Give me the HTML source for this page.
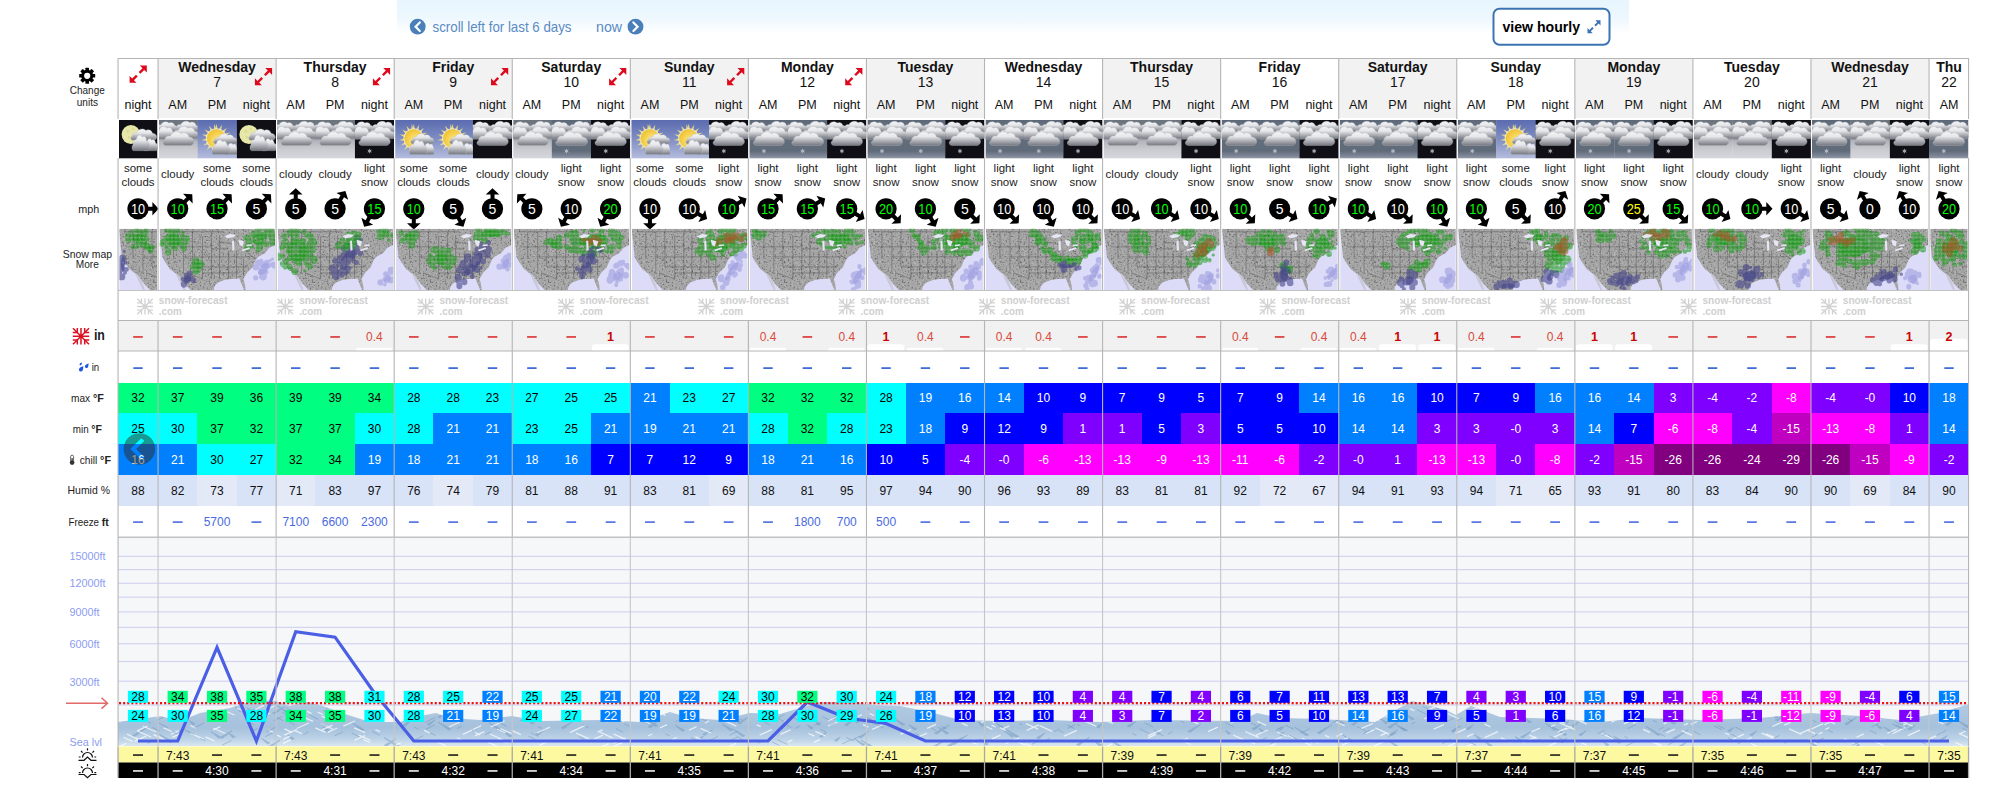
<!DOCTYPE html><html><head><meta charset="utf-8"><title>Snow forecast</title><style>html,body{margin:0;padding:0;background:#fff;}body{width:2000px;height:796px;position:relative;overflow:hidden;font-family:'Liberation Sans', sans-serif;}svg{position:absolute;left:0;top:0;display:block;}</style></head><body><svg width="2000" height="796" viewBox="0 0 2000 796" font-family="'Liberation Sans', sans-serif"><defs><linearGradient id="cg" gradientUnits="userSpaceOnUse" x1="0" y1="0" x2="0" y2="14"><stop offset="0" stop-color="#fafafc"/><stop offset="0.42" stop-color="#e6e7ea"/><stop offset="0.68" stop-color="#b2b4ba"/><stop offset="1" stop-color="#74777f"/></linearGradient><symbol id="cloud" viewBox="0 0 30 14" preserveAspectRatio="none" overflow="visible"><path fill="url(#cg)" stroke="#b9bbc0" stroke-width="0.35" d="M3.5,14 C0.8,14 0,10.5 2.6,9.2 C2.4,6.5 5,4.6 7.5,5.5 C8.8,1.5 14.5,0 17.5,3.2 C19.5,1.6 23.8,2.4 24.6,6.2 C28.4,6.4 30.2,10 28.6,12.3 C28,13.4 27,14 26,14 Z"/></symbol><linearGradient id="bg_cd" x1="0" y1="0" x2="0" y2="1"><stop offset="0" stop-color="#6b737d"/><stop offset="0.42" stop-color="#7c838c"/><stop offset="0.55" stop-color="#b3b6bd"/><stop offset="0.75" stop-color="#c8cacf"/><stop offset="1" stop-color="#d7d8dd"/></linearGradient><linearGradient id="bg_sd" x1="0" y1="0" x2="0" y2="1"><stop offset="0" stop-color="#5b6676"/><stop offset="0.12" stop-color="#64707f"/><stop offset="0.8" stop-color="#606b7a"/><stop offset="0.92" stop-color="#7a8494"/><stop offset="1" stop-color="#949ba7"/></linearGradient><linearGradient id="bg_sc" x1="0" y1="0" x2="0" y2="1"><stop offset="0" stop-color="#5a6bb0"/><stop offset="0.55" stop-color="#8592c6"/><stop offset="1" stop-color="#b5bddd"/></linearGradient><radialGradient id="sun" cx="0.62" cy="0.62" r="0.65"><stop offset="0" stop-color="#fdeb8e"/><stop offset="1" stop-color="#f0c22e"/></radialGradient><symbol id="flake" viewBox="-4 -4 8 8" overflow="visible"><g stroke="#c4c9d3" stroke-width="0.8" fill="none"><path d="M0,-3.2V3.2M-2.8,-1.6L2.8,1.6M-2.8,1.6L2.8,-1.6"/><circle r="1.6"/></g></symbol><symbol id="i_cd" viewBox="0 0 39 38" preserveAspectRatio="none"><rect width="39" height="38" fill="url(#bg_cd)"/><use href="#cloud" x="-4" y="0.5" width="24" height="11"/><use href="#cloud" x="15" y="0" width="27" height="12"/><use href="#cloud" x="-6" y="5" width="24" height="14"/><use href="#cloud" x="12" y="5" width="29" height="13.5"/><use href="#cloud" x="3" y="10" width="33" height="15"/></symbol><symbol id="i_sd" viewBox="0 0 39 38" preserveAspectRatio="none"><rect width="39" height="38" fill="url(#bg_sd)"/><use href="#cloud" x="-4" y="0.5" width="24" height="11"/><use href="#cloud" x="15" y="0" width="27" height="12"/><use href="#cloud" x="-6" y="5" width="24" height="14"/><use href="#cloud" x="12" y="5" width="29" height="13.5"/><use href="#cloud" x="3" y="10" width="33" height="15"/><use href="#flake" x="11.8" y="27.8" width="5.6" height="5.6"/></symbol><symbol id="i_sn" viewBox="0 0 39 38" preserveAspectRatio="none"><rect width="39" height="38" fill="#0f0f15"/><use href="#cloud" x="-4" y="0.5" width="24" height="11"/><use href="#cloud" x="15" y="0" width="27" height="12"/><use href="#cloud" x="-6" y="5" width="24" height="14"/><use href="#cloud" x="12" y="5" width="29" height="13.5"/><use href="#cloud" x="3" y="10" width="33" height="15"/><use href="#flake" x="11.9" y="27.8" width="5.6" height="5.6"/></symbol><symbol id="i_cn" viewBox="0 0 39 38" preserveAspectRatio="none"><rect width="39" height="38" fill="#0f0f15"/><use href="#cloud" x="-4" y="0.5" width="24" height="11"/><use href="#cloud" x="15" y="0" width="27" height="12"/><use href="#cloud" x="-6" y="5" width="24" height="14"/><use href="#cloud" x="12" y="5" width="29" height="13.5"/><use href="#cloud" x="3" y="10" width="33" height="15"/></symbol><symbol id="i_sc" viewBox="0 0 39 38" preserveAspectRatio="none"><rect width="39" height="38" fill="url(#bg_sc)"/><g fill="#f5e486" opacity="0.85"><path d="M18.60,3.70 L17.37,8.98 L19.83,8.98Z"/><path d="M24.07,4.76 L20.95,9.20 L23.23,10.12Z"/><path d="M28.74,7.80 L24.19,10.74 L25.96,12.45Z"/><path d="M31.94,12.36 L26.61,13.39 L27.61,15.63Z"/><path d="M33.19,17.79 L27.87,16.75 L27.96,19.20Z"/><path d="M32.32,23.29 L27.78,20.33 L26.94,22.64Z"/><path d="M29.45,28.07 L26.35,23.62 L24.70,25.45Z"/><path d="M25.00,31.42 L23.79,26.14 L21.58,27.21Z"/><path d="M19.62,32.86 L20.47,27.51 L18.03,27.68Z"/><path d="M14.09,32.19 L16.89,27.54 L14.55,26.78Z"/><path d="M9.22,29.48 L13.55,26.23 L11.67,24.65Z"/><path d="M5.71,25.15 L10.95,23.76 L9.80,21.59Z"/><path d="M4.08,19.83 L9.46,20.49 L9.20,18.05Z"/><path d="M4.57,14.28 L9.30,16.91 L9.98,14.55Z"/><path d="M7.10,9.31 L10.50,13.53 L12.01,11.60Z"/><path d="M11.30,5.66 L12.88,10.84 L15.00,9.62Z"/><path d="M16.57,3.84 L16.09,9.24 L18.52,8.90Z"/></g><circle cx="18.6" cy="18.3" r="10.3" fill="#fff8d0" opacity="0.75"/><circle cx="18.6" cy="18.3" r="9.3" fill="url(#sun)"/><use href="#cloud" x="15" y="12.5" width="25" height="11"/><use href="#cloud" x="26" y="21.5" width="15" height="12.5"/><use href="#cloud" x="13.5" y="18" width="19" height="16"/></symbol><symbol id="i_mc" viewBox="0 0 39 38" preserveAspectRatio="none"><rect width="39" height="38" fill="#0f0f15"/><circle cx="12.1" cy="14.3" r="9.4" fill="#e7e7a9"/><circle cx="9" cy="11" r="1.5" fill="#d9d99a"/><circle cx="14" cy="9" r="1.1" fill="#d9d99a"/><circle cx="10" cy="17" r="1.2" fill="#d9d99a"/><use href="#cloud" x="11" y="7.5" width="28" height="12.5"/><use href="#cloud" x="24" y="17" width="16" height="13.2"/><use href="#cloud" x="12.5" y="13" width="19" height="17.2"/></symbol><symbol id="warrow" viewBox="-22 -22 44 44" overflow="visible"><path d="M-2,0 V-14.4 H-6.8 L0,-20.6 L6.8,-14.4 H2 V0Z" fill="#000"/></symbol><symbol id="exp" viewBox="0 0 18 18" overflow="visible"><g fill="#dd0a1e"><path d="M18,0 L18,7.2 L15.3,4.5 L11.3,8.5 L9.5,6.7 L13.5,2.7 L10.8,0Z"/><path d="M0,18 L0,10.8 L2.7,13.5 L6.7,9.5 L8.5,11.3 L4.5,15.3 L7.2,18Z"/></g></symbol><symbol id="expb" viewBox="0 0 18 18" overflow="visible"><g fill="#3a73b3"><path d="M18,0 L18,7.2 L15.3,4.5 L11.3,8.5 L9.5,6.7 L13.5,2.7 L10.8,0Z"/><path d="M0,18 L0,10.8 L2.7,13.5 L6.7,9.5 L8.5,11.3 L4.5,15.3 L7.2,18Z"/></g></symbol><symbol id="bigflake" viewBox="-8.5 -8.5 17 17" overflow="visible"><g fill="none" stroke-width="1.4"><path d="M0,-8.2V8.2M-8.2,0H8.2M-8,-8L8,8M-8,8L8,-8"/><path d="M-8.2,-3.7H-3.7V-8.2M8.2,-3.7H3.7V-8.2M-8.2,3.7H-3.7V8.2M8.2,3.7H3.7V8.2"/></g></symbol></defs><linearGradient id="topg" x1="0" y1="0" x2="0" y2="1"><stop offset="0" stop-color="#e6f5fe"/><stop offset="0.55" stop-color="#eef8fe"/><stop offset="1" stop-color="#ffffff"/></linearGradient><rect x="397" y="0" width="1232" height="34" fill="url(#topg)"/><circle cx="417.7" cy="26.7" r="7.9" fill="#4a7fba"/><path d="M419.8,22.4 L415.6,26.7 L419.8,31" fill="none" stroke="#fff" stroke-width="2.2" stroke-linecap="round"/><text x="432.50" y="32.00" font-size="14.5" fill="#5a8bc2" text-anchor="start" font-weight="normal" textLength="139" lengthAdjust="spacingAndGlyphs">scroll left for last 6 days</text><text x="596.00" y="32.00" font-size="14.5" fill="#5a8bc2" text-anchor="start" font-weight="normal" textLength="26" lengthAdjust="spacingAndGlyphs">now</text><circle cx="635.5" cy="26.7" r="7.9" fill="#4a7fba"/><path d="M633.4,22.4 L637.6,26.7 L633.4,31" fill="none" stroke="#fff" stroke-width="2.2" stroke-linecap="round"/><rect x="1493.5" y="8.7" width="116" height="36" rx="6" fill="#fff" stroke="#3b74b2" stroke-width="2"/><text x="1502.50" y="32.40" font-size="15" fill="#000" text-anchor="start" font-weight="bold" textLength="77.5" lengthAdjust="spacingAndGlyphs">view hourly</text><use href="#expb" x="1587.5" y="20" width="13" height="13.5"/><rect x="118.00" y="58.00" width="40.00" height="60.00" fill="#ffffff" /><rect x="158.00" y="58.00" width="118.07" height="60.00" fill="#f2f2f2" /><rect x="276.07" y="58.00" width="118.07" height="60.00" fill="#ffffff" /><rect x="394.13" y="58.00" width="118.07" height="60.00" fill="#f2f2f2" /><rect x="512.20" y="58.00" width="118.07" height="60.00" fill="#ffffff" /><rect x="630.27" y="58.00" width="118.07" height="60.00" fill="#f2f2f2" /><rect x="748.33" y="58.00" width="118.07" height="60.00" fill="#ffffff" /><rect x="866.40" y="58.00" width="118.07" height="60.00" fill="#f2f2f2" /><rect x="984.47" y="58.00" width="118.07" height="60.00" fill="#ffffff" /><rect x="1102.53" y="58.00" width="118.07" height="60.00" fill="#f2f2f2" /><rect x="1220.60" y="58.00" width="118.07" height="60.00" fill="#ffffff" /><rect x="1338.67" y="58.00" width="118.07" height="60.00" fill="#f2f2f2" /><rect x="1456.73" y="58.00" width="118.07" height="60.00" fill="#ffffff" /><rect x="1574.80" y="58.00" width="118.07" height="60.00" fill="#f2f2f2" /><rect x="1692.87" y="58.00" width="118.07" height="60.00" fill="#ffffff" /><rect x="1810.93" y="58.00" width="118.07" height="60.00" fill="#f2f2f2" /><rect x="1929.00" y="58.00" width="40.00" height="60.00" fill="#ffffff" /><text x="217.03" y="72.20" font-size="14" fill="#111" text-anchor="middle" font-weight="bold" >Wednesday</text><text x="217.03" y="87.40" font-size="14" fill="#111" text-anchor="middle" font-weight="normal" >7</text><use href="#exp" x="254.9" y="68" width="17.2" height="17.2"/><text x="335.10" y="72.20" font-size="14" fill="#111" text-anchor="middle" font-weight="bold" >Thursday</text><text x="335.10" y="87.40" font-size="14" fill="#111" text-anchor="middle" font-weight="normal" >8</text><use href="#exp" x="372.9" y="68" width="17.2" height="17.2"/><text x="453.17" y="72.20" font-size="14" fill="#111" text-anchor="middle" font-weight="bold" >Friday</text><text x="453.17" y="87.40" font-size="14" fill="#111" text-anchor="middle" font-weight="normal" >9</text><use href="#exp" x="491.0" y="68" width="17.2" height="17.2"/><text x="571.23" y="72.20" font-size="14" fill="#111" text-anchor="middle" font-weight="bold" >Saturday</text><text x="571.23" y="87.40" font-size="14" fill="#111" text-anchor="middle" font-weight="normal" >10</text><use href="#exp" x="609.1" y="68" width="17.2" height="17.2"/><text x="689.30" y="72.20" font-size="14" fill="#111" text-anchor="middle" font-weight="bold" >Sunday</text><text x="689.30" y="87.40" font-size="14" fill="#111" text-anchor="middle" font-weight="normal" >11</text><use href="#exp" x="727.1" y="68" width="17.2" height="17.2"/><text x="807.37" y="72.20" font-size="14" fill="#111" text-anchor="middle" font-weight="bold" >Monday</text><text x="807.37" y="87.40" font-size="14" fill="#111" text-anchor="middle" font-weight="normal" >12</text><use href="#exp" x="845.2" y="68" width="17.2" height="17.2"/><text x="925.43" y="72.20" font-size="14" fill="#111" text-anchor="middle" font-weight="bold" >Tuesday</text><text x="925.43" y="87.40" font-size="14" fill="#111" text-anchor="middle" font-weight="normal" >13</text><text x="1043.50" y="72.20" font-size="14" fill="#111" text-anchor="middle" font-weight="bold" >Wednesday</text><text x="1043.50" y="87.40" font-size="14" fill="#111" text-anchor="middle" font-weight="normal" >14</text><text x="1161.57" y="72.20" font-size="14" fill="#111" text-anchor="middle" font-weight="bold" >Thursday</text><text x="1161.57" y="87.40" font-size="14" fill="#111" text-anchor="middle" font-weight="normal" >15</text><text x="1279.63" y="72.20" font-size="14" fill="#111" text-anchor="middle" font-weight="bold" >Friday</text><text x="1279.63" y="87.40" font-size="14" fill="#111" text-anchor="middle" font-weight="normal" >16</text><text x="1397.70" y="72.20" font-size="14" fill="#111" text-anchor="middle" font-weight="bold" >Saturday</text><text x="1397.70" y="87.40" font-size="14" fill="#111" text-anchor="middle" font-weight="normal" >17</text><text x="1515.77" y="72.20" font-size="14" fill="#111" text-anchor="middle" font-weight="bold" >Sunday</text><text x="1515.77" y="87.40" font-size="14" fill="#111" text-anchor="middle" font-weight="normal" >18</text><text x="1633.83" y="72.20" font-size="14" fill="#111" text-anchor="middle" font-weight="bold" >Monday</text><text x="1633.83" y="87.40" font-size="14" fill="#111" text-anchor="middle" font-weight="normal" >19</text><text x="1751.90" y="72.20" font-size="14" fill="#111" text-anchor="middle" font-weight="bold" >Tuesday</text><text x="1751.90" y="87.40" font-size="14" fill="#111" text-anchor="middle" font-weight="normal" >20</text><text x="1869.97" y="72.20" font-size="14" fill="#111" text-anchor="middle" font-weight="bold" >Wednesday</text><text x="1869.97" y="87.40" font-size="14" fill="#111" text-anchor="middle" font-weight="normal" >21</text><text x="1949.00" y="72.20" font-size="14" fill="#111" text-anchor="middle" font-weight="bold" >Thu</text><text x="1949.00" y="87.40" font-size="14" fill="#111" text-anchor="middle" font-weight="normal" >22</text><use href="#exp" x="129.6" y="65.6" width="17.2" height="17.2"/><text x="138.00" y="109.10" font-size="12.5" fill="#111" text-anchor="middle" font-weight="normal" >night</text><text x="177.68" y="109.10" font-size="12.5" fill="#111" text-anchor="middle" font-weight="normal" >AM</text><text x="217.03" y="109.10" font-size="12.5" fill="#111" text-anchor="middle" font-weight="normal" >PM</text><text x="256.39" y="109.10" font-size="12.5" fill="#111" text-anchor="middle" font-weight="normal" >night</text><text x="295.74" y="109.10" font-size="12.5" fill="#111" text-anchor="middle" font-weight="normal" >AM</text><text x="335.10" y="109.10" font-size="12.5" fill="#111" text-anchor="middle" font-weight="normal" >PM</text><text x="374.46" y="109.10" font-size="12.5" fill="#111" text-anchor="middle" font-weight="normal" >night</text><text x="413.81" y="109.10" font-size="12.5" fill="#111" text-anchor="middle" font-weight="normal" >AM</text><text x="453.17" y="109.10" font-size="12.5" fill="#111" text-anchor="middle" font-weight="normal" >PM</text><text x="492.52" y="109.10" font-size="12.5" fill="#111" text-anchor="middle" font-weight="normal" >night</text><text x="531.88" y="109.10" font-size="12.5" fill="#111" text-anchor="middle" font-weight="normal" >AM</text><text x="571.23" y="109.10" font-size="12.5" fill="#111" text-anchor="middle" font-weight="normal" >PM</text><text x="610.59" y="109.10" font-size="12.5" fill="#111" text-anchor="middle" font-weight="normal" >night</text><text x="649.94" y="109.10" font-size="12.5" fill="#111" text-anchor="middle" font-weight="normal" >AM</text><text x="689.30" y="109.10" font-size="12.5" fill="#111" text-anchor="middle" font-weight="normal" >PM</text><text x="728.66" y="109.10" font-size="12.5" fill="#111" text-anchor="middle" font-weight="normal" >night</text><text x="768.01" y="109.10" font-size="12.5" fill="#111" text-anchor="middle" font-weight="normal" >AM</text><text x="807.37" y="109.10" font-size="12.5" fill="#111" text-anchor="middle" font-weight="normal" >PM</text><text x="846.72" y="109.10" font-size="12.5" fill="#111" text-anchor="middle" font-weight="normal" >night</text><text x="886.08" y="109.10" font-size="12.5" fill="#111" text-anchor="middle" font-weight="normal" >AM</text><text x="925.43" y="109.10" font-size="12.5" fill="#111" text-anchor="middle" font-weight="normal" >PM</text><text x="964.79" y="109.10" font-size="12.5" fill="#111" text-anchor="middle" font-weight="normal" >night</text><text x="1004.14" y="109.10" font-size="12.5" fill="#111" text-anchor="middle" font-weight="normal" >AM</text><text x="1043.50" y="109.10" font-size="12.5" fill="#111" text-anchor="middle" font-weight="normal" >PM</text><text x="1082.86" y="109.10" font-size="12.5" fill="#111" text-anchor="middle" font-weight="normal" >night</text><text x="1122.21" y="109.10" font-size="12.5" fill="#111" text-anchor="middle" font-weight="normal" >AM</text><text x="1161.57" y="109.10" font-size="12.5" fill="#111" text-anchor="middle" font-weight="normal" >PM</text><text x="1200.92" y="109.10" font-size="12.5" fill="#111" text-anchor="middle" font-weight="normal" >night</text><text x="1240.28" y="109.10" font-size="12.5" fill="#111" text-anchor="middle" font-weight="normal" >AM</text><text x="1279.63" y="109.10" font-size="12.5" fill="#111" text-anchor="middle" font-weight="normal" >PM</text><text x="1318.99" y="109.10" font-size="12.5" fill="#111" text-anchor="middle" font-weight="normal" >night</text><text x="1358.34" y="109.10" font-size="12.5" fill="#111" text-anchor="middle" font-weight="normal" >AM</text><text x="1397.70" y="109.10" font-size="12.5" fill="#111" text-anchor="middle" font-weight="normal" >PM</text><text x="1437.06" y="109.10" font-size="12.5" fill="#111" text-anchor="middle" font-weight="normal" >night</text><text x="1476.41" y="109.10" font-size="12.5" fill="#111" text-anchor="middle" font-weight="normal" >AM</text><text x="1515.77" y="109.10" font-size="12.5" fill="#111" text-anchor="middle" font-weight="normal" >PM</text><text x="1555.12" y="109.10" font-size="12.5" fill="#111" text-anchor="middle" font-weight="normal" >night</text><text x="1594.48" y="109.10" font-size="12.5" fill="#111" text-anchor="middle" font-weight="normal" >AM</text><text x="1633.83" y="109.10" font-size="12.5" fill="#111" text-anchor="middle" font-weight="normal" >PM</text><text x="1673.19" y="109.10" font-size="12.5" fill="#111" text-anchor="middle" font-weight="normal" >night</text><text x="1712.54" y="109.10" font-size="12.5" fill="#111" text-anchor="middle" font-weight="normal" >AM</text><text x="1751.90" y="109.10" font-size="12.5" fill="#111" text-anchor="middle" font-weight="normal" >PM</text><text x="1791.26" y="109.10" font-size="12.5" fill="#111" text-anchor="middle" font-weight="normal" >night</text><text x="1830.61" y="109.10" font-size="12.5" fill="#111" text-anchor="middle" font-weight="normal" >AM</text><text x="1869.97" y="109.10" font-size="12.5" fill="#111" text-anchor="middle" font-weight="normal" >PM</text><text x="1909.32" y="109.10" font-size="12.5" fill="#111" text-anchor="middle" font-weight="normal" >night</text><text x="1949.00" y="109.10" font-size="12.5" fill="#111" text-anchor="middle" font-weight="normal" >AM</text><rect x="118" y="118" width="1851" height="2" fill="#fff"/><use href="#i_mc" x="119.00" y="120" width="38.50" height="38.6"/><use href="#i_cd" x="159.00" y="120" width="38.96" height="38.6"/><use href="#i_sc" x="197.36" y="120" width="39.96" height="38.6"/><use href="#i_mc" x="236.71" y="120" width="39.36" height="38.6"/><use href="#i_cd" x="277.07" y="120" width="38.96" height="38.6"/><use href="#i_cd" x="315.42" y="120" width="39.96" height="38.6"/><use href="#i_sn" x="354.78" y="120" width="39.36" height="38.6"/><use href="#i_sc" x="395.13" y="120" width="38.96" height="38.6"/><use href="#i_sc" x="433.49" y="120" width="39.96" height="38.6"/><use href="#i_cn" x="472.84" y="120" width="39.36" height="38.6"/><use href="#i_cd" x="513.20" y="120" width="38.96" height="38.6"/><use href="#i_sd" x="551.56" y="120" width="39.96" height="38.6"/><use href="#i_sn" x="590.91" y="120" width="39.36" height="38.6"/><use href="#i_sc" x="631.27" y="120" width="38.96" height="38.6"/><use href="#i_sc" x="669.62" y="120" width="39.96" height="38.6"/><use href="#i_sn" x="708.98" y="120" width="39.36" height="38.6"/><use href="#i_sd" x="749.33" y="120" width="38.96" height="38.6"/><use href="#i_sd" x="787.69" y="120" width="39.96" height="38.6"/><use href="#i_sn" x="827.04" y="120" width="39.36" height="38.6"/><use href="#i_sd" x="867.40" y="120" width="38.96" height="38.6"/><use href="#i_sd" x="905.76" y="120" width="39.96" height="38.6"/><use href="#i_sn" x="945.11" y="120" width="39.36" height="38.6"/><use href="#i_sd" x="985.47" y="120" width="38.96" height="38.6"/><use href="#i_sd" x="1023.82" y="120" width="39.96" height="38.6"/><use href="#i_sn" x="1063.18" y="120" width="39.36" height="38.6"/><use href="#i_cd" x="1103.53" y="120" width="38.96" height="38.6"/><use href="#i_cd" x="1141.89" y="120" width="39.96" height="38.6"/><use href="#i_sn" x="1181.24" y="120" width="39.36" height="38.6"/><use href="#i_sd" x="1221.60" y="120" width="38.96" height="38.6"/><use href="#i_sd" x="1259.96" y="120" width="39.96" height="38.6"/><use href="#i_sn" x="1299.31" y="120" width="39.36" height="38.6"/><use href="#i_sd" x="1339.67" y="120" width="38.96" height="38.6"/><use href="#i_sd" x="1378.02" y="120" width="39.96" height="38.6"/><use href="#i_sn" x="1417.38" y="120" width="39.36" height="38.6"/><use href="#i_sd" x="1457.73" y="120" width="38.96" height="38.6"/><use href="#i_sc" x="1496.09" y="120" width="39.96" height="38.6"/><use href="#i_sn" x="1535.44" y="120" width="39.36" height="38.6"/><use href="#i_sd" x="1575.80" y="120" width="38.96" height="38.6"/><use href="#i_sd" x="1614.16" y="120" width="39.96" height="38.6"/><use href="#i_sn" x="1653.51" y="120" width="39.36" height="38.6"/><use href="#i_cd" x="1693.87" y="120" width="38.96" height="38.6"/><use href="#i_cd" x="1732.22" y="120" width="39.96" height="38.6"/><use href="#i_sn" x="1771.58" y="120" width="39.36" height="38.6"/><use href="#i_sd" x="1811.93" y="120" width="38.96" height="38.6"/><use href="#i_cd" x="1850.29" y="120" width="39.96" height="38.6"/><use href="#i_sn" x="1889.64" y="120" width="39.36" height="38.6"/><use href="#i_sd" x="1929.00" y="120" width="39.50" height="38.6"/><text x="138.00" y="171.80" font-size="11.5" fill="#222" text-anchor="middle" font-weight="normal" >some</text><text x="138.00" y="185.50" font-size="11.5" fill="#222" text-anchor="middle" font-weight="normal" >clouds</text><text x="177.68" y="177.90" font-size="11.5" fill="#222" text-anchor="middle" font-weight="normal" >cloudy</text><text x="217.03" y="171.80" font-size="11.5" fill="#222" text-anchor="middle" font-weight="normal" >some</text><text x="217.03" y="185.50" font-size="11.5" fill="#222" text-anchor="middle" font-weight="normal" >clouds</text><text x="256.39" y="171.80" font-size="11.5" fill="#222" text-anchor="middle" font-weight="normal" >some</text><text x="256.39" y="185.50" font-size="11.5" fill="#222" text-anchor="middle" font-weight="normal" >clouds</text><text x="295.74" y="177.90" font-size="11.5" fill="#222" text-anchor="middle" font-weight="normal" >cloudy</text><text x="335.10" y="177.90" font-size="11.5" fill="#222" text-anchor="middle" font-weight="normal" >cloudy</text><text x="374.46" y="171.80" font-size="11.5" fill="#222" text-anchor="middle" font-weight="normal" >light</text><text x="374.46" y="185.50" font-size="11.5" fill="#222" text-anchor="middle" font-weight="normal" >snow</text><text x="413.81" y="171.80" font-size="11.5" fill="#222" text-anchor="middle" font-weight="normal" >some</text><text x="413.81" y="185.50" font-size="11.5" fill="#222" text-anchor="middle" font-weight="normal" >clouds</text><text x="453.17" y="171.80" font-size="11.5" fill="#222" text-anchor="middle" font-weight="normal" >some</text><text x="453.17" y="185.50" font-size="11.5" fill="#222" text-anchor="middle" font-weight="normal" >clouds</text><text x="492.52" y="177.90" font-size="11.5" fill="#222" text-anchor="middle" font-weight="normal" >cloudy</text><text x="531.88" y="177.90" font-size="11.5" fill="#222" text-anchor="middle" font-weight="normal" >cloudy</text><text x="571.23" y="171.80" font-size="11.5" fill="#222" text-anchor="middle" font-weight="normal" >light</text><text x="571.23" y="185.50" font-size="11.5" fill="#222" text-anchor="middle" font-weight="normal" >snow</text><text x="610.59" y="171.80" font-size="11.5" fill="#222" text-anchor="middle" font-weight="normal" >light</text><text x="610.59" y="185.50" font-size="11.5" fill="#222" text-anchor="middle" font-weight="normal" >snow</text><text x="649.94" y="171.80" font-size="11.5" fill="#222" text-anchor="middle" font-weight="normal" >some</text><text x="649.94" y="185.50" font-size="11.5" fill="#222" text-anchor="middle" font-weight="normal" >clouds</text><text x="689.30" y="171.80" font-size="11.5" fill="#222" text-anchor="middle" font-weight="normal" >some</text><text x="689.30" y="185.50" font-size="11.5" fill="#222" text-anchor="middle" font-weight="normal" >clouds</text><text x="728.66" y="171.80" font-size="11.5" fill="#222" text-anchor="middle" font-weight="normal" >light</text><text x="728.66" y="185.50" font-size="11.5" fill="#222" text-anchor="middle" font-weight="normal" >snow</text><text x="768.01" y="171.80" font-size="11.5" fill="#222" text-anchor="middle" font-weight="normal" >light</text><text x="768.01" y="185.50" font-size="11.5" fill="#222" text-anchor="middle" font-weight="normal" >snow</text><text x="807.37" y="171.80" font-size="11.5" fill="#222" text-anchor="middle" font-weight="normal" >light</text><text x="807.37" y="185.50" font-size="11.5" fill="#222" text-anchor="middle" font-weight="normal" >snow</text><text x="846.72" y="171.80" font-size="11.5" fill="#222" text-anchor="middle" font-weight="normal" >light</text><text x="846.72" y="185.50" font-size="11.5" fill="#222" text-anchor="middle" font-weight="normal" >snow</text><text x="886.08" y="171.80" font-size="11.5" fill="#222" text-anchor="middle" font-weight="normal" >light</text><text x="886.08" y="185.50" font-size="11.5" fill="#222" text-anchor="middle" font-weight="normal" >snow</text><text x="925.43" y="171.80" font-size="11.5" fill="#222" text-anchor="middle" font-weight="normal" >light</text><text x="925.43" y="185.50" font-size="11.5" fill="#222" text-anchor="middle" font-weight="normal" >snow</text><text x="964.79" y="171.80" font-size="11.5" fill="#222" text-anchor="middle" font-weight="normal" >light</text><text x="964.79" y="185.50" font-size="11.5" fill="#222" text-anchor="middle" font-weight="normal" >snow</text><text x="1004.14" y="171.80" font-size="11.5" fill="#222" text-anchor="middle" font-weight="normal" >light</text><text x="1004.14" y="185.50" font-size="11.5" fill="#222" text-anchor="middle" font-weight="normal" >snow</text><text x="1043.50" y="171.80" font-size="11.5" fill="#222" text-anchor="middle" font-weight="normal" >light</text><text x="1043.50" y="185.50" font-size="11.5" fill="#222" text-anchor="middle" font-weight="normal" >snow</text><text x="1082.86" y="171.80" font-size="11.5" fill="#222" text-anchor="middle" font-weight="normal" >light</text><text x="1082.86" y="185.50" font-size="11.5" fill="#222" text-anchor="middle" font-weight="normal" >snow</text><text x="1122.21" y="177.90" font-size="11.5" fill="#222" text-anchor="middle" font-weight="normal" >cloudy</text><text x="1161.57" y="177.90" font-size="11.5" fill="#222" text-anchor="middle" font-weight="normal" >cloudy</text><text x="1200.92" y="171.80" font-size="11.5" fill="#222" text-anchor="middle" font-weight="normal" >light</text><text x="1200.92" y="185.50" font-size="11.5" fill="#222" text-anchor="middle" font-weight="normal" >snow</text><text x="1240.28" y="171.80" font-size="11.5" fill="#222" text-anchor="middle" font-weight="normal" >light</text><text x="1240.28" y="185.50" font-size="11.5" fill="#222" text-anchor="middle" font-weight="normal" >snow</text><text x="1279.63" y="171.80" font-size="11.5" fill="#222" text-anchor="middle" font-weight="normal" >light</text><text x="1279.63" y="185.50" font-size="11.5" fill="#222" text-anchor="middle" font-weight="normal" >snow</text><text x="1318.99" y="171.80" font-size="11.5" fill="#222" text-anchor="middle" font-weight="normal" >light</text><text x="1318.99" y="185.50" font-size="11.5" fill="#222" text-anchor="middle" font-weight="normal" >snow</text><text x="1358.34" y="171.80" font-size="11.5" fill="#222" text-anchor="middle" font-weight="normal" >light</text><text x="1358.34" y="185.50" font-size="11.5" fill="#222" text-anchor="middle" font-weight="normal" >snow</text><text x="1397.70" y="171.80" font-size="11.5" fill="#222" text-anchor="middle" font-weight="normal" >light</text><text x="1397.70" y="185.50" font-size="11.5" fill="#222" text-anchor="middle" font-weight="normal" >snow</text><text x="1437.06" y="171.80" font-size="11.5" fill="#222" text-anchor="middle" font-weight="normal" >light</text><text x="1437.06" y="185.50" font-size="11.5" fill="#222" text-anchor="middle" font-weight="normal" >snow</text><text x="1476.41" y="171.80" font-size="11.5" fill="#222" text-anchor="middle" font-weight="normal" >light</text><text x="1476.41" y="185.50" font-size="11.5" fill="#222" text-anchor="middle" font-weight="normal" >snow</text><text x="1515.77" y="171.80" font-size="11.5" fill="#222" text-anchor="middle" font-weight="normal" >some</text><text x="1515.77" y="185.50" font-size="11.5" fill="#222" text-anchor="middle" font-weight="normal" >clouds</text><text x="1555.12" y="171.80" font-size="11.5" fill="#222" text-anchor="middle" font-weight="normal" >light</text><text x="1555.12" y="185.50" font-size="11.5" fill="#222" text-anchor="middle" font-weight="normal" >snow</text><text x="1594.48" y="171.80" font-size="11.5" fill="#222" text-anchor="middle" font-weight="normal" >light</text><text x="1594.48" y="185.50" font-size="11.5" fill="#222" text-anchor="middle" font-weight="normal" >snow</text><text x="1633.83" y="171.80" font-size="11.5" fill="#222" text-anchor="middle" font-weight="normal" >light</text><text x="1633.83" y="185.50" font-size="11.5" fill="#222" text-anchor="middle" font-weight="normal" >snow</text><text x="1673.19" y="171.80" font-size="11.5" fill="#222" text-anchor="middle" font-weight="normal" >light</text><text x="1673.19" y="185.50" font-size="11.5" fill="#222" text-anchor="middle" font-weight="normal" >snow</text><text x="1712.54" y="177.90" font-size="11.5" fill="#222" text-anchor="middle" font-weight="normal" >cloudy</text><text x="1751.90" y="177.90" font-size="11.5" fill="#222" text-anchor="middle" font-weight="normal" >cloudy</text><text x="1791.26" y="171.80" font-size="11.5" fill="#222" text-anchor="middle" font-weight="normal" >light</text><text x="1791.26" y="185.50" font-size="11.5" fill="#222" text-anchor="middle" font-weight="normal" >snow</text><text x="1830.61" y="171.80" font-size="11.5" fill="#222" text-anchor="middle" font-weight="normal" >light</text><text x="1830.61" y="185.50" font-size="11.5" fill="#222" text-anchor="middle" font-weight="normal" >snow</text><text x="1869.97" y="177.90" font-size="11.5" fill="#222" text-anchor="middle" font-weight="normal" >cloudy</text><text x="1909.32" y="171.80" font-size="11.5" fill="#222" text-anchor="middle" font-weight="normal" >light</text><text x="1909.32" y="185.50" font-size="11.5" fill="#222" text-anchor="middle" font-weight="normal" >snow</text><text x="1949.00" y="171.80" font-size="11.5" fill="#222" text-anchor="middle" font-weight="normal" >light</text><text x="1949.00" y="185.50" font-size="11.5" fill="#222" text-anchor="middle" font-weight="normal" >snow</text><use href="#warrow" x="116.00" y="186.80" width="44" height="44" transform="rotate(90 138.00 208.80)"/><circle cx="138.00" cy="208.80" r="10.6" fill="#000"/><text x="138.00" y="213.80" font-size="14" fill="#ffffff" text-anchor="middle" font-weight="normal" textLength="14.2" lengthAdjust="spacingAndGlyphs">10</text><use href="#warrow" x="155.68" y="186.80" width="44" height="44" transform="rotate(45 177.68 208.80)"/><circle cx="177.68" cy="208.80" r="10.6" fill="#000"/><text x="177.68" y="213.80" font-size="14" fill="#00ff00" text-anchor="middle" font-weight="normal" textLength="14.2" lengthAdjust="spacingAndGlyphs">10</text><use href="#warrow" x="195.03" y="186.80" width="44" height="44" transform="rotate(45 217.03 208.80)"/><circle cx="217.03" cy="208.80" r="10.6" fill="#000"/><text x="217.03" y="213.80" font-size="14" fill="#00ff00" text-anchor="middle" font-weight="normal" textLength="14.2" lengthAdjust="spacingAndGlyphs">15</text><use href="#warrow" x="234.39" y="186.80" width="44" height="44" transform="rotate(45 256.39 208.80)"/><circle cx="256.39" cy="208.80" r="10.6" fill="#000"/><text x="256.39" y="213.80" font-size="14" fill="#ffffff" text-anchor="middle" font-weight="normal" >5</text><use href="#warrow" x="273.74" y="186.80" width="44" height="44" transform="rotate(0 295.74 208.80)"/><circle cx="295.74" cy="208.80" r="10.6" fill="#000"/><text x="295.74" y="213.80" font-size="14" fill="#ffffff" text-anchor="middle" font-weight="normal" >5</text><use href="#warrow" x="313.10" y="186.80" width="44" height="44" transform="rotate(30 335.10 208.80)"/><circle cx="335.10" cy="208.80" r="10.6" fill="#000"/><text x="335.10" y="213.80" font-size="14" fill="#ffffff" text-anchor="middle" font-weight="normal" >5</text><use href="#warrow" x="352.46" y="186.80" width="44" height="44" transform="rotate(210 374.46 208.80)"/><circle cx="374.46" cy="208.80" r="10.6" fill="#000"/><text x="374.46" y="213.80" font-size="14" fill="#00ff00" text-anchor="middle" font-weight="normal" textLength="14.2" lengthAdjust="spacingAndGlyphs">15</text><use href="#warrow" x="391.81" y="186.80" width="44" height="44" transform="rotate(180 413.81 208.80)"/><circle cx="413.81" cy="208.80" r="10.6" fill="#000"/><text x="413.81" y="213.80" font-size="14" fill="#00ff00" text-anchor="middle" font-weight="normal" textLength="14.2" lengthAdjust="spacingAndGlyphs">10</text><use href="#warrow" x="431.17" y="186.80" width="44" height="44" transform="rotate(150 453.17 208.80)"/><circle cx="453.17" cy="208.80" r="10.6" fill="#000"/><text x="453.17" y="213.80" font-size="14" fill="#ffffff" text-anchor="middle" font-weight="normal" >5</text><use href="#warrow" x="470.52" y="186.80" width="44" height="44" transform="rotate(0 492.52 208.80)"/><circle cx="492.52" cy="208.80" r="10.6" fill="#000"/><text x="492.52" y="213.80" font-size="14" fill="#ffffff" text-anchor="middle" font-weight="normal" >5</text><use href="#warrow" x="509.88" y="186.80" width="44" height="44" transform="rotate(315 531.88 208.80)"/><circle cx="531.88" cy="208.80" r="10.6" fill="#000"/><text x="531.88" y="213.80" font-size="14" fill="#ffffff" text-anchor="middle" font-weight="normal" >5</text><use href="#warrow" x="549.23" y="186.80" width="44" height="44" transform="rotate(210 571.23 208.80)"/><circle cx="571.23" cy="208.80" r="10.6" fill="#000"/><text x="571.23" y="213.80" font-size="14" fill="#ffffff" text-anchor="middle" font-weight="normal" textLength="14.2" lengthAdjust="spacingAndGlyphs">10</text><use href="#warrow" x="588.59" y="186.80" width="44" height="44" transform="rotate(210 610.59 208.80)"/><circle cx="610.59" cy="208.80" r="10.6" fill="#000"/><text x="610.59" y="213.80" font-size="14" fill="#00ff00" text-anchor="middle" font-weight="normal" textLength="14.2" lengthAdjust="spacingAndGlyphs">20</text><use href="#warrow" x="627.94" y="186.80" width="44" height="44" transform="rotate(180 649.94 208.80)"/><circle cx="649.94" cy="208.80" r="10.6" fill="#000"/><text x="649.94" y="213.80" font-size="14" fill="#ffffff" text-anchor="middle" font-weight="normal" textLength="14.2" lengthAdjust="spacingAndGlyphs">10</text><use href="#warrow" x="667.30" y="186.80" width="44" height="44" transform="rotate(120 689.30 208.80)"/><circle cx="689.30" cy="208.80" r="10.6" fill="#000"/><text x="689.30" y="213.80" font-size="14" fill="#ffffff" text-anchor="middle" font-weight="normal" textLength="14.2" lengthAdjust="spacingAndGlyphs">10</text><use href="#warrow" x="706.66" y="186.80" width="44" height="44" transform="rotate(60 728.66 208.80)"/><circle cx="728.66" cy="208.80" r="10.6" fill="#000"/><text x="728.66" y="213.80" font-size="14" fill="#00ff00" text-anchor="middle" font-weight="normal" textLength="14.2" lengthAdjust="spacingAndGlyphs">10</text><use href="#warrow" x="746.01" y="186.80" width="44" height="44" transform="rotate(45 768.01 208.80)"/><circle cx="768.01" cy="208.80" r="10.6" fill="#000"/><text x="768.01" y="213.80" font-size="14" fill="#00ff00" text-anchor="middle" font-weight="normal" textLength="14.2" lengthAdjust="spacingAndGlyphs">15</text><use href="#warrow" x="785.37" y="186.80" width="44" height="44" transform="rotate(60 807.37 208.80)"/><circle cx="807.37" cy="208.80" r="10.6" fill="#000"/><text x="807.37" y="213.80" font-size="14" fill="#00ff00" text-anchor="middle" font-weight="normal" textLength="14.2" lengthAdjust="spacingAndGlyphs">15</text><use href="#warrow" x="824.72" y="186.80" width="44" height="44" transform="rotate(120 846.72 208.80)"/><circle cx="846.72" cy="208.80" r="10.6" fill="#000"/><text x="846.72" y="213.80" font-size="14" fill="#00ff00" text-anchor="middle" font-weight="normal" textLength="14.2" lengthAdjust="spacingAndGlyphs">15</text><use href="#warrow" x="864.08" y="186.80" width="44" height="44" transform="rotate(135 886.08 208.80)"/><circle cx="886.08" cy="208.80" r="10.6" fill="#000"/><text x="886.08" y="213.80" font-size="14" fill="#00ff00" text-anchor="middle" font-weight="normal" textLength="14.2" lengthAdjust="spacingAndGlyphs">20</text><use href="#warrow" x="903.43" y="186.80" width="44" height="44" transform="rotate(150 925.43 208.80)"/><circle cx="925.43" cy="208.80" r="10.6" fill="#000"/><text x="925.43" y="213.80" font-size="14" fill="#00ff00" text-anchor="middle" font-weight="normal" textLength="14.2" lengthAdjust="spacingAndGlyphs">10</text><use href="#warrow" x="942.79" y="186.80" width="44" height="44" transform="rotate(135 964.79 208.80)"/><circle cx="964.79" cy="208.80" r="10.6" fill="#000"/><text x="964.79" y="213.80" font-size="14" fill="#ffffff" text-anchor="middle" font-weight="normal" >5</text><use href="#warrow" x="982.14" y="186.80" width="44" height="44" transform="rotate(135 1004.14 208.80)"/><circle cx="1004.14" cy="208.80" r="10.6" fill="#000"/><text x="1004.14" y="213.80" font-size="14" fill="#ffffff" text-anchor="middle" font-weight="normal" textLength="14.2" lengthAdjust="spacingAndGlyphs">10</text><use href="#warrow" x="1021.50" y="186.80" width="44" height="44" transform="rotate(150 1043.50 208.80)"/><circle cx="1043.50" cy="208.80" r="10.6" fill="#000"/><text x="1043.50" y="213.80" font-size="14" fill="#ffffff" text-anchor="middle" font-weight="normal" textLength="14.2" lengthAdjust="spacingAndGlyphs">10</text><use href="#warrow" x="1060.86" y="186.80" width="44" height="44" transform="rotate(135 1082.86 208.80)"/><circle cx="1082.86" cy="208.80" r="10.6" fill="#000"/><text x="1082.86" y="213.80" font-size="14" fill="#ffffff" text-anchor="middle" font-weight="normal" textLength="14.2" lengthAdjust="spacingAndGlyphs">10</text><use href="#warrow" x="1100.21" y="186.80" width="44" height="44" transform="rotate(120 1122.21 208.80)"/><circle cx="1122.21" cy="208.80" r="10.6" fill="#000"/><text x="1122.21" y="213.80" font-size="14" fill="#ffffff" text-anchor="middle" font-weight="normal" textLength="14.2" lengthAdjust="spacingAndGlyphs">10</text><use href="#warrow" x="1139.57" y="186.80" width="44" height="44" transform="rotate(120 1161.57 208.80)"/><circle cx="1161.57" cy="208.80" r="10.6" fill="#000"/><text x="1161.57" y="213.80" font-size="14" fill="#00ff00" text-anchor="middle" font-weight="normal" textLength="14.2" lengthAdjust="spacingAndGlyphs">10</text><use href="#warrow" x="1178.92" y="186.80" width="44" height="44" transform="rotate(120 1200.92 208.80)"/><circle cx="1200.92" cy="208.80" r="10.6" fill="#000"/><text x="1200.92" y="213.80" font-size="14" fill="#ffffff" text-anchor="middle" font-weight="normal" textLength="14.2" lengthAdjust="spacingAndGlyphs">10</text><use href="#warrow" x="1218.28" y="186.80" width="44" height="44" transform="rotate(135 1240.28 208.80)"/><circle cx="1240.28" cy="208.80" r="10.6" fill="#000"/><text x="1240.28" y="213.80" font-size="14" fill="#00ff00" text-anchor="middle" font-weight="normal" textLength="14.2" lengthAdjust="spacingAndGlyphs">10</text><use href="#warrow" x="1257.63" y="186.80" width="44" height="44" transform="rotate(120 1279.63 208.80)"/><circle cx="1279.63" cy="208.80" r="10.6" fill="#000"/><text x="1279.63" y="213.80" font-size="14" fill="#ffffff" text-anchor="middle" font-weight="normal" >5</text><use href="#warrow" x="1296.99" y="186.80" width="44" height="44" transform="rotate(60 1318.99 208.80)"/><circle cx="1318.99" cy="208.80" r="10.6" fill="#000"/><text x="1318.99" y="213.80" font-size="14" fill="#00ff00" text-anchor="middle" font-weight="normal" textLength="14.2" lengthAdjust="spacingAndGlyphs">10</text><use href="#warrow" x="1336.34" y="186.80" width="44" height="44" transform="rotate(120 1358.34 208.80)"/><circle cx="1358.34" cy="208.80" r="10.6" fill="#000"/><text x="1358.34" y="213.80" font-size="14" fill="#00ff00" text-anchor="middle" font-weight="normal" textLength="14.2" lengthAdjust="spacingAndGlyphs">10</text><use href="#warrow" x="1375.70" y="186.80" width="44" height="44" transform="rotate(135 1397.70 208.80)"/><circle cx="1397.70" cy="208.80" r="10.6" fill="#000"/><text x="1397.70" y="213.80" font-size="14" fill="#ffffff" text-anchor="middle" font-weight="normal" textLength="14.2" lengthAdjust="spacingAndGlyphs">10</text><use href="#warrow" x="1415.06" y="186.80" width="44" height="44" transform="rotate(150 1437.06 208.80)"/><circle cx="1437.06" cy="208.80" r="10.6" fill="#000"/><text x="1437.06" y="213.80" font-size="14" fill="#00ff00" text-anchor="middle" font-weight="normal" textLength="14.2" lengthAdjust="spacingAndGlyphs">10</text><use href="#warrow" x="1454.41" y="186.80" width="44" height="44" transform="rotate(150 1476.41 208.80)"/><circle cx="1476.41" cy="208.80" r="10.6" fill="#000"/><text x="1476.41" y="213.80" font-size="14" fill="#00ff00" text-anchor="middle" font-weight="normal" textLength="14.2" lengthAdjust="spacingAndGlyphs">10</text><use href="#warrow" x="1493.77" y="186.80" width="44" height="44" transform="rotate(135 1515.77 208.80)"/><circle cx="1515.77" cy="208.80" r="10.6" fill="#000"/><text x="1515.77" y="213.80" font-size="14" fill="#ffffff" text-anchor="middle" font-weight="normal" >5</text><use href="#warrow" x="1533.12" y="186.80" width="44" height="44" transform="rotate(30 1555.12 208.80)"/><circle cx="1555.12" cy="208.80" r="10.6" fill="#000"/><text x="1555.12" y="213.80" font-size="14" fill="#ffffff" text-anchor="middle" font-weight="normal" textLength="14.2" lengthAdjust="spacingAndGlyphs">10</text><use href="#warrow" x="1572.48" y="186.80" width="44" height="44" transform="rotate(45 1594.48 208.80)"/><circle cx="1594.48" cy="208.80" r="10.6" fill="#000"/><text x="1594.48" y="213.80" font-size="14" fill="#00ff00" text-anchor="middle" font-weight="normal" textLength="14.2" lengthAdjust="spacingAndGlyphs">20</text><use href="#warrow" x="1611.83" y="186.80" width="44" height="44" transform="rotate(135 1633.83 208.80)"/><circle cx="1633.83" cy="208.80" r="10.6" fill="#000"/><text x="1633.83" y="213.80" font-size="14" fill="#ffff00" text-anchor="middle" font-weight="normal" textLength="14.2" lengthAdjust="spacingAndGlyphs">25</text><use href="#warrow" x="1651.19" y="186.80" width="44" height="44" transform="rotate(135 1673.19 208.80)"/><circle cx="1673.19" cy="208.80" r="10.6" fill="#000"/><text x="1673.19" y="213.80" font-size="14" fill="#00ff00" text-anchor="middle" font-weight="normal" textLength="14.2" lengthAdjust="spacingAndGlyphs">15</text><use href="#warrow" x="1690.54" y="186.80" width="44" height="44" transform="rotate(120 1712.54 208.80)"/><circle cx="1712.54" cy="208.80" r="10.6" fill="#000"/><text x="1712.54" y="213.80" font-size="14" fill="#00ff00" text-anchor="middle" font-weight="normal" textLength="14.2" lengthAdjust="spacingAndGlyphs">10</text><use href="#warrow" x="1729.90" y="186.80" width="44" height="44" transform="rotate(90 1751.90 208.80)"/><circle cx="1751.90" cy="208.80" r="10.6" fill="#000"/><text x="1751.90" y="213.80" font-size="14" fill="#00ff00" text-anchor="middle" font-weight="normal" textLength="14.2" lengthAdjust="spacingAndGlyphs">10</text><use href="#warrow" x="1769.26" y="186.80" width="44" height="44" transform="rotate(120 1791.26 208.80)"/><circle cx="1791.26" cy="208.80" r="10.6" fill="#000"/><text x="1791.26" y="213.80" font-size="14" fill="#ffffff" text-anchor="middle" font-weight="normal" textLength="14.2" lengthAdjust="spacingAndGlyphs">10</text><use href="#warrow" x="1808.61" y="186.80" width="44" height="44" transform="rotate(120 1830.61 208.80)"/><circle cx="1830.61" cy="208.80" r="10.6" fill="#000"/><text x="1830.61" y="213.80" font-size="14" fill="#ffffff" text-anchor="middle" font-weight="normal" >5</text><use href="#warrow" x="1847.97" y="186.80" width="44" height="44" transform="rotate(330 1869.97 208.80)"/><circle cx="1869.97" cy="208.80" r="10.6" fill="#000"/><text x="1869.97" y="213.80" font-size="14" fill="#ffffff" text-anchor="middle" font-weight="normal" >0</text><use href="#warrow" x="1887.32" y="186.80" width="44" height="44" transform="rotate(330 1909.32 208.80)"/><circle cx="1909.32" cy="208.80" r="10.6" fill="#000"/><text x="1909.32" y="213.80" font-size="14" fill="#ffffff" text-anchor="middle" font-weight="normal" textLength="14.2" lengthAdjust="spacingAndGlyphs">10</text><use href="#warrow" x="1927.00" y="186.80" width="44" height="44" transform="rotate(330 1949.00 208.80)"/><circle cx="1949.00" cy="208.80" r="10.6" fill="#000"/><text x="1949.00" y="213.80" font-size="14" fill="#00ff00" text-anchor="middle" font-weight="normal" textLength="14.2" lengthAdjust="spacingAndGlyphs">20</text><defs><pattern id="gpat" width="4" height="4" patternUnits="userSpaceOnUse"><rect width="4" height="4" fill="#1ea31e"/><rect x="0" y="0" width="1.3" height="1.3" fill="#7fc07f"/><rect x="2" y="2" width="1.2" height="1.2" fill="#0d7a0d"/><rect x="2.6" y="0.4" width="1" height="1" fill="#b08aa8"/></pattern></defs><defs><filter id="mnoise" x="0" y="0" width="100%" height="100%" filterUnits="userSpaceOnUse"><feTurbulence type="fractalNoise" baseFrequency="0.55" numOctaves="2" seed="4" result="n"/><feColorMatrix in="n" type="matrix" values="0 0 0 0 0  0 0 0 0 0  0 0 0 0 0  3 0 0 0 -1.6"/></filter><filter id="mnoise2" x="0" y="0" width="100%" height="100%" filterUnits="userSpaceOnUse"><feTurbulence type="fractalNoise" baseFrequency="0.5" numOctaves="2" seed="9" result="n"/><feColorMatrix in="n" type="matrix" values="0 0 0 0 1  0 0 0 0 1  0 0 0 0 1  3 0 0 0 -1.7"/></filter></defs><defs><symbol id="usbase" viewBox="0 0 116 61" preserveAspectRatio="none"><rect width="116" height="61" fill="#dcdcf8"/><path d="M0,0 L116,0 L116,16 L110,19 L105,24.5 L100,27 L96.6,30 L93,38.5 L89,42 L86.6,45 L84,50 L85.5,56 L86,61 L84.5,61 L82,55 L80,49.5 L71.6,50 L65,51 L58.5,53.5 L55,57 L54,61 L31,61 L25.3,55 L19.5,47 L10.4,40 L5,32 L3,28.6 L1.5,15 L0,2 Z" fill="#a6a6a6"/><clipPath id="landclip"><path d="M0,0 L116,0 L116,16 L110,19 L105,24.5 L100,27 L96.6,30 L93,38.5 L89,42 L86.6,45 L84,50 L85.5,56 L86,61 L84.5,61 L82,55 L80,49.5 L71.6,50 L65,51 L58.5,53.5 L55,57 L54,61 L31,61 L25.3,55 L19.5,47 L10.4,40 L5,32 L3,28.6 L1.5,15 L0,2 Z"/></clipPath><g clip-path="url(#landclip)"><rect width="116" height="61" fill="#000" filter="url(#mnoise)" opacity="0.42"/><rect width="116" height="61" fill="#fff" filter="url(#mnoise2)" opacity="0.35"/></g><g fill="none" stroke="#333" stroke-width="0.55" opacity="0.6"><path d="M6,3 H64 M14,3 V30 M24,3 V44 M33,3 V38 M43,8 V50 M52,3 V50 M60,6 V50 M69,22 V50 M77,22 V50 M84,30 V47 M7,18 H52 M24,28 H92 M33,38 H88 M43,44 H80 M60,14 H70 M88,24 L96,30 M52,20 H69 M28,44 L43,50"/></g><path d="M16,44 L22,50 L26,61 L24,61 L19,51Z" fill="#c8c8d8"/></symbol><symbol id="lakes" viewBox="0 0 116 61" preserveAspectRatio="none"><g fill="#e6e6f4"><path d="M65,7.5 L70,5.2 L76.5,6 L74,8.5 L68,9.5Z"/><path d="M72.5,12 L74.5,12 L75,21.5 L72.8,22Z"/><path d="M79,11 L84.5,12.5 L83,18 L80,16Z"/><path d="M82,21 L90,18.5 L90.5,20 L83.5,22.5Z"/><path d="M87,16 L92,15.5 L92,17 L87,17.5Z"/></g></symbol></defs><svg x="119" y="228.8" width="38.5" height="61.2" viewBox="0 0 38.5 61" preserveAspectRatio="none" overflow="hidden"><use href="#usbase" width="116" height="61"/><ellipse cx="20" cy="10" rx="6.0" ry="5.0" transform="rotate(0 20 10)" fill="url(#gpat)" opacity="0.62"/><path d="M21.8,15.3a3.1,3.1 0 1 0 6.2,0a3.1,3.1 0 1 0 -6.2,0M14.8,1.8a2.4,2.4 0 1 0 4.8,0a2.4,2.4 0 1 0 -4.8,0M21.0,3.1a1.7,1.7 0 1 0 3.3,0a1.7,1.7 0 1 0 -3.3,0M14.0,10.6a3.5,3.5 0 1 0 6.9,0a3.5,3.5 0 1 0 -6.9,0M24.4,8.1a2.1,2.1 0 1 0 4.3,0a2.1,2.1 0 1 0 -4.3,0M18.7,5.5a1.9,1.9 0 1 0 3.7,0a1.9,1.9 0 1 0 -3.7,0M19.8,15.5a2.8,2.8 0 1 0 5.6,0a2.8,2.8 0 1 0 -5.6,0M21.9,9.0a3.5,3.5 0 1 0 7.0,0a3.5,3.5 0 1 0 -7.0,0M6.1,6.8a3.2,3.2 0 1 0 6.4,0a3.2,3.2 0 1 0 -6.4,0M23.4,16.8a1.8,1.8 0 1 0 3.5,0a1.8,1.8 0 1 0 -3.5,0M24.4,10.2a3.1,3.1 0 1 0 6.2,0a3.1,3.1 0 1 0 -6.2,0M11.9,8.2a3.3,3.3 0 1 0 6.5,0a3.3,3.3 0 1 0 -6.5,0M22.6,7.5a2.4,2.4 0 1 0 4.9,0a2.4,2.4 0 1 0 -4.9,0M10.8,2.8a1.8,1.8 0 1 0 3.5,0a1.8,1.8 0 1 0 -3.5,0M6.1,6.7a2.8,2.8 0 1 0 5.6,0a2.8,2.8 0 1 0 -5.6,0M15.3,1.4a2.6,2.6 0 1 0 5.1,0a2.6,2.6 0 1 0 -5.1,0M15.1,17.4a2.6,2.6 0 1 0 5.2,0a2.6,2.6 0 1 0 -5.2,0M11.6,17.7a2.3,2.3 0 1 0 4.5,0a2.3,2.3 0 1 0 -4.5,0M6.4,10.9a3.2,3.2 0 1 0 6.4,0a3.2,3.2 0 1 0 -6.4,0M25.5,4.9a2.0,2.0 0 1 0 4.1,0a2.0,2.0 0 1 0 -4.1,0M23.6,2.2a3.0,3.0 0 1 0 6.0,0a3.0,3.0 0 1 0 -6.0,0M18.4,2.9a2.5,2.5 0 1 0 5.1,0a2.5,2.5 0 1 0 -5.1,0M13.1,8.1a2.9,2.9 0 1 0 5.8,0a2.9,2.9 0 1 0 -5.8,0M20.1,6.9a3.1,3.1 0 1 0 6.2,0a3.1,3.1 0 1 0 -6.2,0" fill="url(#gpat)" opacity="0.62"/><ellipse cx="30" cy="20" rx="2.5" ry="3.0" transform="rotate(0 30 20)" fill="url(#gpat)" opacity="0.62"/><path d="M27.9,18.0a1.6,1.6 0 1 0 3.2,0a1.6,1.6 0 1 0 -3.2,0M25.9,18.4a2.2,2.2 0 1 0 4.3,0a2.2,2.2 0 1 0 -4.3,0M24.0,16.7a3.1,3.1 0 1 0 6.1,0a3.1,3.1 0 1 0 -6.1,0M25.8,18.6a1.5,1.5 0 1 0 3.1,0a1.5,1.5 0 1 0 -3.1,0M29.1,21.7a2.6,2.6 0 1 0 5.2,0a2.6,2.6 0 1 0 -5.2,0M27.3,17.3a2.3,2.3 0 1 0 4.6,0a2.3,2.3 0 1 0 -4.6,0M29.9,18.5a3.0,3.0 0 1 0 6.0,0a3.0,3.0 0 1 0 -6.0,0M24.5,16.7a2.5,2.5 0 1 0 5.0,0a2.5,2.5 0 1 0 -5.0,0M24.1,18.6a1.8,1.8 0 1 0 3.7,0a1.8,1.8 0 1 0 -3.7,0" fill="url(#gpat)" opacity="0.62"/><ellipse cx="4" cy="35" rx="2.0" ry="7.0" transform="rotate(0 4 35)" fill="#45458a" opacity="0.6"/><path d="M3.5,22.5a1.6,1.6 0 1 0 3.2,0a1.6,1.6 0 1 0 -3.2,0M2.9,41.6a1.7,1.7 0 1 0 3.4,0a1.7,1.7 0 1 0 -3.4,0M4.3,43.6a1.8,1.8 0 1 0 3.5,0a1.8,1.8 0 1 0 -3.5,0M5.2,40.5a2.3,2.3 0 1 0 4.7,0a2.3,2.3 0 1 0 -4.7,0M-0.9,32.6a2.2,2.2 0 1 0 4.4,0a2.2,2.2 0 1 0 -4.4,0M-0.4,36.8a2.7,2.7 0 1 0 5.4,0a2.7,2.7 0 1 0 -5.4,0M2.1,40.3a1.9,1.9 0 1 0 3.9,0a1.9,1.9 0 1 0 -3.9,0M-2.0,42.0a2.8,2.8 0 1 0 5.5,0a2.8,2.8 0 1 0 -5.5,0M4.5,33.9a2.0,2.0 0 1 0 4.1,0a2.0,2.0 0 1 0 -4.1,0M-0.0,29.1a3.6,3.6 0 1 0 7.2,0a3.6,3.6 0 1 0 -7.2,0M0.3,39.6a2.1,2.1 0 1 0 4.1,0a2.1,2.1 0 1 0 -4.1,0M-0.9,47.8a3.6,3.6 0 1 0 7.2,0a3.6,3.6 0 1 0 -7.2,0M0.7,32.6a1.5,1.5 0 1 0 3.0,0a1.5,1.5 0 1 0 -3.0,0" fill="#45458a" opacity="0.6"/><use href="#lakes" width="116" height="61"/></svg><svg x="159.5" y="228.8" width="116" height="61.2" viewBox="0 0 116 61" preserveAspectRatio="none" overflow="hidden"><use href="#usbase" width="116" height="61"/><ellipse cx="14" cy="12" rx="7.5" ry="6.5" transform="rotate(0 14 12)" fill="url(#gpat)" opacity="0.62"/><path d="M4.7,9.2a3.5,3.5 0 1 0 7.1,0a3.5,3.5 0 1 0 -7.1,0M20.2,7.9a2.9,2.9 0 1 0 5.8,0a2.9,2.9 0 1 0 -5.8,0M13.5,18.0a2.1,2.1 0 1 0 4.2,0a2.1,2.1 0 1 0 -4.2,0M8.0,6.4a3.5,3.5 0 1 0 7.1,0a3.5,3.5 0 1 0 -7.1,0M18.3,14.4a1.7,1.7 0 1 0 3.4,0a1.7,1.7 0 1 0 -3.4,0M12.6,4.2a2.5,2.5 0 1 0 5.0,0a2.5,2.5 0 1 0 -5.0,0M6.1,21.2a2.3,2.3 0 1 0 4.7,0a2.3,2.3 0 1 0 -4.7,0M14.4,20.2a2.1,2.1 0 1 0 4.3,0a2.1,2.1 0 1 0 -4.3,0M21.5,19.6a2.9,2.9 0 1 0 5.9,0a2.9,2.9 0 1 0 -5.9,0M4.5,1.5a2.3,2.3 0 1 0 4.7,0a2.3,2.3 0 1 0 -4.7,0M4.6,17.8a2.3,2.3 0 1 0 4.7,0a2.3,2.3 0 1 0 -4.7,0M10.9,11.1a2.5,2.5 0 1 0 4.9,0a2.5,2.5 0 1 0 -4.9,0M3.9,10.3a1.5,1.5 0 1 0 3.1,0a1.5,1.5 0 1 0 -3.1,0M10.9,10.8a2.7,2.7 0 1 0 5.4,0a2.7,2.7 0 1 0 -5.4,0M13.7,14.0a1.9,1.9 0 1 0 3.8,0a1.9,1.9 0 1 0 -3.8,0M16.4,14.0a2.9,2.9 0 1 0 5.9,0a2.9,2.9 0 1 0 -5.9,0M9.9,4.2a2.9,2.9 0 1 0 5.7,0a2.9,2.9 0 1 0 -5.7,0M0.2,13.4a3.3,3.3 0 1 0 6.7,0a3.3,3.3 0 1 0 -6.7,0M5.8,23.2a3.0,3.0 0 1 0 5.9,0a3.0,3.0 0 1 0 -5.9,0M11.9,11.1a1.7,1.7 0 1 0 3.4,0a1.7,1.7 0 1 0 -3.4,0M19.2,13.5a3.5,3.5 0 1 0 7.0,0a3.5,3.5 0 1 0 -7.0,0M22.0,3.6a1.7,1.7 0 1 0 3.5,0a1.7,1.7 0 1 0 -3.5,0M7.2,1.0a3.2,3.2 0 1 0 6.4,0a3.2,3.2 0 1 0 -6.4,0M13.6,7.3a1.9,1.9 0 1 0 3.8,0a1.9,1.9 0 1 0 -3.8,0M14.0,1.2a3.4,3.4 0 1 0 6.7,0a3.4,3.4 0 1 0 -6.7,0M-1.1,16.0a1.8,1.8 0 1 0 3.6,0a1.8,1.8 0 1 0 -3.6,0M25.4,8.7a2.2,2.2 0 1 0 4.4,0a2.2,2.2 0 1 0 -4.4,0M21.2,16.0a2.9,2.9 0 1 0 5.9,0a2.9,2.9 0 1 0 -5.9,0M9.8,14.5a2.1,2.1 0 1 0 4.2,0a2.1,2.1 0 1 0 -4.2,0M12.6,8.5a3.5,3.5 0 1 0 6.9,0a3.5,3.5 0 1 0 -6.9,0M12.3,17.9a1.7,1.7 0 1 0 3.5,0a1.7,1.7 0 1 0 -3.5,0M26.0,10.5a2.2,2.2 0 1 0 4.3,0a2.2,2.2 0 1 0 -4.3,0M20.6,17.9a3.4,3.4 0 1 0 6.7,0a3.4,3.4 0 1 0 -6.7,0M22.6,12.8a3.3,3.3 0 1 0 6.6,0a3.3,3.3 0 1 0 -6.6,0M-0.1,14.5a3.2,3.2 0 1 0 6.4,0a3.2,3.2 0 1 0 -6.4,0M11.7,18.8a2.9,2.9 0 1 0 5.8,0a2.9,2.9 0 1 0 -5.8,0" fill="url(#gpat)" opacity="0.62"/><ellipse cx="38" cy="36" rx="3.0" ry="4.5" transform="rotate(0 38 36)" fill="url(#gpat)" opacity="0.62"/><path d="M31.6,33.9a2.2,2.2 0 1 0 4.4,0a2.2,2.2 0 1 0 -4.4,0M38.0,34.1a2.9,2.9 0 1 0 5.9,0a2.9,2.9 0 1 0 -5.9,0M39.4,32.5a1.6,1.6 0 1 0 3.2,0a1.6,1.6 0 1 0 -3.2,0M36.5,38.3a1.8,1.8 0 1 0 3.6,0a1.8,1.8 0 1 0 -3.6,0M38.3,39.6a2.3,2.3 0 1 0 4.6,0a2.3,2.3 0 1 0 -4.6,0M30.5,38.4a2.9,2.9 0 1 0 5.8,0a2.9,2.9 0 1 0 -5.8,0M33.7,31.0a2.9,2.9 0 1 0 5.8,0a2.9,2.9 0 1 0 -5.8,0M33.3,35.0a2.6,2.6 0 1 0 5.3,0a2.6,2.6 0 1 0 -5.3,0M32.9,42.7a3.0,3.0 0 1 0 6.1,0a3.0,3.0 0 1 0 -6.1,0M35.8,41.9a2.5,2.5 0 1 0 4.9,0a2.5,2.5 0 1 0 -4.9,0M36.0,37.7a1.6,1.6 0 1 0 3.2,0a1.6,1.6 0 1 0 -3.2,0M40.7,35.7a2.4,2.4 0 1 0 4.8,0a2.4,2.4 0 1 0 -4.8,0M33.5,32.0a3.0,3.0 0 1 0 6.0,0a3.0,3.0 0 1 0 -6.0,0" fill="url(#gpat)" opacity="0.62"/><ellipse cx="28" cy="50" rx="3.5" ry="4.0" transform="rotate(30 28 50)" fill="#45458a" opacity="0.6"/><path d="M31.7,51.1a2.5,2.5 0 1 0 5.0,0a2.5,2.5 0 1 0 -5.0,0M32.6,52.7a1.6,1.6 0 1 0 3.2,0a1.6,1.6 0 1 0 -3.2,0M21.0,50.4a2.1,2.1 0 1 0 4.2,0a2.1,2.1 0 1 0 -4.2,0M24.2,47.3a3.1,3.1 0 1 0 6.1,0a3.1,3.1 0 1 0 -6.1,0M26.8,49.2a3.0,3.0 0 1 0 5.9,0a3.0,3.0 0 1 0 -5.9,0M21.4,55.2a3.0,3.0 0 1 0 5.9,0a3.0,3.0 0 1 0 -5.9,0M31.7,52.2a2.2,2.2 0 1 0 4.4,0a2.2,2.2 0 1 0 -4.4,0M26.2,47.2a3.0,3.0 0 1 0 6.0,0a3.0,3.0 0 1 0 -6.0,0M22.3,50.2a2.0,2.0 0 1 0 4.0,0a2.0,2.0 0 1 0 -4.0,0M23.9,56.7a1.7,1.7 0 1 0 3.4,0a1.7,1.7 0 1 0 -3.4,0M24.7,53.2a1.8,1.8 0 1 0 3.7,0a1.8,1.8 0 1 0 -3.7,0M27.6,44.4a2.9,2.9 0 1 0 5.8,0a2.9,2.9 0 1 0 -5.8,0M31.3,49.2a1.6,1.6 0 1 0 3.2,0a1.6,1.6 0 1 0 -3.2,0" fill="#45458a" opacity="0.6"/><ellipse cx="100" cy="10" rx="8.0" ry="5.5" transform="rotate(-20 100 10)" fill="url(#gpat)" opacity="0.62"/><path d="M103.5,15.4a3.0,3.0 0 1 0 6.0,0a3.0,3.0 0 1 0 -6.0,0M106.1,3.0a2.0,2.0 0 1 0 4.0,0a2.0,2.0 0 1 0 -4.0,0M83.7,8.9a2.2,2.2 0 1 0 4.4,0a2.2,2.2 0 1 0 -4.4,0M108.8,1.2a2.7,2.7 0 1 0 5.4,0a2.7,2.7 0 1 0 -5.4,0M93.1,12.4a1.7,1.7 0 1 0 3.5,0a1.7,1.7 0 1 0 -3.5,0M109.1,7.9a3.0,3.0 0 1 0 6.0,0a3.0,3.0 0 1 0 -6.0,0M108.0,5.4a3.6,3.6 0 1 0 7.2,0a3.6,3.6 0 1 0 -7.2,0M94.7,13.8a1.6,1.6 0 1 0 3.3,0a1.6,1.6 0 1 0 -3.3,0M96.5,18.3a3.6,3.6 0 1 0 7.1,0a3.6,3.6 0 1 0 -7.1,0M96.6,15.6a3.0,3.0 0 1 0 6.0,0a3.0,3.0 0 1 0 -6.0,0M91.4,18.1a1.8,1.8 0 1 0 3.6,0a1.8,1.8 0 1 0 -3.6,0M102.8,-1.1a3.1,3.1 0 1 0 6.2,0a3.1,3.1 0 1 0 -6.2,0M105.6,4.8a1.6,1.6 0 1 0 3.1,0a1.6,1.6 0 1 0 -3.1,0M96.1,21.0a2.5,2.5 0 1 0 5.0,0a2.5,2.5 0 1 0 -5.0,0M101.3,13.2a1.8,1.8 0 1 0 3.7,0a1.8,1.8 0 1 0 -3.7,0M84.6,18.6a3.4,3.4 0 1 0 6.7,0a3.4,3.4 0 1 0 -6.7,0M95.5,0.8a1.9,1.9 0 1 0 3.8,0a1.9,1.9 0 1 0 -3.8,0M96.9,4.7a2.6,2.6 0 1 0 5.2,0a2.6,2.6 0 1 0 -5.2,0M112.9,7.0a1.8,1.8 0 1 0 3.5,0a1.8,1.8 0 1 0 -3.5,0M85.2,9.1a2.9,2.9 0 1 0 5.7,0a2.9,2.9 0 1 0 -5.7,0M91.0,5.7a3.2,3.2 0 1 0 6.3,0a3.2,3.2 0 1 0 -6.3,0M106.3,3.0a3.6,3.6 0 1 0 7.1,0a3.6,3.6 0 1 0 -7.1,0M98.5,7.3a2.9,2.9 0 1 0 5.8,0a2.9,2.9 0 1 0 -5.8,0M109.6,10.8a2.3,2.3 0 1 0 4.6,0a2.3,2.3 0 1 0 -4.6,0M97.8,7.6a3.5,3.5 0 1 0 7.0,0a3.5,3.5 0 1 0 -7.0,0M102.2,9.4a1.5,1.5 0 1 0 3.0,0a1.5,1.5 0 1 0 -3.0,0M109.9,13.4a3.3,3.3 0 1 0 6.5,0a3.3,3.3 0 1 0 -6.5,0M101.9,5.7a2.9,2.9 0 1 0 5.9,0a2.9,2.9 0 1 0 -5.9,0M98.4,0.2a2.1,2.1 0 1 0 4.1,0a2.1,2.1 0 1 0 -4.1,0M109.1,3.8a2.9,2.9 0 1 0 5.9,0a2.9,2.9 0 1 0 -5.9,0M97.2,17.1a3.1,3.1 0 1 0 6.2,0a3.1,3.1 0 1 0 -6.2,0M85.9,13.1a3.4,3.4 0 1 0 6.9,0a3.4,3.4 0 1 0 -6.9,0M87.8,19.0a1.6,1.6 0 1 0 3.2,0a1.6,1.6 0 1 0 -3.2,0" fill="url(#gpat)" opacity="0.62"/><ellipse cx="104" cy="40" rx="4.0" ry="7.0" transform="rotate(40 104 40)" fill="#9c9ce0" opacity="0.6"/><path d="M98.8,34.0a1.5,1.5 0 1 0 3.0,0a1.5,1.5 0 1 0 -3.0,0M104.6,33.7a2.8,2.8 0 1 0 5.6,0a2.8,2.8 0 1 0 -5.6,0M101.2,35.9a3.5,3.5 0 1 0 7.0,0a3.5,3.5 0 1 0 -7.0,0M98.4,44.0a2.4,2.4 0 1 0 4.9,0a2.4,2.4 0 1 0 -4.9,0M101.6,42.8a3.1,3.1 0 1 0 6.2,0a3.1,3.1 0 1 0 -6.2,0M100.5,47.6a3.4,3.4 0 1 0 6.7,0a3.4,3.4 0 1 0 -6.7,0M93.1,38.3a3.2,3.2 0 1 0 6.5,0a3.2,3.2 0 1 0 -6.5,0M99.6,43.3a3.1,3.1 0 1 0 6.3,0a3.1,3.1 0 1 0 -6.3,0M111.0,35.8a3.0,3.0 0 1 0 6.0,0a3.0,3.0 0 1 0 -6.0,0M95.5,34.3a3.1,3.1 0 1 0 6.1,0a3.1,3.1 0 1 0 -6.1,0M111.4,30.2a1.6,1.6 0 1 0 3.2,0a1.6,1.6 0 1 0 -3.2,0M109.1,31.6a1.5,1.5 0 1 0 3.1,0a1.5,1.5 0 1 0 -3.1,0M93.6,48.9a2.6,2.6 0 1 0 5.2,0a2.6,2.6 0 1 0 -5.2,0M100.1,35.3a2.7,2.7 0 1 0 5.4,0a2.7,2.7 0 1 0 -5.4,0M111.9,36.4a2.7,2.7 0 1 0 5.3,0a2.7,2.7 0 1 0 -5.3,0M104.6,36.7a1.8,1.8 0 1 0 3.6,0a1.8,1.8 0 1 0 -3.6,0M100.0,32.1a1.8,1.8 0 1 0 3.5,0a1.8,1.8 0 1 0 -3.5,0M99.4,48.2a2.1,2.1 0 1 0 4.3,0a2.1,2.1 0 1 0 -4.3,0M100.4,44.6a2.4,2.4 0 1 0 4.8,0a2.4,2.4 0 1 0 -4.8,0M105.1,36.3a3.2,3.2 0 1 0 6.4,0a3.2,3.2 0 1 0 -6.4,0M101.8,44.7a2.9,2.9 0 1 0 5.8,0a2.9,2.9 0 1 0 -5.8,0M105.4,43.2a1.8,1.8 0 1 0 3.6,0a1.8,1.8 0 1 0 -3.6,0" fill="#9c9ce0" opacity="0.6"/><use href="#lakes" width="116" height="61"/></svg><svg x="277.56666666666666" y="228.8" width="116" height="61.2" viewBox="0 0 116 61" preserveAspectRatio="none" overflow="hidden"><use href="#usbase" width="116" height="61"/><ellipse cx="20" cy="22" rx="10.0" ry="11.0" transform="rotate(0 20 22)" fill="url(#gpat)" opacity="0.62"/><path d="M27.5,35.9a1.9,1.9 0 1 0 3.7,0a1.9,1.9 0 1 0 -3.7,0M14.1,5.3a2.3,2.3 0 1 0 4.6,0a2.3,2.3 0 1 0 -4.6,0M7.3,10.9a1.6,1.6 0 1 0 3.2,0a1.6,1.6 0 1 0 -3.2,0M1.9,18.7a2.6,2.6 0 1 0 5.2,0a2.6,2.6 0 1 0 -5.2,0M30.2,9.0a2.3,2.3 0 1 0 4.6,0a2.3,2.3 0 1 0 -4.6,0M17.8,29.8a3.2,3.2 0 1 0 6.4,0a3.2,3.2 0 1 0 -6.4,0M11.8,6.0a2.4,2.4 0 1 0 4.9,0a2.4,2.4 0 1 0 -4.9,0M8.0,21.9a2.6,2.6 0 1 0 5.2,0a2.6,2.6 0 1 0 -5.2,0M26.8,35.7a2.8,2.8 0 1 0 5.6,0a2.8,2.8 0 1 0 -5.6,0M13.5,12.4a1.7,1.7 0 1 0 3.4,0a1.7,1.7 0 1 0 -3.4,0M9.2,37.8a2.6,2.6 0 1 0 5.1,0a2.6,2.6 0 1 0 -5.1,0M17.5,7.6a2.3,2.3 0 1 0 4.7,0a2.3,2.3 0 1 0 -4.7,0M24.9,17.1a1.9,1.9 0 1 0 3.9,0a1.9,1.9 0 1 0 -3.9,0M4.1,12.7a2.4,2.4 0 1 0 4.8,0a2.4,2.4 0 1 0 -4.8,0M4.7,16.8a2.9,2.9 0 1 0 5.8,0a2.9,2.9 0 1 0 -5.8,0M31.1,9.1a2.8,2.8 0 1 0 5.7,0a2.8,2.8 0 1 0 -5.7,0M-1.6,26.0a2.4,2.4 0 1 0 4.9,0a2.4,2.4 0 1 0 -4.9,0M3.9,7.4a2.9,2.9 0 1 0 5.9,0a2.9,2.9 0 1 0 -5.9,0M3.9,34.0a2.8,2.8 0 1 0 5.5,0a2.8,2.8 0 1 0 -5.5,0M31.0,13.2a2.6,2.6 0 1 0 5.2,0a2.6,2.6 0 1 0 -5.2,0M32.0,19.4a2.3,2.3 0 1 0 4.7,0a2.3,2.3 0 1 0 -4.7,0M36.1,13.8a1.9,1.9 0 1 0 3.7,0a1.9,1.9 0 1 0 -3.7,0M33.3,31.0a3.4,3.4 0 1 0 6.7,0a3.4,3.4 0 1 0 -6.7,0M9.5,29.4a2.9,2.9 0 1 0 5.9,0a2.9,2.9 0 1 0 -5.9,0M26.1,18.3a2.4,2.4 0 1 0 4.9,0a2.4,2.4 0 1 0 -4.9,0M12.7,13.2a2.4,2.4 0 1 0 4.7,0a2.4,2.4 0 1 0 -4.7,0M26.6,33.9a2.0,2.0 0 1 0 4.0,0a2.0,2.0 0 1 0 -4.0,0M29.1,28.7a1.8,1.8 0 1 0 3.6,0a1.8,1.8 0 1 0 -3.6,0M23.3,27.8a2.4,2.4 0 1 0 4.8,0a2.4,2.4 0 1 0 -4.8,0M10.6,39.1a2.4,2.4 0 1 0 4.7,0a2.4,2.4 0 1 0 -4.7,0M18.2,31.5a2.1,2.1 0 1 0 4.2,0a2.1,2.1 0 1 0 -4.2,0M17.1,12.1a2.5,2.5 0 1 0 5.0,0a2.5,2.5 0 1 0 -5.0,0M23.9,3.2a2.5,2.5 0 1 0 4.9,0a2.5,2.5 0 1 0 -4.9,0M26.8,7.3a2.0,2.0 0 1 0 4.0,0a2.0,2.0 0 1 0 -4.0,0M23.7,27.0a3.2,3.2 0 1 0 6.3,0a3.2,3.2 0 1 0 -6.3,0M2.4,34.9a3.5,3.5 0 1 0 7.1,0a3.5,3.5 0 1 0 -7.1,0M30.5,14.7a1.5,1.5 0 1 0 3.0,0a1.5,1.5 0 1 0 -3.0,0M15.6,32.2a2.9,2.9 0 1 0 5.7,0a2.9,2.9 0 1 0 -5.7,0M11.3,1.8a3.0,3.0 0 1 0 6.0,0a3.0,3.0 0 1 0 -6.0,0M33.0,17.6a2.5,2.5 0 1 0 5.0,0a2.5,2.5 0 1 0 -5.0,0M22.3,12.2a3.1,3.1 0 1 0 6.3,0a3.1,3.1 0 1 0 -6.3,0M15.7,1.7a1.6,1.6 0 1 0 3.3,0a1.6,1.6 0 1 0 -3.3,0M25.5,41.9a1.8,1.8 0 1 0 3.6,0a1.8,1.8 0 1 0 -3.6,0M2.7,27.1a2.5,2.5 0 1 0 5.0,0a2.5,2.5 0 1 0 -5.0,0M32.0,7.2a2.2,2.2 0 1 0 4.4,0a2.2,2.2 0 1 0 -4.4,0M30.3,37.7a2.5,2.5 0 1 0 4.9,0a2.5,2.5 0 1 0 -4.9,0M18.5,30.2a1.5,1.5 0 1 0 3.0,0a1.5,1.5 0 1 0 -3.0,0M8.1,16.2a2.7,2.7 0 1 0 5.3,0a2.7,2.7 0 1 0 -5.3,0M28.9,15.0a3.5,3.5 0 1 0 7.0,0a3.5,3.5 0 1 0 -7.0,0M32.8,29.8a3.1,3.1 0 1 0 6.2,0a3.1,3.1 0 1 0 -6.2,0M20.8,21.0a2.6,2.6 0 1 0 5.1,0a2.6,2.6 0 1 0 -5.1,0M3.0,16.1a2.5,2.5 0 1 0 5.0,0a2.5,2.5 0 1 0 -5.0,0M13.9,42.7a3.3,3.3 0 1 0 6.7,0a3.3,3.3 0 1 0 -6.7,0M11.4,1.5a2.7,2.7 0 1 0 5.3,0a2.7,2.7 0 1 0 -5.3,0M32.9,30.8a1.7,1.7 0 1 0 3.4,0a1.7,1.7 0 1 0 -3.4,0M18.2,4.3a1.9,1.9 0 1 0 3.9,0a1.9,1.9 0 1 0 -3.9,0M21.1,26.7a1.9,1.9 0 1 0 3.7,0a1.9,1.9 0 1 0 -3.7,0M26.1,20.6a3.4,3.4 0 1 0 6.7,0a3.4,3.4 0 1 0 -6.7,0M25.2,31.6a2.5,2.5 0 1 0 5.0,0a2.5,2.5 0 1 0 -5.0,0M5.6,38.8a2.0,2.0 0 1 0 4.0,0a2.0,2.0 0 1 0 -4.0,0M9.3,23.0a1.7,1.7 0 1 0 3.5,0a1.7,1.7 0 1 0 -3.5,0M13.2,10.1a2.5,2.5 0 1 0 5.0,0a2.5,2.5 0 1 0 -5.0,0M16.3,15.9a1.6,1.6 0 1 0 3.2,0a1.6,1.6 0 1 0 -3.2,0M10.8,1.7a1.5,1.5 0 1 0 3.1,0a1.5,1.5 0 1 0 -3.1,0M-2.3,28.5a3.2,3.2 0 1 0 6.5,0a3.2,3.2 0 1 0 -6.5,0M31.0,20.9a3.5,3.5 0 1 0 7.1,0a3.5,3.5 0 1 0 -7.1,0M29.6,27.2a3.3,3.3 0 1 0 6.6,0a3.3,3.3 0 1 0 -6.6,0M7.3,31.3a2.4,2.4 0 1 0 4.9,0a2.4,2.4 0 1 0 -4.9,0M3.3,35.6a3.5,3.5 0 1 0 7.1,0a3.5,3.5 0 1 0 -7.1,0M18.2,34.4a3.2,3.2 0 1 0 6.4,0a3.2,3.2 0 1 0 -6.4,0M16.4,2.2a2.9,2.9 0 1 0 5.9,0a2.9,2.9 0 1 0 -5.9,0M33.0,11.7a2.8,2.8 0 1 0 5.7,0a2.8,2.8 0 1 0 -5.7,0M15.5,28.3a3.3,3.3 0 1 0 6.6,0a3.3,3.3 0 1 0 -6.6,0M29.8,5.8a2.1,2.1 0 1 0 4.1,0a2.1,2.1 0 1 0 -4.1,0M16.7,0.8a1.9,1.9 0 1 0 3.9,0a1.9,1.9 0 1 0 -3.9,0M26.3,23.4a2.0,2.0 0 1 0 3.9,0a2.0,2.0 0 1 0 -3.9,0M9.1,4.0a3.2,3.2 0 1 0 6.4,0a3.2,3.2 0 1 0 -6.4,0" fill="url(#gpat)" opacity="0.62"/><ellipse cx="70" cy="30" rx="5.0" ry="12.0" transform="rotate(35 70 30)" fill="#45458a" opacity="0.6"/><path d="M76.1,9.8a3.5,3.5 0 1 0 7.1,0a3.5,3.5 0 1 0 -7.1,0M54.8,31.9a3.0,3.0 0 1 0 6.0,0a3.0,3.0 0 1 0 -6.0,0M57.8,45.2a1.9,1.9 0 1 0 3.7,0a1.9,1.9 0 1 0 -3.7,0M55.2,36.3a1.5,1.5 0 1 0 3.0,0a1.5,1.5 0 1 0 -3.0,0M64.7,23.4a2.1,2.1 0 1 0 4.2,0a2.1,2.1 0 1 0 -4.2,0M69.3,39.4a2.2,2.2 0 1 0 4.4,0a2.2,2.2 0 1 0 -4.4,0M66.3,40.1a2.9,2.9 0 1 0 5.9,0a2.9,2.9 0 1 0 -5.9,0M68.8,42.8a1.7,1.7 0 1 0 3.3,0a1.7,1.7 0 1 0 -3.3,0M60.3,28.8a3.3,3.3 0 1 0 6.6,0a3.3,3.3 0 1 0 -6.6,0M80.8,23.3a2.1,2.1 0 1 0 4.2,0a2.1,2.1 0 1 0 -4.2,0M52.9,43.6a2.6,2.6 0 1 0 5.1,0a2.6,2.6 0 1 0 -5.1,0M72.3,14.2a1.9,1.9 0 1 0 3.8,0a1.9,1.9 0 1 0 -3.8,0M52.9,38.5a2.2,2.2 0 1 0 4.4,0a2.2,2.2 0 1 0 -4.4,0M74.8,25.0a1.5,1.5 0 1 0 3.1,0a1.5,1.5 0 1 0 -3.1,0M63.0,26.8a2.8,2.8 0 1 0 5.5,0a2.8,2.8 0 1 0 -5.5,0M70.3,26.3a2.5,2.5 0 1 0 5.1,0a2.5,2.5 0 1 0 -5.1,0M51.9,39.5a3.3,3.3 0 1 0 6.5,0a3.3,3.3 0 1 0 -6.5,0M80.9,22.5a2.2,2.2 0 1 0 4.5,0a2.2,2.2 0 1 0 -4.5,0M70.2,17.0a2.3,2.3 0 1 0 4.5,0a2.3,2.3 0 1 0 -4.5,0M54.2,44.2a3.4,3.4 0 1 0 6.8,0a3.4,3.4 0 1 0 -6.8,0M60.2,41.9a1.8,1.8 0 1 0 3.7,0a1.8,1.8 0 1 0 -3.7,0M58.5,36.8a1.7,1.7 0 1 0 3.4,0a1.7,1.7 0 1 0 -3.4,0M70.2,18.8a3.2,3.2 0 1 0 6.4,0a3.2,3.2 0 1 0 -6.4,0M55.0,47.0a3.6,3.6 0 1 0 7.1,0a3.6,3.6 0 1 0 -7.1,0M61.6,42.2a3.5,3.5 0 1 0 7.1,0a3.5,3.5 0 1 0 -7.1,0M59.8,33.7a1.8,1.8 0 1 0 3.6,0a1.8,1.8 0 1 0 -3.6,0M75.8,21.7a3.3,3.3 0 1 0 6.7,0a3.3,3.3 0 1 0 -6.7,0M65.3,24.8a3.6,3.6 0 1 0 7.2,0a3.6,3.6 0 1 0 -7.2,0M80.0,24.1a2.8,2.8 0 1 0 5.5,0a2.8,2.8 0 1 0 -5.5,0M81.7,11.0a1.9,1.9 0 1 0 3.8,0a1.9,1.9 0 1 0 -3.8,0M56.0,47.4a2.4,2.4 0 1 0 4.8,0a2.4,2.4 0 1 0 -4.8,0M76.0,33.5a2.6,2.6 0 1 0 5.2,0a2.6,2.6 0 1 0 -5.2,0M61.6,45.4a2.8,2.8 0 1 0 5.5,0a2.8,2.8 0 1 0 -5.5,0M67.0,17.2a2.5,2.5 0 1 0 5.0,0a2.5,2.5 0 1 0 -5.0,0M79.7,24.0a1.8,1.8 0 1 0 3.7,0a1.8,1.8 0 1 0 -3.7,0M73.2,23.7a3.4,3.4 0 1 0 6.8,0a3.4,3.4 0 1 0 -6.8,0M74.0,28.4a1.9,1.9 0 1 0 3.8,0a1.9,1.9 0 1 0 -3.8,0M75.0,16.2a2.3,2.3 0 1 0 4.6,0a2.3,2.3 0 1 0 -4.6,0M76.2,18.6a1.8,1.8 0 1 0 3.5,0a1.8,1.8 0 1 0 -3.5,0M63.3,19.1a3.5,3.5 0 1 0 7.0,0a3.5,3.5 0 1 0 -7.0,0M66.0,44.4a2.2,2.2 0 1 0 4.4,0a2.2,2.2 0 1 0 -4.4,0M74.9,31.3a1.7,1.7 0 1 0 3.4,0a1.7,1.7 0 1 0 -3.4,0M56.6,40.3a1.9,1.9 0 1 0 3.7,0a1.9,1.9 0 1 0 -3.7,0M75.4,19.2a3.1,3.1 0 1 0 6.1,0a3.1,3.1 0 1 0 -6.1,0" fill="#45458a" opacity="0.6"/><ellipse cx="72" cy="14" rx="7.0" ry="3.5" transform="rotate(-30 72 14)" fill="url(#gpat)" opacity="0.62"/><path d="M72.5,17.7a2.9,2.9 0 1 0 5.8,0a2.9,2.9 0 1 0 -5.8,0M72.3,16.1a3.3,3.3 0 1 0 6.5,0a3.3,3.3 0 1 0 -6.5,0M64.8,19.5a2.8,2.8 0 1 0 5.6,0a2.8,2.8 0 1 0 -5.6,0M62.2,11.1a2.7,2.7 0 1 0 5.4,0a2.7,2.7 0 1 0 -5.4,0M72.9,5.4a3.4,3.4 0 1 0 6.9,0a3.4,3.4 0 1 0 -6.9,0M76.5,6.4a3.0,3.0 0 1 0 5.9,0a3.0,3.0 0 1 0 -5.9,0M66.3,17.0a3.4,3.4 0 1 0 6.9,0a3.4,3.4 0 1 0 -6.9,0M64.3,19.3a2.7,2.7 0 1 0 5.3,0a2.7,2.7 0 1 0 -5.3,0M67.5,8.2a1.7,1.7 0 1 0 3.5,0a1.7,1.7 0 1 0 -3.5,0M67.6,6.8a3.6,3.6 0 1 0 7.1,0a3.6,3.6 0 1 0 -7.1,0M76.3,7.4a3.4,3.4 0 1 0 6.7,0a3.4,3.4 0 1 0 -6.7,0M57.3,16.4a3.6,3.6 0 1 0 7.2,0a3.6,3.6 0 1 0 -7.2,0M66.8,17.2a3.1,3.1 0 1 0 6.2,0a3.1,3.1 0 1 0 -6.2,0M78.9,5.7a2.5,2.5 0 1 0 4.9,0a2.5,2.5 0 1 0 -4.9,0M65.0,17.0a3.3,3.3 0 1 0 6.6,0a3.3,3.3 0 1 0 -6.6,0M70.9,16.4a1.7,1.7 0 1 0 3.4,0a1.7,1.7 0 1 0 -3.4,0M75.0,8.3a3.2,3.2 0 1 0 6.3,0a3.2,3.2 0 1 0 -6.3,0M77.6,11.4a3.1,3.1 0 1 0 6.1,0a3.1,3.1 0 1 0 -6.1,0M68.7,11.0a2.5,2.5 0 1 0 5.0,0a2.5,2.5 0 1 0 -5.0,0M71.7,6.1a1.7,1.7 0 1 0 3.4,0a1.7,1.7 0 1 0 -3.4,0" fill="url(#gpat)" opacity="0.62"/><ellipse cx="108" cy="6" rx="4.0" ry="3.0" transform="rotate(0 108 6)" fill="url(#gpat)" opacity="0.62"/><path d="M98.8,3.0a2.8,2.8 0 1 0 5.6,0a2.8,2.8 0 1 0 -5.6,0M106.4,2.8a2.5,2.5 0 1 0 5.1,0a2.5,2.5 0 1 0 -5.1,0M112.4,6.5a2.7,2.7 0 1 0 5.4,0a2.7,2.7 0 1 0 -5.4,0M109.3,11.3a1.9,1.9 0 1 0 3.9,0a1.9,1.9 0 1 0 -3.9,0M113.0,7.1a1.7,1.7 0 1 0 3.3,0a1.7,1.7 0 1 0 -3.3,0M104.8,4.1a1.5,1.5 0 1 0 3.1,0a1.5,1.5 0 1 0 -3.1,0M104.6,1.3a2.9,2.9 0 1 0 5.8,0a2.9,2.9 0 1 0 -5.8,0M104.4,1.1a1.9,1.9 0 1 0 3.7,0a1.9,1.9 0 1 0 -3.7,0M99.2,8.1a3.3,3.3 0 1 0 6.6,0a3.3,3.3 0 1 0 -6.6,0M101.4,2.7a3.2,3.2 0 1 0 6.4,0a3.2,3.2 0 1 0 -6.4,0M108.3,3.5a1.9,1.9 0 1 0 3.8,0a1.9,1.9 0 1 0 -3.8,0M113.5,6.2a1.9,1.9 0 1 0 3.9,0a1.9,1.9 0 1 0 -3.9,0" fill="url(#gpat)" opacity="0.62"/><ellipse cx="110" cy="50" rx="3.0" ry="5.0" transform="rotate(30 110 50)" fill="#9c9ce0" opacity="0.6"/><path d="M105.5,45.1a2.9,2.9 0 1 0 5.8,0a2.9,2.9 0 1 0 -5.8,0M113.6,49.6a1.9,1.9 0 1 0 3.7,0a1.9,1.9 0 1 0 -3.7,0M104.8,50.4a2.3,2.3 0 1 0 4.6,0a2.3,2.3 0 1 0 -4.6,0M111.0,42.9a2.8,2.8 0 1 0 5.6,0a2.8,2.8 0 1 0 -5.6,0M115.1,45.4a2.0,2.0 0 1 0 4.1,0a2.0,2.0 0 1 0 -4.1,0M111.0,42.6a1.6,1.6 0 1 0 3.1,0a1.6,1.6 0 1 0 -3.1,0M110.5,51.6a2.9,2.9 0 1 0 5.8,0a2.9,2.9 0 1 0 -5.8,0M105.5,55.8a1.7,1.7 0 1 0 3.5,0a1.7,1.7 0 1 0 -3.5,0M109.6,50.2a1.7,1.7 0 1 0 3.3,0a1.7,1.7 0 1 0 -3.3,0M111.0,43.2a2.2,2.2 0 1 0 4.4,0a2.2,2.2 0 1 0 -4.4,0M113.1,49.7a2.4,2.4 0 1 0 4.9,0a2.4,2.4 0 1 0 -4.9,0M110.2,41.2a3.3,3.3 0 1 0 6.7,0a3.3,3.3 0 1 0 -6.7,0M101.7,54.0a2.0,2.0 0 1 0 3.9,0a2.0,2.0 0 1 0 -3.9,0M99.8,53.4a3.0,3.0 0 1 0 6.1,0a3.0,3.0 0 1 0 -6.1,0" fill="#9c9ce0" opacity="0.6"/><use href="#lakes" width="116" height="61"/></svg><svg x="395.6333333333333" y="228.8" width="116" height="61.2" viewBox="0 0 116 61" preserveAspectRatio="none" overflow="hidden"><use href="#usbase" width="116" height="61"/><ellipse cx="14" cy="8" rx="5.0" ry="4.0" transform="rotate(0 14 8)" fill="url(#gpat)" opacity="0.62"/><path d="M17.7,7.3a3.0,3.0 0 1 0 6.0,0a3.0,3.0 0 1 0 -6.0,0M11.9,4.3a1.7,1.7 0 1 0 3.3,0a1.7,1.7 0 1 0 -3.3,0M8.9,6.3a2.3,2.3 0 1 0 4.6,0a2.3,2.3 0 1 0 -4.6,0M19.4,3.2a1.7,1.7 0 1 0 3.5,0a1.7,1.7 0 1 0 -3.5,0M14.9,9.9a3.2,3.2 0 1 0 6.5,0a3.2,3.2 0 1 0 -6.5,0M17.0,8.6a1.7,1.7 0 1 0 3.5,0a1.7,1.7 0 1 0 -3.5,0M17.1,12.2a1.9,1.9 0 1 0 3.8,0a1.9,1.9 0 1 0 -3.8,0M3.8,11.7a3.0,3.0 0 1 0 6.0,0a3.0,3.0 0 1 0 -6.0,0M3.7,11.6a2.7,2.7 0 1 0 5.4,0a2.7,2.7 0 1 0 -5.4,0M14.0,4.5a2.3,2.3 0 1 0 4.6,0a2.3,2.3 0 1 0 -4.6,0M2.7,4.2a2.8,2.8 0 1 0 5.6,0a2.8,2.8 0 1 0 -5.6,0M7.0,8.6a2.1,2.1 0 1 0 4.2,0a2.1,2.1 0 1 0 -4.2,0M12.8,15.8a3.4,3.4 0 1 0 6.7,0a3.4,3.4 0 1 0 -6.7,0M16.7,4.4a3.0,3.0 0 1 0 6.0,0a3.0,3.0 0 1 0 -6.0,0M10.2,13.3a1.8,1.8 0 1 0 3.6,0a1.8,1.8 0 1 0 -3.6,0M7.9,9.9a1.7,1.7 0 1 0 3.4,0a1.7,1.7 0 1 0 -3.4,0M13.5,6.8a3.2,3.2 0 1 0 6.4,0a3.2,3.2 0 1 0 -6.4,0" fill="url(#gpat)" opacity="0.62"/><ellipse cx="45" cy="30" rx="7.0" ry="6.0" transform="rotate(0 45 30)" fill="url(#gpat)" opacity="0.62"/><path d="M41.2,26.6a2.5,2.5 0 1 0 5.0,0a2.5,2.5 0 1 0 -5.0,0M56.2,29.7a2.7,2.7 0 1 0 5.4,0a2.7,2.7 0 1 0 -5.4,0M44.5,20.0a2.1,2.1 0 1 0 4.2,0a2.1,2.1 0 1 0 -4.2,0M32.4,27.1a2.3,2.3 0 1 0 4.7,0a2.3,2.3 0 1 0 -4.7,0M45.8,22.7a3.1,3.1 0 1 0 6.1,0a3.1,3.1 0 1 0 -6.1,0M52.0,33.2a1.6,1.6 0 1 0 3.2,0a1.6,1.6 0 1 0 -3.2,0M34.5,21.1a2.6,2.6 0 1 0 5.3,0a2.6,2.6 0 1 0 -5.3,0M32.9,26.2a2.0,2.0 0 1 0 4.0,0a2.0,2.0 0 1 0 -4.0,0M34.1,36.0a2.9,2.9 0 1 0 5.7,0a2.9,2.9 0 1 0 -5.7,0M35.8,35.7a2.2,2.2 0 1 0 4.4,0a2.2,2.2 0 1 0 -4.4,0M32.0,26.7a2.2,2.2 0 1 0 4.4,0a2.2,2.2 0 1 0 -4.4,0M37.3,19.9a2.6,2.6 0 1 0 5.3,0a2.6,2.6 0 1 0 -5.3,0M49.3,29.2a3.4,3.4 0 1 0 6.9,0a3.4,3.4 0 1 0 -6.9,0M45.3,36.6a3.2,3.2 0 1 0 6.4,0a3.2,3.2 0 1 0 -6.4,0M52.4,31.9a3.3,3.3 0 1 0 6.7,0a3.3,3.3 0 1 0 -6.7,0M53.6,26.6a2.2,2.2 0 1 0 4.5,0a2.2,2.2 0 1 0 -4.5,0M37.9,38.3a1.6,1.6 0 1 0 3.3,0a1.6,1.6 0 1 0 -3.3,0M55.1,32.0a2.8,2.8 0 1 0 5.6,0a2.8,2.8 0 1 0 -5.6,0M47.7,36.7a2.1,2.1 0 1 0 4.2,0a2.1,2.1 0 1 0 -4.2,0M47.1,25.3a3.0,3.0 0 1 0 6.0,0a3.0,3.0 0 1 0 -6.0,0M42.7,23.2a2.0,2.0 0 1 0 4.1,0a2.0,2.0 0 1 0 -4.1,0M33.5,29.0a2.7,2.7 0 1 0 5.5,0a2.7,2.7 0 1 0 -5.5,0M36.7,39.4a2.4,2.4 0 1 0 4.8,0a2.4,2.4 0 1 0 -4.8,0M49.7,38.0a3.4,3.4 0 1 0 6.8,0a3.4,3.4 0 1 0 -6.8,0M37.3,21.9a3.3,3.3 0 1 0 6.7,0a3.3,3.3 0 1 0 -6.7,0M43.7,29.5a2.5,2.5 0 1 0 5.0,0a2.5,2.5 0 1 0 -5.0,0M51.0,30.8a2.0,2.0 0 1 0 4.0,0a2.0,2.0 0 1 0 -4.0,0M30.5,32.4a3.3,3.3 0 1 0 6.6,0a3.3,3.3 0 1 0 -6.6,0M41.3,31.3a3.6,3.6 0 1 0 7.2,0a3.6,3.6 0 1 0 -7.2,0M45.3,21.3a1.7,1.7 0 1 0 3.5,0a1.7,1.7 0 1 0 -3.5,0M55.2,33.7a2.6,2.6 0 1 0 5.2,0a2.6,2.6 0 1 0 -5.2,0M49.8,21.8a3.1,3.1 0 1 0 6.2,0a3.1,3.1 0 1 0 -6.2,0" fill="url(#gpat)" opacity="0.62"/><ellipse cx="78" cy="35" rx="5.0" ry="13.0" transform="rotate(35 78 35)" fill="#45458a" opacity="0.6"/><path d="M84.4,25.9a2.0,2.0 0 1 0 4.0,0a2.0,2.0 0 1 0 -4.0,0M63.0,38.0a3.2,3.2 0 1 0 6.3,0a3.2,3.2 0 1 0 -6.3,0M87.1,19.0a2.5,2.5 0 1 0 5.0,0a2.5,2.5 0 1 0 -5.0,0M66.0,52.9a2.9,2.9 0 1 0 5.7,0a2.9,2.9 0 1 0 -5.7,0M68.6,28.5a3.6,3.6 0 1 0 7.1,0a3.6,3.6 0 1 0 -7.1,0M80.1,34.3a2.1,2.1 0 1 0 4.2,0a2.1,2.1 0 1 0 -4.2,0M78.8,19.9a2.1,2.1 0 1 0 4.2,0a2.1,2.1 0 1 0 -4.2,0M84.2,32.4a3.1,3.1 0 1 0 6.2,0a3.1,3.1 0 1 0 -6.2,0M78.0,41.5a1.5,1.5 0 1 0 3.1,0a1.5,1.5 0 1 0 -3.1,0M86.4,21.2a3.5,3.5 0 1 0 7.0,0a3.5,3.5 0 1 0 -7.0,0M77.4,24.9a2.2,2.2 0 1 0 4.5,0a2.2,2.2 0 1 0 -4.5,0M69.0,39.9a1.7,1.7 0 1 0 3.5,0a1.7,1.7 0 1 0 -3.5,0M79.6,23.5a2.5,2.5 0 1 0 4.9,0a2.5,2.5 0 1 0 -4.9,0M82.0,23.5a2.4,2.4 0 1 0 4.8,0a2.4,2.4 0 1 0 -4.8,0M65.4,44.4a2.9,2.9 0 1 0 5.8,0a2.9,2.9 0 1 0 -5.8,0M75.0,45.8a1.7,1.7 0 1 0 3.5,0a1.7,1.7 0 1 0 -3.5,0M79.4,23.3a3.5,3.5 0 1 0 7.1,0a3.5,3.5 0 1 0 -7.1,0M67.5,32.2a2.6,2.6 0 1 0 5.2,0a2.6,2.6 0 1 0 -5.2,0M89.4,20.9a2.8,2.8 0 1 0 5.7,0a2.8,2.8 0 1 0 -5.7,0M76.8,38.7a3.1,3.1 0 1 0 6.2,0a3.1,3.1 0 1 0 -6.2,0M60.5,41.2a2.8,2.8 0 1 0 5.7,0a2.8,2.8 0 1 0 -5.7,0M89.2,20.7a3.5,3.5 0 1 0 7.0,0a3.5,3.5 0 1 0 -7.0,0M83.3,14.7a2.4,2.4 0 1 0 4.8,0a2.4,2.4 0 1 0 -4.8,0M70.8,41.8a2.0,2.0 0 1 0 4.1,0a2.0,2.0 0 1 0 -4.1,0M89.1,28.0a1.6,1.6 0 1 0 3.2,0a1.6,1.6 0 1 0 -3.2,0M79.1,41.3a2.6,2.6 0 1 0 5.3,0a2.6,2.6 0 1 0 -5.3,0M73.6,36.8a2.0,2.0 0 1 0 4.1,0a2.0,2.0 0 1 0 -4.1,0M88.6,25.8a3.2,3.2 0 1 0 6.4,0a3.2,3.2 0 1 0 -6.4,0M63.2,51.7a1.9,1.9 0 1 0 3.8,0a1.9,1.9 0 1 0 -3.8,0M59.7,52.9a1.9,1.9 0 1 0 3.9,0a1.9,1.9 0 1 0 -3.9,0M67.0,43.9a3.3,3.3 0 1 0 6.6,0a3.3,3.3 0 1 0 -6.6,0M82.9,18.2a3.3,3.3 0 1 0 6.6,0a3.3,3.3 0 1 0 -6.6,0M64.0,34.3a3.1,3.1 0 1 0 6.3,0a3.1,3.1 0 1 0 -6.3,0M67.3,44.0a2.6,2.6 0 1 0 5.3,0a2.6,2.6 0 1 0 -5.3,0M63.9,36.5a2.9,2.9 0 1 0 5.7,0a2.9,2.9 0 1 0 -5.7,0M87.2,18.3a2.1,2.1 0 1 0 4.1,0a2.1,2.1 0 1 0 -4.1,0M89.6,13.7a2.8,2.8 0 1 0 5.7,0a2.8,2.8 0 1 0 -5.7,0M82.3,24.3a1.7,1.7 0 1 0 3.5,0a1.7,1.7 0 1 0 -3.5,0M65.3,36.1a3.0,3.0 0 1 0 6.1,0a3.0,3.0 0 1 0 -6.1,0M68.6,33.4a1.7,1.7 0 1 0 3.4,0a1.7,1.7 0 1 0 -3.4,0M77.0,39.1a2.2,2.2 0 1 0 4.3,0a2.2,2.2 0 1 0 -4.3,0M70.3,43.1a2.2,2.2 0 1 0 4.4,0a2.2,2.2 0 1 0 -4.4,0M59.1,48.8a3.5,3.5 0 1 0 6.9,0a3.5,3.5 0 1 0 -6.9,0M84.0,39.2a1.5,1.5 0 1 0 3.0,0a1.5,1.5 0 1 0 -3.0,0M60.8,56.7a3.0,3.0 0 1 0 5.9,0a3.0,3.0 0 1 0 -5.9,0M83.5,29.2a2.0,2.0 0 1 0 4.0,0a2.0,2.0 0 1 0 -4.0,0M74.3,47.3a2.3,2.3 0 1 0 4.5,0a2.3,2.3 0 1 0 -4.5,0" fill="#45458a" opacity="0.6"/><ellipse cx="95" cy="5" rx="10.0" ry="3.5" transform="rotate(0 95 5)" fill="url(#gpat)" opacity="0.62"/><path d="M86.1,5.5a1.6,1.6 0 1 0 3.1,0a1.6,1.6 0 1 0 -3.1,0M77.6,9.4a2.9,2.9 0 1 0 5.7,0a2.9,2.9 0 1 0 -5.7,0M88.1,4.2a2.4,2.4 0 1 0 4.8,0a2.4,2.4 0 1 0 -4.8,0M81.8,9.1a2.3,2.3 0 1 0 4.7,0a2.3,2.3 0 1 0 -4.7,0M95.3,1.5a3.0,3.0 0 1 0 6.1,0a3.0,3.0 0 1 0 -6.1,0M99.5,5.1a3.2,3.2 0 1 0 6.3,0a3.2,3.2 0 1 0 -6.3,0M99.7,1.9a1.9,1.9 0 1 0 3.8,0a1.9,1.9 0 1 0 -3.8,0M108.2,3.7a1.7,1.7 0 1 0 3.4,0a1.7,1.7 0 1 0 -3.4,0M107.9,4.6a2.1,2.1 0 1 0 4.3,0a2.1,2.1 0 1 0 -4.3,0M80.1,4.8a2.7,2.7 0 1 0 5.4,0a2.7,2.7 0 1 0 -5.4,0M81.5,7.2a3.0,3.0 0 1 0 6.1,0a3.0,3.0 0 1 0 -6.1,0M85.7,11.0a3.1,3.1 0 1 0 6.1,0a3.1,3.1 0 1 0 -6.1,0M99.1,4.0a3.3,3.3 0 1 0 6.6,0a3.3,3.3 0 1 0 -6.6,0M89.6,2.1a3.4,3.4 0 1 0 6.8,0a3.4,3.4 0 1 0 -6.8,0M84.6,5.0a1.9,1.9 0 1 0 3.9,0a1.9,1.9 0 1 0 -3.9,0M110.9,5.0a2.0,2.0 0 1 0 4.0,0a2.0,2.0 0 1 0 -4.0,0M95.1,4.1a3.0,3.0 0 1 0 5.9,0a3.0,3.0 0 1 0 -5.9,0M79.1,0.2a3.4,3.4 0 1 0 6.8,0a3.4,3.4 0 1 0 -6.8,0M90.4,-1.4a2.5,2.5 0 1 0 4.9,0a2.5,2.5 0 1 0 -4.9,0M104.0,3.1a3.0,3.0 0 1 0 6.1,0a3.0,3.0 0 1 0 -6.1,0M91.9,0.5a3.2,3.2 0 1 0 6.4,0a3.2,3.2 0 1 0 -6.4,0M90.7,2.3a2.7,2.7 0 1 0 5.5,0a2.7,2.7 0 1 0 -5.5,0M78.1,5.5a1.6,1.6 0 1 0 3.1,0a1.6,1.6 0 1 0 -3.1,0M88.1,0.8a3.0,3.0 0 1 0 6.1,0a3.0,3.0 0 1 0 -6.1,0M92.7,6.0a2.5,2.5 0 1 0 5.0,0a2.5,2.5 0 1 0 -5.0,0M81.0,0.3a2.6,2.6 0 1 0 5.3,0a2.6,2.6 0 1 0 -5.3,0M99.2,3.1a1.8,1.8 0 1 0 3.5,0a1.8,1.8 0 1 0 -3.5,0" fill="url(#gpat)" opacity="0.62"/><ellipse cx="110" cy="35" rx="3.0" ry="6.0" transform="rotate(30 110 35)" fill="#9c9ce0" opacity="0.6"/><path d="M100.7,37.8a3.1,3.1 0 1 0 6.2,0a3.1,3.1 0 1 0 -6.2,0M109.6,40.3a2.2,2.2 0 1 0 4.5,0a2.2,2.2 0 1 0 -4.5,0M106.9,33.5a1.8,1.8 0 1 0 3.7,0a1.8,1.8 0 1 0 -3.7,0M107.1,29.3a3.5,3.5 0 1 0 7.1,0a3.5,3.5 0 1 0 -7.1,0M105.2,33.0a1.9,1.9 0 1 0 3.8,0a1.9,1.9 0 1 0 -3.8,0M105.0,31.7a2.0,2.0 0 1 0 4.1,0a2.0,2.0 0 1 0 -4.1,0M111.3,35.7a3.1,3.1 0 1 0 6.2,0a3.1,3.1 0 1 0 -6.2,0M111.4,25.2a1.7,1.7 0 1 0 3.4,0a1.7,1.7 0 1 0 -3.4,0M113.1,35.4a1.8,1.8 0 1 0 3.7,0a1.8,1.8 0 1 0 -3.7,0M107.4,33.0a2.4,2.4 0 1 0 4.8,0a2.4,2.4 0 1 0 -4.8,0M107.7,36.9a2.4,2.4 0 1 0 4.9,0a2.4,2.4 0 1 0 -4.9,0M113.4,28.7a3.5,3.5 0 1 0 6.9,0a3.5,3.5 0 1 0 -6.9,0M112.6,27.4a2.8,2.8 0 1 0 5.5,0a2.8,2.8 0 1 0 -5.5,0M109.8,35.1a2.6,2.6 0 1 0 5.2,0a2.6,2.6 0 1 0 -5.2,0M106.3,34.3a3.3,3.3 0 1 0 6.7,0a3.3,3.3 0 1 0 -6.7,0M108.7,28.8a3.2,3.2 0 1 0 6.3,0a3.2,3.2 0 1 0 -6.3,0" fill="#9c9ce0" opacity="0.6"/><use href="#lakes" width="116" height="61"/></svg><svg x="513.7" y="228.8" width="116" height="61.2" viewBox="0 0 116 61" preserveAspectRatio="none" overflow="hidden"><use href="#usbase" width="116" height="61"/><ellipse cx="80" cy="12" rx="15.0" ry="7.0" transform="rotate(0 80 12)" fill="url(#gpat)" opacity="0.62"/><path d="M104.1,8.7a3.0,3.0 0 1 0 6.1,0a3.0,3.0 0 1 0 -6.1,0M79.4,20.0a3.0,3.0 0 1 0 6.0,0a3.0,3.0 0 1 0 -6.0,0M79.5,10.3a1.9,1.9 0 1 0 3.7,0a1.9,1.9 0 1 0 -3.7,0M85.3,9.1a2.9,2.9 0 1 0 5.8,0a2.9,2.9 0 1 0 -5.8,0M65.1,21.9a3.3,3.3 0 1 0 6.6,0a3.3,3.3 0 1 0 -6.6,0M61.5,7.7a2.2,2.2 0 1 0 4.4,0a2.2,2.2 0 1 0 -4.4,0M60.5,4.3a2.4,2.4 0 1 0 4.7,0a2.4,2.4 0 1 0 -4.7,0M56.5,14.2a2.0,2.0 0 1 0 4.1,0a2.0,2.0 0 1 0 -4.1,0M88.0,21.5a1.7,1.7 0 1 0 3.4,0a1.7,1.7 0 1 0 -3.4,0M54.8,4.8a3.2,3.2 0 1 0 6.5,0a3.2,3.2 0 1 0 -6.5,0M76.3,21.0a3.4,3.4 0 1 0 6.9,0a3.4,3.4 0 1 0 -6.9,0M60.5,23.3a1.9,1.9 0 1 0 3.8,0a1.9,1.9 0 1 0 -3.8,0M80.4,9.6a2.9,2.9 0 1 0 5.8,0a2.9,2.9 0 1 0 -5.8,0M84.8,2.3a2.8,2.8 0 1 0 5.7,0a2.8,2.8 0 1 0 -5.7,0M103.8,4.8a1.9,1.9 0 1 0 3.8,0a1.9,1.9 0 1 0 -3.8,0M71.8,11.6a2.3,2.3 0 1 0 4.6,0a2.3,2.3 0 1 0 -4.6,0M84.5,16.4a2.8,2.8 0 1 0 5.6,0a2.8,2.8 0 1 0 -5.6,0M88.6,14.8a1.5,1.5 0 1 0 3.0,0a1.5,1.5 0 1 0 -3.0,0M84.1,5.6a1.7,1.7 0 1 0 3.3,0a1.7,1.7 0 1 0 -3.3,0M58.8,3.8a2.8,2.8 0 1 0 5.6,0a2.8,2.8 0 1 0 -5.6,0M56.0,9.0a3.0,3.0 0 1 0 6.0,0a3.0,3.0 0 1 0 -6.0,0M66.9,23.9a3.0,3.0 0 1 0 5.9,0a3.0,3.0 0 1 0 -5.9,0M94.5,1.7a3.3,3.3 0 1 0 6.5,0a3.3,3.3 0 1 0 -6.5,0M55.4,10.8a3.0,3.0 0 1 0 6.1,0a3.0,3.0 0 1 0 -6.1,0M72.2,10.9a3.4,3.4 0 1 0 6.9,0a3.4,3.4 0 1 0 -6.9,0M84.1,21.2a2.4,2.4 0 1 0 4.9,0a2.4,2.4 0 1 0 -4.9,0M96.3,17.9a2.7,2.7 0 1 0 5.5,0a2.7,2.7 0 1 0 -5.5,0M86.9,1.9a2.1,2.1 0 1 0 4.3,0a2.1,2.1 0 1 0 -4.3,0M50.2,6.6a2.8,2.8 0 1 0 5.7,0a2.8,2.8 0 1 0 -5.7,0M78.8,10.8a2.9,2.9 0 1 0 5.9,0a2.9,2.9 0 1 0 -5.9,0M80.7,17.5a2.2,2.2 0 1 0 4.4,0a2.2,2.2 0 1 0 -4.4,0M81.9,15.7a1.9,1.9 0 1 0 3.9,0a1.9,1.9 0 1 0 -3.9,0M78.7,18.9a3.2,3.2 0 1 0 6.4,0a3.2,3.2 0 1 0 -6.4,0M90.0,15.1a1.6,1.6 0 1 0 3.2,0a1.6,1.6 0 1 0 -3.2,0M63.0,11.7a2.6,2.6 0 1 0 5.2,0a2.6,2.6 0 1 0 -5.2,0M78.5,18.2a2.5,2.5 0 1 0 5.0,0a2.5,2.5 0 1 0 -5.0,0M102.7,17.7a2.7,2.7 0 1 0 5.4,0a2.7,2.7 0 1 0 -5.4,0M58.9,18.3a3.5,3.5 0 1 0 7.0,0a3.5,3.5 0 1 0 -7.0,0M59.2,12.3a2.0,2.0 0 1 0 3.9,0a2.0,2.0 0 1 0 -3.9,0M57.9,20.4a2.8,2.8 0 1 0 5.6,0a2.8,2.8 0 1 0 -5.6,0M73.6,25.1a1.8,1.8 0 1 0 3.6,0a1.8,1.8 0 1 0 -3.6,0M60.3,21.7a3.4,3.4 0 1 0 6.8,0a3.4,3.4 0 1 0 -6.8,0M74.3,12.4a2.7,2.7 0 1 0 5.4,0a2.7,2.7 0 1 0 -5.4,0M73.2,13.1a2.2,2.2 0 1 0 4.5,0a2.2,2.2 0 1 0 -4.5,0M82.4,10.2a1.9,1.9 0 1 0 3.7,0a1.9,1.9 0 1 0 -3.7,0M91.2,22.8a2.1,2.1 0 1 0 4.3,0a2.1,2.1 0 1 0 -4.3,0M68.6,1.5a1.5,1.5 0 1 0 3.1,0a1.5,1.5 0 1 0 -3.1,0M67.2,13.8a3.2,3.2 0 1 0 6.4,0a3.2,3.2 0 1 0 -6.4,0M58.6,12.6a3.2,3.2 0 1 0 6.4,0a3.2,3.2 0 1 0 -6.4,0M81.7,8.7a1.7,1.7 0 1 0 3.4,0a1.7,1.7 0 1 0 -3.4,0M70.1,19.0a2.4,2.4 0 1 0 4.9,0a2.4,2.4 0 1 0 -4.9,0M50.5,18.1a2.9,2.9 0 1 0 5.8,0a2.9,2.9 0 1 0 -5.8,0M100.9,9.4a2.0,2.0 0 1 0 4.0,0a2.0,2.0 0 1 0 -4.0,0M66.3,9.7a2.7,2.7 0 1 0 5.5,0a2.7,2.7 0 1 0 -5.5,0M95.9,22.6a2.1,2.1 0 1 0 4.3,0a2.1,2.1 0 1 0 -4.3,0M89.2,8.0a1.9,1.9 0 1 0 3.9,0a1.9,1.9 0 1 0 -3.9,0M77.4,24.7a3.2,3.2 0 1 0 6.5,0a3.2,3.2 0 1 0 -6.5,0M77.5,1.4a1.8,1.8 0 1 0 3.6,0a1.8,1.8 0 1 0 -3.6,0M76.9,14.5a3.5,3.5 0 1 0 6.9,0a3.5,3.5 0 1 0 -6.9,0M96.1,20.5a1.5,1.5 0 1 0 3.0,0a1.5,1.5 0 1 0 -3.0,0M73.1,22.6a1.9,1.9 0 1 0 3.8,0a1.9,1.9 0 1 0 -3.8,0M103.6,17.6a2.1,2.1 0 1 0 4.2,0a2.1,2.1 0 1 0 -4.2,0M101.6,12.5a3.6,3.6 0 1 0 7.2,0a3.6,3.6 0 1 0 -7.2,0M72.2,11.3a2.4,2.4 0 1 0 4.8,0a2.4,2.4 0 1 0 -4.8,0M66.1,7.6a2.4,2.4 0 1 0 4.8,0a2.4,2.4 0 1 0 -4.8,0M75.5,0.7a3.2,3.2 0 1 0 6.5,0a3.2,3.2 0 1 0 -6.5,0M97.0,8.9a3.6,3.6 0 1 0 7.1,0a3.6,3.6 0 1 0 -7.1,0M93.0,18.8a2.9,2.9 0 1 0 5.8,0a2.9,2.9 0 1 0 -5.8,0M96.1,7.8a2.4,2.4 0 1 0 4.8,0a2.4,2.4 0 1 0 -4.8,0M94.4,6.0a1.6,1.6 0 1 0 3.2,0a1.6,1.6 0 1 0 -3.2,0M62.3,14.2a2.9,2.9 0 1 0 5.8,0a2.9,2.9 0 1 0 -5.8,0M80.5,9.2a2.2,2.2 0 1 0 4.3,0a2.2,2.2 0 1 0 -4.3,0M98.7,4.6a3.1,3.1 0 1 0 6.3,0a3.1,3.1 0 1 0 -6.3,0M54.2,20.8a3.3,3.3 0 1 0 6.6,0a3.3,3.3 0 1 0 -6.6,0" fill="url(#gpat)" opacity="0.62"/><ellipse cx="78" cy="12" rx="5.0" ry="2.5" transform="rotate(0 78 12)" fill="#a8582a" opacity="0.55"/><path d="M78.2,8.7a2.8,2.8 0 1 0 5.7,0a2.8,2.8 0 1 0 -5.7,0M77.7,12.7a1.5,1.5 0 1 0 3.1,0a1.5,1.5 0 1 0 -3.1,0M81.2,13.2a3.5,3.5 0 1 0 7.0,0a3.5,3.5 0 1 0 -7.0,0M67.0,10.0a3.1,3.1 0 1 0 6.2,0a3.1,3.1 0 1 0 -6.2,0M80.4,11.1a2.5,2.5 0 1 0 5.1,0a2.5,2.5 0 1 0 -5.1,0M80.1,10.7a3.0,3.0 0 1 0 5.9,0a3.0,3.0 0 1 0 -5.9,0M72.7,13.0a1.9,1.9 0 1 0 3.9,0a1.9,1.9 0 1 0 -3.9,0M73.6,12.7a3.4,3.4 0 1 0 6.7,0a3.4,3.4 0 1 0 -6.7,0M71.8,13.9a3.2,3.2 0 1 0 6.4,0a3.2,3.2 0 1 0 -6.4,0M84.3,12.2a2.4,2.4 0 1 0 4.9,0a2.4,2.4 0 1 0 -4.9,0M79.8,13.7a3.6,3.6 0 1 0 7.1,0a3.6,3.6 0 1 0 -7.1,0M81.3,12.7a1.9,1.9 0 1 0 3.7,0a1.9,1.9 0 1 0 -3.7,0" fill="#a8582a" opacity="0.55"/><ellipse cx="75" cy="32" rx="4.0" ry="9.0" transform="rotate(35 75 32)" fill="#45458a" opacity="0.6"/><path d="M71.8,26.7a3.3,3.3 0 1 0 6.6,0a3.3,3.3 0 1 0 -6.6,0M61.5,39.9a1.8,1.8 0 1 0 3.5,0a1.8,1.8 0 1 0 -3.5,0M71.9,34.5a1.6,1.6 0 1 0 3.2,0a1.6,1.6 0 1 0 -3.2,0M67.2,43.8a2.7,2.7 0 1 0 5.3,0a2.7,2.7 0 1 0 -5.3,0M76.7,24.6a2.8,2.8 0 1 0 5.5,0a2.8,2.8 0 1 0 -5.5,0M77.3,33.8a2.0,2.0 0 1 0 4.0,0a2.0,2.0 0 1 0 -4.0,0M65.4,47.1a2.8,2.8 0 1 0 5.7,0a2.8,2.8 0 1 0 -5.7,0M68.5,29.2a1.7,1.7 0 1 0 3.3,0a1.7,1.7 0 1 0 -3.3,0M65.3,44.8a2.0,2.0 0 1 0 4.1,0a2.0,2.0 0 1 0 -4.1,0M67.8,26.4a1.9,1.9 0 1 0 3.8,0a1.9,1.9 0 1 0 -3.8,0M64.7,30.3a3.1,3.1 0 1 0 6.1,0a3.1,3.1 0 1 0 -6.1,0M83.9,21.5a2.7,2.7 0 1 0 5.4,0a2.7,2.7 0 1 0 -5.4,0M65.0,42.9a3.4,3.4 0 1 0 6.9,0a3.4,3.4 0 1 0 -6.9,0M68.9,40.4a1.9,1.9 0 1 0 3.8,0a1.9,1.9 0 1 0 -3.8,0M76.9,29.9a1.8,1.8 0 1 0 3.6,0a1.8,1.8 0 1 0 -3.6,0M73.9,21.0a2.4,2.4 0 1 0 4.8,0a2.4,2.4 0 1 0 -4.8,0M81.3,19.6a2.3,2.3 0 1 0 4.6,0a2.3,2.3 0 1 0 -4.6,0M73.3,40.9a2.8,2.8 0 1 0 5.6,0a2.8,2.8 0 1 0 -5.6,0M80.9,32.6a1.6,1.6 0 1 0 3.3,0a1.6,1.6 0 1 0 -3.3,0M67.8,40.6a3.0,3.0 0 1 0 6.0,0a3.0,3.0 0 1 0 -6.0,0M67.3,37.8a1.9,1.9 0 1 0 3.8,0a1.9,1.9 0 1 0 -3.8,0M64.2,41.9a3.0,3.0 0 1 0 6.0,0a3.0,3.0 0 1 0 -6.0,0M76.2,29.0a2.7,2.7 0 1 0 5.3,0a2.7,2.7 0 1 0 -5.3,0M78.4,33.3a1.8,1.8 0 1 0 3.5,0a1.8,1.8 0 1 0 -3.5,0M77.7,18.6a1.6,1.6 0 1 0 3.2,0a1.6,1.6 0 1 0 -3.2,0M73.0,38.3a2.3,2.3 0 1 0 4.5,0a2.3,2.3 0 1 0 -4.5,0M72.1,35.8a2.4,2.4 0 1 0 4.8,0a2.4,2.4 0 1 0 -4.8,0M79.8,32.3a2.1,2.1 0 1 0 4.2,0a2.1,2.1 0 1 0 -4.2,0" fill="#45458a" opacity="0.6"/><ellipse cx="40" cy="15" rx="4.0" ry="4.0" transform="rotate(0 40 15)" fill="url(#gpat)" opacity="0.62"/><path d="M42.3,13.9a1.8,1.8 0 1 0 3.6,0a1.8,1.8 0 1 0 -3.6,0M37.5,15.9a3.4,3.4 0 1 0 6.8,0a3.4,3.4 0 1 0 -6.8,0M29.6,13.4a2.6,2.6 0 1 0 5.3,0a2.6,2.6 0 1 0 -5.3,0M42.2,17.1a2.2,2.2 0 1 0 4.4,0a2.2,2.2 0 1 0 -4.4,0M38.3,16.9a2.9,2.9 0 1 0 5.9,0a2.9,2.9 0 1 0 -5.9,0M43.3,9.4a2.0,2.0 0 1 0 4.0,0a2.0,2.0 0 1 0 -4.0,0M33.7,12.3a3.3,3.3 0 1 0 6.5,0a3.3,3.3 0 1 0 -6.5,0M38.8,14.6a1.9,1.9 0 1 0 3.8,0a1.9,1.9 0 1 0 -3.8,0M42.1,9.2a3.3,3.3 0 1 0 6.6,0a3.3,3.3 0 1 0 -6.6,0M42.6,17.4a3.1,3.1 0 1 0 6.2,0a3.1,3.1 0 1 0 -6.2,0M31.6,12.5a3.1,3.1 0 1 0 6.3,0a3.1,3.1 0 1 0 -6.3,0M42.1,17.2a3.5,3.5 0 1 0 7.1,0a3.5,3.5 0 1 0 -7.1,0M33.6,13.5a1.8,1.8 0 1 0 3.6,0a1.8,1.8 0 1 0 -3.6,0M41.6,10.8a3.5,3.5 0 1 0 7.0,0a3.5,3.5 0 1 0 -7.0,0" fill="url(#gpat)" opacity="0.62"/><ellipse cx="105" cy="45" rx="4.0" ry="7.5" transform="rotate(35 105 45)" fill="#9c9ce0" opacity="0.6"/><path d="M108.6,46.4a3.3,3.3 0 1 0 6.6,0a3.3,3.3 0 1 0 -6.6,0M111.7,37.0a2.4,2.4 0 1 0 4.7,0a2.4,2.4 0 1 0 -4.7,0M107.2,33.5a2.1,2.1 0 1 0 4.1,0a2.1,2.1 0 1 0 -4.1,0M110.4,36.5a2.3,2.3 0 1 0 4.6,0a2.3,2.3 0 1 0 -4.6,0M94.3,45.7a1.6,1.6 0 1 0 3.3,0a1.6,1.6 0 1 0 -3.3,0M106.1,50.5a1.7,1.7 0 1 0 3.4,0a1.7,1.7 0 1 0 -3.4,0M113.1,38.4a2.3,2.3 0 1 0 4.5,0a2.3,2.3 0 1 0 -4.5,0M92.9,50.8a3.4,3.4 0 1 0 6.7,0a3.4,3.4 0 1 0 -6.7,0M105.0,33.3a2.2,2.2 0 1 0 4.4,0a2.2,2.2 0 1 0 -4.4,0M95.2,43.4a3.1,3.1 0 1 0 6.1,0a3.1,3.1 0 1 0 -6.1,0M95.4,47.9a3.3,3.3 0 1 0 6.6,0a3.3,3.3 0 1 0 -6.6,0M106.0,35.6a2.0,2.0 0 1 0 4.1,0a2.0,2.0 0 1 0 -4.1,0M99.8,46.8a2.0,2.0 0 1 0 4.0,0a2.0,2.0 0 1 0 -4.0,0M102.6,50.0a2.8,2.8 0 1 0 5.6,0a2.8,2.8 0 1 0 -5.6,0M99.5,37.0a2.7,2.7 0 1 0 5.4,0a2.7,2.7 0 1 0 -5.4,0M95.4,49.6a3.2,3.2 0 1 0 6.5,0a3.2,3.2 0 1 0 -6.5,0M104.8,47.4a2.4,2.4 0 1 0 4.9,0a2.4,2.4 0 1 0 -4.9,0M101.4,52.9a1.8,1.8 0 1 0 3.7,0a1.8,1.8 0 1 0 -3.7,0M103.6,34.1a2.3,2.3 0 1 0 4.6,0a2.3,2.3 0 1 0 -4.6,0M103.7,44.5a1.7,1.7 0 1 0 3.5,0a1.7,1.7 0 1 0 -3.5,0M100.4,56.1a2.1,2.1 0 1 0 4.2,0a2.1,2.1 0 1 0 -4.2,0M100.3,36.2a2.7,2.7 0 1 0 5.4,0a2.7,2.7 0 1 0 -5.4,0M94.5,47.2a2.9,2.9 0 1 0 5.8,0a2.9,2.9 0 1 0 -5.8,0M102.7,37.1a1.8,1.8 0 1 0 3.6,0a1.8,1.8 0 1 0 -3.6,0" fill="#9c9ce0" opacity="0.6"/><use href="#lakes" width="116" height="61"/></svg><svg x="631.7666666666667" y="228.8" width="116" height="61.2" viewBox="0 0 116 61" preserveAspectRatio="none" overflow="hidden"><use href="#usbase" width="116" height="61"/><ellipse cx="90" cy="15" rx="13.0" ry="8.0" transform="rotate(-10 90 15)" fill="url(#gpat)" opacity="0.62"/><path d="M96.6,6.6a3.2,3.2 0 1 0 6.3,0a3.2,3.2 0 1 0 -6.3,0M100.1,10.0a3.1,3.1 0 1 0 6.2,0a3.1,3.1 0 1 0 -6.2,0M83.5,21.4a2.2,2.2 0 1 0 4.5,0a2.2,2.2 0 1 0 -4.5,0M86.1,8.9a2.9,2.9 0 1 0 5.8,0a2.9,2.9 0 1 0 -5.8,0M82.3,21.3a2.4,2.4 0 1 0 4.8,0a2.4,2.4 0 1 0 -4.8,0M74.7,24.3a3.4,3.4 0 1 0 6.7,0a3.4,3.4 0 1 0 -6.7,0M96.5,9.5a3.6,3.6 0 1 0 7.1,0a3.6,3.6 0 1 0 -7.1,0M65.9,8.4a3.2,3.2 0 1 0 6.4,0a3.2,3.2 0 1 0 -6.4,0M73.7,16.0a3.5,3.5 0 1 0 6.9,0a3.5,3.5 0 1 0 -6.9,0M108.5,11.4a1.7,1.7 0 1 0 3.5,0a1.7,1.7 0 1 0 -3.5,0M94.4,0.9a3.3,3.3 0 1 0 6.7,0a3.3,3.3 0 1 0 -6.7,0M111.6,8.3a3.0,3.0 0 1 0 6.1,0a3.0,3.0 0 1 0 -6.1,0M74.1,24.8a2.6,2.6 0 1 0 5.1,0a2.6,2.6 0 1 0 -5.1,0M85.9,2.3a3.2,3.2 0 1 0 6.5,0a3.2,3.2 0 1 0 -6.5,0M66.7,17.3a3.5,3.5 0 1 0 7.0,0a3.5,3.5 0 1 0 -7.0,0M90.9,-0.8a3.0,3.0 0 1 0 5.9,0a3.0,3.0 0 1 0 -5.9,0M100.9,20.1a2.1,2.1 0 1 0 4.2,0a2.1,2.1 0 1 0 -4.2,0M88.5,20.7a1.7,1.7 0 1 0 3.5,0a1.7,1.7 0 1 0 -3.5,0M64.5,20.6a3.3,3.3 0 1 0 6.6,0a3.3,3.3 0 1 0 -6.6,0M107.2,9.2a1.5,1.5 0 1 0 3.1,0a1.5,1.5 0 1 0 -3.1,0M89.5,18.1a3.3,3.3 0 1 0 6.6,0a3.3,3.3 0 1 0 -6.6,0M80.4,28.8a2.4,2.4 0 1 0 4.9,0a2.4,2.4 0 1 0 -4.9,0M65.4,11.3a2.9,2.9 0 1 0 5.8,0a2.9,2.9 0 1 0 -5.8,0M106.9,17.5a2.2,2.2 0 1 0 4.5,0a2.2,2.2 0 1 0 -4.5,0M100.9,11.5a2.0,2.0 0 1 0 4.0,0a2.0,2.0 0 1 0 -4.0,0M102.0,7.7a1.7,1.7 0 1 0 3.3,0a1.7,1.7 0 1 0 -3.3,0M91.9,-0.7a2.5,2.5 0 1 0 5.1,0a2.5,2.5 0 1 0 -5.1,0M101.9,25.6a2.2,2.2 0 1 0 4.4,0a2.2,2.2 0 1 0 -4.4,0M87.4,18.3a3.4,3.4 0 1 0 6.7,0a3.4,3.4 0 1 0 -6.7,0M89.5,20.3a2.3,2.3 0 1 0 4.5,0a2.3,2.3 0 1 0 -4.5,0M77.5,1.4a1.9,1.9 0 1 0 3.9,0a1.9,1.9 0 1 0 -3.9,0M75.9,11.2a3.3,3.3 0 1 0 6.6,0a3.3,3.3 0 1 0 -6.6,0M65.8,19.8a3.3,3.3 0 1 0 6.5,0a3.3,3.3 0 1 0 -6.5,0M70.9,15.7a1.5,1.5 0 1 0 3.0,0a1.5,1.5 0 1 0 -3.0,0M99.7,24.4a3.1,3.1 0 1 0 6.2,0a3.1,3.1 0 1 0 -6.2,0M81.6,14.2a3.1,3.1 0 1 0 6.1,0a3.1,3.1 0 1 0 -6.1,0M98.6,0.7a3.1,3.1 0 1 0 6.2,0a3.1,3.1 0 1 0 -6.2,0M78.5,8.4a2.3,2.3 0 1 0 4.5,0a2.3,2.3 0 1 0 -4.5,0M97.4,25.4a2.2,2.2 0 1 0 4.4,0a2.2,2.2 0 1 0 -4.4,0M91.2,7.1a2.1,2.1 0 1 0 4.1,0a2.1,2.1 0 1 0 -4.1,0M99.3,17.2a3.1,3.1 0 1 0 6.3,0a3.1,3.1 0 1 0 -6.3,0M97.2,-0.4a1.6,1.6 0 1 0 3.1,0a1.6,1.6 0 1 0 -3.1,0M78.2,5.5a2.2,2.2 0 1 0 4.5,0a2.2,2.2 0 1 0 -4.5,0M106.7,6.8a2.2,2.2 0 1 0 4.3,0a2.2,2.2 0 1 0 -4.3,0M94.2,4.4a2.5,2.5 0 1 0 5.0,0a2.5,2.5 0 1 0 -5.0,0M71.3,19.7a1.6,1.6 0 1 0 3.1,0a1.6,1.6 0 1 0 -3.1,0M92.2,6.1a2.4,2.4 0 1 0 4.9,0a2.4,2.4 0 1 0 -4.9,0M98.8,24.1a1.6,1.6 0 1 0 3.3,0a1.6,1.6 0 1 0 -3.3,0M98.4,14.3a3.3,3.3 0 1 0 6.7,0a3.3,3.3 0 1 0 -6.7,0M77.2,4.4a1.7,1.7 0 1 0 3.4,0a1.7,1.7 0 1 0 -3.4,0M66.7,22.8a3.1,3.1 0 1 0 6.1,0a3.1,3.1 0 1 0 -6.1,0M81.2,17.5a2.3,2.3 0 1 0 4.6,0a2.3,2.3 0 1 0 -4.6,0M109.3,6.2a2.8,2.8 0 1 0 5.6,0a2.8,2.8 0 1 0 -5.6,0M77.1,26.9a2.7,2.7 0 1 0 5.4,0a2.7,2.7 0 1 0 -5.4,0M65.0,22.5a2.7,2.7 0 1 0 5.4,0a2.7,2.7 0 1 0 -5.4,0M106.4,19.5a3.0,3.0 0 1 0 5.9,0a3.0,3.0 0 1 0 -5.9,0M102.5,19.2a3.6,3.6 0 1 0 7.1,0a3.6,3.6 0 1 0 -7.1,0M73.0,6.9a2.5,2.5 0 1 0 5.0,0a2.5,2.5 0 1 0 -5.0,0M66.5,26.1a2.1,2.1 0 1 0 4.2,0a2.1,2.1 0 1 0 -4.2,0M79.9,17.4a2.6,2.6 0 1 0 5.2,0a2.6,2.6 0 1 0 -5.2,0M73.4,5.8a3.6,3.6 0 1 0 7.1,0a3.6,3.6 0 1 0 -7.1,0M88.1,22.3a2.3,2.3 0 1 0 4.5,0a2.3,2.3 0 1 0 -4.5,0M77.9,30.2a1.9,1.9 0 1 0 3.9,0a1.9,1.9 0 1 0 -3.9,0M62.9,22.2a2.4,2.4 0 1 0 4.7,0a2.4,2.4 0 1 0 -4.7,0M72.3,20.4a2.2,2.2 0 1 0 4.4,0a2.2,2.2 0 1 0 -4.4,0M80.7,29.8a1.5,1.5 0 1 0 3.1,0a1.5,1.5 0 1 0 -3.1,0M109.0,17.0a3.0,3.0 0 1 0 6.0,0a3.0,3.0 0 1 0 -6.0,0M72.6,22.8a2.5,2.5 0 1 0 5.0,0a2.5,2.5 0 1 0 -5.0,0M88.9,25.5a2.2,2.2 0 1 0 4.5,0a2.2,2.2 0 1 0 -4.5,0M73.9,12.2a2.7,2.7 0 1 0 5.5,0a2.7,2.7 0 1 0 -5.5,0M113.8,14.7a1.5,1.5 0 1 0 3.1,0a1.5,1.5 0 1 0 -3.1,0M73.1,19.4a1.8,1.8 0 1 0 3.5,0a1.8,1.8 0 1 0 -3.5,0M104.7,10.3a1.9,1.9 0 1 0 3.8,0a1.9,1.9 0 1 0 -3.8,0" fill="url(#gpat)" opacity="0.62"/><ellipse cx="98" cy="10" rx="8.0" ry="2.5" transform="rotate(-15 98 10)" fill="#a8582a" opacity="0.55"/><path d="M92.7,12.7a2.6,2.6 0 1 0 5.3,0a2.6,2.6 0 1 0 -5.3,0M111.2,5.9a2.0,2.0 0 1 0 4.0,0a2.0,2.0 0 1 0 -4.0,0M91.1,7.3a3.1,3.1 0 1 0 6.2,0a3.1,3.1 0 1 0 -6.2,0M98.3,10.4a1.8,1.8 0 1 0 3.5,0a1.8,1.8 0 1 0 -3.5,0M99.2,8.6a1.6,1.6 0 1 0 3.2,0a1.6,1.6 0 1 0 -3.2,0M92.5,11.3a1.9,1.9 0 1 0 3.7,0a1.9,1.9 0 1 0 -3.7,0M101.0,7.7a3.1,3.1 0 1 0 6.2,0a3.1,3.1 0 1 0 -6.2,0M100.6,5.7a2.4,2.4 0 1 0 4.9,0a2.4,2.4 0 1 0 -4.9,0M98.2,12.1a2.6,2.6 0 1 0 5.2,0a2.6,2.6 0 1 0 -5.2,0M85.1,11.2a2.3,2.3 0 1 0 4.5,0a2.3,2.3 0 1 0 -4.5,0M103.0,5.7a2.3,2.3 0 1 0 4.6,0a2.3,2.3 0 1 0 -4.6,0M81.4,14.4a2.8,2.8 0 1 0 5.5,0a2.8,2.8 0 1 0 -5.5,0M93.9,5.8a2.2,2.2 0 1 0 4.5,0a2.2,2.2 0 1 0 -4.5,0M94.3,8.8a2.5,2.5 0 1 0 5.0,0a2.5,2.5 0 1 0 -5.0,0M87.0,13.2a1.8,1.8 0 1 0 3.7,0a1.8,1.8 0 1 0 -3.7,0M97.9,6.5a2.3,2.3 0 1 0 4.7,0a2.3,2.3 0 1 0 -4.7,0M106.1,10.2a3.3,3.3 0 1 0 6.6,0a3.3,3.3 0 1 0 -6.6,0" fill="#a8582a" opacity="0.55"/><ellipse cx="100" cy="42" rx="3.0" ry="11.0" transform="rotate(35 100 42)" fill="#9c9ce0" opacity="0.6"/><path d="M92.0,53.1a2.1,2.1 0 1 0 4.2,0a2.1,2.1 0 1 0 -4.2,0M88.2,58.4a2.8,2.8 0 1 0 5.6,0a2.8,2.8 0 1 0 -5.6,0M106.9,36.3a2.2,2.2 0 1 0 4.4,0a2.2,2.2 0 1 0 -4.4,0M101.6,36.5a2.7,2.7 0 1 0 5.5,0a2.7,2.7 0 1 0 -5.5,0M96.9,40.6a2.1,2.1 0 1 0 4.2,0a2.1,2.1 0 1 0 -4.2,0M97.2,40.0a1.7,1.7 0 1 0 3.3,0a1.7,1.7 0 1 0 -3.3,0M101.9,27.7a2.7,2.7 0 1 0 5.5,0a2.7,2.7 0 1 0 -5.5,0M101.9,44.2a1.7,1.7 0 1 0 3.4,0a1.7,1.7 0 1 0 -3.4,0M91.0,53.6a3.3,3.3 0 1 0 6.7,0a3.3,3.3 0 1 0 -6.7,0M110.6,26.9a2.7,2.7 0 1 0 5.5,0a2.7,2.7 0 1 0 -5.5,0M107.6,28.7a1.8,1.8 0 1 0 3.7,0a1.8,1.8 0 1 0 -3.7,0M96.0,37.8a3.2,3.2 0 1 0 6.4,0a3.2,3.2 0 1 0 -6.4,0M104.6,35.0a1.8,1.8 0 1 0 3.6,0a1.8,1.8 0 1 0 -3.6,0M96.2,44.4a1.9,1.9 0 1 0 3.8,0a1.9,1.9 0 1 0 -3.8,0M105.4,40.6a2.4,2.4 0 1 0 4.8,0a2.4,2.4 0 1 0 -4.8,0M101.7,37.9a3.6,3.6 0 1 0 7.2,0a3.6,3.6 0 1 0 -7.2,0M98.7,33.5a2.1,2.1 0 1 0 4.2,0a2.1,2.1 0 1 0 -4.2,0M100.4,45.1a2.8,2.8 0 1 0 5.6,0a2.8,2.8 0 1 0 -5.6,0M106.0,25.9a3.4,3.4 0 1 0 6.9,0a3.4,3.4 0 1 0 -6.9,0M100.7,47.2a1.7,1.7 0 1 0 3.4,0a1.7,1.7 0 1 0 -3.4,0M108.1,32.7a1.5,1.5 0 1 0 3.0,0a1.5,1.5 0 1 0 -3.0,0M86.1,49.3a3.4,3.4 0 1 0 6.7,0a3.4,3.4 0 1 0 -6.7,0M104.4,38.1a2.9,2.9 0 1 0 5.9,0a2.9,2.9 0 1 0 -5.9,0M103.5,29.5a3.1,3.1 0 1 0 6.2,0a3.1,3.1 0 1 0 -6.2,0M93.2,50.3a2.8,2.8 0 1 0 5.6,0a2.8,2.8 0 1 0 -5.6,0M110.7,24.1a1.6,1.6 0 1 0 3.3,0a1.6,1.6 0 1 0 -3.3,0" fill="#9c9ce0" opacity="0.6"/><use href="#lakes" width="116" height="61"/></svg><svg x="749.8333333333333" y="228.8" width="116" height="61.2" viewBox="0 0 116 61" preserveAspectRatio="none" overflow="hidden"><use href="#usbase" width="116" height="61"/><ellipse cx="88" cy="10" rx="14.0" ry="5.0" transform="rotate(0 88 10)" fill="url(#gpat)" opacity="0.62"/><path d="M80.0,0.8a1.5,1.5 0 1 0 3.1,0a1.5,1.5 0 1 0 -3.1,0M110.1,6.8a1.6,1.6 0 1 0 3.2,0a1.6,1.6 0 1 0 -3.2,0M94.8,1.6a1.9,1.9 0 1 0 3.8,0a1.9,1.9 0 1 0 -3.8,0M102.2,8.9a2.4,2.4 0 1 0 4.9,0a2.4,2.4 0 1 0 -4.9,0M71.7,3.2a3.1,3.1 0 1 0 6.1,0a3.1,3.1 0 1 0 -6.1,0M82.8,16.8a1.8,1.8 0 1 0 3.6,0a1.8,1.8 0 1 0 -3.6,0M83.3,16.9a1.7,1.7 0 1 0 3.3,0a1.7,1.7 0 1 0 -3.3,0M71.4,17.3a1.9,1.9 0 1 0 3.8,0a1.9,1.9 0 1 0 -3.8,0M80.0,10.8a3.0,3.0 0 1 0 6.1,0a3.0,3.0 0 1 0 -6.1,0M94.6,12.5a3.1,3.1 0 1 0 6.1,0a3.1,3.1 0 1 0 -6.1,0M65.8,12.6a2.8,2.8 0 1 0 5.6,0a2.8,2.8 0 1 0 -5.6,0M67.9,10.1a1.8,1.8 0 1 0 3.6,0a1.8,1.8 0 1 0 -3.6,0M93.9,13.5a2.0,2.0 0 1 0 4.0,0a2.0,2.0 0 1 0 -4.0,0M74.6,18.5a1.9,1.9 0 1 0 3.9,0a1.9,1.9 0 1 0 -3.9,0M96.1,13.8a1.8,1.8 0 1 0 3.6,0a1.8,1.8 0 1 0 -3.6,0M97.9,1.4a3.1,3.1 0 1 0 6.2,0a3.1,3.1 0 1 0 -6.2,0M105.4,7.9a2.5,2.5 0 1 0 4.9,0a2.5,2.5 0 1 0 -4.9,0M69.1,15.4a2.0,2.0 0 1 0 4.0,0a2.0,2.0 0 1 0 -4.0,0M67.8,9.1a2.9,2.9 0 1 0 5.8,0a2.9,2.9 0 1 0 -5.8,0M101.9,4.1a1.8,1.8 0 1 0 3.6,0a1.8,1.8 0 1 0 -3.6,0M65.4,5.3a2.6,2.6 0 1 0 5.3,0a2.6,2.6 0 1 0 -5.3,0M93.2,11.2a2.6,2.6 0 1 0 5.3,0a2.6,2.6 0 1 0 -5.3,0M81.0,3.1a3.0,3.0 0 1 0 6.1,0a3.0,3.0 0 1 0 -6.1,0M61.9,7.2a2.0,2.0 0 1 0 3.9,0a2.0,2.0 0 1 0 -3.9,0M98.1,2.5a1.7,1.7 0 1 0 3.5,0a1.7,1.7 0 1 0 -3.5,0M87.2,15.4a3.2,3.2 0 1 0 6.3,0a3.2,3.2 0 1 0 -6.3,0M80.2,8.0a3.0,3.0 0 1 0 6.1,0a3.0,3.0 0 1 0 -6.1,0M76.8,18.7a2.1,2.1 0 1 0 4.2,0a2.1,2.1 0 1 0 -4.2,0M98.5,13.4a2.5,2.5 0 1 0 4.9,0a2.5,2.5 0 1 0 -4.9,0M67.7,13.2a1.7,1.7 0 1 0 3.5,0a1.7,1.7 0 1 0 -3.5,0M83.6,12.0a3.6,3.6 0 1 0 7.1,0a3.6,3.6 0 1 0 -7.1,0M71.2,10.4a1.9,1.9 0 1 0 3.7,0a1.9,1.9 0 1 0 -3.7,0M84.6,9.6a1.8,1.8 0 1 0 3.7,0a1.8,1.8 0 1 0 -3.7,0M75.0,3.7a3.0,3.0 0 1 0 6.0,0a3.0,3.0 0 1 0 -6.0,0M94.1,5.3a3.1,3.1 0 1 0 6.2,0a3.1,3.1 0 1 0 -6.2,0M94.0,1.4a2.6,2.6 0 1 0 5.2,0a2.6,2.6 0 1 0 -5.2,0M86.5,8.2a1.9,1.9 0 1 0 3.8,0a1.9,1.9 0 1 0 -3.8,0M66.7,6.5a2.8,2.8 0 1 0 5.6,0a2.8,2.8 0 1 0 -5.6,0M80.5,11.1a2.2,2.2 0 1 0 4.3,0a2.2,2.2 0 1 0 -4.3,0M93.1,17.8a2.0,2.0 0 1 0 4.0,0a2.0,2.0 0 1 0 -4.0,0M87.0,2.7a2.3,2.3 0 1 0 4.6,0a2.3,2.3 0 1 0 -4.6,0M65.9,3.8a2.2,2.2 0 1 0 4.4,0a2.2,2.2 0 1 0 -4.4,0M110.2,13.2a2.1,2.1 0 1 0 4.2,0a2.1,2.1 0 1 0 -4.2,0M100.7,5.7a2.4,2.4 0 1 0 4.7,0a2.4,2.4 0 1 0 -4.7,0M89.9,7.2a3.3,3.3 0 1 0 6.6,0a3.3,3.3 0 1 0 -6.6,0M80.3,18.7a3.5,3.5 0 1 0 7.0,0a3.5,3.5 0 1 0 -7.0,0M93.0,5.1a3.5,3.5 0 1 0 7.1,0a3.5,3.5 0 1 0 -7.1,0M70.7,9.0a2.3,2.3 0 1 0 4.5,0a2.3,2.3 0 1 0 -4.5,0M104.7,14.0a2.4,2.4 0 1 0 4.9,0a2.4,2.4 0 1 0 -4.9,0M61.2,6.4a2.4,2.4 0 1 0 4.9,0a2.4,2.4 0 1 0 -4.9,0" fill="url(#gpat)" opacity="0.62"/><ellipse cx="8" cy="4" rx="3.0" ry="2.0" transform="rotate(0 8 4)" fill="url(#gpat)" opacity="0.62"/><path d="M10.9,4.5a1.7,1.7 0 1 0 3.4,0a1.7,1.7 0 1 0 -3.4,0M1.9,2.3a2.4,2.4 0 1 0 4.9,0a2.4,2.4 0 1 0 -4.9,0M4.8,3.0a2.3,2.3 0 1 0 4.5,0a2.3,2.3 0 1 0 -4.5,0M7.0,5.8a1.8,1.8 0 1 0 3.5,0a1.8,1.8 0 1 0 -3.5,0M5.4,7.6a3.6,3.6 0 1 0 7.1,0a3.6,3.6 0 1 0 -7.1,0M2.5,1.7a1.5,1.5 0 1 0 3.1,0a1.5,1.5 0 1 0 -3.1,0M1.9,6.9a3.4,3.4 0 1 0 6.8,0a3.4,3.4 0 1 0 -6.8,0M10.1,5.3a3.5,3.5 0 1 0 7.1,0a3.5,3.5 0 1 0 -7.1,0" fill="url(#gpat)" opacity="0.62"/><ellipse cx="108" cy="48" rx="3.0" ry="8.0" transform="rotate(30 108 48)" fill="#9c9ce0" opacity="0.6"/><path d="M104.7,54.3a3.4,3.4 0 1 0 6.8,0a3.4,3.4 0 1 0 -6.8,0M101.4,52.0a2.7,2.7 0 1 0 5.4,0a2.7,2.7 0 1 0 -5.4,0M107.7,37.6a2.0,2.0 0 1 0 3.9,0a2.0,2.0 0 1 0 -3.9,0M102.3,46.5a3.5,3.5 0 1 0 6.9,0a3.5,3.5 0 1 0 -6.9,0M114.7,43.1a1.8,1.8 0 1 0 3.6,0a1.8,1.8 0 1 0 -3.6,0M101.0,60.5a2.5,2.5 0 1 0 5.0,0a2.5,2.5 0 1 0 -5.0,0M114.1,40.4a1.6,1.6 0 1 0 3.1,0a1.6,1.6 0 1 0 -3.1,0M104.7,57.7a2.1,2.1 0 1 0 4.1,0a2.1,2.1 0 1 0 -4.1,0M99.4,52.4a1.6,1.6 0 1 0 3.2,0a1.6,1.6 0 1 0 -3.2,0M106.1,55.4a1.5,1.5 0 1 0 3.1,0a1.5,1.5 0 1 0 -3.1,0M100.3,54.1a1.7,1.7 0 1 0 3.4,0a1.7,1.7 0 1 0 -3.4,0M105.5,56.4a2.9,2.9 0 1 0 5.9,0a2.9,2.9 0 1 0 -5.9,0M100.8,46.5a3.4,3.4 0 1 0 6.8,0a3.4,3.4 0 1 0 -6.8,0M102.6,47.9a2.6,2.6 0 1 0 5.1,0a2.6,2.6 0 1 0 -5.1,0M101.5,46.4a2.2,2.2 0 1 0 4.5,0a2.2,2.2 0 1 0 -4.5,0M104.1,47.3a2.9,2.9 0 1 0 5.8,0a2.9,2.9 0 1 0 -5.8,0M112.6,42.3a3.3,3.3 0 1 0 6.5,0a3.3,3.3 0 1 0 -6.5,0M110.0,48.8a2.4,2.4 0 1 0 4.8,0a2.4,2.4 0 1 0 -4.8,0M109.5,41.4a2.1,2.1 0 1 0 4.3,0a2.1,2.1 0 1 0 -4.3,0M104.5,46.1a3.6,3.6 0 1 0 7.1,0a3.6,3.6 0 1 0 -7.1,0" fill="#9c9ce0" opacity="0.6"/><use href="#lakes" width="116" height="61"/></svg><svg x="867.9" y="228.8" width="116" height="61.2" viewBox="0 0 116 61" preserveAspectRatio="none" overflow="hidden"><use href="#usbase" width="116" height="61"/><ellipse cx="51" cy="12" rx="2.2" ry="7.0" transform="rotate(-30 51 12)" fill="url(#gpat)" opacity="0.62"/><path d="M52.9,21.2a3.5,3.5 0 1 0 7.1,0a3.5,3.5 0 1 0 -7.1,0M43.3,5.8a2.1,2.1 0 1 0 4.3,0a2.1,2.1 0 1 0 -4.3,0M55.8,19.8a3.1,3.1 0 1 0 6.2,0a3.1,3.1 0 1 0 -6.2,0M53.4,21.3a3.0,3.0 0 1 0 6.0,0a3.0,3.0 0 1 0 -6.0,0M48.5,7.5a2.2,2.2 0 1 0 4.3,0a2.2,2.2 0 1 0 -4.3,0M53.7,19.9a3.4,3.4 0 1 0 6.9,0a3.4,3.4 0 1 0 -6.9,0M46.0,7.6a2.3,2.3 0 1 0 4.6,0a2.3,2.3 0 1 0 -4.6,0M51.1,13.4a2.5,2.5 0 1 0 5.1,0a2.5,2.5 0 1 0 -5.1,0M53.1,16.5a2.0,2.0 0 1 0 4.0,0a2.0,2.0 0 1 0 -4.0,0M48.9,19.1a2.0,2.0 0 1 0 4.0,0a2.0,2.0 0 1 0 -4.0,0M44.1,8.1a2.1,2.1 0 1 0 4.2,0a2.1,2.1 0 1 0 -4.2,0M52.6,22.8a3.3,3.3 0 1 0 6.5,0a3.3,3.3 0 1 0 -6.5,0M41.0,0.9a3.0,3.0 0 1 0 6.1,0a3.0,3.0 0 1 0 -6.1,0M51.0,17.9a2.7,2.7 0 1 0 5.4,0a2.7,2.7 0 1 0 -5.4,0" fill="url(#gpat)" opacity="0.62"/><ellipse cx="88" cy="12" rx="13.0" ry="7.0" transform="rotate(0 88 12)" fill="url(#gpat)" opacity="0.62"/><path d="M66.8,4.1a3.4,3.4 0 1 0 6.8,0a3.4,3.4 0 1 0 -6.8,0M92.7,-1.2a2.9,2.9 0 1 0 5.8,0a2.9,2.9 0 1 0 -5.8,0M75.9,0.6a2.5,2.5 0 1 0 5.1,0a2.5,2.5 0 1 0 -5.1,0M92.7,-0.5a2.6,2.6 0 1 0 5.2,0a2.6,2.6 0 1 0 -5.2,0M76.4,19.2a2.8,2.8 0 1 0 5.6,0a2.8,2.8 0 1 0 -5.6,0M68.9,8.0a2.3,2.3 0 1 0 4.6,0a2.3,2.3 0 1 0 -4.6,0M82.9,0.4a3.5,3.5 0 1 0 6.9,0a3.5,3.5 0 1 0 -6.9,0M88.6,11.6a2.3,2.3 0 1 0 4.7,0a2.3,2.3 0 1 0 -4.7,0M84.4,1.8a2.8,2.8 0 1 0 5.6,0a2.8,2.8 0 1 0 -5.6,0M84.0,20.7a3.3,3.3 0 1 0 6.6,0a3.3,3.3 0 1 0 -6.6,0M72.9,0.5a3.4,3.4 0 1 0 6.9,0a3.4,3.4 0 1 0 -6.9,0M105.8,5.8a3.4,3.4 0 1 0 6.8,0a3.4,3.4 0 1 0 -6.8,0M105.7,3.9a2.4,2.4 0 1 0 4.7,0a2.4,2.4 0 1 0 -4.7,0M70.4,17.1a3.1,3.1 0 1 0 6.2,0a3.1,3.1 0 1 0 -6.2,0M106.7,10.4a2.4,2.4 0 1 0 4.8,0a2.4,2.4 0 1 0 -4.8,0M94.6,14.5a1.6,1.6 0 1 0 3.3,0a1.6,1.6 0 1 0 -3.3,0M86.0,12.2a2.3,2.3 0 1 0 4.7,0a2.3,2.3 0 1 0 -4.7,0M77.6,24.8a1.8,1.8 0 1 0 3.6,0a1.8,1.8 0 1 0 -3.6,0M105.2,19.3a3.4,3.4 0 1 0 6.9,0a3.4,3.4 0 1 0 -6.9,0M66.8,11.2a2.2,2.2 0 1 0 4.4,0a2.2,2.2 0 1 0 -4.4,0M75.3,16.5a1.7,1.7 0 1 0 3.4,0a1.7,1.7 0 1 0 -3.4,0M108.6,10.1a3.3,3.3 0 1 0 6.6,0a3.3,3.3 0 1 0 -6.6,0M98.8,21.0a1.6,1.6 0 1 0 3.3,0a1.6,1.6 0 1 0 -3.3,0M83.7,8.4a2.8,2.8 0 1 0 5.6,0a2.8,2.8 0 1 0 -5.6,0M98.5,23.6a3.4,3.4 0 1 0 6.8,0a3.4,3.4 0 1 0 -6.8,0M62.6,18.1a3.1,3.1 0 1 0 6.3,0a3.1,3.1 0 1 0 -6.3,0M95.2,23.7a3.3,3.3 0 1 0 6.7,0a3.3,3.3 0 1 0 -6.7,0M85.3,23.5a2.1,2.1 0 1 0 4.3,0a2.1,2.1 0 1 0 -4.3,0M103.6,13.6a1.8,1.8 0 1 0 3.6,0a1.8,1.8 0 1 0 -3.6,0M94.8,1.3a2.0,2.0 0 1 0 4.0,0a2.0,2.0 0 1 0 -4.0,0M80.3,14.0a2.3,2.3 0 1 0 4.5,0a2.3,2.3 0 1 0 -4.5,0M65.4,4.4a3.5,3.5 0 1 0 7.1,0a3.5,3.5 0 1 0 -7.1,0M72.2,5.5a3.3,3.3 0 1 0 6.7,0a3.3,3.3 0 1 0 -6.7,0M65.4,5.7a2.2,2.2 0 1 0 4.5,0a2.2,2.2 0 1 0 -4.5,0M94.5,8.0a2.3,2.3 0 1 0 4.7,0a2.3,2.3 0 1 0 -4.7,0M87.4,20.5a2.8,2.8 0 1 0 5.6,0a2.8,2.8 0 1 0 -5.6,0M90.0,10.9a2.7,2.7 0 1 0 5.4,0a2.7,2.7 0 1 0 -5.4,0M89.6,24.4a3.1,3.1 0 1 0 6.1,0a3.1,3.1 0 1 0 -6.1,0M110.2,9.3a2.9,2.9 0 1 0 5.7,0a2.9,2.9 0 1 0 -5.7,0M84.2,23.8a2.5,2.5 0 1 0 4.9,0a2.5,2.5 0 1 0 -4.9,0M83.8,16.6a3.4,3.4 0 1 0 6.8,0a3.4,3.4 0 1 0 -6.8,0M77.1,14.1a2.0,2.0 0 1 0 3.9,0a2.0,2.0 0 1 0 -3.9,0M89.0,14.5a3.1,3.1 0 1 0 6.1,0a3.1,3.1 0 1 0 -6.1,0M71.8,13.5a2.2,2.2 0 1 0 4.4,0a2.2,2.2 0 1 0 -4.4,0M82.5,21.9a2.7,2.7 0 1 0 5.4,0a2.7,2.7 0 1 0 -5.4,0M99.8,15.9a3.3,3.3 0 1 0 6.7,0a3.3,3.3 0 1 0 -6.7,0M81.4,2.2a2.3,2.3 0 1 0 4.7,0a2.3,2.3 0 1 0 -4.7,0M81.4,16.8a2.1,2.1 0 1 0 4.3,0a2.1,2.1 0 1 0 -4.3,0M89.8,13.8a1.8,1.8 0 1 0 3.5,0a1.8,1.8 0 1 0 -3.5,0M111.8,11.1a1.6,1.6 0 1 0 3.2,0a1.6,1.6 0 1 0 -3.2,0M80.5,15.8a2.2,2.2 0 1 0 4.5,0a2.2,2.2 0 1 0 -4.5,0M75.6,7.7a2.4,2.4 0 1 0 4.9,0a2.4,2.4 0 1 0 -4.9,0M94.5,21.0a1.8,1.8 0 1 0 3.6,0a1.8,1.8 0 1 0 -3.6,0M78.8,20.2a2.1,2.1 0 1 0 4.2,0a2.1,2.1 0 1 0 -4.2,0M62.7,12.8a2.4,2.4 0 1 0 4.8,0a2.4,2.4 0 1 0 -4.8,0M91.2,7.3a3.0,3.0 0 1 0 6.0,0a3.0,3.0 0 1 0 -6.0,0M97.1,-0.0a2.9,2.9 0 1 0 5.9,0a2.9,2.9 0 1 0 -5.9,0M76.7,22.7a2.8,2.8 0 1 0 5.6,0a2.8,2.8 0 1 0 -5.6,0M70.2,18.4a1.6,1.6 0 1 0 3.2,0a1.6,1.6 0 1 0 -3.2,0M95.7,12.3a3.4,3.4 0 1 0 6.9,0a3.4,3.4 0 1 0 -6.9,0M98.0,12.9a3.1,3.1 0 1 0 6.2,0a3.1,3.1 0 1 0 -6.2,0M97.7,5.9a2.6,2.6 0 1 0 5.1,0a2.6,2.6 0 1 0 -5.1,0M97.9,7.9a1.7,1.7 0 1 0 3.4,0a1.7,1.7 0 1 0 -3.4,0M82.2,23.8a2.2,2.2 0 1 0 4.4,0a2.2,2.2 0 1 0 -4.4,0" fill="url(#gpat)" opacity="0.62"/><ellipse cx="90" cy="7" rx="5.0" ry="3.0" transform="rotate(0 90 7)" fill="#a8582a" opacity="0.55"/><path d="M84.3,6.3a3.2,3.2 0 1 0 6.5,0a3.2,3.2 0 1 0 -6.5,0M97.4,5.6a1.8,1.8 0 1 0 3.7,0a1.8,1.8 0 1 0 -3.7,0M97.2,5.7a2.0,2.0 0 1 0 3.9,0a2.0,2.0 0 1 0 -3.9,0M84.2,8.2a2.3,2.3 0 1 0 4.5,0a2.3,2.3 0 1 0 -4.5,0M87.4,5.2a2.9,2.9 0 1 0 5.8,0a2.9,2.9 0 1 0 -5.8,0M88.8,5.7a1.8,1.8 0 1 0 3.7,0a1.8,1.8 0 1 0 -3.7,0M89.7,1.7a2.1,2.1 0 1 0 4.2,0a2.1,2.1 0 1 0 -4.2,0M94.5,3.8a1.5,1.5 0 1 0 3.1,0a1.5,1.5 0 1 0 -3.1,0M87.3,4.5a2.2,2.2 0 1 0 4.4,0a2.2,2.2 0 1 0 -4.4,0M87.3,6.3a3.2,3.2 0 1 0 6.5,0a3.2,3.2 0 1 0 -6.5,0M83.1,10.7a2.1,2.1 0 1 0 4.2,0a2.1,2.1 0 1 0 -4.2,0M83.1,5.7a2.7,2.7 0 1 0 5.5,0a2.7,2.7 0 1 0 -5.5,0M81.2,8.7a1.5,1.5 0 1 0 3.0,0a1.5,1.5 0 1 0 -3.0,0M86.3,4.2a3.2,3.2 0 1 0 6.4,0a3.2,3.2 0 1 0 -6.4,0" fill="#a8582a" opacity="0.55"/><ellipse cx="105" cy="45" rx="4.0" ry="8.0" transform="rotate(35 105 45)" fill="#9c9ce0" opacity="0.6"/><path d="M96.2,42.9a2.4,2.4 0 1 0 4.8,0a2.4,2.4 0 1 0 -4.8,0M100.2,57.4a3.0,3.0 0 1 0 6.0,0a3.0,3.0 0 1 0 -6.0,0M109.2,46.9a2.4,2.4 0 1 0 4.7,0a2.4,2.4 0 1 0 -4.7,0M92.1,48.9a3.3,3.3 0 1 0 6.5,0a3.3,3.3 0 1 0 -6.5,0M107.6,39.4a2.0,2.0 0 1 0 4.1,0a2.0,2.0 0 1 0 -4.1,0M100.9,46.0a1.9,1.9 0 1 0 3.8,0a1.9,1.9 0 1 0 -3.8,0M98.6,47.6a2.0,2.0 0 1 0 4.0,0a2.0,2.0 0 1 0 -4.0,0M100.2,37.8a2.2,2.2 0 1 0 4.4,0a2.2,2.2 0 1 0 -4.4,0M105.0,43.8a1.6,1.6 0 1 0 3.2,0a1.6,1.6 0 1 0 -3.2,0M97.8,57.2a2.0,2.0 0 1 0 3.9,0a2.0,2.0 0 1 0 -3.9,0M106.7,37.6a3.2,3.2 0 1 0 6.4,0a3.2,3.2 0 1 0 -6.4,0M98.3,43.5a3.4,3.4 0 1 0 6.8,0a3.4,3.4 0 1 0 -6.8,0M108.9,49.3a2.4,2.4 0 1 0 4.9,0a2.4,2.4 0 1 0 -4.9,0M101.1,39.6a3.3,3.3 0 1 0 6.5,0a3.3,3.3 0 1 0 -6.5,0M94.0,48.9a2.7,2.7 0 1 0 5.5,0a2.7,2.7 0 1 0 -5.5,0M109.1,44.3a2.4,2.4 0 1 0 4.7,0a2.4,2.4 0 1 0 -4.7,0M107.0,44.4a1.6,1.6 0 1 0 3.2,0a1.6,1.6 0 1 0 -3.2,0M99.4,47.0a3.4,3.4 0 1 0 6.9,0a3.4,3.4 0 1 0 -6.9,0M97.1,41.2a1.6,1.6 0 1 0 3.2,0a1.6,1.6 0 1 0 -3.2,0M95.6,44.3a1.5,1.5 0 1 0 3.0,0a1.5,1.5 0 1 0 -3.0,0M111.5,32.9a3.3,3.3 0 1 0 6.5,0a3.3,3.3 0 1 0 -6.5,0M100.1,54.2a2.6,2.6 0 1 0 5.1,0a2.6,2.6 0 1 0 -5.1,0M95.9,42.2a2.2,2.2 0 1 0 4.3,0a2.2,2.2 0 1 0 -4.3,0M96.4,58.4a2.7,2.7 0 1 0 5.3,0a2.7,2.7 0 1 0 -5.3,0M105.5,35.0a2.8,2.8 0 1 0 5.6,0a2.8,2.8 0 1 0 -5.6,0" fill="#9c9ce0" opacity="0.6"/><use href="#lakes" width="116" height="61"/></svg><svg x="985.9666666666667" y="228.8" width="116" height="61.2" viewBox="0 0 116 61" preserveAspectRatio="none" overflow="hidden"><use href="#usbase" width="116" height="61"/><ellipse cx="52" cy="10" rx="2.2" ry="6.0" transform="rotate(-35 52 10)" fill="url(#gpat)" opacity="0.62"/><path d="M55.5,14.9a3.3,3.3 0 1 0 6.7,0a3.3,3.3 0 1 0 -6.7,0M51.0,14.4a1.9,1.9 0 1 0 3.8,0a1.9,1.9 0 1 0 -3.8,0M53.1,11.2a1.9,1.9 0 1 0 3.8,0a1.9,1.9 0 1 0 -3.8,0M48.7,5.9a1.9,1.9 0 1 0 3.8,0a1.9,1.9 0 1 0 -3.8,0M50.6,3.7a1.7,1.7 0 1 0 3.4,0a1.7,1.7 0 1 0 -3.4,0M54.2,19.9a2.3,2.3 0 1 0 4.6,0a2.3,2.3 0 1 0 -4.6,0M42.9,5.6a2.9,2.9 0 1 0 5.7,0a2.9,2.9 0 1 0 -5.7,0M53.7,10.8a3.2,3.2 0 1 0 6.4,0a3.2,3.2 0 1 0 -6.4,0M48.2,13.3a3.0,3.0 0 1 0 6.0,0a3.0,3.0 0 1 0 -6.0,0M53.2,6.9a1.9,1.9 0 1 0 3.8,0a1.9,1.9 0 1 0 -3.8,0M43.8,3.0a3.6,3.6 0 1 0 7.1,0a3.6,3.6 0 1 0 -7.1,0M50.2,7.0a3.4,3.4 0 1 0 6.8,0a3.4,3.4 0 1 0 -6.8,0M49.0,7.2a2.4,2.4 0 1 0 4.7,0a2.4,2.4 0 1 0 -4.7,0" fill="url(#gpat)" opacity="0.62"/><ellipse cx="66" cy="25" rx="5.0" ry="2.0" transform="rotate(35 66 25)" fill="url(#gpat)" opacity="0.62"/><path d="M67.7,27.1a2.4,2.4 0 1 0 4.8,0a2.4,2.4 0 1 0 -4.8,0M60.5,21.2a3.1,3.1 0 1 0 6.3,0a3.1,3.1 0 1 0 -6.3,0M64.3,29.1a2.7,2.7 0 1 0 5.3,0a2.7,2.7 0 1 0 -5.3,0M69.7,30.5a3.2,3.2 0 1 0 6.3,0a3.2,3.2 0 1 0 -6.3,0M66.3,25.4a2.6,2.6 0 1 0 5.2,0a2.6,2.6 0 1 0 -5.2,0M65.7,30.1a2.8,2.8 0 1 0 5.6,0a2.8,2.8 0 1 0 -5.6,0M66.8,25.9a2.0,2.0 0 1 0 4.1,0a2.0,2.0 0 1 0 -4.1,0M69.3,31.3a2.9,2.9 0 1 0 5.7,0a2.9,2.9 0 1 0 -5.7,0M66.5,30.3a2.4,2.4 0 1 0 4.9,0a2.4,2.4 0 1 0 -4.9,0M55.9,22.5a3.0,3.0 0 1 0 6.1,0a3.0,3.0 0 1 0 -6.1,0" fill="url(#gpat)" opacity="0.62"/><ellipse cx="85" cy="31" rx="6.0" ry="2.0" transform="rotate(0 85 31)" fill="url(#gpat)" opacity="0.62"/><path d="M76.2,31.2a2.3,2.3 0 1 0 4.6,0a2.3,2.3 0 1 0 -4.6,0M79.2,32.1a1.9,1.9 0 1 0 3.7,0a1.9,1.9 0 1 0 -3.7,0M71.3,29.6a2.7,2.7 0 1 0 5.4,0a2.7,2.7 0 1 0 -5.4,0M79.9,31.4a3.4,3.4 0 1 0 6.9,0a3.4,3.4 0 1 0 -6.9,0M79.3,33.0a3.0,3.0 0 1 0 6.0,0a3.0,3.0 0 1 0 -6.0,0M86.3,30.1a1.6,1.6 0 1 0 3.3,0a1.6,1.6 0 1 0 -3.3,0M85.0,34.9a2.6,2.6 0 1 0 5.2,0a2.6,2.6 0 1 0 -5.2,0M90.2,32.9a2.6,2.6 0 1 0 5.1,0a2.6,2.6 0 1 0 -5.1,0M85.2,31.6a2.3,2.3 0 1 0 4.6,0a2.3,2.3 0 1 0 -4.6,0M89.1,30.5a3.6,3.6 0 1 0 7.2,0a3.6,3.6 0 1 0 -7.2,0M78.4,32.6a1.7,1.7 0 1 0 3.4,0a1.7,1.7 0 1 0 -3.4,0M77.7,30.0a3.5,3.5 0 1 0 7.0,0a3.5,3.5 0 1 0 -7.0,0" fill="url(#gpat)" opacity="0.62"/><ellipse cx="104" cy="22" rx="4.0" ry="2.2" transform="rotate(-40 104 22)" fill="url(#gpat)" opacity="0.62"/><path d="M100.3,22.2a2.8,2.8 0 1 0 5.6,0a2.8,2.8 0 1 0 -5.6,0M96.7,26.6a2.8,2.8 0 1 0 5.5,0a2.8,2.8 0 1 0 -5.5,0M105.7,20.8a2.8,2.8 0 1 0 5.7,0a2.8,2.8 0 1 0 -5.7,0M107.3,19.5a3.0,3.0 0 1 0 6.0,0a3.0,3.0 0 1 0 -6.0,0M103.0,22.4a2.3,2.3 0 1 0 4.7,0a2.3,2.3 0 1 0 -4.7,0M97.2,22.8a1.7,1.7 0 1 0 3.5,0a1.7,1.7 0 1 0 -3.5,0M97.2,23.7a1.9,1.9 0 1 0 3.7,0a1.9,1.9 0 1 0 -3.7,0M96.1,26.0a3.0,3.0 0 1 0 6.1,0a3.0,3.0 0 1 0 -6.1,0M102.8,21.5a3.0,3.0 0 1 0 6.0,0a3.0,3.0 0 1 0 -6.0,0M105.0,18.0a3.4,3.4 0 1 0 6.7,0a3.4,3.4 0 1 0 -6.7,0" fill="url(#gpat)" opacity="0.62"/><ellipse cx="100" cy="10" rx="7.0" ry="5.0" transform="rotate(0 100 10)" fill="url(#gpat)" opacity="0.62"/><path d="M93.0,12.7a2.9,2.9 0 1 0 5.8,0a2.9,2.9 0 1 0 -5.8,0M94.7,19.1a3.1,3.1 0 1 0 6.1,0a3.1,3.1 0 1 0 -6.1,0M104.3,11.7a3.2,3.2 0 1 0 6.3,0a3.2,3.2 0 1 0 -6.3,0M104.7,11.6a1.6,1.6 0 1 0 3.2,0a1.6,1.6 0 1 0 -3.2,0M92.2,0.8a3.0,3.0 0 1 0 6.0,0a3.0,3.0 0 1 0 -6.0,0M101.6,7.2a3.2,3.2 0 1 0 6.4,0a3.2,3.2 0 1 0 -6.4,0M110.7,9.6a2.0,2.0 0 1 0 3.9,0a2.0,2.0 0 1 0 -3.9,0M93.1,19.3a3.0,3.0 0 1 0 5.9,0a3.0,3.0 0 1 0 -5.9,0M92.4,12.7a1.6,1.6 0 1 0 3.2,0a1.6,1.6 0 1 0 -3.2,0M100.0,2.4a1.8,1.8 0 1 0 3.6,0a1.8,1.8 0 1 0 -3.6,0M106.2,17.2a3.4,3.4 0 1 0 6.8,0a3.4,3.4 0 1 0 -6.8,0M102.4,10.2a3.3,3.3 0 1 0 6.7,0a3.3,3.3 0 1 0 -6.7,0M85.2,13.0a2.5,2.5 0 1 0 5.0,0a2.5,2.5 0 1 0 -5.0,0M87.9,16.7a2.2,2.2 0 1 0 4.3,0a2.2,2.2 0 1 0 -4.3,0M109.7,6.8a1.8,1.8 0 1 0 3.5,0a1.8,1.8 0 1 0 -3.5,0M110.6,5.9a1.8,1.8 0 1 0 3.5,0a1.8,1.8 0 1 0 -3.5,0M88.4,8.4a2.0,2.0 0 1 0 4.1,0a2.0,2.0 0 1 0 -4.1,0M95.5,0.4a3.3,3.3 0 1 0 6.7,0a3.3,3.3 0 1 0 -6.7,0M100.4,4.0a2.9,2.9 0 1 0 5.7,0a2.9,2.9 0 1 0 -5.7,0M101.9,5.6a3.1,3.1 0 1 0 6.2,0a3.1,3.1 0 1 0 -6.2,0M85.6,13.8a2.2,2.2 0 1 0 4.5,0a2.2,2.2 0 1 0 -4.5,0M89.2,8.1a1.8,1.8 0 1 0 3.6,0a1.8,1.8 0 1 0 -3.6,0M85.2,10.6a2.8,2.8 0 1 0 5.6,0a2.8,2.8 0 1 0 -5.6,0M109.8,6.7a1.8,1.8 0 1 0 3.5,0a1.8,1.8 0 1 0 -3.5,0M89.1,10.0a1.5,1.5 0 1 0 3.1,0a1.5,1.5 0 1 0 -3.1,0M108.3,7.2a2.2,2.2 0 1 0 4.3,0a2.2,2.2 0 1 0 -4.3,0M88.8,4.3a3.1,3.1 0 1 0 6.2,0a3.1,3.1 0 1 0 -6.2,0" fill="url(#gpat)" opacity="0.62"/><ellipse cx="80" cy="37" rx="7.0" ry="2.0" transform="rotate(5 80 37)" fill="#45458a" opacity="0.6"/><path d="M85.6,35.8a2.6,2.6 0 1 0 5.2,0a2.6,2.6 0 1 0 -5.2,0M72.5,35.7a1.6,1.6 0 1 0 3.1,0a1.6,1.6 0 1 0 -3.1,0M77.9,33.6a1.7,1.7 0 1 0 3.4,0a1.7,1.7 0 1 0 -3.4,0M74.1,38.2a1.7,1.7 0 1 0 3.5,0a1.7,1.7 0 1 0 -3.5,0M75.1,34.4a2.2,2.2 0 1 0 4.3,0a2.2,2.2 0 1 0 -4.3,0M77.2,33.4a2.1,2.1 0 1 0 4.2,0a2.1,2.1 0 1 0 -4.2,0M71.4,35.6a2.0,2.0 0 1 0 4.1,0a2.0,2.0 0 1 0 -4.1,0M77.2,39.1a1.9,1.9 0 1 0 3.8,0a1.9,1.9 0 1 0 -3.8,0M90.4,38.8a2.5,2.5 0 1 0 5.1,0a2.5,2.5 0 1 0 -5.1,0M74.5,39.6a3.5,3.5 0 1 0 6.9,0a3.5,3.5 0 1 0 -6.9,0M88.2,40.1a2.1,2.1 0 1 0 4.3,0a2.1,2.1 0 1 0 -4.3,0M91.5,38.7a2.1,2.1 0 1 0 4.2,0a2.1,2.1 0 1 0 -4.2,0M82.0,36.8a1.8,1.8 0 1 0 3.6,0a1.8,1.8 0 1 0 -3.6,0" fill="#45458a" opacity="0.6"/><ellipse cx="108" cy="45" rx="3.0" ry="9.0" transform="rotate(30 108 45)" fill="#9c9ce0" opacity="0.6"/><path d="M107.3,38.8a3.1,3.1 0 1 0 6.3,0a3.1,3.1 0 1 0 -6.3,0M97.0,49.4a2.4,2.4 0 1 0 4.8,0a2.4,2.4 0 1 0 -4.8,0M108.4,36.7a2.2,2.2 0 1 0 4.5,0a2.2,2.2 0 1 0 -4.5,0M103.8,41.2a2.7,2.7 0 1 0 5.4,0a2.7,2.7 0 1 0 -5.4,0M98.6,54.1a1.8,1.8 0 1 0 3.6,0a1.8,1.8 0 1 0 -3.6,0M99.5,52.6a2.5,2.5 0 1 0 5.0,0a2.5,2.5 0 1 0 -5.0,0M111.1,47.3a2.5,2.5 0 1 0 5.0,0a2.5,2.5 0 1 0 -5.0,0M109.8,31.3a3.3,3.3 0 1 0 6.6,0a3.3,3.3 0 1 0 -6.6,0M106.0,39.8a2.9,2.9 0 1 0 5.7,0a2.9,2.9 0 1 0 -5.7,0M102.6,47.7a1.8,1.8 0 1 0 3.7,0a1.8,1.8 0 1 0 -3.7,0M110.0,37.1a2.1,2.1 0 1 0 4.2,0a2.1,2.1 0 1 0 -4.2,0M100.1,48.5a2.6,2.6 0 1 0 5.2,0a2.6,2.6 0 1 0 -5.2,0M101.7,51.6a2.9,2.9 0 1 0 5.8,0a2.9,2.9 0 1 0 -5.8,0M104.9,54.3a3.5,3.5 0 1 0 7.0,0a3.5,3.5 0 1 0 -7.0,0M103.1,54.9a3.3,3.3 0 1 0 6.6,0a3.3,3.3 0 1 0 -6.6,0M98.8,60.4a2.3,2.3 0 1 0 4.5,0a2.3,2.3 0 1 0 -4.5,0M106.3,46.8a2.1,2.1 0 1 0 4.2,0a2.1,2.1 0 1 0 -4.2,0M97.2,56.6a2.7,2.7 0 1 0 5.4,0a2.7,2.7 0 1 0 -5.4,0M113.8,34.4a2.2,2.2 0 1 0 4.4,0a2.2,2.2 0 1 0 -4.4,0M106.9,53.3a2.2,2.2 0 1 0 4.3,0a2.2,2.2 0 1 0 -4.3,0M108.4,43.1a2.0,2.0 0 1 0 4.0,0a2.0,2.0 0 1 0 -4.0,0M114.6,39.2a1.7,1.7 0 1 0 3.4,0a1.7,1.7 0 1 0 -3.4,0" fill="#9c9ce0" opacity="0.6"/><use href="#lakes" width="116" height="61"/></svg><svg x="1104.0333333333333" y="228.8" width="116" height="61.2" viewBox="0 0 116 61" preserveAspectRatio="none" overflow="hidden"><use href="#usbase" width="116" height="61"/><ellipse cx="35" cy="12" rx="5.0" ry="7.0" transform="rotate(-10 35 12)" fill="url(#gpat)" opacity="0.62"/><path d="M32.7,21.4a2.6,2.6 0 1 0 5.3,0a2.6,2.6 0 1 0 -5.3,0M38.1,16.8a3.5,3.5 0 1 0 7.0,0a3.5,3.5 0 1 0 -7.0,0M24.6,9.3a3.2,3.2 0 1 0 6.3,0a3.2,3.2 0 1 0 -6.3,0M27.2,15.1a3.3,3.3 0 1 0 6.5,0a3.3,3.3 0 1 0 -6.5,0M38.3,22.5a3.4,3.4 0 1 0 6.7,0a3.4,3.4 0 1 0 -6.7,0M26.1,10.2a1.6,1.6 0 1 0 3.3,0a1.6,1.6 0 1 0 -3.3,0M37.9,22.0a3.0,3.0 0 1 0 6.1,0a3.0,3.0 0 1 0 -6.1,0M28.7,8.9a3.0,3.0 0 1 0 6.0,0a3.0,3.0 0 1 0 -6.0,0M41.1,9.5a2.9,2.9 0 1 0 5.8,0a2.9,2.9 0 1 0 -5.8,0M27.7,16.1a1.8,1.8 0 1 0 3.6,0a1.8,1.8 0 1 0 -3.6,0M42.6,13.8a2.3,2.3 0 1 0 4.7,0a2.3,2.3 0 1 0 -4.7,0M27.3,19.1a3.6,3.6 0 1 0 7.1,0a3.6,3.6 0 1 0 -7.1,0M37.8,4.9a3.1,3.1 0 1 0 6.3,0a3.1,3.1 0 1 0 -6.3,0M23.7,11.6a3.2,3.2 0 1 0 6.3,0a3.2,3.2 0 1 0 -6.3,0M30.9,9.6a2.5,2.5 0 1 0 5.0,0a2.5,2.5 0 1 0 -5.0,0M23.6,7.4a3.5,3.5 0 1 0 6.9,0a3.5,3.5 0 1 0 -6.9,0M32.2,3.0a2.5,2.5 0 1 0 5.0,0a2.5,2.5 0 1 0 -5.0,0M32.3,-0.1a2.3,2.3 0 1 0 4.5,0a2.3,2.3 0 1 0 -4.5,0M27.5,19.6a2.5,2.5 0 1 0 5.1,0a2.5,2.5 0 1 0 -5.1,0M26.2,1.7a2.4,2.4 0 1 0 4.8,0a2.4,2.4 0 1 0 -4.8,0M27.4,9.8a3.2,3.2 0 1 0 6.4,0a3.2,3.2 0 1 0 -6.4,0M28.6,2.3a2.2,2.2 0 1 0 4.4,0a2.2,2.2 0 1 0 -4.4,0M37.8,14.9a2.1,2.1 0 1 0 4.1,0a2.1,2.1 0 1 0 -4.1,0M30.7,1.5a3.3,3.3 0 1 0 6.6,0a3.3,3.3 0 1 0 -6.6,0M37.3,8.1a1.8,1.8 0 1 0 3.6,0a1.8,1.8 0 1 0 -3.6,0M29.2,3.3a3.2,3.2 0 1 0 6.5,0a3.2,3.2 0 1 0 -6.5,0M27.5,15.0a3.5,3.5 0 1 0 7.0,0a3.5,3.5 0 1 0 -7.0,0" fill="url(#gpat)" opacity="0.62"/><ellipse cx="98" cy="22" rx="6.0" ry="9.0" transform="rotate(45 98 22)" fill="url(#gpat)" opacity="0.62"/><path d="M106.1,10.4a3.0,3.0 0 1 0 6.0,0a3.0,3.0 0 1 0 -6.0,0M107.5,26.0a1.6,1.6 0 1 0 3.3,0a1.6,1.6 0 1 0 -3.3,0M95.3,24.7a3.1,3.1 0 1 0 6.1,0a3.1,3.1 0 1 0 -6.1,0M89.1,14.9a1.7,1.7 0 1 0 3.4,0a1.7,1.7 0 1 0 -3.4,0M88.1,36.2a2.8,2.8 0 1 0 5.6,0a2.8,2.8 0 1 0 -5.6,0M92.9,27.3a3.2,3.2 0 1 0 6.4,0a3.2,3.2 0 1 0 -6.4,0M99.6,19.9a3.6,3.6 0 1 0 7.1,0a3.6,3.6 0 1 0 -7.1,0M93.5,31.3a2.8,2.8 0 1 0 5.6,0a2.8,2.8 0 1 0 -5.6,0M110.5,14.0a1.5,1.5 0 1 0 3.1,0a1.5,1.5 0 1 0 -3.1,0M91.6,26.7a1.7,1.7 0 1 0 3.3,0a1.7,1.7 0 1 0 -3.3,0M98.3,16.3a2.4,2.4 0 1 0 4.8,0a2.4,2.4 0 1 0 -4.8,0M102.3,8.7a2.6,2.6 0 1 0 5.3,0a2.6,2.6 0 1 0 -5.3,0M103.1,9.9a2.0,2.0 0 1 0 4.0,0a2.0,2.0 0 1 0 -4.0,0M85.0,35.6a2.0,2.0 0 1 0 4.1,0a2.0,2.0 0 1 0 -4.1,0M99.1,22.0a2.2,2.2 0 1 0 4.3,0a2.2,2.2 0 1 0 -4.3,0M97.9,14.7a3.6,3.6 0 1 0 7.2,0a3.6,3.6 0 1 0 -7.2,0M98.1,7.9a2.9,2.9 0 1 0 5.8,0a2.9,2.9 0 1 0 -5.8,0M101.3,20.2a2.3,2.3 0 1 0 4.5,0a2.3,2.3 0 1 0 -4.5,0M88.6,30.0a1.8,1.8 0 1 0 3.5,0a1.8,1.8 0 1 0 -3.5,0M91.5,32.8a3.5,3.5 0 1 0 7.0,0a3.5,3.5 0 1 0 -7.0,0M98.3,9.8a3.4,3.4 0 1 0 6.8,0a3.4,3.4 0 1 0 -6.8,0M94.3,11.8a2.8,2.8 0 1 0 5.5,0a2.8,2.8 0 1 0 -5.5,0M93.8,17.8a1.7,1.7 0 1 0 3.4,0a1.7,1.7 0 1 0 -3.4,0M105.3,18.5a3.2,3.2 0 1 0 6.3,0a3.2,3.2 0 1 0 -6.3,0M97.4,30.6a3.4,3.4 0 1 0 6.8,0a3.4,3.4 0 1 0 -6.8,0M103.1,31.3a2.2,2.2 0 1 0 4.5,0a2.2,2.2 0 1 0 -4.5,0M89.5,14.4a2.7,2.7 0 1 0 5.5,0a2.7,2.7 0 1 0 -5.5,0M81.2,29.7a2.1,2.1 0 1 0 4.2,0a2.1,2.1 0 1 0 -4.2,0M95.5,23.1a3.5,3.5 0 1 0 7.1,0a3.5,3.5 0 1 0 -7.1,0M88.2,29.8a2.7,2.7 0 1 0 5.5,0a2.7,2.7 0 1 0 -5.5,0M90.8,16.3a3.0,3.0 0 1 0 6.0,0a3.0,3.0 0 1 0 -6.0,0M94.5,17.6a3.0,3.0 0 1 0 6.0,0a3.0,3.0 0 1 0 -6.0,0M103.2,9.3a3.0,3.0 0 1 0 6.0,0a3.0,3.0 0 1 0 -6.0,0M96.2,24.5a3.3,3.3 0 1 0 6.7,0a3.3,3.3 0 1 0 -6.7,0M82.0,34.9a3.6,3.6 0 1 0 7.2,0a3.6,3.6 0 1 0 -7.2,0M109.2,18.2a1.6,1.6 0 1 0 3.2,0a1.6,1.6 0 1 0 -3.2,0M104.4,18.4a3.3,3.3 0 1 0 6.6,0a3.3,3.3 0 1 0 -6.6,0M98.8,22.6a2.3,2.3 0 1 0 4.6,0a2.3,2.3 0 1 0 -4.6,0M88.8,26.6a3.5,3.5 0 1 0 7.0,0a3.5,3.5 0 1 0 -7.0,0M101.2,10.6a3.1,3.1 0 1 0 6.2,0a3.1,3.1 0 1 0 -6.2,0" fill="url(#gpat)" opacity="0.62"/><ellipse cx="100" cy="20" rx="2.0" ry="6.0" transform="rotate(45 100 20)" fill="#a8582a" opacity="0.55"/><path d="M97.4,19.1a2.7,2.7 0 1 0 5.3,0a2.7,2.7 0 1 0 -5.3,0M102.2,12.6a3.2,3.2 0 1 0 6.4,0a3.2,3.2 0 1 0 -6.4,0M90.0,25.9a3.1,3.1 0 1 0 6.2,0a3.1,3.1 0 1 0 -6.2,0M91.8,21.0a2.2,2.2 0 1 0 4.4,0a2.2,2.2 0 1 0 -4.4,0M95.4,17.5a3.4,3.4 0 1 0 6.8,0a3.4,3.4 0 1 0 -6.8,0M104.4,15.5a3.0,3.0 0 1 0 5.9,0a3.0,3.0 0 1 0 -5.9,0M99.6,14.2a2.2,2.2 0 1 0 4.3,0a2.2,2.2 0 1 0 -4.3,0M95.4,24.3a3.5,3.5 0 1 0 7.1,0a3.5,3.5 0 1 0 -7.1,0M97.5,24.7a1.8,1.8 0 1 0 3.6,0a1.8,1.8 0 1 0 -3.6,0M98.2,23.6a2.9,2.9 0 1 0 5.8,0a2.9,2.9 0 1 0 -5.8,0M90.8,26.4a2.7,2.7 0 1 0 5.4,0a2.7,2.7 0 1 0 -5.4,0M93.8,18.2a3.2,3.2 0 1 0 6.3,0a3.2,3.2 0 1 0 -6.3,0" fill="#a8582a" opacity="0.55"/><ellipse cx="80" cy="5" rx="5.0" ry="2.5" transform="rotate(0 80 5)" fill="url(#gpat)" opacity="0.62"/><path d="M78.2,1.3a3.5,3.5 0 1 0 6.9,0a3.5,3.5 0 1 0 -6.9,0M86.4,4.2a2.1,2.1 0 1 0 4.2,0a2.1,2.1 0 1 0 -4.2,0M80.7,8.7a3.1,3.1 0 1 0 6.3,0a3.1,3.1 0 1 0 -6.3,0M87.3,4.6a2.3,2.3 0 1 0 4.7,0a2.3,2.3 0 1 0 -4.7,0M84.3,7.0a2.6,2.6 0 1 0 5.2,0a2.6,2.6 0 1 0 -5.2,0M74.9,3.2a2.8,2.8 0 1 0 5.5,0a2.8,2.8 0 1 0 -5.5,0M77.6,4.6a1.7,1.7 0 1 0 3.4,0a1.7,1.7 0 1 0 -3.4,0M69.2,6.4a3.2,3.2 0 1 0 6.4,0a3.2,3.2 0 1 0 -6.4,0M82.4,9.4a2.0,2.0 0 1 0 3.9,0a2.0,2.0 0 1 0 -3.9,0M81.8,4.6a2.9,2.9 0 1 0 5.7,0a2.9,2.9 0 1 0 -5.7,0M80.9,3.4a2.3,2.3 0 1 0 4.6,0a2.3,2.3 0 1 0 -4.6,0M84.4,2.8a3.2,3.2 0 1 0 6.3,0a3.2,3.2 0 1 0 -6.3,0" fill="url(#gpat)" opacity="0.62"/><ellipse cx="105" cy="50" rx="3.5" ry="7.0" transform="rotate(35 105 50)" fill="#9c9ce0" opacity="0.6"/><path d="M103.2,59.0a2.4,2.4 0 1 0 4.9,0a2.4,2.4 0 1 0 -4.9,0M97.1,61.0a2.5,2.5 0 1 0 5.0,0a2.5,2.5 0 1 0 -5.0,0M112.2,41.6a1.6,1.6 0 1 0 3.1,0a1.6,1.6 0 1 0 -3.1,0M96.8,59.2a1.7,1.7 0 1 0 3.5,0a1.7,1.7 0 1 0 -3.5,0M98.5,59.4a3.3,3.3 0 1 0 6.6,0a3.3,3.3 0 1 0 -6.6,0M100.1,54.7a3.1,3.1 0 1 0 6.3,0a3.1,3.1 0 1 0 -6.3,0M96.5,52.4a2.7,2.7 0 1 0 5.3,0a2.7,2.7 0 1 0 -5.3,0M107.6,52.7a2.4,2.4 0 1 0 4.7,0a2.4,2.4 0 1 0 -4.7,0M94.0,50.7a3.0,3.0 0 1 0 5.9,0a3.0,3.0 0 1 0 -5.9,0M101.2,45.5a3.2,3.2 0 1 0 6.4,0a3.2,3.2 0 1 0 -6.4,0M101.9,57.2a1.9,1.9 0 1 0 3.8,0a1.9,1.9 0 1 0 -3.8,0M100.7,54.5a1.9,1.9 0 1 0 3.9,0a1.9,1.9 0 1 0 -3.9,0M104.3,48.2a2.3,2.3 0 1 0 4.7,0a2.3,2.3 0 1 0 -4.7,0M103.5,51.4a2.2,2.2 0 1 0 4.4,0a2.2,2.2 0 1 0 -4.4,0M93.4,57.3a2.3,2.3 0 1 0 4.6,0a2.3,2.3 0 1 0 -4.6,0M111.7,46.9a2.5,2.5 0 1 0 5.1,0a2.5,2.5 0 1 0 -5.1,0M94.9,48.5a3.4,3.4 0 1 0 6.8,0a3.4,3.4 0 1 0 -6.8,0M105.7,51.7a2.2,2.2 0 1 0 4.4,0a2.2,2.2 0 1 0 -4.4,0M101.0,44.3a2.2,2.2 0 1 0 4.4,0a2.2,2.2 0 1 0 -4.4,0M100.2,57.1a3.3,3.3 0 1 0 6.7,0a3.3,3.3 0 1 0 -6.7,0" fill="#9c9ce0" opacity="0.6"/><use href="#lakes" width="116" height="61"/></svg><svg x="1222.1" y="228.8" width="116" height="61.2" viewBox="0 0 116 61" preserveAspectRatio="none" overflow="hidden"><use href="#usbase" width="116" height="61"/><ellipse cx="45" cy="12" rx="9.0" ry="6.0" transform="rotate(0 45 12)" fill="url(#gpat)" opacity="0.62"/><path d="M52.0,9.0a3.2,3.2 0 1 0 6.5,0a3.2,3.2 0 1 0 -6.5,0M43.1,20.3a2.1,2.1 0 1 0 4.1,0a2.1,2.1 0 1 0 -4.1,0M37.9,11.1a2.4,2.4 0 1 0 4.8,0a2.4,2.4 0 1 0 -4.8,0M40.3,14.2a3.2,3.2 0 1 0 6.4,0a3.2,3.2 0 1 0 -6.4,0M48.1,9.6a2.8,2.8 0 1 0 5.7,0a2.8,2.8 0 1 0 -5.7,0M30.7,10.6a2.7,2.7 0 1 0 5.5,0a2.7,2.7 0 1 0 -5.5,0M37.7,6.6a2.3,2.3 0 1 0 4.5,0a2.3,2.3 0 1 0 -4.5,0M23.6,11.5a3.5,3.5 0 1 0 6.9,0a3.5,3.5 0 1 0 -6.9,0M43.7,4.0a3.4,3.4 0 1 0 6.8,0a3.4,3.4 0 1 0 -6.8,0M59.9,10.5a1.9,1.9 0 1 0 3.8,0a1.9,1.9 0 1 0 -3.8,0M35.3,15.0a2.4,2.4 0 1 0 4.9,0a2.4,2.4 0 1 0 -4.9,0M50.5,5.3a2.2,2.2 0 1 0 4.4,0a2.2,2.2 0 1 0 -4.4,0M45.2,15.9a3.2,3.2 0 1 0 6.5,0a3.2,3.2 0 1 0 -6.5,0M59.7,8.6a1.5,1.5 0 1 0 3.0,0a1.5,1.5 0 1 0 -3.0,0M41.8,16.5a2.5,2.5 0 1 0 4.9,0a2.5,2.5 0 1 0 -4.9,0M46.3,20.0a2.4,2.4 0 1 0 4.9,0a2.4,2.4 0 1 0 -4.9,0M33.7,5.7a2.6,2.6 0 1 0 5.1,0a2.6,2.6 0 1 0 -5.1,0M59.4,15.2a2.4,2.4 0 1 0 4.8,0a2.4,2.4 0 1 0 -4.8,0M50.3,7.0a1.7,1.7 0 1 0 3.4,0a1.7,1.7 0 1 0 -3.4,0M55.8,11.5a1.9,1.9 0 1 0 3.7,0a1.9,1.9 0 1 0 -3.7,0M60.2,9.4a1.7,1.7 0 1 0 3.5,0a1.7,1.7 0 1 0 -3.5,0M49.4,10.7a1.8,1.8 0 1 0 3.5,0a1.8,1.8 0 1 0 -3.5,0M52.2,21.0a2.8,2.8 0 1 0 5.5,0a2.8,2.8 0 1 0 -5.5,0M28.7,8.6a2.1,2.1 0 1 0 4.2,0a2.1,2.1 0 1 0 -4.2,0M47.7,13.3a2.0,2.0 0 1 0 4.0,0a2.0,2.0 0 1 0 -4.0,0M39.2,10.3a1.6,1.6 0 1 0 3.2,0a1.6,1.6 0 1 0 -3.2,0M43.9,13.2a1.6,1.6 0 1 0 3.2,0a1.6,1.6 0 1 0 -3.2,0M46.9,15.1a2.2,2.2 0 1 0 4.4,0a2.2,2.2 0 1 0 -4.4,0M52.1,4.1a1.5,1.5 0 1 0 3.0,0a1.5,1.5 0 1 0 -3.0,0M52.0,15.0a2.5,2.5 0 1 0 4.9,0a2.5,2.5 0 1 0 -4.9,0M29.3,14.5a3.0,3.0 0 1 0 6.0,0a3.0,3.0 0 1 0 -6.0,0M37.0,7.5a2.1,2.1 0 1 0 4.1,0a2.1,2.1 0 1 0 -4.1,0M54.6,11.6a3.4,3.4 0 1 0 6.8,0a3.4,3.4 0 1 0 -6.8,0M56.8,7.3a2.8,2.8 0 1 0 5.6,0a2.8,2.8 0 1 0 -5.6,0M42.5,5.6a1.9,1.9 0 1 0 3.9,0a1.9,1.9 0 1 0 -3.9,0M37.1,15.3a1.9,1.9 0 1 0 3.8,0a1.9,1.9 0 1 0 -3.8,0M49.2,15.2a1.5,1.5 0 1 0 3.1,0a1.5,1.5 0 1 0 -3.1,0M53.5,19.8a1.6,1.6 0 1 0 3.2,0a1.6,1.6 0 1 0 -3.2,0M39.2,2.3a1.9,1.9 0 1 0 3.7,0a1.9,1.9 0 1 0 -3.7,0M27.7,13.3a3.5,3.5 0 1 0 7.0,0a3.5,3.5 0 1 0 -7.0,0" fill="url(#gpat)" opacity="0.62"/><ellipse cx="48" cy="22" rx="2.0" ry="2.0" transform="rotate(0 48 22)" fill="#a8582a" opacity="0.55"/><path d="M45.2,21.1a1.6,1.6 0 1 0 3.2,0a1.6,1.6 0 1 0 -3.2,0M45.5,23.3a3.2,3.2 0 1 0 6.4,0a3.2,3.2 0 1 0 -6.4,0M45.6,20.9a3.1,3.1 0 1 0 6.2,0a3.1,3.1 0 1 0 -6.2,0M47.0,20.9a2.6,2.6 0 1 0 5.1,0a2.6,2.6 0 1 0 -5.1,0M45.2,24.6a3.1,3.1 0 1 0 6.2,0a3.1,3.1 0 1 0 -6.2,0M46.0,24.7a2.8,2.8 0 1 0 5.6,0a2.8,2.8 0 1 0 -5.6,0" fill="#a8582a" opacity="0.55"/><ellipse cx="100" cy="15" rx="7.0" ry="7.0" transform="rotate(0 100 15)" fill="url(#gpat)" opacity="0.62"/><path d="M105.9,4.9a3.4,3.4 0 1 0 6.8,0a3.4,3.4 0 1 0 -6.8,0M89.9,19.8a3.4,3.4 0 1 0 6.8,0a3.4,3.4 0 1 0 -6.8,0M105.3,5.4a2.8,2.8 0 1 0 5.6,0a2.8,2.8 0 1 0 -5.6,0M103.0,13.6a1.9,1.9 0 1 0 3.8,0a1.9,1.9 0 1 0 -3.8,0M97.7,7.7a2.8,2.8 0 1 0 5.7,0a2.8,2.8 0 1 0 -5.7,0M88.4,9.6a2.1,2.1 0 1 0 4.1,0a2.1,2.1 0 1 0 -4.1,0M108.7,12.6a1.5,1.5 0 1 0 3.0,0a1.5,1.5 0 1 0 -3.0,0M92.5,24.2a3.3,3.3 0 1 0 6.6,0a3.3,3.3 0 1 0 -6.6,0M87.4,6.2a2.2,2.2 0 1 0 4.4,0a2.2,2.2 0 1 0 -4.4,0M105.4,18.2a3.4,3.4 0 1 0 6.8,0a3.4,3.4 0 1 0 -6.8,0M84.2,11.8a3.3,3.3 0 1 0 6.5,0a3.3,3.3 0 1 0 -6.5,0M106.4,9.1a1.6,1.6 0 1 0 3.1,0a1.6,1.6 0 1 0 -3.1,0M93.8,13.1a2.3,2.3 0 1 0 4.6,0a2.3,2.3 0 1 0 -4.6,0M98.4,23.4a2.5,2.5 0 1 0 5.0,0a2.5,2.5 0 1 0 -5.0,0M91.3,2.4a3.3,3.3 0 1 0 6.6,0a3.3,3.3 0 1 0 -6.6,0M99.7,10.0a2.7,2.7 0 1 0 5.4,0a2.7,2.7 0 1 0 -5.4,0M91.5,21.3a1.7,1.7 0 1 0 3.4,0a1.7,1.7 0 1 0 -3.4,0M83.4,18.7a3.3,3.3 0 1 0 6.7,0a3.3,3.3 0 1 0 -6.7,0M98.8,11.2a3.3,3.3 0 1 0 6.5,0a3.3,3.3 0 1 0 -6.5,0M90.7,19.7a2.5,2.5 0 1 0 5.1,0a2.5,2.5 0 1 0 -5.1,0M93.5,21.4a3.4,3.4 0 1 0 6.8,0a3.4,3.4 0 1 0 -6.8,0M89.3,10.1a2.6,2.6 0 1 0 5.2,0a2.6,2.6 0 1 0 -5.2,0M102.3,16.8a1.6,1.6 0 1 0 3.1,0a1.6,1.6 0 1 0 -3.1,0M90.4,25.4a1.6,1.6 0 1 0 3.2,0a1.6,1.6 0 1 0 -3.2,0M94.6,27.6a1.9,1.9 0 1 0 3.8,0a1.9,1.9 0 1 0 -3.8,0M83.6,14.4a3.1,3.1 0 1 0 6.2,0a3.1,3.1 0 1 0 -6.2,0M91.9,19.8a2.1,2.1 0 1 0 4.2,0a2.1,2.1 0 1 0 -4.2,0M90.7,27.2a2.7,2.7 0 1 0 5.4,0a2.7,2.7 0 1 0 -5.4,0M85.1,20.1a2.3,2.3 0 1 0 4.7,0a2.3,2.3 0 1 0 -4.7,0M99.3,25.0a1.7,1.7 0 1 0 3.5,0a1.7,1.7 0 1 0 -3.5,0M98.3,14.8a2.3,2.3 0 1 0 4.6,0a2.3,2.3 0 1 0 -4.6,0M103.0,16.3a3.3,3.3 0 1 0 6.7,0a3.3,3.3 0 1 0 -6.7,0M104.1,25.1a2.9,2.9 0 1 0 5.8,0a2.9,2.9 0 1 0 -5.8,0M111.4,19.3a1.6,1.6 0 1 0 3.2,0a1.6,1.6 0 1 0 -3.2,0M104.2,3.0a2.3,2.3 0 1 0 4.7,0a2.3,2.3 0 1 0 -4.7,0M90.8,20.9a3.0,3.0 0 1 0 5.9,0a3.0,3.0 0 1 0 -5.9,0" fill="url(#gpat)" opacity="0.62"/><ellipse cx="65" cy="40" rx="3.0" ry="3.0" transform="rotate(0 65 40)" fill="url(#gpat)" opacity="0.62"/><path d="M61.6,38.3a1.8,1.8 0 1 0 3.6,0a1.8,1.8 0 1 0 -3.6,0M64.3,41.4a1.7,1.7 0 1 0 3.4,0a1.7,1.7 0 1 0 -3.4,0M59.9,40.1a2.9,2.9 0 1 0 5.8,0a2.9,2.9 0 1 0 -5.8,0M61.2,45.4a1.6,1.6 0 1 0 3.3,0a1.6,1.6 0 1 0 -3.3,0M59.0,37.2a3.1,3.1 0 1 0 6.1,0a3.1,3.1 0 1 0 -6.1,0M64.1,40.5a3.5,3.5 0 1 0 6.9,0a3.5,3.5 0 1 0 -6.9,0M59.8,40.7a1.7,1.7 0 1 0 3.4,0a1.7,1.7 0 1 0 -3.4,0M57.1,37.0a2.8,2.8 0 1 0 5.6,0a2.8,2.8 0 1 0 -5.6,0M68.1,38.7a1.5,1.5 0 1 0 3.1,0a1.5,1.5 0 1 0 -3.1,0M58.1,37.0a3.6,3.6 0 1 0 7.1,0a3.6,3.6 0 1 0 -7.1,0" fill="url(#gpat)" opacity="0.62"/><ellipse cx="62" cy="46" rx="4.0" ry="7.0" transform="rotate(0 62 46)" fill="#45458a" opacity="0.6"/><path d="M62.0,34.7a1.8,1.8 0 1 0 3.6,0a1.8,1.8 0 1 0 -3.6,0M52.9,50.6a2.6,2.6 0 1 0 5.3,0a2.6,2.6 0 1 0 -5.3,0M57.4,44.0a2.6,2.6 0 1 0 5.2,0a2.6,2.6 0 1 0 -5.2,0M60.0,47.1a3.0,3.0 0 1 0 6.1,0a3.0,3.0 0 1 0 -6.1,0M56.5,49.4a2.5,2.5 0 1 0 5.0,0a2.5,2.5 0 1 0 -5.0,0M64.0,51.3a3.5,3.5 0 1 0 7.1,0a3.5,3.5 0 1 0 -7.1,0M61.4,33.5a2.9,2.9 0 1 0 5.8,0a2.9,2.9 0 1 0 -5.8,0M65.3,43.6a1.7,1.7 0 1 0 3.5,0a1.7,1.7 0 1 0 -3.5,0M60.4,47.3a1.9,1.9 0 1 0 3.9,0a1.9,1.9 0 1 0 -3.9,0M61.3,49.7a3.1,3.1 0 1 0 6.2,0a3.1,3.1 0 1 0 -6.2,0M57.0,51.7a1.7,1.7 0 1 0 3.5,0a1.7,1.7 0 1 0 -3.5,0M59.0,39.0a3.4,3.4 0 1 0 6.7,0a3.4,3.4 0 1 0 -6.7,0M59.5,46.9a3.2,3.2 0 1 0 6.5,0a3.2,3.2 0 1 0 -6.5,0M51.7,47.1a3.0,3.0 0 1 0 6.0,0a3.0,3.0 0 1 0 -6.0,0M58.0,39.1a2.9,2.9 0 1 0 5.7,0a2.9,2.9 0 1 0 -5.7,0M64.8,54.0a3.3,3.3 0 1 0 6.6,0a3.3,3.3 0 1 0 -6.6,0M58.2,42.5a2.0,2.0 0 1 0 3.9,0a2.0,2.0 0 1 0 -3.9,0M55.7,47.3a3.5,3.5 0 1 0 7.1,0a3.5,3.5 0 1 0 -7.1,0M65.0,41.6a2.0,2.0 0 1 0 4.0,0a2.0,2.0 0 1 0 -4.0,0M51.6,45.4a2.4,2.4 0 1 0 4.9,0a2.4,2.4 0 1 0 -4.9,0M60.0,36.6a1.8,1.8 0 1 0 3.6,0a1.8,1.8 0 1 0 -3.6,0M57.4,54.7a2.9,2.9 0 1 0 5.9,0a2.9,2.9 0 1 0 -5.9,0" fill="#45458a" opacity="0.6"/><ellipse cx="110" cy="45" rx="2.5" ry="7.0" transform="rotate(35 110 45)" fill="#9c9ce0" opacity="0.6"/><path d="M104.4,47.5a1.7,1.7 0 1 0 3.4,0a1.7,1.7 0 1 0 -3.4,0M113.9,43.3a2.4,2.4 0 1 0 4.8,0a2.4,2.4 0 1 0 -4.8,0M113.1,37.6a2.1,2.1 0 1 0 4.1,0a2.1,2.1 0 1 0 -4.1,0M108.5,51.2a1.5,1.5 0 1 0 3.0,0a1.5,1.5 0 1 0 -3.0,0M109.7,43.3a3.4,3.4 0 1 0 6.9,0a3.4,3.4 0 1 0 -6.9,0M101.4,49.0a1.9,1.9 0 1 0 3.8,0a1.9,1.9 0 1 0 -3.8,0M101.6,55.4a2.6,2.6 0 1 0 5.3,0a2.6,2.6 0 1 0 -5.3,0M106.6,40.9a2.8,2.8 0 1 0 5.6,0a2.8,2.8 0 1 0 -5.6,0M111.6,46.4a3.3,3.3 0 1 0 6.7,0a3.3,3.3 0 1 0 -6.7,0M105.6,41.0a3.3,3.3 0 1 0 6.6,0a3.3,3.3 0 1 0 -6.6,0M113.0,39.5a2.6,2.6 0 1 0 5.2,0a2.6,2.6 0 1 0 -5.2,0M110.5,47.6a2.6,2.6 0 1 0 5.1,0a2.6,2.6 0 1 0 -5.1,0M104.1,55.0a3.0,3.0 0 1 0 6.0,0a3.0,3.0 0 1 0 -6.0,0M103.6,42.4a2.7,2.7 0 1 0 5.4,0a2.7,2.7 0 1 0 -5.4,0M106.5,44.5a3.0,3.0 0 1 0 6.0,0a3.0,3.0 0 1 0 -6.0,0" fill="#9c9ce0" opacity="0.6"/><use href="#lakes" width="116" height="61"/></svg><svg x="1340.1666666666665" y="228.8" width="116" height="61.2" viewBox="0 0 116 61" preserveAspectRatio="none" overflow="hidden"><use href="#usbase" width="116" height="61"/><ellipse cx="85" cy="12" rx="14.0" ry="6.0" transform="rotate(0 85 12)" fill="url(#gpat)" opacity="0.62"/><path d="M87.5,7.1a3.5,3.5 0 1 0 7.0,0a3.5,3.5 0 1 0 -7.0,0M64.6,12.3a2.8,2.8 0 1 0 5.6,0a2.8,2.8 0 1 0 -5.6,0M88.6,16.6a2.4,2.4 0 1 0 4.8,0a2.4,2.4 0 1 0 -4.8,0M85.5,21.7a2.4,2.4 0 1 0 4.7,0a2.4,2.4 0 1 0 -4.7,0M72.1,16.2a2.0,2.0 0 1 0 3.9,0a2.0,2.0 0 1 0 -3.9,0M77.2,0.9a2.2,2.2 0 1 0 4.5,0a2.2,2.2 0 1 0 -4.5,0M87.1,5.7a3.1,3.1 0 1 0 6.2,0a3.1,3.1 0 1 0 -6.2,0M84.1,21.0a2.4,2.4 0 1 0 4.7,0a2.4,2.4 0 1 0 -4.7,0M100.1,4.4a1.7,1.7 0 1 0 3.5,0a1.7,1.7 0 1 0 -3.5,0M98.5,16.8a2.0,2.0 0 1 0 3.9,0a2.0,2.0 0 1 0 -3.9,0M83.6,23.7a3.5,3.5 0 1 0 7.0,0a3.5,3.5 0 1 0 -7.0,0M86.3,12.2a2.8,2.8 0 1 0 5.6,0a2.8,2.8 0 1 0 -5.6,0M107.0,8.3a3.0,3.0 0 1 0 5.9,0a3.0,3.0 0 1 0 -5.9,0M81.2,3.7a2.5,2.5 0 1 0 5.1,0a2.5,2.5 0 1 0 -5.1,0M87.8,8.9a2.9,2.9 0 1 0 5.9,0a2.9,2.9 0 1 0 -5.9,0M79.8,7.4a3.1,3.1 0 1 0 6.2,0a3.1,3.1 0 1 0 -6.2,0M95.4,22.3a3.1,3.1 0 1 0 6.2,0a3.1,3.1 0 1 0 -6.2,0M60.9,14.5a3.5,3.5 0 1 0 7.1,0a3.5,3.5 0 1 0 -7.1,0M73.6,16.0a2.9,2.9 0 1 0 5.9,0a2.9,2.9 0 1 0 -5.9,0M91.0,9.3a3.1,3.1 0 1 0 6.2,0a3.1,3.1 0 1 0 -6.2,0M64.7,18.4a2.5,2.5 0 1 0 5.0,0a2.5,2.5 0 1 0 -5.0,0M101.7,9.2a3.5,3.5 0 1 0 7.1,0a3.5,3.5 0 1 0 -7.1,0M91.3,11.0a3.5,3.5 0 1 0 6.9,0a3.5,3.5 0 1 0 -6.9,0M82.8,7.5a2.7,2.7 0 1 0 5.4,0a2.7,2.7 0 1 0 -5.4,0M82.6,14.6a1.6,1.6 0 1 0 3.2,0a1.6,1.6 0 1 0 -3.2,0M66.3,20.5a1.7,1.7 0 1 0 3.3,0a1.7,1.7 0 1 0 -3.3,0M60.3,6.2a2.3,2.3 0 1 0 4.5,0a2.3,2.3 0 1 0 -4.5,0M77.7,2.9a3.1,3.1 0 1 0 6.2,0a3.1,3.1 0 1 0 -6.2,0M55.1,13.4a2.3,2.3 0 1 0 4.7,0a2.3,2.3 0 1 0 -4.7,0M85.2,16.1a2.0,2.0 0 1 0 4.1,0a2.0,2.0 0 1 0 -4.1,0M103.3,19.9a1.8,1.8 0 1 0 3.6,0a1.8,1.8 0 1 0 -3.6,0M95.7,3.1a2.5,2.5 0 1 0 5.0,0a2.5,2.5 0 1 0 -5.0,0M93.5,13.7a3.5,3.5 0 1 0 6.9,0a3.5,3.5 0 1 0 -6.9,0M62.0,17.5a1.8,1.8 0 1 0 3.5,0a1.8,1.8 0 1 0 -3.5,0M98.8,14.1a2.2,2.2 0 1 0 4.5,0a2.2,2.2 0 1 0 -4.5,0M88.5,21.2a2.7,2.7 0 1 0 5.4,0a2.7,2.7 0 1 0 -5.4,0M68.0,9.5a2.4,2.4 0 1 0 4.7,0a2.4,2.4 0 1 0 -4.7,0M80.3,20.9a2.3,2.3 0 1 0 4.6,0a2.3,2.3 0 1 0 -4.6,0M66.8,2.4a2.2,2.2 0 1 0 4.4,0a2.2,2.2 0 1 0 -4.4,0M74.5,10.0a3.2,3.2 0 1 0 6.5,0a3.2,3.2 0 1 0 -6.5,0M61.2,10.2a2.7,2.7 0 1 0 5.4,0a2.7,2.7 0 1 0 -5.4,0M103.1,19.4a1.5,1.5 0 1 0 3.0,0a1.5,1.5 0 1 0 -3.0,0M88.4,19.8a3.4,3.4 0 1 0 6.9,0a3.4,3.4 0 1 0 -6.9,0M74.5,1.2a2.2,2.2 0 1 0 4.4,0a2.2,2.2 0 1 0 -4.4,0M62.4,9.1a2.0,2.0 0 1 0 4.0,0a2.0,2.0 0 1 0 -4.0,0M96.9,15.9a1.7,1.7 0 1 0 3.4,0a1.7,1.7 0 1 0 -3.4,0M93.5,12.2a3.3,3.3 0 1 0 6.6,0a3.3,3.3 0 1 0 -6.6,0M64.0,5.2a2.7,2.7 0 1 0 5.4,0a2.7,2.7 0 1 0 -5.4,0M56.5,13.3a2.2,2.2 0 1 0 4.4,0a2.2,2.2 0 1 0 -4.4,0M82.3,18.4a1.7,1.7 0 1 0 3.3,0a1.7,1.7 0 1 0 -3.3,0M96.7,12.7a2.8,2.8 0 1 0 5.7,0a2.8,2.8 0 1 0 -5.7,0M89.3,19.8a2.1,2.1 0 1 0 4.2,0a2.1,2.1 0 1 0 -4.2,0M82.7,6.1a2.4,2.4 0 1 0 4.9,0a2.4,2.4 0 1 0 -4.9,0M81.3,1.8a3.4,3.4 0 1 0 6.8,0a3.4,3.4 0 1 0 -6.8,0M102.1,12.8a1.9,1.9 0 1 0 3.8,0a1.9,1.9 0 1 0 -3.8,0M92.6,8.2a3.2,3.2 0 1 0 6.4,0a3.2,3.2 0 1 0 -6.4,0M57.4,10.9a3.2,3.2 0 1 0 6.3,0a3.2,3.2 0 1 0 -6.3,0M99.7,3.4a2.3,2.3 0 1 0 4.7,0a2.3,2.3 0 1 0 -4.7,0M69.5,1.8a3.2,3.2 0 1 0 6.4,0a3.2,3.2 0 1 0 -6.4,0M58.0,15.9a3.1,3.1 0 1 0 6.3,0a3.1,3.1 0 1 0 -6.3,0" fill="url(#gpat)" opacity="0.62"/><ellipse cx="82" cy="36" rx="6.0" ry="2.5" transform="rotate(-20 82 36)" fill="url(#gpat)" opacity="0.62"/><path d="M73.0,39.7a2.4,2.4 0 1 0 4.8,0a2.4,2.4 0 1 0 -4.8,0M83.2,33.3a3.5,3.5 0 1 0 7.0,0a3.5,3.5 0 1 0 -7.0,0M83.3,36.4a3.0,3.0 0 1 0 6.1,0a3.0,3.0 0 1 0 -6.1,0M77.3,34.1a2.1,2.1 0 1 0 4.3,0a2.1,2.1 0 1 0 -4.3,0M70.1,37.6a2.3,2.3 0 1 0 4.6,0a2.3,2.3 0 1 0 -4.6,0M71.7,39.2a3.2,3.2 0 1 0 6.5,0a3.2,3.2 0 1 0 -6.5,0M86.6,31.2a2.0,2.0 0 1 0 4.1,0a2.0,2.0 0 1 0 -4.1,0M73.2,39.8a2.8,2.8 0 1 0 5.6,0a2.8,2.8 0 1 0 -5.6,0M77.1,40.6a2.6,2.6 0 1 0 5.2,0a2.6,2.6 0 1 0 -5.2,0M68.5,38.7a2.4,2.4 0 1 0 4.7,0a2.4,2.4 0 1 0 -4.7,0M80.6,36.4a1.5,1.5 0 1 0 3.0,0a1.5,1.5 0 1 0 -3.0,0M73.6,33.4a2.9,2.9 0 1 0 5.8,0a2.9,2.9 0 1 0 -5.8,0M80.4,36.6a2.4,2.4 0 1 0 4.9,0a2.4,2.4 0 1 0 -4.9,0M82.2,35.5a2.8,2.8 0 1 0 5.7,0a2.8,2.8 0 1 0 -5.7,0" fill="url(#gpat)" opacity="0.62"/><ellipse cx="68" cy="52" rx="6.0" ry="4.0" transform="rotate(-30 68 52)" fill="#45458a" opacity="0.6"/><path d="M71.1,53.6a3.3,3.3 0 1 0 6.6,0a3.3,3.3 0 1 0 -6.6,0M59.2,56.0a2.6,2.6 0 1 0 5.1,0a2.6,2.6 0 1 0 -5.1,0M68.0,48.3a3.0,3.0 0 1 0 6.0,0a3.0,3.0 0 1 0 -6.0,0M70.3,57.0a1.6,1.6 0 1 0 3.1,0a1.6,1.6 0 1 0 -3.1,0M70.1,50.3a3.0,3.0 0 1 0 6.0,0a3.0,3.0 0 1 0 -6.0,0M70.0,57.4a2.1,2.1 0 1 0 4.3,0a2.1,2.1 0 1 0 -4.3,0M67.7,43.4a3.1,3.1 0 1 0 6.1,0a3.1,3.1 0 1 0 -6.1,0M67.2,53.3a2.5,2.5 0 1 0 4.9,0a2.5,2.5 0 1 0 -4.9,0M65.4,53.1a3.0,3.0 0 1 0 6.1,0a3.0,3.0 0 1 0 -6.1,0M65.9,43.8a3.4,3.4 0 1 0 6.8,0a3.4,3.4 0 1 0 -6.8,0M56.5,53.6a3.6,3.6 0 1 0 7.2,0a3.6,3.6 0 1 0 -7.2,0M61.6,60.0a2.1,2.1 0 1 0 4.2,0a2.1,2.1 0 1 0 -4.2,0M70.9,45.6a3.6,3.6 0 1 0 7.2,0a3.6,3.6 0 1 0 -7.2,0M67.7,44.8a2.6,2.6 0 1 0 5.1,0a2.6,2.6 0 1 0 -5.1,0M70.3,53.3a1.7,1.7 0 1 0 3.3,0a1.7,1.7 0 1 0 -3.3,0M61.6,52.1a1.5,1.5 0 1 0 3.1,0a1.5,1.5 0 1 0 -3.1,0M57.4,53.0a1.7,1.7 0 1 0 3.4,0a1.7,1.7 0 1 0 -3.4,0M69.2,58.3a3.0,3.0 0 1 0 5.9,0a3.0,3.0 0 1 0 -5.9,0M65.6,47.9a1.6,1.6 0 1 0 3.2,0a1.6,1.6 0 1 0 -3.2,0M58.5,50.0a2.7,2.7 0 1 0 5.5,0a2.7,2.7 0 1 0 -5.5,0" fill="#45458a" opacity="0.6"/><ellipse cx="45" cy="36" rx="1.5" ry="1.5" transform="rotate(0 45 36)" fill="url(#gpat)" opacity="0.62"/><path d="M43.9,36.9a3.3,3.3 0 1 0 6.5,0a3.3,3.3 0 1 0 -6.5,0M41.0,36.2a1.8,1.8 0 1 0 3.7,0a1.8,1.8 0 1 0 -3.7,0M42.4,37.0a1.6,1.6 0 1 0 3.3,0a1.6,1.6 0 1 0 -3.3,0M44.8,35.7a1.8,1.8 0 1 0 3.5,0a1.8,1.8 0 1 0 -3.5,0M40.6,35.4a3.2,3.2 0 1 0 6.4,0a3.2,3.2 0 1 0 -6.4,0" fill="url(#gpat)" opacity="0.62"/><ellipse cx="108" cy="50" rx="3.0" ry="6.0" transform="rotate(35 108 50)" fill="#9c9ce0" opacity="0.6"/><path d="M102.7,56.0a2.1,2.1 0 1 0 4.2,0a2.1,2.1 0 1 0 -4.2,0M107.9,55.3a2.8,2.8 0 1 0 5.5,0a2.8,2.8 0 1 0 -5.5,0M107.1,41.1a1.8,1.8 0 1 0 3.5,0a1.8,1.8 0 1 0 -3.5,0M109.1,45.4a3.4,3.4 0 1 0 6.7,0a3.4,3.4 0 1 0 -6.7,0M108.7,50.9a3.3,3.3 0 1 0 6.5,0a3.3,3.3 0 1 0 -6.5,0M103.0,51.0a2.4,2.4 0 1 0 4.8,0a2.4,2.4 0 1 0 -4.8,0M106.5,43.3a2.5,2.5 0 1 0 5.0,0a2.5,2.5 0 1 0 -5.0,0M104.7,56.9a3.0,3.0 0 1 0 6.0,0a3.0,3.0 0 1 0 -6.0,0M105.6,45.6a3.0,3.0 0 1 0 6.0,0a3.0,3.0 0 1 0 -6.0,0M110.3,45.0a2.1,2.1 0 1 0 4.3,0a2.1,2.1 0 1 0 -4.3,0M98.9,50.8a3.5,3.5 0 1 0 7.0,0a3.5,3.5 0 1 0 -7.0,0M106.7,49.0a2.1,2.1 0 1 0 4.2,0a2.1,2.1 0 1 0 -4.2,0M104.6,42.2a2.9,2.9 0 1 0 5.7,0a2.9,2.9 0 1 0 -5.7,0M109.6,47.2a2.0,2.0 0 1 0 4.1,0a2.0,2.0 0 1 0 -4.1,0M102.4,52.6a3.0,3.0 0 1 0 6.0,0a3.0,3.0 0 1 0 -6.0,0M106.4,42.1a3.0,3.0 0 1 0 5.9,0a3.0,3.0 0 1 0 -5.9,0" fill="#9c9ce0" opacity="0.6"/><use href="#lakes" width="116" height="61"/></svg><svg x="1458.2333333333333" y="228.8" width="116" height="61.2" viewBox="0 0 116 61" preserveAspectRatio="none" overflow="hidden"><use href="#usbase" width="116" height="61"/><ellipse cx="100" cy="25" rx="7.0" ry="10.0" transform="rotate(0 100 25)" fill="url(#gpat)" opacity="0.62"/><path d="M85.9,26.9a2.8,2.8 0 1 0 5.6,0a2.8,2.8 0 1 0 -5.6,0M92.8,7.0a3.1,3.1 0 1 0 6.2,0a3.1,3.1 0 1 0 -6.2,0M101.0,33.0a2.5,2.5 0 1 0 4.9,0a2.5,2.5 0 1 0 -4.9,0M86.4,37.5a3.0,3.0 0 1 0 6.1,0a3.0,3.0 0 1 0 -6.1,0M89.9,27.3a2.0,2.0 0 1 0 4.0,0a2.0,2.0 0 1 0 -4.0,0M87.4,13.4a1.9,1.9 0 1 0 3.7,0a1.9,1.9 0 1 0 -3.7,0M89.4,28.5a2.8,2.8 0 1 0 5.6,0a2.8,2.8 0 1 0 -5.6,0M97.0,30.1a2.9,2.9 0 1 0 5.8,0a2.9,2.9 0 1 0 -5.8,0M92.6,40.1a3.4,3.4 0 1 0 6.8,0a3.4,3.4 0 1 0 -6.8,0M85.2,15.6a3.2,3.2 0 1 0 6.4,0a3.2,3.2 0 1 0 -6.4,0M103.5,28.8a2.9,2.9 0 1 0 5.8,0a2.9,2.9 0 1 0 -5.8,0M95.8,25.2a3.2,3.2 0 1 0 6.5,0a3.2,3.2 0 1 0 -6.5,0M92.0,14.3a2.6,2.6 0 1 0 5.2,0a2.6,2.6 0 1 0 -5.2,0M103.2,38.0a1.8,1.8 0 1 0 3.6,0a1.8,1.8 0 1 0 -3.6,0M91.1,8.4a2.0,2.0 0 1 0 3.9,0a2.0,2.0 0 1 0 -3.9,0M95.6,40.1a3.3,3.3 0 1 0 6.7,0a3.3,3.3 0 1 0 -6.7,0M101.5,35.9a2.8,2.8 0 1 0 5.5,0a2.8,2.8 0 1 0 -5.5,0M98.8,29.5a3.1,3.1 0 1 0 6.1,0a3.1,3.1 0 1 0 -6.1,0M89.7,14.4a2.6,2.6 0 1 0 5.3,0a2.6,2.6 0 1 0 -5.3,0M105.2,33.3a2.5,2.5 0 1 0 5.0,0a2.5,2.5 0 1 0 -5.0,0M92.7,24.3a1.6,1.6 0 1 0 3.3,0a1.6,1.6 0 1 0 -3.3,0M85.5,23.3a2.9,2.9 0 1 0 5.8,0a2.9,2.9 0 1 0 -5.8,0M105.5,20.3a2.3,2.3 0 1 0 4.6,0a2.3,2.3 0 1 0 -4.6,0M92.3,37.4a2.9,2.9 0 1 0 5.8,0a2.9,2.9 0 1 0 -5.8,0M100.1,20.4a2.7,2.7 0 1 0 5.4,0a2.7,2.7 0 1 0 -5.4,0M98.9,7.8a2.4,2.4 0 1 0 4.8,0a2.4,2.4 0 1 0 -4.8,0M104.4,29.9a2.8,2.8 0 1 0 5.5,0a2.8,2.8 0 1 0 -5.5,0M99.0,15.8a2.2,2.2 0 1 0 4.4,0a2.2,2.2 0 1 0 -4.4,0M94.3,28.4a3.5,3.5 0 1 0 7.1,0a3.5,3.5 0 1 0 -7.1,0M90.9,35.7a3.5,3.5 0 1 0 7.1,0a3.5,3.5 0 1 0 -7.1,0M98.0,14.7a3.5,3.5 0 1 0 7.0,0a3.5,3.5 0 1 0 -7.0,0M102.4,11.6a2.4,2.4 0 1 0 4.9,0a2.4,2.4 0 1 0 -4.9,0M104.9,9.4a2.9,2.9 0 1 0 5.8,0a2.9,2.9 0 1 0 -5.8,0M91.5,41.9a2.9,2.9 0 1 0 5.8,0a2.9,2.9 0 1 0 -5.8,0M108.5,17.3a3.0,3.0 0 1 0 5.9,0a3.0,3.0 0 1 0 -5.9,0M104.6,16.9a2.8,2.8 0 1 0 5.5,0a2.8,2.8 0 1 0 -5.5,0M98.1,11.7a1.8,1.8 0 1 0 3.5,0a1.8,1.8 0 1 0 -3.5,0M102.4,12.1a2.5,2.5 0 1 0 4.9,0a2.5,2.5 0 1 0 -4.9,0M89.4,22.7a3.3,3.3 0 1 0 6.5,0a3.3,3.3 0 1 0 -6.5,0M95.6,34.7a2.8,2.8 0 1 0 5.6,0a2.8,2.8 0 1 0 -5.6,0M90.5,25.8a1.7,1.7 0 1 0 3.3,0a1.7,1.7 0 1 0 -3.3,0M88.9,29.5a2.7,2.7 0 1 0 5.3,0a2.7,2.7 0 1 0 -5.3,0M93.9,16.7a1.6,1.6 0 1 0 3.3,0a1.6,1.6 0 1 0 -3.3,0M106.2,30.6a3.5,3.5 0 1 0 6.9,0a3.5,3.5 0 1 0 -6.9,0M97.3,5.8a1.8,1.8 0 1 0 3.6,0a1.8,1.8 0 1 0 -3.6,0M100.8,41.3a2.4,2.4 0 1 0 4.7,0a2.4,2.4 0 1 0 -4.7,0M87.1,33.7a1.7,1.7 0 1 0 3.3,0a1.7,1.7 0 1 0 -3.3,0M102.9,21.9a2.7,2.7 0 1 0 5.5,0a2.7,2.7 0 1 0 -5.5,0M91.2,12.6a3.0,3.0 0 1 0 6.0,0a3.0,3.0 0 1 0 -6.0,0M94.8,34.0a2.9,2.9 0 1 0 5.8,0a2.9,2.9 0 1 0 -5.8,0" fill="url(#gpat)" opacity="0.62"/><ellipse cx="102" cy="18" rx="3.0" ry="5.0" transform="rotate(0 102 18)" fill="#a8582a" opacity="0.55"/><path d="M101.7,17.2a1.7,1.7 0 1 0 3.4,0a1.7,1.7 0 1 0 -3.4,0M101.6,17.8a1.8,1.8 0 1 0 3.5,0a1.8,1.8 0 1 0 -3.5,0M95.6,17.9a3.0,3.0 0 1 0 6.0,0a3.0,3.0 0 1 0 -6.0,0M95.0,19.9a1.7,1.7 0 1 0 3.5,0a1.7,1.7 0 1 0 -3.5,0M99.3,22.3a3.2,3.2 0 1 0 6.4,0a3.2,3.2 0 1 0 -6.4,0M103.7,18.0a2.0,2.0 0 1 0 3.9,0a2.0,2.0 0 1 0 -3.9,0M100.7,19.9a3.6,3.6 0 1 0 7.1,0a3.6,3.6 0 1 0 -7.1,0M105.6,15.1a1.9,1.9 0 1 0 3.8,0a1.9,1.9 0 1 0 -3.8,0M104.3,22.5a3.0,3.0 0 1 0 6.0,0a3.0,3.0 0 1 0 -6.0,0M102.9,11.6a3.3,3.3 0 1 0 6.7,0a3.3,3.3 0 1 0 -6.7,0M104.9,18.7a2.7,2.7 0 1 0 5.4,0a2.7,2.7 0 1 0 -5.4,0M102.3,17.5a2.3,2.3 0 1 0 4.6,0a2.3,2.3 0 1 0 -4.6,0M103.0,24.2a2.7,2.7 0 1 0 5.5,0a2.7,2.7 0 1 0 -5.5,0M101.8,12.4a3.2,3.2 0 1 0 6.3,0a3.2,3.2 0 1 0 -6.3,0" fill="#a8582a" opacity="0.55"/><ellipse cx="80" cy="8" rx="5.0" ry="3.5" transform="rotate(0 80 8)" fill="url(#gpat)" opacity="0.62"/><path d="M76.7,9.3a1.6,1.6 0 1 0 3.3,0a1.6,1.6 0 1 0 -3.3,0M78.5,8.5a3.0,3.0 0 1 0 6.1,0a3.0,3.0 0 1 0 -6.1,0M75.6,1.1a3.1,3.1 0 1 0 6.3,0a3.1,3.1 0 1 0 -6.3,0M79.1,10.8a2.3,2.3 0 1 0 4.5,0a2.3,2.3 0 1 0 -4.5,0M74.9,10.1a3.1,3.1 0 1 0 6.2,0a3.1,3.1 0 1 0 -6.2,0M76.3,3.5a2.7,2.7 0 1 0 5.4,0a2.7,2.7 0 1 0 -5.4,0M71.2,4.9a2.8,2.8 0 1 0 5.6,0a2.8,2.8 0 1 0 -5.6,0M71.1,2.9a2.1,2.1 0 1 0 4.3,0a2.1,2.1 0 1 0 -4.3,0M80.4,9.3a2.8,2.8 0 1 0 5.5,0a2.8,2.8 0 1 0 -5.5,0M67.8,8.7a2.6,2.6 0 1 0 5.3,0a2.6,2.6 0 1 0 -5.3,0M85.5,4.5a2.2,2.2 0 1 0 4.5,0a2.2,2.2 0 1 0 -4.5,0M78.3,13.7a2.4,2.4 0 1 0 4.7,0a2.4,2.4 0 1 0 -4.7,0M78.0,9.3a3.2,3.2 0 1 0 6.5,0a3.2,3.2 0 1 0 -6.5,0M86.7,7.2a1.8,1.8 0 1 0 3.5,0a1.8,1.8 0 1 0 -3.5,0M85.5,8.5a2.3,2.3 0 1 0 4.7,0a2.3,2.3 0 1 0 -4.7,0" fill="url(#gpat)" opacity="0.62"/><ellipse cx="50" cy="57" rx="7.0" ry="2.5" transform="rotate(0 50 57)" fill="#45458a" opacity="0.6"/><path d="M55.6,55.6a3.0,3.0 0 1 0 5.9,0a3.0,3.0 0 1 0 -5.9,0M49.7,57.2a3.1,3.1 0 1 0 6.2,0a3.1,3.1 0 1 0 -6.2,0M38.3,53.7a2.3,2.3 0 1 0 4.6,0a2.3,2.3 0 1 0 -4.6,0M37.8,55.9a3.1,3.1 0 1 0 6.2,0a3.1,3.1 0 1 0 -6.2,0M38.1,54.1a1.8,1.8 0 1 0 3.6,0a1.8,1.8 0 1 0 -3.6,0M41.8,54.5a3.2,3.2 0 1 0 6.3,0a3.2,3.2 0 1 0 -6.3,0M43.7,58.1a1.5,1.5 0 1 0 3.1,0a1.5,1.5 0 1 0 -3.1,0M41.9,57.0a3.1,3.1 0 1 0 6.2,0a3.1,3.1 0 1 0 -6.2,0M52.8,55.1a3.1,3.1 0 1 0 6.1,0a3.1,3.1 0 1 0 -6.1,0M43.6,53.7a1.7,1.7 0 1 0 3.4,0a1.7,1.7 0 1 0 -3.4,0M56.0,56.5a1.6,1.6 0 1 0 3.3,0a1.6,1.6 0 1 0 -3.3,0M48.2,52.1a3.2,3.2 0 1 0 6.4,0a3.2,3.2 0 1 0 -6.4,0M42.3,54.5a3.5,3.5 0 1 0 7.1,0a3.5,3.5 0 1 0 -7.1,0M35.2,57.7a3.2,3.2 0 1 0 6.3,0a3.2,3.2 0 1 0 -6.3,0M36.4,59.9a2.4,2.4 0 1 0 4.7,0a2.4,2.4 0 1 0 -4.7,0" fill="#45458a" opacity="0.6"/><ellipse cx="92" cy="48" rx="3.0" ry="4.0" transform="rotate(30 92 48)" fill="#45458a" opacity="0.6"/><path d="M90.7,44.5a2.0,2.0 0 1 0 4.0,0a2.0,2.0 0 1 0 -4.0,0M86.9,47.0a3.0,3.0 0 1 0 5.9,0a3.0,3.0 0 1 0 -5.9,0M87.6,52.2a3.4,3.4 0 1 0 6.8,0a3.4,3.4 0 1 0 -6.8,0M95.1,44.8a3.1,3.1 0 1 0 6.3,0a3.1,3.1 0 1 0 -6.3,0M85.5,50.7a3.1,3.1 0 1 0 6.3,0a3.1,3.1 0 1 0 -6.3,0M85.1,43.1a3.4,3.4 0 1 0 6.9,0a3.4,3.4 0 1 0 -6.9,0M86.2,47.9a3.4,3.4 0 1 0 6.7,0a3.4,3.4 0 1 0 -6.7,0M93.3,44.2a2.8,2.8 0 1 0 5.7,0a2.8,2.8 0 1 0 -5.7,0M90.6,42.7a2.1,2.1 0 1 0 4.2,0a2.1,2.1 0 1 0 -4.2,0M82.5,49.7a3.3,3.3 0 1 0 6.7,0a3.3,3.3 0 1 0 -6.7,0M95.8,46.8a2.5,2.5 0 1 0 5.1,0a2.5,2.5 0 1 0 -5.1,0M84.7,51.8a1.5,1.5 0 1 0 3.0,0a1.5,1.5 0 1 0 -3.0,0" fill="#45458a" opacity="0.6"/><ellipse cx="110" cy="45" rx="3.0" ry="8.0" transform="rotate(30 110 45)" fill="#9c9ce0" opacity="0.6"/><path d="M109.0,43.3a2.9,2.9 0 1 0 5.8,0a2.9,2.9 0 1 0 -5.8,0M109.1,49.9a1.7,1.7 0 1 0 3.4,0a1.7,1.7 0 1 0 -3.4,0M103.4,42.7a3.3,3.3 0 1 0 6.7,0a3.3,3.3 0 1 0 -6.7,0M98.8,49.6a3.4,3.4 0 1 0 6.9,0a3.4,3.4 0 1 0 -6.9,0M110.9,44.0a3.4,3.4 0 1 0 6.9,0a3.4,3.4 0 1 0 -6.9,0M101.9,54.2a3.4,3.4 0 1 0 6.8,0a3.4,3.4 0 1 0 -6.8,0M106.9,41.2a2.4,2.4 0 1 0 4.7,0a2.4,2.4 0 1 0 -4.7,0M98.1,56.0a2.9,2.9 0 1 0 5.9,0a2.9,2.9 0 1 0 -5.9,0M111.7,45.4a3.6,3.6 0 1 0 7.2,0a3.6,3.6 0 1 0 -7.2,0M104.8,54.1a1.9,1.9 0 1 0 3.7,0a1.9,1.9 0 1 0 -3.7,0M101.9,44.8a3.3,3.3 0 1 0 6.7,0a3.3,3.3 0 1 0 -6.7,0M108.9,35.5a2.7,2.7 0 1 0 5.4,0a2.7,2.7 0 1 0 -5.4,0M116.4,38.2a2.2,2.2 0 1 0 4.3,0a2.2,2.2 0 1 0 -4.3,0M105.1,43.8a1.6,1.6 0 1 0 3.1,0a1.6,1.6 0 1 0 -3.1,0M102.4,52.4a3.4,3.4 0 1 0 6.7,0a3.4,3.4 0 1 0 -6.7,0M109.8,45.7a2.2,2.2 0 1 0 4.5,0a2.2,2.2 0 1 0 -4.5,0M109.0,40.5a2.4,2.4 0 1 0 4.9,0a2.4,2.4 0 1 0 -4.9,0M99.2,50.1a3.5,3.5 0 1 0 7.0,0a3.5,3.5 0 1 0 -7.0,0M112.7,39.8a1.9,1.9 0 1 0 3.8,0a1.9,1.9 0 1 0 -3.8,0M102.1,45.3a3.0,3.0 0 1 0 5.9,0a3.0,3.0 0 1 0 -5.9,0" fill="#9c9ce0" opacity="0.6"/><use href="#lakes" width="116" height="61"/></svg><svg x="1576.3" y="228.8" width="116" height="61.2" viewBox="0 0 116 61" preserveAspectRatio="none" overflow="hidden"><use href="#usbase" width="116" height="61"/><ellipse cx="28" cy="6" rx="5.0" ry="3.0" transform="rotate(0 28 6)" fill="url(#gpat)" opacity="0.62"/><path d="M34.1,7.1a3.0,3.0 0 1 0 6.0,0a3.0,3.0 0 1 0 -6.0,0M33.4,6.5a2.0,2.0 0 1 0 4.0,0a2.0,2.0 0 1 0 -4.0,0M32.7,2.3a2.1,2.1 0 1 0 4.3,0a2.1,2.1 0 1 0 -4.3,0M20.2,3.6a2.1,2.1 0 1 0 4.2,0a2.1,2.1 0 1 0 -4.2,0M19.8,7.5a2.5,2.5 0 1 0 5.0,0a2.5,2.5 0 1 0 -5.0,0M34.6,4.5a1.6,1.6 0 1 0 3.2,0a1.6,1.6 0 1 0 -3.2,0M19.0,10.7a3.1,3.1 0 1 0 6.2,0a3.1,3.1 0 1 0 -6.2,0M18.8,3.0a2.9,2.9 0 1 0 5.9,0a2.9,2.9 0 1 0 -5.9,0M29.2,9.3a2.1,2.1 0 1 0 4.2,0a2.1,2.1 0 1 0 -4.2,0M29.4,10.7a1.6,1.6 0 1 0 3.1,0a1.6,1.6 0 1 0 -3.1,0M28.3,10.6a3.4,3.4 0 1 0 6.8,0a3.4,3.4 0 1 0 -6.8,0M21.7,11.2a3.2,3.2 0 1 0 6.5,0a3.2,3.2 0 1 0 -6.5,0M31.6,10.7a1.9,1.9 0 1 0 3.7,0a1.9,1.9 0 1 0 -3.7,0M23.5,6.3a1.7,1.7 0 1 0 3.4,0a1.7,1.7 0 1 0 -3.4,0" fill="url(#gpat)" opacity="0.62"/><ellipse cx="90" cy="14" rx="13.0" ry="7.0" transform="rotate(0 90 14)" fill="url(#gpat)" opacity="0.62"/><path d="M76.0,3.0a1.7,1.7 0 1 0 3.5,0a1.7,1.7 0 1 0 -3.5,0M77.8,23.7a2.7,2.7 0 1 0 5.5,0a2.7,2.7 0 1 0 -5.5,0M102.2,23.0a1.7,1.7 0 1 0 3.4,0a1.7,1.7 0 1 0 -3.4,0M106.5,9.3a2.9,2.9 0 1 0 5.8,0a2.9,2.9 0 1 0 -5.8,0M99.3,10.8a1.9,1.9 0 1 0 3.8,0a1.9,1.9 0 1 0 -3.8,0M69.3,4.6a3.5,3.5 0 1 0 6.9,0a3.5,3.5 0 1 0 -6.9,0M93.4,3.6a2.3,2.3 0 1 0 4.5,0a2.3,2.3 0 1 0 -4.5,0M91.5,3.2a3.3,3.3 0 1 0 6.7,0a3.3,3.3 0 1 0 -6.7,0M87.8,4.2a2.9,2.9 0 1 0 5.7,0a2.9,2.9 0 1 0 -5.7,0M90.9,21.1a3.1,3.1 0 1 0 6.2,0a3.1,3.1 0 1 0 -6.2,0M86.9,11.8a1.9,1.9 0 1 0 3.9,0a1.9,1.9 0 1 0 -3.9,0M70.6,19.1a2.2,2.2 0 1 0 4.5,0a2.2,2.2 0 1 0 -4.5,0M69.9,23.7a2.3,2.3 0 1 0 4.6,0a2.3,2.3 0 1 0 -4.6,0M64.1,18.6a2.2,2.2 0 1 0 4.4,0a2.2,2.2 0 1 0 -4.4,0M76.2,13.0a3.3,3.3 0 1 0 6.6,0a3.3,3.3 0 1 0 -6.6,0M92.8,7.9a2.8,2.8 0 1 0 5.6,0a2.8,2.8 0 1 0 -5.6,0M88.8,26.8a2.5,2.5 0 1 0 5.1,0a2.5,2.5 0 1 0 -5.1,0M81.8,27.5a2.5,2.5 0 1 0 5.0,0a2.5,2.5 0 1 0 -5.0,0M64.4,8.6a2.1,2.1 0 1 0 4.2,0a2.1,2.1 0 1 0 -4.2,0M64.0,17.8a2.2,2.2 0 1 0 4.5,0a2.2,2.2 0 1 0 -4.5,0M99.2,5.3a3.5,3.5 0 1 0 7.0,0a3.5,3.5 0 1 0 -7.0,0M66.2,7.4a2.5,2.5 0 1 0 5.0,0a2.5,2.5 0 1 0 -5.0,0M90.0,22.1a2.5,2.5 0 1 0 5.1,0a2.5,2.5 0 1 0 -5.1,0M74.5,7.8a2.3,2.3 0 1 0 4.5,0a2.3,2.3 0 1 0 -4.5,0M85.1,23.9a2.9,2.9 0 1 0 5.9,0a2.9,2.9 0 1 0 -5.9,0M84.8,12.0a2.0,2.0 0 1 0 4.1,0a2.0,2.0 0 1 0 -4.1,0M79.7,5.3a2.1,2.1 0 1 0 4.2,0a2.1,2.1 0 1 0 -4.2,0M82.8,12.5a2.6,2.6 0 1 0 5.1,0a2.6,2.6 0 1 0 -5.1,0M102.5,10.8a1.8,1.8 0 1 0 3.7,0a1.8,1.8 0 1 0 -3.7,0M79.9,4.0a2.2,2.2 0 1 0 4.4,0a2.2,2.2 0 1 0 -4.4,0M88.3,14.7a1.7,1.7 0 1 0 3.4,0a1.7,1.7 0 1 0 -3.4,0M91.4,5.3a3.3,3.3 0 1 0 6.6,0a3.3,3.3 0 1 0 -6.6,0M109.6,11.6a2.2,2.2 0 1 0 4.5,0a2.2,2.2 0 1 0 -4.5,0M106.8,22.8a1.9,1.9 0 1 0 3.7,0a1.9,1.9 0 1 0 -3.7,0M98.6,21.0a2.1,2.1 0 1 0 4.1,0a2.1,2.1 0 1 0 -4.1,0M86.5,19.8a1.6,1.6 0 1 0 3.2,0a1.6,1.6 0 1 0 -3.2,0M113.0,16.3a1.7,1.7 0 1 0 3.4,0a1.7,1.7 0 1 0 -3.4,0M68.6,19.0a2.7,2.7 0 1 0 5.4,0a2.7,2.7 0 1 0 -5.4,0M105.0,4.2a2.8,2.8 0 1 0 5.5,0a2.8,2.8 0 1 0 -5.5,0M69.0,18.8a2.2,2.2 0 1 0 4.5,0a2.2,2.2 0 1 0 -4.5,0M95.5,22.7a2.6,2.6 0 1 0 5.1,0a2.6,2.6 0 1 0 -5.1,0M88.5,23.4a2.3,2.3 0 1 0 4.6,0a2.3,2.3 0 1 0 -4.6,0M109.9,20.5a2.6,2.6 0 1 0 5.2,0a2.6,2.6 0 1 0 -5.2,0M80.9,12.3a2.1,2.1 0 1 0 4.3,0a2.1,2.1 0 1 0 -4.3,0M110.6,17.6a2.9,2.9 0 1 0 5.7,0a2.9,2.9 0 1 0 -5.7,0M65.9,13.9a2.4,2.4 0 1 0 4.8,0a2.4,2.4 0 1 0 -4.8,0M62.5,12.3a1.7,1.7 0 1 0 3.5,0a1.7,1.7 0 1 0 -3.5,0M80.3,6.0a1.9,1.9 0 1 0 3.8,0a1.9,1.9 0 1 0 -3.8,0M97.9,23.3a1.7,1.7 0 1 0 3.4,0a1.7,1.7 0 1 0 -3.4,0M94.4,5.7a2.1,2.1 0 1 0 4.3,0a2.1,2.1 0 1 0 -4.3,0M72.3,17.6a2.4,2.4 0 1 0 4.9,0a2.4,2.4 0 1 0 -4.9,0M82.4,22.4a2.0,2.0 0 1 0 4.1,0a2.0,2.0 0 1 0 -4.1,0M88.0,3.3a2.2,2.2 0 1 0 4.5,0a2.2,2.2 0 1 0 -4.5,0M78.8,21.0a3.5,3.5 0 1 0 7.1,0a3.5,3.5 0 1 0 -7.1,0M74.2,2.2a3.4,3.4 0 1 0 6.7,0a3.4,3.4 0 1 0 -6.7,0M84.5,3.2a2.2,2.2 0 1 0 4.4,0a2.2,2.2 0 1 0 -4.4,0M80.6,11.1a2.5,2.5 0 1 0 5.0,0a2.5,2.5 0 1 0 -5.0,0M81.8,4.5a2.5,2.5 0 1 0 5.1,0a2.5,2.5 0 1 0 -5.1,0M76.2,5.1a2.7,2.7 0 1 0 5.4,0a2.7,2.7 0 1 0 -5.4,0M72.5,10.5a2.7,2.7 0 1 0 5.3,0a2.7,2.7 0 1 0 -5.3,0M108.3,14.0a2.0,2.0 0 1 0 3.9,0a2.0,2.0 0 1 0 -3.9,0M83.8,10.8a2.6,2.6 0 1 0 5.3,0a2.6,2.6 0 1 0 -5.3,0M81.3,23.2a3.3,3.3 0 1 0 6.5,0a3.3,3.3 0 1 0 -6.5,0M83.9,1.3a2.7,2.7 0 1 0 5.4,0a2.7,2.7 0 1 0 -5.4,0" fill="url(#gpat)" opacity="0.62"/><ellipse cx="80" cy="6" rx="6.0" ry="2.5" transform="rotate(0 80 6)" fill="#a8582a" opacity="0.55"/><path d="M85.3,2.6a3.3,3.3 0 1 0 6.7,0a3.3,3.3 0 1 0 -6.7,0M78.6,7.7a2.2,2.2 0 1 0 4.4,0a2.2,2.2 0 1 0 -4.4,0M71.0,5.2a3.6,3.6 0 1 0 7.2,0a3.6,3.6 0 1 0 -7.2,0M66.5,5.5a1.8,1.8 0 1 0 3.5,0a1.8,1.8 0 1 0 -3.5,0M85.3,6.3a3.2,3.2 0 1 0 6.4,0a3.2,3.2 0 1 0 -6.4,0M75.6,10.8a1.7,1.7 0 1 0 3.5,0a1.7,1.7 0 1 0 -3.5,0M87.9,3.9a3.0,3.0 0 1 0 6.0,0a3.0,3.0 0 1 0 -6.0,0M72.7,2.6a2.1,2.1 0 1 0 4.1,0a2.1,2.1 0 1 0 -4.1,0M86.8,6.3a3.0,3.0 0 1 0 6.1,0a3.0,3.0 0 1 0 -6.1,0M73.5,8.3a1.7,1.7 0 1 0 3.4,0a1.7,1.7 0 1 0 -3.4,0M87.3,7.8a2.3,2.3 0 1 0 4.7,0a2.3,2.3 0 1 0 -4.7,0M76.4,1.4a1.6,1.6 0 1 0 3.1,0a1.6,1.6 0 1 0 -3.1,0M89.5,6.6a2.0,2.0 0 1 0 3.9,0a2.0,2.0 0 1 0 -3.9,0M79.5,9.4a3.1,3.1 0 1 0 6.1,0a3.1,3.1 0 1 0 -6.1,0" fill="#a8582a" opacity="0.55"/><ellipse cx="48" cy="52" rx="8.0" ry="4.0" transform="rotate(-15 48 52)" fill="#45458a" opacity="0.6"/><path d="M30.8,52.3a3.5,3.5 0 1 0 7.1,0a3.5,3.5 0 1 0 -7.1,0M58.0,51.8a2.1,2.1 0 1 0 4.1,0a2.1,2.1 0 1 0 -4.1,0M43.8,45.1a3.5,3.5 0 1 0 6.9,0a3.5,3.5 0 1 0 -6.9,0M37.0,53.8a3.2,3.2 0 1 0 6.4,0a3.2,3.2 0 1 0 -6.4,0M58.1,48.1a2.8,2.8 0 1 0 5.7,0a2.8,2.8 0 1 0 -5.7,0M32.3,53.5a3.0,3.0 0 1 0 6.0,0a3.0,3.0 0 1 0 -6.0,0M40.2,50.0a2.5,2.5 0 1 0 5.0,0a2.5,2.5 0 1 0 -5.0,0M37.6,54.5a2.9,2.9 0 1 0 5.7,0a2.9,2.9 0 1 0 -5.7,0M33.9,49.4a2.5,2.5 0 1 0 5.0,0a2.5,2.5 0 1 0 -5.0,0M37.0,47.0a3.1,3.1 0 1 0 6.2,0a3.1,3.1 0 1 0 -6.2,0M41.8,47.3a1.7,1.7 0 1 0 3.3,0a1.7,1.7 0 1 0 -3.3,0M54.6,52.8a2.5,2.5 0 1 0 5.1,0a2.5,2.5 0 1 0 -5.1,0M57.7,50.4a1.6,1.6 0 1 0 3.3,0a1.6,1.6 0 1 0 -3.3,0M44.2,56.8a2.2,2.2 0 1 0 4.4,0a2.2,2.2 0 1 0 -4.4,0M50.2,51.6a3.2,3.2 0 1 0 6.5,0a3.2,3.2 0 1 0 -6.5,0M43.0,58.4a2.0,2.0 0 1 0 4.0,0a2.0,2.0 0 1 0 -4.0,0M52.2,53.7a1.6,1.6 0 1 0 3.2,0a1.6,1.6 0 1 0 -3.2,0M50.4,54.0a1.7,1.7 0 1 0 3.4,0a1.7,1.7 0 1 0 -3.4,0M41.4,45.7a2.2,2.2 0 1 0 4.3,0a2.2,2.2 0 1 0 -4.3,0M49.1,54.4a2.6,2.6 0 1 0 5.1,0a2.6,2.6 0 1 0 -5.1,0M46.3,59.4a1.9,1.9 0 1 0 3.9,0a1.9,1.9 0 1 0 -3.9,0M43.5,53.7a1.6,1.6 0 1 0 3.3,0a1.6,1.6 0 1 0 -3.3,0M43.2,50.7a2.2,2.2 0 1 0 4.5,0a2.2,2.2 0 1 0 -4.5,0M51.9,50.4a3.4,3.4 0 1 0 6.9,0a3.4,3.4 0 1 0 -6.9,0M50.6,48.9a3.3,3.3 0 1 0 6.5,0a3.3,3.3 0 1 0 -6.5,0" fill="#45458a" opacity="0.6"/><ellipse cx="108" cy="40" rx="4.0" ry="7.0" transform="rotate(30 108 40)" fill="#9c9ce0" opacity="0.6"/><path d="M111.7,40.2a2.4,2.4 0 1 0 4.9,0a2.4,2.4 0 1 0 -4.9,0M110.1,37.6a1.9,1.9 0 1 0 3.7,0a1.9,1.9 0 1 0 -3.7,0M102.1,35.1a2.5,2.5 0 1 0 5.0,0a2.5,2.5 0 1 0 -5.0,0M113.9,40.7a1.5,1.5 0 1 0 3.0,0a1.5,1.5 0 1 0 -3.0,0M109.5,34.2a1.7,1.7 0 1 0 3.4,0a1.7,1.7 0 1 0 -3.4,0M98.9,46.2a2.2,2.2 0 1 0 4.5,0a2.2,2.2 0 1 0 -4.5,0M98.3,38.1a2.2,2.2 0 1 0 4.5,0a2.2,2.2 0 1 0 -4.5,0M110.9,38.9a3.3,3.3 0 1 0 6.6,0a3.3,3.3 0 1 0 -6.6,0M101.0,38.5a2.0,2.0 0 1 0 4.1,0a2.0,2.0 0 1 0 -4.1,0M96.4,45.9a2.2,2.2 0 1 0 4.3,0a2.2,2.2 0 1 0 -4.3,0M113.8,31.1a1.6,1.6 0 1 0 3.2,0a1.6,1.6 0 1 0 -3.2,0M106.1,34.1a1.6,1.6 0 1 0 3.1,0a1.6,1.6 0 1 0 -3.1,0M112.1,33.9a1.6,1.6 0 1 0 3.1,0a1.6,1.6 0 1 0 -3.1,0M100.8,45.2a2.0,2.0 0 1 0 4.1,0a2.0,2.0 0 1 0 -4.1,0M103.1,48.8a3.1,3.1 0 1 0 6.2,0a3.1,3.1 0 1 0 -6.2,0M99.3,45.3a3.6,3.6 0 1 0 7.1,0a3.6,3.6 0 1 0 -7.1,0M103.9,36.8a2.1,2.1 0 1 0 4.1,0a2.1,2.1 0 1 0 -4.1,0M106.7,32.2a2.5,2.5 0 1 0 5.0,0a2.5,2.5 0 1 0 -5.0,0M107.3,30.2a2.3,2.3 0 1 0 4.6,0a2.3,2.3 0 1 0 -4.6,0M105.0,41.8a1.8,1.8 0 1 0 3.6,0a1.8,1.8 0 1 0 -3.6,0M98.7,50.6a2.9,2.9 0 1 0 5.9,0a2.9,2.9 0 1 0 -5.9,0M103.4,39.3a3.3,3.3 0 1 0 6.7,0a3.3,3.3 0 1 0 -6.7,0" fill="#9c9ce0" opacity="0.6"/><use href="#lakes" width="116" height="61"/></svg><svg x="1694.3666666666666" y="228.8" width="116" height="61.2" viewBox="0 0 116 61" preserveAspectRatio="none" overflow="hidden"><use href="#usbase" width="116" height="61"/><ellipse cx="30" cy="10" rx="11.0" ry="6.0" transform="rotate(10 30 10)" fill="url(#gpat)" opacity="0.62"/><path d="M26.8,13.8a2.9,2.9 0 1 0 5.8,0a2.9,2.9 0 1 0 -5.8,0M27.2,19.5a1.8,1.8 0 1 0 3.6,0a1.8,1.8 0 1 0 -3.6,0M45.8,11.9a2.1,2.1 0 1 0 4.2,0a2.1,2.1 0 1 0 -4.2,0M44.1,17.4a3.4,3.4 0 1 0 6.8,0a3.4,3.4 0 1 0 -6.8,0M22.2,12.6a3.6,3.6 0 1 0 7.1,0a3.6,3.6 0 1 0 -7.1,0M40.7,7.1a1.7,1.7 0 1 0 3.5,0a1.7,1.7 0 1 0 -3.5,0M30.1,-1.6a2.1,2.1 0 1 0 4.3,0a2.1,2.1 0 1 0 -4.3,0M11.7,15.6a3.1,3.1 0 1 0 6.1,0a3.1,3.1 0 1 0 -6.1,0M43.6,8.0a2.0,2.0 0 1 0 4.0,0a2.0,2.0 0 1 0 -4.0,0M45.8,10.0a3.3,3.3 0 1 0 6.6,0a3.3,3.3 0 1 0 -6.6,0M19.4,14.5a3.5,3.5 0 1 0 7.1,0a3.5,3.5 0 1 0 -7.1,0M34.7,9.4a1.7,1.7 0 1 0 3.3,0a1.7,1.7 0 1 0 -3.3,0M38.5,19.2a2.0,2.0 0 1 0 4.1,0a2.0,2.0 0 1 0 -4.1,0M32.9,18.8a3.5,3.5 0 1 0 7.0,0a3.5,3.5 0 1 0 -7.0,0M22.0,9.3a1.8,1.8 0 1 0 3.6,0a1.8,1.8 0 1 0 -3.6,0M23.1,15.8a1.9,1.9 0 1 0 3.9,0a1.9,1.9 0 1 0 -3.9,0M38.4,15.3a2.0,2.0 0 1 0 3.9,0a2.0,2.0 0 1 0 -3.9,0M28.4,13.6a2.7,2.7 0 1 0 5.4,0a2.7,2.7 0 1 0 -5.4,0M30.0,3.1a1.7,1.7 0 1 0 3.5,0a1.7,1.7 0 1 0 -3.5,0M22.7,10.6a1.8,1.8 0 1 0 3.6,0a1.8,1.8 0 1 0 -3.6,0M24.9,20.9a1.6,1.6 0 1 0 3.2,0a1.6,1.6 0 1 0 -3.2,0M25.2,9.7a2.2,2.2 0 1 0 4.5,0a2.2,2.2 0 1 0 -4.5,0M47.5,12.1a2.5,2.5 0 1 0 5.0,0a2.5,2.5 0 1 0 -5.0,0M25.3,15.9a2.6,2.6 0 1 0 5.3,0a2.6,2.6 0 1 0 -5.3,0M17.7,10.5a1.6,1.6 0 1 0 3.1,0a1.6,1.6 0 1 0 -3.1,0M32.8,-0.8a3.5,3.5 0 1 0 7.0,0a3.5,3.5 0 1 0 -7.0,0M14.6,7.2a1.7,1.7 0 1 0 3.5,0a1.7,1.7 0 1 0 -3.5,0M42.7,12.0a1.6,1.6 0 1 0 3.3,0a1.6,1.6 0 1 0 -3.3,0M44.4,11.2a3.1,3.1 0 1 0 6.1,0a3.1,3.1 0 1 0 -6.1,0M17.3,7.0a3.2,3.2 0 1 0 6.4,0a3.2,3.2 0 1 0 -6.4,0M27.5,1.5a3.5,3.5 0 1 0 6.9,0a3.5,3.5 0 1 0 -6.9,0M34.6,22.1a2.7,2.7 0 1 0 5.4,0a2.7,2.7 0 1 0 -5.4,0M40.6,19.6a3.3,3.3 0 1 0 6.6,0a3.3,3.3 0 1 0 -6.6,0M34.6,4.0a2.8,2.8 0 1 0 5.5,0a2.8,2.8 0 1 0 -5.5,0M14.2,1.3a2.4,2.4 0 1 0 4.7,0a2.4,2.4 0 1 0 -4.7,0M36.1,16.3a2.2,2.2 0 1 0 4.5,0a2.2,2.2 0 1 0 -4.5,0M35.6,12.9a2.9,2.9 0 1 0 5.8,0a2.9,2.9 0 1 0 -5.8,0M17.5,7.8a3.3,3.3 0 1 0 6.6,0a3.3,3.3 0 1 0 -6.6,0M27.7,10.2a2.9,2.9 0 1 0 5.8,0a2.9,2.9 0 1 0 -5.8,0M44.2,6.1a2.8,2.8 0 1 0 5.7,0a2.8,2.8 0 1 0 -5.7,0M15.7,9.9a3.5,3.5 0 1 0 6.9,0a3.5,3.5 0 1 0 -6.9,0M22.2,4.6a3.3,3.3 0 1 0 6.7,0a3.3,3.3 0 1 0 -6.7,0M29.2,-1.7a2.3,2.3 0 1 0 4.6,0a2.3,2.3 0 1 0 -4.6,0M12.1,10.7a2.1,2.1 0 1 0 4.2,0a2.1,2.1 0 1 0 -4.2,0M18.7,19.8a3.2,3.2 0 1 0 6.5,0a3.2,3.2 0 1 0 -6.5,0M42.5,5.8a2.9,2.9 0 1 0 5.7,0a2.9,2.9 0 1 0 -5.7,0M46.6,16.0a1.9,1.9 0 1 0 3.8,0a1.9,1.9 0 1 0 -3.8,0M17.5,0.9a1.9,1.9 0 1 0 3.8,0a1.9,1.9 0 1 0 -3.8,0" fill="url(#gpat)" opacity="0.62"/><ellipse cx="30" cy="8" rx="5.0" ry="2.0" transform="rotate(15 30 8)" fill="#a8582a" opacity="0.55"/><path d="M28.0,6.8a1.7,1.7 0 1 0 3.5,0a1.7,1.7 0 1 0 -3.5,0M28.4,5.9a2.6,2.6 0 1 0 5.1,0a2.6,2.6 0 1 0 -5.1,0M22.6,4.6a3.3,3.3 0 1 0 6.6,0a3.3,3.3 0 1 0 -6.6,0M30.6,6.7a1.7,1.7 0 1 0 3.4,0a1.7,1.7 0 1 0 -3.4,0M18.6,6.0a2.0,2.0 0 1 0 4.0,0a2.0,2.0 0 1 0 -4.0,0M28.7,5.9a3.5,3.5 0 1 0 7.0,0a3.5,3.5 0 1 0 -7.0,0M30.8,9.7a3.1,3.1 0 1 0 6.2,0a3.1,3.1 0 1 0 -6.2,0M36.2,10.0a3.3,3.3 0 1 0 6.6,0a3.3,3.3 0 1 0 -6.6,0M26.1,10.3a1.5,1.5 0 1 0 3.0,0a1.5,1.5 0 1 0 -3.0,0M21.5,6.8a1.7,1.7 0 1 0 3.4,0a1.7,1.7 0 1 0 -3.4,0" fill="#a8582a" opacity="0.55"/><ellipse cx="100" cy="12" rx="7.0" ry="7.0" transform="rotate(0 100 12)" fill="url(#gpat)" opacity="0.62"/><path d="M102.6,24.0a2.6,2.6 0 1 0 5.2,0a2.6,2.6 0 1 0 -5.2,0M90.3,0.7a3.5,3.5 0 1 0 6.9,0a3.5,3.5 0 1 0 -6.9,0M103.7,10.0a2.8,2.8 0 1 0 5.6,0a2.8,2.8 0 1 0 -5.6,0M103.8,15.2a2.3,2.3 0 1 0 4.6,0a2.3,2.3 0 1 0 -4.6,0M101.9,13.3a2.8,2.8 0 1 0 5.7,0a2.8,2.8 0 1 0 -5.7,0M101.5,4.1a1.8,1.8 0 1 0 3.7,0a1.8,1.8 0 1 0 -3.7,0M93.5,7.6a3.3,3.3 0 1 0 6.7,0a3.3,3.3 0 1 0 -6.7,0M103.1,13.0a3.4,3.4 0 1 0 6.8,0a3.4,3.4 0 1 0 -6.8,0M96.4,4.4a1.6,1.6 0 1 0 3.3,0a1.6,1.6 0 1 0 -3.3,0M92.6,4.4a1.6,1.6 0 1 0 3.2,0a1.6,1.6 0 1 0 -3.2,0M100.9,9.9a3.1,3.1 0 1 0 6.2,0a3.1,3.1 0 1 0 -6.2,0M87.0,13.2a1.7,1.7 0 1 0 3.4,0a1.7,1.7 0 1 0 -3.4,0M107.5,1.5a1.5,1.5 0 1 0 3.0,0a1.5,1.5 0 1 0 -3.0,0M90.3,20.7a2.7,2.7 0 1 0 5.3,0a2.7,2.7 0 1 0 -5.3,0M105.0,4.7a2.2,2.2 0 1 0 4.4,0a2.2,2.2 0 1 0 -4.4,0M104.9,11.8a2.8,2.8 0 1 0 5.6,0a2.8,2.8 0 1 0 -5.6,0M96.4,13.7a2.7,2.7 0 1 0 5.4,0a2.7,2.7 0 1 0 -5.4,0M95.0,12.9a3.2,3.2 0 1 0 6.5,0a3.2,3.2 0 1 0 -6.5,0M91.5,1.3a2.5,2.5 0 1 0 5.1,0a2.5,2.5 0 1 0 -5.1,0M92.3,7.3a2.5,2.5 0 1 0 5.1,0a2.5,2.5 0 1 0 -5.1,0M89.8,5.7a2.5,2.5 0 1 0 5.1,0a2.5,2.5 0 1 0 -5.1,0M93.2,15.4a1.9,1.9 0 1 0 3.8,0a1.9,1.9 0 1 0 -3.8,0M96.1,25.7a1.9,1.9 0 1 0 3.7,0a1.9,1.9 0 1 0 -3.7,0M95.9,15.3a2.2,2.2 0 1 0 4.4,0a2.2,2.2 0 1 0 -4.4,0M93.9,5.3a3.5,3.5 0 1 0 7.1,0a3.5,3.5 0 1 0 -7.1,0M92.9,15.2a3.3,3.3 0 1 0 6.6,0a3.3,3.3 0 1 0 -6.6,0M93.0,20.7a3.3,3.3 0 1 0 6.5,0a3.3,3.3 0 1 0 -6.5,0M93.1,23.4a1.6,1.6 0 1 0 3.3,0a1.6,1.6 0 1 0 -3.3,0M90.1,13.6a3.4,3.4 0 1 0 6.8,0a3.4,3.4 0 1 0 -6.8,0M90.1,22.4a3.0,3.0 0 1 0 6.0,0a3.0,3.0 0 1 0 -6.0,0M105.3,22.3a3.0,3.0 0 1 0 6.0,0a3.0,3.0 0 1 0 -6.0,0M94.6,14.5a3.5,3.5 0 1 0 7.0,0a3.5,3.5 0 1 0 -7.0,0M95.0,11.5a2.3,2.3 0 1 0 4.5,0a2.3,2.3 0 1 0 -4.5,0M98.6,18.6a2.9,2.9 0 1 0 5.8,0a2.9,2.9 0 1 0 -5.8,0M88.0,5.9a3.3,3.3 0 1 0 6.6,0a3.3,3.3 0 1 0 -6.6,0M103.7,22.2a2.5,2.5 0 1 0 5.1,0a2.5,2.5 0 1 0 -5.1,0" fill="url(#gpat)" opacity="0.62"/><ellipse cx="55" cy="47" rx="7.0" ry="5.0" transform="rotate(-20 55 47)" fill="#45458a" opacity="0.6"/><path d="M42.2,54.5a3.0,3.0 0 1 0 5.9,0a3.0,3.0 0 1 0 -5.9,0M49.6,49.4a3.2,3.2 0 1 0 6.4,0a3.2,3.2 0 1 0 -6.4,0M48.3,38.5a3.4,3.4 0 1 0 6.8,0a3.4,3.4 0 1 0 -6.8,0M58.4,40.9a2.7,2.7 0 1 0 5.4,0a2.7,2.7 0 1 0 -5.4,0M43.5,43.4a3.1,3.1 0 1 0 6.2,0a3.1,3.1 0 1 0 -6.2,0M61.9,48.1a2.4,2.4 0 1 0 4.8,0a2.4,2.4 0 1 0 -4.8,0M48.6,52.5a1.9,1.9 0 1 0 3.9,0a1.9,1.9 0 1 0 -3.9,0M59.0,40.4a3.6,3.6 0 1 0 7.2,0a3.6,3.6 0 1 0 -7.2,0M44.1,54.3a2.8,2.8 0 1 0 5.6,0a2.8,2.8 0 1 0 -5.6,0M44.2,46.1a1.5,1.5 0 1 0 3.0,0a1.5,1.5 0 1 0 -3.0,0M50.2,56.5a3.2,3.2 0 1 0 6.4,0a3.2,3.2 0 1 0 -6.4,0M56.7,47.6a2.6,2.6 0 1 0 5.2,0a2.6,2.6 0 1 0 -5.2,0M55.6,42.6a2.0,2.0 0 1 0 4.0,0a2.0,2.0 0 1 0 -4.0,0M54.5,38.5a1.6,1.6 0 1 0 3.2,0a1.6,1.6 0 1 0 -3.2,0M53.3,49.8a2.9,2.9 0 1 0 5.8,0a2.9,2.9 0 1 0 -5.8,0M62.7,48.1a1.8,1.8 0 1 0 3.5,0a1.8,1.8 0 1 0 -3.5,0M54.9,49.9a2.8,2.8 0 1 0 5.5,0a2.8,2.8 0 1 0 -5.5,0M49.5,46.3a2.5,2.5 0 1 0 4.9,0a2.5,2.5 0 1 0 -4.9,0M48.9,54.3a1.9,1.9 0 1 0 3.8,0a1.9,1.9 0 1 0 -3.8,0M43.7,55.9a3.1,3.1 0 1 0 6.1,0a3.1,3.1 0 1 0 -6.1,0M47.9,43.3a2.7,2.7 0 1 0 5.5,0a2.7,2.7 0 1 0 -5.5,0M65.1,45.5a2.1,2.1 0 1 0 4.1,0a2.1,2.1 0 1 0 -4.1,0M53.5,50.5a2.5,2.5 0 1 0 5.1,0a2.5,2.5 0 1 0 -5.1,0M54.2,45.7a2.7,2.7 0 1 0 5.4,0a2.7,2.7 0 1 0 -5.4,0M46.9,45.0a2.7,2.7 0 1 0 5.3,0a2.7,2.7 0 1 0 -5.3,0M58.4,45.6a3.1,3.1 0 1 0 6.2,0a3.1,3.1 0 1 0 -6.2,0M41.2,55.1a3.1,3.1 0 1 0 6.1,0a3.1,3.1 0 1 0 -6.1,0" fill="#45458a" opacity="0.6"/><ellipse cx="108" cy="45" rx="3.0" ry="7.0" transform="rotate(30 108 45)" fill="#9c9ce0" opacity="0.6"/><path d="M105.4,48.8a1.8,1.8 0 1 0 3.6,0a1.8,1.8 0 1 0 -3.6,0M111.1,41.6a1.6,1.6 0 1 0 3.1,0a1.6,1.6 0 1 0 -3.1,0M111.5,45.2a2.8,2.8 0 1 0 5.6,0a2.8,2.8 0 1 0 -5.6,0M107.4,41.0a2.1,2.1 0 1 0 4.2,0a2.1,2.1 0 1 0 -4.2,0M105.7,47.0a1.9,1.9 0 1 0 3.8,0a1.9,1.9 0 1 0 -3.8,0M98.0,52.2a2.9,2.9 0 1 0 5.9,0a2.9,2.9 0 1 0 -5.9,0M103.5,43.0a2.1,2.1 0 1 0 4.3,0a2.1,2.1 0 1 0 -4.3,0M100.9,50.8a2.4,2.4 0 1 0 4.9,0a2.4,2.4 0 1 0 -4.9,0M98.8,48.3a3.1,3.1 0 1 0 6.2,0a3.1,3.1 0 1 0 -6.2,0M105.7,48.5a1.9,1.9 0 1 0 3.9,0a1.9,1.9 0 1 0 -3.9,0M103.3,42.8a3.2,3.2 0 1 0 6.5,0a3.2,3.2 0 1 0 -6.5,0M111.9,32.9a2.7,2.7 0 1 0 5.4,0a2.7,2.7 0 1 0 -5.4,0M97.3,47.2a3.5,3.5 0 1 0 7.0,0a3.5,3.5 0 1 0 -7.0,0M104.1,52.1a1.5,1.5 0 1 0 3.0,0a1.5,1.5 0 1 0 -3.0,0M101.3,55.9a2.5,2.5 0 1 0 5.0,0a2.5,2.5 0 1 0 -5.0,0M107.8,36.4a2.3,2.3 0 1 0 4.5,0a2.3,2.3 0 1 0 -4.5,0M108.0,36.3a1.6,1.6 0 1 0 3.3,0a1.6,1.6 0 1 0 -3.3,0M108.3,43.0a3.6,3.6 0 1 0 7.2,0a3.6,3.6 0 1 0 -7.2,0" fill="#9c9ce0" opacity="0.6"/><use href="#lakes" width="116" height="61"/></svg><svg x="1812.4333333333334" y="228.8" width="116" height="61.2" viewBox="0 0 116 61" preserveAspectRatio="none" overflow="hidden"><use href="#usbase" width="116" height="61"/><ellipse cx="40" cy="18" rx="16.0" ry="10.0" transform="rotate(0 40 18)" fill="url(#gpat)" opacity="0.62"/><path d="M49.5,12.6a1.7,1.7 0 1 0 3.5,0a1.7,1.7 0 1 0 -3.5,0M57.9,29.3a3.3,3.3 0 1 0 6.6,0a3.3,3.3 0 1 0 -6.6,0M63.5,17.1a2.8,2.8 0 1 0 5.7,0a2.8,2.8 0 1 0 -5.7,0M28.8,5.2a2.6,2.6 0 1 0 5.3,0a2.6,2.6 0 1 0 -5.3,0M40.7,21.2a3.3,3.3 0 1 0 6.6,0a3.3,3.3 0 1 0 -6.6,0M47.0,-0.6a3.1,3.1 0 1 0 6.1,0a3.1,3.1 0 1 0 -6.1,0M25.6,13.8a3.3,3.3 0 1 0 6.6,0a3.3,3.3 0 1 0 -6.6,0M7.5,14.6a3.1,3.1 0 1 0 6.3,0a3.1,3.1 0 1 0 -6.3,0M42.5,2.5a3.2,3.2 0 1 0 6.4,0a3.2,3.2 0 1 0 -6.4,0M13.0,25.3a2.6,2.6 0 1 0 5.2,0a2.6,2.6 0 1 0 -5.2,0M12.2,5.5a3.4,3.4 0 1 0 6.7,0a3.4,3.4 0 1 0 -6.7,0M32.6,2.9a2.0,2.0 0 1 0 4.0,0a2.0,2.0 0 1 0 -4.0,0M48.7,7.2a2.3,2.3 0 1 0 4.6,0a2.3,2.3 0 1 0 -4.6,0M51.3,7.5a3.0,3.0 0 1 0 5.9,0a3.0,3.0 0 1 0 -5.9,0M47.5,33.9a3.5,3.5 0 1 0 7.0,0a3.5,3.5 0 1 0 -7.0,0M15.0,6.0a2.7,2.7 0 1 0 5.4,0a2.7,2.7 0 1 0 -5.4,0M33.8,4.9a2.2,2.2 0 1 0 4.3,0a2.2,2.2 0 1 0 -4.3,0M60.1,11.4a3.4,3.4 0 1 0 6.9,0a3.4,3.4 0 1 0 -6.9,0M29.3,26.8a2.6,2.6 0 1 0 5.3,0a2.6,2.6 0 1 0 -5.3,0M31.9,15.4a1.7,1.7 0 1 0 3.3,0a1.7,1.7 0 1 0 -3.3,0M34.1,16.1a1.8,1.8 0 1 0 3.6,0a1.8,1.8 0 1 0 -3.6,0M66.4,11.9a3.4,3.4 0 1 0 6.8,0a3.4,3.4 0 1 0 -6.8,0M29.8,37.1a2.3,2.3 0 1 0 4.6,0a2.3,2.3 0 1 0 -4.6,0M42.8,7.9a3.5,3.5 0 1 0 7.0,0a3.5,3.5 0 1 0 -7.0,0M41.9,22.4a1.9,1.9 0 1 0 3.8,0a1.9,1.9 0 1 0 -3.8,0M30.4,14.8a2.9,2.9 0 1 0 5.8,0a2.9,2.9 0 1 0 -5.8,0M49.0,1.7a3.3,3.3 0 1 0 6.5,0a3.3,3.3 0 1 0 -6.5,0M28.1,5.0a2.6,2.6 0 1 0 5.2,0a2.6,2.6 0 1 0 -5.2,0M34.8,32.6a2.7,2.7 0 1 0 5.5,0a2.7,2.7 0 1 0 -5.5,0M6.6,18.2a3.2,3.2 0 1 0 6.3,0a3.2,3.2 0 1 0 -6.3,0M27.2,35.7a2.2,2.2 0 1 0 4.4,0a2.2,2.2 0 1 0 -4.4,0M26.7,17.6a2.9,2.9 0 1 0 5.9,0a2.9,2.9 0 1 0 -5.9,0M48.4,20.9a3.3,3.3 0 1 0 6.7,0a3.3,3.3 0 1 0 -6.7,0M57.2,11.1a3.2,3.2 0 1 0 6.4,0a3.2,3.2 0 1 0 -6.4,0M32.3,18.2a1.8,1.8 0 1 0 3.6,0a1.8,1.8 0 1 0 -3.6,0M15.5,6.6a2.5,2.5 0 1 0 5.0,0a2.5,2.5 0 1 0 -5.0,0M66.7,10.6a1.6,1.6 0 1 0 3.1,0a1.6,1.6 0 1 0 -3.1,0M58.6,26.8a3.5,3.5 0 1 0 7.0,0a3.5,3.5 0 1 0 -7.0,0M12.9,9.4a2.8,2.8 0 1 0 5.5,0a2.8,2.8 0 1 0 -5.5,0M31.4,13.4a3.3,3.3 0 1 0 6.5,0a3.3,3.3 0 1 0 -6.5,0M49.5,1.4a3.5,3.5 0 1 0 7.1,0a3.5,3.5 0 1 0 -7.1,0M36.0,11.1a2.7,2.7 0 1 0 5.4,0a2.7,2.7 0 1 0 -5.4,0M64.0,19.3a3.5,3.5 0 1 0 7.0,0a3.5,3.5 0 1 0 -7.0,0M38.2,24.8a3.2,3.2 0 1 0 6.4,0a3.2,3.2 0 1 0 -6.4,0M49.9,12.6a3.2,3.2 0 1 0 6.5,0a3.2,3.2 0 1 0 -6.5,0M36.4,12.2a2.8,2.8 0 1 0 5.5,0a2.8,2.8 0 1 0 -5.5,0M57.6,16.1a1.5,1.5 0 1 0 3.0,0a1.5,1.5 0 1 0 -3.0,0M61.9,19.1a3.5,3.5 0 1 0 7.0,0a3.5,3.5 0 1 0 -7.0,0M46.8,33.2a2.6,2.6 0 1 0 5.2,0a2.6,2.6 0 1 0 -5.2,0M12.4,21.1a2.4,2.4 0 1 0 4.7,0a2.4,2.4 0 1 0 -4.7,0M25.9,29.5a3.1,3.1 0 1 0 6.1,0a3.1,3.1 0 1 0 -6.1,0M24.5,11.2a2.2,2.2 0 1 0 4.5,0a2.2,2.2 0 1 0 -4.5,0M63.1,27.1a2.4,2.4 0 1 0 4.9,0a2.4,2.4 0 1 0 -4.9,0M57.0,32.9a2.8,2.8 0 1 0 5.6,0a2.8,2.8 0 1 0 -5.6,0M47.1,6.6a2.0,2.0 0 1 0 4.0,0a2.0,2.0 0 1 0 -4.0,0M40.1,33.8a3.5,3.5 0 1 0 7.0,0a3.5,3.5 0 1 0 -7.0,0M31.4,31.4a2.5,2.5 0 1 0 5.0,0a2.5,2.5 0 1 0 -5.0,0M14.2,7.1a2.8,2.8 0 1 0 5.6,0a2.8,2.8 0 1 0 -5.6,0M64.0,18.9a2.4,2.4 0 1 0 4.9,0a2.4,2.4 0 1 0 -4.9,0M62.2,9.1a3.1,3.1 0 1 0 6.3,0a3.1,3.1 0 1 0 -6.3,0M67.6,16.9a2.0,2.0 0 1 0 4.0,0a2.0,2.0 0 1 0 -4.0,0M61.1,13.6a2.6,2.6 0 1 0 5.3,0a2.6,2.6 0 1 0 -5.3,0M23.1,33.9a2.8,2.8 0 1 0 5.5,0a2.8,2.8 0 1 0 -5.5,0M16.5,10.3a3.5,3.5 0 1 0 7.0,0a3.5,3.5 0 1 0 -7.0,0M14.4,12.1a1.5,1.5 0 1 0 3.0,0a1.5,1.5 0 1 0 -3.0,0M56.1,19.2a3.2,3.2 0 1 0 6.3,0a3.2,3.2 0 1 0 -6.3,0M42.6,4.0a2.2,2.2 0 1 0 4.4,0a2.2,2.2 0 1 0 -4.4,0M13.9,5.6a2.2,2.2 0 1 0 4.3,0a2.2,2.2 0 1 0 -4.3,0M34.1,13.1a2.6,2.6 0 1 0 5.1,0a2.6,2.6 0 1 0 -5.1,0M42.6,37.6a2.7,2.7 0 1 0 5.3,0a2.7,2.7 0 1 0 -5.3,0M39.5,-1.0a2.6,2.6 0 1 0 5.2,0a2.6,2.6 0 1 0 -5.2,0M14.9,11.7a3.1,3.1 0 1 0 6.2,0a3.1,3.1 0 1 0 -6.2,0M53.6,6.9a2.6,2.6 0 1 0 5.1,0a2.6,2.6 0 1 0 -5.1,0M38.9,35.5a3.5,3.5 0 1 0 7.0,0a3.5,3.5 0 1 0 -7.0,0M35.9,8.6a3.6,3.6 0 1 0 7.2,0a3.6,3.6 0 1 0 -7.2,0M9.8,12.0a1.8,1.8 0 1 0 3.6,0a1.8,1.8 0 1 0 -3.6,0M26.4,15.1a2.7,2.7 0 1 0 5.4,0a2.7,2.7 0 1 0 -5.4,0M58.6,30.1a2.5,2.5 0 1 0 5.1,0a2.5,2.5 0 1 0 -5.1,0M47.6,8.8a2.7,2.7 0 1 0 5.3,0a2.7,2.7 0 1 0 -5.3,0M44.4,26.1a2.0,2.0 0 1 0 4.0,0a2.0,2.0 0 1 0 -4.0,0M29.9,15.9a3.4,3.4 0 1 0 6.8,0a3.4,3.4 0 1 0 -6.8,0M16.5,10.0a2.4,2.4 0 1 0 4.8,0a2.4,2.4 0 1 0 -4.8,0M62.7,13.3a2.0,2.0 0 1 0 4.0,0a2.0,2.0 0 1 0 -4.0,0M28.7,22.4a2.6,2.6 0 1 0 5.2,0a2.6,2.6 0 1 0 -5.2,0M53.5,19.5a2.8,2.8 0 1 0 5.7,0a2.8,2.8 0 1 0 -5.7,0M23.6,24.9a3.0,3.0 0 1 0 5.9,0a3.0,3.0 0 1 0 -5.9,0M34.9,23.4a3.0,3.0 0 1 0 6.0,0a3.0,3.0 0 1 0 -6.0,0M35.5,10.0a1.8,1.8 0 1 0 3.6,0a1.8,1.8 0 1 0 -3.6,0M57.9,9.0a1.5,1.5 0 1 0 3.0,0a1.5,1.5 0 1 0 -3.0,0M53.6,33.2a1.6,1.6 0 1 0 3.2,0a1.6,1.6 0 1 0 -3.2,0M52.8,32.9a2.4,2.4 0 1 0 4.8,0a2.4,2.4 0 1 0 -4.8,0M44.9,24.6a1.5,1.5 0 1 0 3.0,0a1.5,1.5 0 1 0 -3.0,0M56.9,25.9a2.3,2.3 0 1 0 4.5,0a2.3,2.3 0 1 0 -4.5,0M61.5,18.9a3.2,3.2 0 1 0 6.5,0a3.2,3.2 0 1 0 -6.5,0M50.7,33.2a3.1,3.1 0 1 0 6.3,0a3.1,3.1 0 1 0 -6.3,0M58.4,29.3a2.3,2.3 0 1 0 4.5,0a2.3,2.3 0 1 0 -4.5,0M58.2,17.2a2.9,2.9 0 1 0 5.9,0a2.9,2.9 0 1 0 -5.9,0M38.3,13.5a2.9,2.9 0 1 0 5.7,0a2.9,2.9 0 1 0 -5.7,0M54.0,21.0a2.6,2.6 0 1 0 5.3,0a2.6,2.6 0 1 0 -5.3,0M62.8,27.8a1.6,1.6 0 1 0 3.2,0a1.6,1.6 0 1 0 -3.2,0M30.5,20.5a3.0,3.0 0 1 0 6.0,0a3.0,3.0 0 1 0 -6.0,0M52.1,7.1a1.8,1.8 0 1 0 3.7,0a1.8,1.8 0 1 0 -3.7,0M61.4,5.4a2.8,2.8 0 1 0 5.7,0a2.8,2.8 0 1 0 -5.7,0M54.6,5.7a3.4,3.4 0 1 0 6.8,0a3.4,3.4 0 1 0 -6.8,0M55.3,14.9a2.5,2.5 0 1 0 5.0,0a2.5,2.5 0 1 0 -5.0,0M13.0,8.4a1.7,1.7 0 1 0 3.4,0a1.7,1.7 0 1 0 -3.4,0M13.5,17.7a2.2,2.2 0 1 0 4.4,0a2.2,2.2 0 1 0 -4.4,0M26.1,33.1a3.5,3.5 0 1 0 7.1,0a3.5,3.5 0 1 0 -7.1,0M50.1,0.3a3.3,3.3 0 1 0 6.6,0a3.3,3.3 0 1 0 -6.6,0M10.4,17.3a1.9,1.9 0 1 0 3.8,0a1.9,1.9 0 1 0 -3.8,0" fill="url(#gpat)" opacity="0.62"/><ellipse cx="30" cy="12" rx="7.0" ry="3.0" transform="rotate(0 30 12)" fill="#a8582a" opacity="0.55"/><path d="M31.4,14.8a1.9,1.9 0 1 0 3.9,0a1.9,1.9 0 1 0 -3.9,0M35.3,12.4a2.3,2.3 0 1 0 4.6,0a2.3,2.3 0 1 0 -4.6,0M19.0,9.8a2.6,2.6 0 1 0 5.1,0a2.6,2.6 0 1 0 -5.1,0M23.1,9.1a2.5,2.5 0 1 0 5.0,0a2.5,2.5 0 1 0 -5.0,0M23.7,7.7a2.6,2.6 0 1 0 5.2,0a2.6,2.6 0 1 0 -5.2,0M24.3,8.7a3.5,3.5 0 1 0 6.9,0a3.5,3.5 0 1 0 -6.9,0M19.8,13.3a2.7,2.7 0 1 0 5.4,0a2.7,2.7 0 1 0 -5.4,0M15.3,10.0a1.8,1.8 0 1 0 3.6,0a1.8,1.8 0 1 0 -3.6,0M28.0,8.9a1.6,1.6 0 1 0 3.1,0a1.6,1.6 0 1 0 -3.1,0M17.5,11.9a1.9,1.9 0 1 0 3.8,0a1.9,1.9 0 1 0 -3.8,0M40.1,9.8a1.5,1.5 0 1 0 3.1,0a1.5,1.5 0 1 0 -3.1,0M35.8,11.9a3.5,3.5 0 1 0 7.0,0a3.5,3.5 0 1 0 -7.0,0M15.6,14.4a2.2,2.2 0 1 0 4.4,0a2.2,2.2 0 1 0 -4.4,0M30.6,14.5a2.9,2.9 0 1 0 5.7,0a2.9,2.9 0 1 0 -5.7,0M17.1,12.3a3.3,3.3 0 1 0 6.5,0a3.3,3.3 0 1 0 -6.5,0M32.8,16.0a2.1,2.1 0 1 0 4.3,0a2.1,2.1 0 1 0 -4.3,0M35.3,13.8a1.9,1.9 0 1 0 3.8,0a1.9,1.9 0 1 0 -3.8,0M25.3,6.6a3.3,3.3 0 1 0 6.5,0a3.3,3.3 0 1 0 -6.5,0" fill="#a8582a" opacity="0.55"/><ellipse cx="105" cy="15" rx="5.0" ry="5.0" transform="rotate(0 105 15)" fill="url(#gpat)" opacity="0.62"/><path d="M102.1,6.7a3.1,3.1 0 1 0 6.3,0a3.1,3.1 0 1 0 -6.3,0M99.3,12.5a2.1,2.1 0 1 0 4.2,0a2.1,2.1 0 1 0 -4.2,0M96.5,11.9a1.9,1.9 0 1 0 3.8,0a1.9,1.9 0 1 0 -3.8,0M108.2,10.5a2.7,2.7 0 1 0 5.4,0a2.7,2.7 0 1 0 -5.4,0M99.8,10.9a2.0,2.0 0 1 0 4.1,0a2.0,2.0 0 1 0 -4.1,0M108.4,9.3a2.4,2.4 0 1 0 4.8,0a2.4,2.4 0 1 0 -4.8,0M103.3,5.5a2.5,2.5 0 1 0 5.0,0a2.5,2.5 0 1 0 -5.0,0M109.0,10.4a2.1,2.1 0 1 0 4.2,0a2.1,2.1 0 1 0 -4.2,0M100.2,10.1a2.3,2.3 0 1 0 4.5,0a2.3,2.3 0 1 0 -4.5,0M104.0,7.4a3.0,3.0 0 1 0 5.9,0a3.0,3.0 0 1 0 -5.9,0M101.7,14.9a3.4,3.4 0 1 0 6.9,0a3.4,3.4 0 1 0 -6.9,0M102.7,9.7a1.8,1.8 0 1 0 3.6,0a1.8,1.8 0 1 0 -3.6,0M107.3,20.3a3.2,3.2 0 1 0 6.4,0a3.2,3.2 0 1 0 -6.4,0M98.1,22.1a2.8,2.8 0 1 0 5.6,0a2.8,2.8 0 1 0 -5.6,0M98.6,6.3a3.3,3.3 0 1 0 6.7,0a3.3,3.3 0 1 0 -6.7,0M99.5,20.9a3.4,3.4 0 1 0 6.8,0a3.4,3.4 0 1 0 -6.8,0M106.4,6.1a1.8,1.8 0 1 0 3.6,0a1.8,1.8 0 1 0 -3.6,0M101.0,19.6a3.3,3.3 0 1 0 6.7,0a3.3,3.3 0 1 0 -6.7,0M99.2,22.6a3.5,3.5 0 1 0 7.1,0a3.5,3.5 0 1 0 -7.1,0M99.9,9.4a2.5,2.5 0 1 0 4.9,0a2.5,2.5 0 1 0 -4.9,0" fill="url(#gpat)" opacity="0.62"/><ellipse cx="75" cy="48" rx="9.0" ry="3.0" transform="rotate(-20 75 48)" fill="#45458a" opacity="0.6"/><path d="M65.1,50.9a3.1,3.1 0 1 0 6.2,0a3.1,3.1 0 1 0 -6.2,0M69.8,46.8a3.1,3.1 0 1 0 6.2,0a3.1,3.1 0 1 0 -6.2,0M87.1,45.4a1.7,1.7 0 1 0 3.5,0a1.7,1.7 0 1 0 -3.5,0M69.6,46.1a3.4,3.4 0 1 0 6.8,0a3.4,3.4 0 1 0 -6.8,0M57.4,50.8a2.2,2.2 0 1 0 4.4,0a2.2,2.2 0 1 0 -4.4,0M60.8,53.8a3.1,3.1 0 1 0 6.2,0a3.1,3.1 0 1 0 -6.2,0M79.1,50.4a3.1,3.1 0 1 0 6.2,0a3.1,3.1 0 1 0 -6.2,0M74.0,51.3a2.8,2.8 0 1 0 5.5,0a2.8,2.8 0 1 0 -5.5,0M66.6,44.0a3.2,3.2 0 1 0 6.5,0a3.2,3.2 0 1 0 -6.5,0M73.0,45.9a3.3,3.3 0 1 0 6.7,0a3.3,3.3 0 1 0 -6.7,0M65.1,55.1a2.3,2.3 0 1 0 4.6,0a2.3,2.3 0 1 0 -4.6,0M76.8,46.9a2.2,2.2 0 1 0 4.5,0a2.2,2.2 0 1 0 -4.5,0M69.9,42.7a2.3,2.3 0 1 0 4.5,0a2.3,2.3 0 1 0 -4.5,0M80.4,40.7a2.6,2.6 0 1 0 5.1,0a2.6,2.6 0 1 0 -5.1,0M65.9,45.0a2.9,2.9 0 1 0 5.8,0a2.9,2.9 0 1 0 -5.8,0M61.1,48.7a3.3,3.3 0 1 0 6.7,0a3.3,3.3 0 1 0 -6.7,0M58.3,51.9a2.5,2.5 0 1 0 5.0,0a2.5,2.5 0 1 0 -5.0,0M70.5,44.0a1.8,1.8 0 1 0 3.6,0a1.8,1.8 0 1 0 -3.6,0M77.2,43.6a1.7,1.7 0 1 0 3.5,0a1.7,1.7 0 1 0 -3.5,0M79.5,48.2a2.6,2.6 0 1 0 5.2,0a2.6,2.6 0 1 0 -5.2,0M62.5,50.2a1.7,1.7 0 1 0 3.5,0a1.7,1.7 0 1 0 -3.5,0M71.7,46.1a3.2,3.2 0 1 0 6.5,0a3.2,3.2 0 1 0 -6.5,0" fill="#45458a" opacity="0.6"/><ellipse cx="100" cy="50" rx="5.0" ry="4.0" transform="rotate(-20 100 50)" fill="#9c9ce0" opacity="0.6"/><path d="M101.9,53.0a1.8,1.8 0 1 0 3.6,0a1.8,1.8 0 1 0 -3.6,0M102.7,45.1a2.3,2.3 0 1 0 4.7,0a2.3,2.3 0 1 0 -4.7,0M92.4,45.6a2.9,2.9 0 1 0 5.7,0a2.9,2.9 0 1 0 -5.7,0M95.6,43.1a3.2,3.2 0 1 0 6.4,0a3.2,3.2 0 1 0 -6.4,0M98.1,49.8a3.1,3.1 0 1 0 6.2,0a3.1,3.1 0 1 0 -6.2,0M104.0,46.5a2.6,2.6 0 1 0 5.2,0a2.6,2.6 0 1 0 -5.2,0M100.7,44.3a2.4,2.4 0 1 0 4.7,0a2.4,2.4 0 1 0 -4.7,0M100.1,45.0a2.4,2.4 0 1 0 4.8,0a2.4,2.4 0 1 0 -4.8,0M94.1,42.8a3.1,3.1 0 1 0 6.3,0a3.1,3.1 0 1 0 -6.3,0M103.3,54.4a1.6,1.6 0 1 0 3.2,0a1.6,1.6 0 1 0 -3.2,0M90.5,49.3a2.1,2.1 0 1 0 4.3,0a2.1,2.1 0 1 0 -4.3,0M94.9,47.6a2.7,2.7 0 1 0 5.3,0a2.7,2.7 0 1 0 -5.3,0M96.8,49.0a2.8,2.8 0 1 0 5.7,0a2.8,2.8 0 1 0 -5.7,0M93.9,57.7a2.5,2.5 0 1 0 4.9,0a2.5,2.5 0 1 0 -4.9,0M95.2,42.9a3.2,3.2 0 1 0 6.4,0a3.2,3.2 0 1 0 -6.4,0M105.8,44.1a1.5,1.5 0 1 0 3.1,0a1.5,1.5 0 1 0 -3.1,0M98.1,51.3a3.5,3.5 0 1 0 6.9,0a3.5,3.5 0 1 0 -6.9,0" fill="#9c9ce0" opacity="0.6"/><use href="#lakes" width="116" height="61"/></svg><svg x="1929" y="228.8" width="39.5" height="61.2" viewBox="0 0 39.5 61" preserveAspectRatio="none" overflow="hidden"><use href="#usbase" width="116" height="61"/><ellipse cx="22" cy="18" rx="9.0" ry="10.0" transform="rotate(0 22 18)" fill="url(#gpat)" opacity="0.62"/><path d="M25.0,4.0a3.0,3.0 0 1 0 6.0,0a3.0,3.0 0 1 0 -6.0,0M33.4,18.9a3.0,3.0 0 1 0 6.1,0a3.0,3.0 0 1 0 -6.1,0M7.6,19.7a2.0,2.0 0 1 0 4.0,0a2.0,2.0 0 1 0 -4.0,0M7.2,26.4a3.3,3.3 0 1 0 6.6,0a3.3,3.3 0 1 0 -6.6,0M9.0,12.1a2.2,2.2 0 1 0 4.3,0a2.2,2.2 0 1 0 -4.3,0M21.0,6.7a1.6,1.6 0 1 0 3.2,0a1.6,1.6 0 1 0 -3.2,0M6.6,13.1a3.2,3.2 0 1 0 6.5,0a3.2,3.2 0 1 0 -6.5,0M5.9,24.2a2.3,2.3 0 1 0 4.5,0a2.3,2.3 0 1 0 -4.5,0M14.5,18.3a2.5,2.5 0 1 0 4.9,0a2.5,2.5 0 1 0 -4.9,0M22.9,30.3a2.1,2.1 0 1 0 4.1,0a2.1,2.1 0 1 0 -4.1,0M16.8,6.2a2.3,2.3 0 1 0 4.7,0a2.3,2.3 0 1 0 -4.7,0M7.0,25.4a2.3,2.3 0 1 0 4.7,0a2.3,2.3 0 1 0 -4.7,0M20.8,1.3a2.2,2.2 0 1 0 4.4,0a2.2,2.2 0 1 0 -4.4,0M7.5,11.1a1.5,1.5 0 1 0 3.1,0a1.5,1.5 0 1 0 -3.1,0M11.6,23.7a2.3,2.3 0 1 0 4.5,0a2.3,2.3 0 1 0 -4.5,0M4.2,28.8a3.1,3.1 0 1 0 6.1,0a3.1,3.1 0 1 0 -6.1,0M17.8,21.7a3.1,3.1 0 1 0 6.1,0a3.1,3.1 0 1 0 -6.1,0M17.3,20.6a2.1,2.1 0 1 0 4.2,0a2.1,2.1 0 1 0 -4.2,0M29.5,34.9a2.0,2.0 0 1 0 4.1,0a2.0,2.0 0 1 0 -4.1,0M15.2,18.2a3.3,3.3 0 1 0 6.6,0a3.3,3.3 0 1 0 -6.6,0M16.8,17.9a2.8,2.8 0 1 0 5.5,0a2.8,2.8 0 1 0 -5.5,0M27.0,7.1a2.7,2.7 0 1 0 5.3,0a2.7,2.7 0 1 0 -5.3,0M30.0,12.8a2.7,2.7 0 1 0 5.4,0a2.7,2.7 0 1 0 -5.4,0M30.3,7.0a2.6,2.6 0 1 0 5.2,0a2.6,2.6 0 1 0 -5.2,0M11.5,31.4a3.1,3.1 0 1 0 6.2,0a3.1,3.1 0 1 0 -6.2,0M19.1,8.9a2.1,2.1 0 1 0 4.3,0a2.1,2.1 0 1 0 -4.3,0M12.9,16.6a3.1,3.1 0 1 0 6.2,0a3.1,3.1 0 1 0 -6.2,0M18.9,28.7a2.1,2.1 0 1 0 4.1,0a2.1,2.1 0 1 0 -4.1,0M23.0,35.9a2.3,2.3 0 1 0 4.6,0a2.3,2.3 0 1 0 -4.6,0M32.6,27.2a3.2,3.2 0 1 0 6.3,0a3.2,3.2 0 1 0 -6.3,0M26.6,20.7a1.6,1.6 0 1 0 3.2,0a1.6,1.6 0 1 0 -3.2,0M5.5,17.3a2.0,2.0 0 1 0 4.1,0a2.0,2.0 0 1 0 -4.1,0M22.1,10.4a2.2,2.2 0 1 0 4.4,0a2.2,2.2 0 1 0 -4.4,0M9.0,24.2a2.7,2.7 0 1 0 5.3,0a2.7,2.7 0 1 0 -5.3,0M13.4,15.2a1.6,1.6 0 1 0 3.2,0a1.6,1.6 0 1 0 -3.2,0M11.9,26.5a2.4,2.4 0 1 0 4.8,0a2.4,2.4 0 1 0 -4.8,0M36.2,23.8a1.7,1.7 0 1 0 3.4,0a1.7,1.7 0 1 0 -3.4,0M27.8,27.4a2.7,2.7 0 1 0 5.4,0a2.7,2.7 0 1 0 -5.4,0M33.0,28.4a2.5,2.5 0 1 0 5.0,0a2.5,2.5 0 1 0 -5.0,0M15.9,5.4a2.5,2.5 0 1 0 4.9,0a2.5,2.5 0 1 0 -4.9,0M10.6,25.3a2.4,2.4 0 1 0 4.8,0a2.4,2.4 0 1 0 -4.8,0M10.1,4.7a2.7,2.7 0 1 0 5.4,0a2.7,2.7 0 1 0 -5.4,0M24.5,24.5a2.6,2.6 0 1 0 5.1,0a2.6,2.6 0 1 0 -5.1,0M20.3,30.0a3.1,3.1 0 1 0 6.2,0a3.1,3.1 0 1 0 -6.2,0M25.0,15.0a2.1,2.1 0 1 0 4.1,0a2.1,2.1 0 1 0 -4.1,0M12.5,19.8a3.2,3.2 0 1 0 6.4,0a3.2,3.2 0 1 0 -6.4,0M34.3,15.4a3.2,3.2 0 1 0 6.4,0a3.2,3.2 0 1 0 -6.4,0M18.7,27.3a1.7,1.7 0 1 0 3.3,0a1.7,1.7 0 1 0 -3.3,0M9.4,21.4a1.7,1.7 0 1 0 3.4,0a1.7,1.7 0 1 0 -3.4,0M15.3,6.6a2.9,2.9 0 1 0 5.8,0a2.9,2.9 0 1 0 -5.8,0M23.8,13.8a2.6,2.6 0 1 0 5.1,0a2.6,2.6 0 1 0 -5.1,0M22.3,1.3a2.2,2.2 0 1 0 4.4,0a2.2,2.2 0 1 0 -4.4,0M12.5,20.0a1.9,1.9 0 1 0 3.9,0a1.9,1.9 0 1 0 -3.9,0M19.2,22.4a2.8,2.8 0 1 0 5.6,0a2.8,2.8 0 1 0 -5.6,0M32.5,19.7a3.0,3.0 0 1 0 5.9,0a3.0,3.0 0 1 0 -5.9,0M28.9,3.9a2.5,2.5 0 1 0 5.0,0a2.5,2.5 0 1 0 -5.0,0M4.6,21.2a2.5,2.5 0 1 0 5.0,0a2.5,2.5 0 1 0 -5.0,0M19.5,23.6a1.8,1.8 0 1 0 3.6,0a1.8,1.8 0 1 0 -3.6,0M15.7,32.8a2.1,2.1 0 1 0 4.1,0a2.1,2.1 0 1 0 -4.1,0M23.1,31.8a1.6,1.6 0 1 0 3.2,0a1.6,1.6 0 1 0 -3.2,0M12.8,35.8a1.9,1.9 0 1 0 3.8,0a1.9,1.9 0 1 0 -3.8,0M10.1,18.8a2.1,2.1 0 1 0 4.1,0a2.1,2.1 0 1 0 -4.1,0M21.9,18.6a1.5,1.5 0 1 0 3.1,0a1.5,1.5 0 1 0 -3.1,0M9.1,25.0a2.7,2.7 0 1 0 5.4,0a2.7,2.7 0 1 0 -5.4,0" fill="url(#gpat)" opacity="0.62"/><ellipse cx="22" cy="18" rx="5.0" ry="4.0" transform="rotate(0 22 18)" fill="#a8582a" opacity="0.55"/><path d="M13.2,21.3a2.9,2.9 0 1 0 5.8,0a2.9,2.9 0 1 0 -5.8,0M13.8,14.3a1.7,1.7 0 1 0 3.4,0a1.7,1.7 0 1 0 -3.4,0M23.0,13.3a3.3,3.3 0 1 0 6.6,0a3.3,3.3 0 1 0 -6.6,0M19.0,15.1a3.2,3.2 0 1 0 6.3,0a3.2,3.2 0 1 0 -6.3,0M27.4,19.4a3.2,3.2 0 1 0 6.4,0a3.2,3.2 0 1 0 -6.4,0M27.7,20.1a1.9,1.9 0 1 0 3.7,0a1.9,1.9 0 1 0 -3.7,0M20.7,11.7a3.4,3.4 0 1 0 6.8,0a3.4,3.4 0 1 0 -6.8,0M19.7,22.7a2.4,2.4 0 1 0 4.9,0a2.4,2.4 0 1 0 -4.9,0M26.5,18.5a2.3,2.3 0 1 0 4.5,0a2.3,2.3 0 1 0 -4.5,0M17.7,20.8a2.1,2.1 0 1 0 4.2,0a2.1,2.1 0 1 0 -4.2,0M22.3,13.6a2.2,2.2 0 1 0 4.5,0a2.2,2.2 0 1 0 -4.5,0M17.8,25.1a2.9,2.9 0 1 0 5.7,0a2.9,2.9 0 1 0 -5.7,0M23.5,19.7a1.6,1.6 0 1 0 3.2,0a1.6,1.6 0 1 0 -3.2,0M29.1,21.2a1.7,1.7 0 1 0 3.4,0a1.7,1.7 0 1 0 -3.4,0M12.7,18.9a2.2,2.2 0 1 0 4.3,0a2.2,2.2 0 1 0 -4.3,0M19.7,21.6a1.9,1.9 0 1 0 3.8,0a1.9,1.9 0 1 0 -3.8,0M17.0,24.3a3.0,3.0 0 1 0 6.0,0a3.0,3.0 0 1 0 -6.0,0" fill="#a8582a" opacity="0.55"/><use href="#lakes" width="116" height="61"/></svg><rect x="118" y="290" width="1851" height="30" fill="#fff"/><clipPath id="wmclip"><rect x="119" y="291" width="1849" height="29"/></clipPath><g clip-path="url(#wmclip)"><use href="#bigflake" x="136.8" y="298.3" width="16.4" height="16.4" stroke="#d2d2d2"/><text x="158.80" y="303.80" font-size="11.5" fill="#d0d0d0" text-anchor="start" font-weight="bold" textLength="68.8" lengthAdjust="spacingAndGlyphs">snow-forecast</text><text x="158.80" y="314.50" font-size="11.5" fill="#d0d0d0" text-anchor="start" font-weight="bold" textLength="23" lengthAdjust="spacingAndGlyphs">.com</text><use href="#bigflake" x="277.1" y="298.3" width="16.4" height="16.4" stroke="#d2d2d2"/><text x="299.13" y="303.80" font-size="11.5" fill="#d0d0d0" text-anchor="start" font-weight="bold" textLength="68.8" lengthAdjust="spacingAndGlyphs">snow-forecast</text><text x="299.13" y="314.50" font-size="11.5" fill="#d0d0d0" text-anchor="start" font-weight="bold" textLength="23" lengthAdjust="spacingAndGlyphs">.com</text><use href="#bigflake" x="417.5" y="298.3" width="16.4" height="16.4" stroke="#d2d2d2"/><text x="439.46" y="303.80" font-size="11.5" fill="#d0d0d0" text-anchor="start" font-weight="bold" textLength="68.8" lengthAdjust="spacingAndGlyphs">snow-forecast</text><text x="439.46" y="314.50" font-size="11.5" fill="#d0d0d0" text-anchor="start" font-weight="bold" textLength="23" lengthAdjust="spacingAndGlyphs">.com</text><use href="#bigflake" x="557.8" y="298.3" width="16.4" height="16.4" stroke="#d2d2d2"/><text x="579.79" y="303.80" font-size="11.5" fill="#d0d0d0" text-anchor="start" font-weight="bold" textLength="68.8" lengthAdjust="spacingAndGlyphs">snow-forecast</text><text x="579.79" y="314.50" font-size="11.5" fill="#d0d0d0" text-anchor="start" font-weight="bold" textLength="23" lengthAdjust="spacingAndGlyphs">.com</text><use href="#bigflake" x="698.1" y="298.3" width="16.4" height="16.4" stroke="#d2d2d2"/><text x="720.12" y="303.80" font-size="11.5" fill="#d0d0d0" text-anchor="start" font-weight="bold" textLength="68.8" lengthAdjust="spacingAndGlyphs">snow-forecast</text><text x="720.12" y="314.50" font-size="11.5" fill="#d0d0d0" text-anchor="start" font-weight="bold" textLength="23" lengthAdjust="spacingAndGlyphs">.com</text><use href="#bigflake" x="838.5" y="298.3" width="16.4" height="16.4" stroke="#d2d2d2"/><text x="860.45" y="303.80" font-size="11.5" fill="#d0d0d0" text-anchor="start" font-weight="bold" textLength="68.8" lengthAdjust="spacingAndGlyphs">snow-forecast</text><text x="860.45" y="314.50" font-size="11.5" fill="#d0d0d0" text-anchor="start" font-weight="bold" textLength="23" lengthAdjust="spacingAndGlyphs">.com</text><use href="#bigflake" x="978.8" y="298.3" width="16.4" height="16.4" stroke="#d2d2d2"/><text x="1000.78" y="303.80" font-size="11.5" fill="#d0d0d0" text-anchor="start" font-weight="bold" textLength="68.8" lengthAdjust="spacingAndGlyphs">snow-forecast</text><text x="1000.78" y="314.50" font-size="11.5" fill="#d0d0d0" text-anchor="start" font-weight="bold" textLength="23" lengthAdjust="spacingAndGlyphs">.com</text><use href="#bigflake" x="1119.1" y="298.3" width="16.4" height="16.4" stroke="#d2d2d2"/><text x="1141.11" y="303.80" font-size="11.5" fill="#d0d0d0" text-anchor="start" font-weight="bold" textLength="68.8" lengthAdjust="spacingAndGlyphs">snow-forecast</text><text x="1141.11" y="314.50" font-size="11.5" fill="#d0d0d0" text-anchor="start" font-weight="bold" textLength="23" lengthAdjust="spacingAndGlyphs">.com</text><use href="#bigflake" x="1259.4" y="298.3" width="16.4" height="16.4" stroke="#d2d2d2"/><text x="1281.44" y="303.80" font-size="11.5" fill="#d0d0d0" text-anchor="start" font-weight="bold" textLength="68.8" lengthAdjust="spacingAndGlyphs">snow-forecast</text><text x="1281.44" y="314.50" font-size="11.5" fill="#d0d0d0" text-anchor="start" font-weight="bold" textLength="23" lengthAdjust="spacingAndGlyphs">.com</text><use href="#bigflake" x="1399.8" y="298.3" width="16.4" height="16.4" stroke="#d2d2d2"/><text x="1421.77" y="303.80" font-size="11.5" fill="#d0d0d0" text-anchor="start" font-weight="bold" textLength="68.8" lengthAdjust="spacingAndGlyphs">snow-forecast</text><text x="1421.77" y="314.50" font-size="11.5" fill="#d0d0d0" text-anchor="start" font-weight="bold" textLength="23" lengthAdjust="spacingAndGlyphs">.com</text><use href="#bigflake" x="1540.1" y="298.3" width="16.4" height="16.4" stroke="#d2d2d2"/><text x="1562.10" y="303.80" font-size="11.5" fill="#d0d0d0" text-anchor="start" font-weight="bold" textLength="68.8" lengthAdjust="spacingAndGlyphs">snow-forecast</text><text x="1562.10" y="314.50" font-size="11.5" fill="#d0d0d0" text-anchor="start" font-weight="bold" textLength="23" lengthAdjust="spacingAndGlyphs">.com</text><use href="#bigflake" x="1680.4" y="298.3" width="16.4" height="16.4" stroke="#d2d2d2"/><text x="1702.43" y="303.80" font-size="11.5" fill="#d0d0d0" text-anchor="start" font-weight="bold" textLength="68.8" lengthAdjust="spacingAndGlyphs">snow-forecast</text><text x="1702.43" y="314.50" font-size="11.5" fill="#d0d0d0" text-anchor="start" font-weight="bold" textLength="23" lengthAdjust="spacingAndGlyphs">.com</text><use href="#bigflake" x="1820.8" y="298.3" width="16.4" height="16.4" stroke="#d2d2d2"/><text x="1842.76" y="303.80" font-size="11.5" fill="#d0d0d0" text-anchor="start" font-weight="bold" textLength="68.8" lengthAdjust="spacingAndGlyphs">snow-forecast</text><text x="1842.76" y="314.50" font-size="11.5" fill="#d0d0d0" text-anchor="start" font-weight="bold" textLength="23" lengthAdjust="spacingAndGlyphs">.com</text></g><rect x="118.00" y="320.00" width="1851.00" height="31.00" fill="#f1f1f1" /><rect x="133.20" y="336.10" width="9.60" height="1.70" fill="#dd3a3a" /><rect x="172.88" y="336.10" width="9.60" height="1.70" fill="#dd3a3a" /><rect x="212.23" y="336.10" width="9.60" height="1.70" fill="#dd3a3a" /><rect x="251.59" y="336.10" width="9.60" height="1.70" fill="#dd3a3a" /><rect x="290.94" y="336.10" width="9.60" height="1.70" fill="#dd3a3a" /><rect x="330.30" y="336.10" width="9.60" height="1.70" fill="#dd3a3a" /><path d="M355.78,351 V350.70 Q355.78,347.70 358.78,347.70 H389.63 Q392.63,347.70 392.63,350.70 V351 Z" fill="#fff"/><text x="374.46" y="340.70" font-size="12" fill="#d94a3a" text-anchor="middle" font-weight="normal" >0.4</text><rect x="409.01" y="336.10" width="9.60" height="1.70" fill="#dd3a3a" /><rect x="448.37" y="336.10" width="9.60" height="1.70" fill="#dd3a3a" /><rect x="487.72" y="336.10" width="9.60" height="1.70" fill="#dd3a3a" /><rect x="527.08" y="336.10" width="9.60" height="1.70" fill="#dd3a3a" /><rect x="566.43" y="336.10" width="9.60" height="1.70" fill="#dd3a3a" /><path d="M591.91,351 V347.20 Q591.91,344.20 594.91,344.20 H625.77 Q628.77,344.20 628.77,347.20 V351 Z" fill="#fff"/><text x="610.59" y="340.70" font-size="12.5" fill="#cc0000" text-anchor="middle" font-weight="bold" >1</text><rect x="645.14" y="336.10" width="9.60" height="1.70" fill="#dd3a3a" /><rect x="684.50" y="336.10" width="9.60" height="1.70" fill="#dd3a3a" /><rect x="723.86" y="336.10" width="9.60" height="1.70" fill="#dd3a3a" /><path d="M749.33,351 V350.70 Q749.33,347.70 752.33,347.70 H783.19 Q786.19,347.70 786.19,350.70 V351 Z" fill="#fff"/><text x="768.01" y="340.70" font-size="12" fill="#d94a3a" text-anchor="middle" font-weight="normal" >0.4</text><rect x="802.57" y="336.10" width="9.60" height="1.70" fill="#dd3a3a" /><path d="M828.04,351 V350.70 Q828.04,347.70 831.04,347.70 H861.90 Q864.90,347.70 864.90,350.70 V351 Z" fill="#fff"/><text x="846.72" y="340.70" font-size="12" fill="#d94a3a" text-anchor="middle" font-weight="normal" >0.4</text><path d="M867.40,351 V347.20 Q867.40,344.20 870.40,344.20 H901.26 Q904.26,344.20 904.26,347.20 V351 Z" fill="#fff"/><text x="886.08" y="340.70" font-size="12.5" fill="#cc0000" text-anchor="middle" font-weight="bold" >1</text><path d="M906.76,351 V350.70 Q906.76,347.70 909.76,347.70 H940.61 Q943.61,347.70 943.61,350.70 V351 Z" fill="#fff"/><text x="925.43" y="340.70" font-size="12" fill="#d94a3a" text-anchor="middle" font-weight="normal" >0.4</text><rect x="959.99" y="336.10" width="9.60" height="1.70" fill="#dd3a3a" /><path d="M985.47,351 V350.70 Q985.47,347.70 988.47,347.70 H1019.32 Q1022.32,347.70 1022.32,350.70 V351 Z" fill="#fff"/><text x="1004.14" y="340.70" font-size="12" fill="#d94a3a" text-anchor="middle" font-weight="normal" >0.4</text><path d="M1024.82,351 V350.70 Q1024.82,347.70 1027.82,347.70 H1058.68 Q1061.68,347.70 1061.68,350.70 V351 Z" fill="#fff"/><text x="1043.50" y="340.70" font-size="12" fill="#d94a3a" text-anchor="middle" font-weight="normal" >0.4</text><rect x="1078.06" y="336.10" width="9.60" height="1.70" fill="#dd3a3a" /><rect x="1117.41" y="336.10" width="9.60" height="1.70" fill="#dd3a3a" /><rect x="1156.77" y="336.10" width="9.60" height="1.70" fill="#dd3a3a" /><rect x="1196.12" y="336.10" width="9.60" height="1.70" fill="#dd3a3a" /><path d="M1221.60,351 V350.70 Q1221.60,347.70 1224.60,347.70 H1255.46 Q1258.46,347.70 1258.46,350.70 V351 Z" fill="#fff"/><text x="1240.28" y="340.70" font-size="12" fill="#d94a3a" text-anchor="middle" font-weight="normal" >0.4</text><rect x="1274.83" y="336.10" width="9.60" height="1.70" fill="#dd3a3a" /><path d="M1300.31,351 V350.70 Q1300.31,347.70 1303.31,347.70 H1334.17 Q1337.17,347.70 1337.17,350.70 V351 Z" fill="#fff"/><text x="1318.99" y="340.70" font-size="12" fill="#d94a3a" text-anchor="middle" font-weight="normal" >0.4</text><path d="M1339.67,351 V350.70 Q1339.67,347.70 1342.67,347.70 H1373.52 Q1376.52,347.70 1376.52,350.70 V351 Z" fill="#fff"/><text x="1358.34" y="340.70" font-size="12" fill="#d94a3a" text-anchor="middle" font-weight="normal" >0.4</text><path d="M1379.02,351 V347.20 Q1379.02,344.20 1382.02,344.20 H1412.88 Q1415.88,344.20 1415.88,347.20 V351 Z" fill="#fff"/><text x="1397.70" y="340.70" font-size="12.5" fill="#cc0000" text-anchor="middle" font-weight="bold" >1</text><path d="M1418.38,351 V347.20 Q1418.38,344.20 1421.38,344.20 H1452.23 Q1455.23,344.20 1455.23,347.20 V351 Z" fill="#fff"/><text x="1437.06" y="340.70" font-size="12.5" fill="#cc0000" text-anchor="middle" font-weight="bold" >1</text><path d="M1457.73,351 V350.70 Q1457.73,347.70 1460.73,347.70 H1491.59 Q1494.59,347.70 1494.59,350.70 V351 Z" fill="#fff"/><text x="1476.41" y="340.70" font-size="12" fill="#d94a3a" text-anchor="middle" font-weight="normal" >0.4</text><rect x="1510.97" y="336.10" width="9.60" height="1.70" fill="#dd3a3a" /><path d="M1536.44,351 V350.70 Q1536.44,347.70 1539.44,347.70 H1570.30 Q1573.30,347.70 1573.30,350.70 V351 Z" fill="#fff"/><text x="1555.12" y="340.70" font-size="12" fill="#d94a3a" text-anchor="middle" font-weight="normal" >0.4</text><path d="M1575.80,351 V347.20 Q1575.80,344.20 1578.80,344.20 H1609.66 Q1612.66,344.20 1612.66,347.20 V351 Z" fill="#fff"/><text x="1594.48" y="340.70" font-size="12.5" fill="#cc0000" text-anchor="middle" font-weight="bold" >1</text><path d="M1615.16,351 V347.20 Q1615.16,344.20 1618.16,344.20 H1649.01 Q1652.01,344.20 1652.01,347.20 V351 Z" fill="#fff"/><text x="1633.83" y="340.70" font-size="12.5" fill="#cc0000" text-anchor="middle" font-weight="bold" >1</text><rect x="1668.39" y="336.10" width="9.60" height="1.70" fill="#dd3a3a" /><rect x="1707.74" y="336.10" width="9.60" height="1.70" fill="#dd3a3a" /><rect x="1747.10" y="336.10" width="9.60" height="1.70" fill="#dd3a3a" /><rect x="1786.46" y="336.10" width="9.60" height="1.70" fill="#dd3a3a" /><rect x="1825.81" y="336.10" width="9.60" height="1.70" fill="#dd3a3a" /><rect x="1865.17" y="336.10" width="9.60" height="1.70" fill="#dd3a3a" /><path d="M1890.64,351 V347.20 Q1890.64,344.20 1893.64,344.20 H1924.50 Q1927.50,344.20 1927.50,347.20 V351 Z" fill="#fff"/><text x="1909.32" y="340.70" font-size="12.5" fill="#cc0000" text-anchor="middle" font-weight="bold" >1</text><path d="M1930.00,351 V341.70 Q1930.00,338.70 1933.00,338.70 H1964.50 Q1967.50,338.70 1967.50,341.70 V351 Z" fill="#fff"/><text x="1949.00" y="340.70" font-size="12.5" fill="#cc0000" text-anchor="middle" font-weight="bold" >2</text><rect x="118.00" y="351.00" width="1851.00" height="31.50" fill="#fff" /><rect x="133.30" y="367.30" width="9.40" height="1.60" fill="#2a5bd0" /><rect x="172.98" y="367.30" width="9.40" height="1.60" fill="#2a5bd0" /><rect x="212.33" y="367.30" width="9.40" height="1.60" fill="#2a5bd0" /><rect x="251.69" y="367.30" width="9.40" height="1.60" fill="#2a5bd0" /><rect x="291.04" y="367.30" width="9.40" height="1.60" fill="#2a5bd0" /><rect x="330.40" y="367.30" width="9.40" height="1.60" fill="#2a5bd0" /><rect x="369.76" y="367.30" width="9.40" height="1.60" fill="#2a5bd0" /><rect x="409.11" y="367.30" width="9.40" height="1.60" fill="#2a5bd0" /><rect x="448.47" y="367.30" width="9.40" height="1.60" fill="#2a5bd0" /><rect x="487.82" y="367.30" width="9.40" height="1.60" fill="#2a5bd0" /><rect x="527.18" y="367.30" width="9.40" height="1.60" fill="#2a5bd0" /><rect x="566.53" y="367.30" width="9.40" height="1.60" fill="#2a5bd0" /><rect x="605.89" y="367.30" width="9.40" height="1.60" fill="#2a5bd0" /><rect x="645.24" y="367.30" width="9.40" height="1.60" fill="#2a5bd0" /><rect x="684.60" y="367.30" width="9.40" height="1.60" fill="#2a5bd0" /><rect x="723.96" y="367.30" width="9.40" height="1.60" fill="#2a5bd0" /><rect x="763.31" y="367.30" width="9.40" height="1.60" fill="#2a5bd0" /><rect x="802.67" y="367.30" width="9.40" height="1.60" fill="#2a5bd0" /><rect x="842.02" y="367.30" width="9.40" height="1.60" fill="#2a5bd0" /><rect x="881.38" y="367.30" width="9.40" height="1.60" fill="#2a5bd0" /><rect x="920.73" y="367.30" width="9.40" height="1.60" fill="#2a5bd0" /><rect x="960.09" y="367.30" width="9.40" height="1.60" fill="#2a5bd0" /><rect x="999.44" y="367.30" width="9.40" height="1.60" fill="#2a5bd0" /><rect x="1038.80" y="367.30" width="9.40" height="1.60" fill="#2a5bd0" /><rect x="1078.16" y="367.30" width="9.40" height="1.60" fill="#2a5bd0" /><rect x="1117.51" y="367.30" width="9.40" height="1.60" fill="#2a5bd0" /><rect x="1156.87" y="367.30" width="9.40" height="1.60" fill="#2a5bd0" /><rect x="1196.22" y="367.30" width="9.40" height="1.60" fill="#2a5bd0" /><rect x="1235.58" y="367.30" width="9.40" height="1.60" fill="#2a5bd0" /><rect x="1274.93" y="367.30" width="9.40" height="1.60" fill="#2a5bd0" /><rect x="1314.29" y="367.30" width="9.40" height="1.60" fill="#2a5bd0" /><rect x="1353.64" y="367.30" width="9.40" height="1.60" fill="#2a5bd0" /><rect x="1393.00" y="367.30" width="9.40" height="1.60" fill="#2a5bd0" /><rect x="1432.36" y="367.30" width="9.40" height="1.60" fill="#2a5bd0" /><rect x="1471.71" y="367.30" width="9.40" height="1.60" fill="#2a5bd0" /><rect x="1511.07" y="367.30" width="9.40" height="1.60" fill="#2a5bd0" /><rect x="1550.42" y="367.30" width="9.40" height="1.60" fill="#2a5bd0" /><rect x="1589.78" y="367.30" width="9.40" height="1.60" fill="#2a5bd0" /><rect x="1629.13" y="367.30" width="9.40" height="1.60" fill="#2a5bd0" /><rect x="1668.49" y="367.30" width="9.40" height="1.60" fill="#2a5bd0" /><rect x="1707.84" y="367.30" width="9.40" height="1.60" fill="#2a5bd0" /><rect x="1747.20" y="367.30" width="9.40" height="1.60" fill="#2a5bd0" /><rect x="1786.56" y="367.30" width="9.40" height="1.60" fill="#2a5bd0" /><rect x="1825.91" y="367.30" width="9.40" height="1.60" fill="#2a5bd0" /><rect x="1865.27" y="367.30" width="9.40" height="1.60" fill="#2a5bd0" /><rect x="1904.62" y="367.30" width="9.40" height="1.60" fill="#2a5bd0" /><rect x="1944.30" y="367.30" width="9.40" height="1.60" fill="#2a5bd0" /><rect x="118.00" y="382.50" width="40.00" height="30.50" fill="#00ff80" shape-rendering="crispEdges"/><text x="138.00" y="402.20" font-size="12" fill="#000" text-anchor="middle" font-weight="normal" >32</text><rect x="158.00" y="382.50" width="39.36" height="30.50" fill="#00ff80" shape-rendering="crispEdges"/><text x="177.68" y="402.20" font-size="12" fill="#000" text-anchor="middle" font-weight="normal" >37</text><rect x="197.36" y="382.50" width="39.36" height="30.50" fill="#00ff80" shape-rendering="crispEdges"/><text x="217.03" y="402.20" font-size="12" fill="#000" text-anchor="middle" font-weight="normal" >39</text><rect x="236.71" y="382.50" width="39.36" height="30.50" fill="#00ff80" shape-rendering="crispEdges"/><text x="256.39" y="402.20" font-size="12" fill="#000" text-anchor="middle" font-weight="normal" >36</text><rect x="276.07" y="382.50" width="39.36" height="30.50" fill="#00ff80" shape-rendering="crispEdges"/><text x="295.74" y="402.20" font-size="12" fill="#000" text-anchor="middle" font-weight="normal" >39</text><rect x="315.42" y="382.50" width="39.36" height="30.50" fill="#00ff80" shape-rendering="crispEdges"/><text x="335.10" y="402.20" font-size="12" fill="#000" text-anchor="middle" font-weight="normal" >39</text><rect x="354.78" y="382.50" width="39.36" height="30.50" fill="#00ff80" shape-rendering="crispEdges"/><text x="374.46" y="402.20" font-size="12" fill="#000" text-anchor="middle" font-weight="normal" >34</text><rect x="394.13" y="382.50" width="39.36" height="30.50" fill="#00ffff" shape-rendering="crispEdges"/><text x="413.81" y="402.20" font-size="12" fill="#000" text-anchor="middle" font-weight="normal" >28</text><rect x="433.49" y="382.50" width="39.36" height="30.50" fill="#00ffff" shape-rendering="crispEdges"/><text x="453.17" y="402.20" font-size="12" fill="#000" text-anchor="middle" font-weight="normal" >28</text><rect x="472.84" y="382.50" width="39.36" height="30.50" fill="#00ffff" shape-rendering="crispEdges"/><text x="492.52" y="402.20" font-size="12" fill="#000" text-anchor="middle" font-weight="normal" >23</text><rect x="512.20" y="382.50" width="39.36" height="30.50" fill="#00ffff" shape-rendering="crispEdges"/><text x="531.88" y="402.20" font-size="12" fill="#000" text-anchor="middle" font-weight="normal" >27</text><rect x="551.56" y="382.50" width="39.36" height="30.50" fill="#00ffff" shape-rendering="crispEdges"/><text x="571.23" y="402.20" font-size="12" fill="#000" text-anchor="middle" font-weight="normal" >25</text><rect x="590.91" y="382.50" width="39.36" height="30.50" fill="#00ffff" shape-rendering="crispEdges"/><text x="610.59" y="402.20" font-size="12" fill="#000" text-anchor="middle" font-weight="normal" >25</text><rect x="630.27" y="382.50" width="39.36" height="30.50" fill="#0080ff" shape-rendering="crispEdges"/><text x="649.94" y="402.20" font-size="12" fill="#fff" text-anchor="middle" font-weight="normal" >21</text><rect x="669.62" y="382.50" width="39.36" height="30.50" fill="#00ffff" shape-rendering="crispEdges"/><text x="689.30" y="402.20" font-size="12" fill="#000" text-anchor="middle" font-weight="normal" >23</text><rect x="708.98" y="382.50" width="39.36" height="30.50" fill="#00ffff" shape-rendering="crispEdges"/><text x="728.66" y="402.20" font-size="12" fill="#000" text-anchor="middle" font-weight="normal" >27</text><rect x="748.33" y="382.50" width="39.36" height="30.50" fill="#00ff80" shape-rendering="crispEdges"/><text x="768.01" y="402.20" font-size="12" fill="#000" text-anchor="middle" font-weight="normal" >32</text><rect x="787.69" y="382.50" width="39.36" height="30.50" fill="#00ff80" shape-rendering="crispEdges"/><text x="807.37" y="402.20" font-size="12" fill="#000" text-anchor="middle" font-weight="normal" >32</text><rect x="827.04" y="382.50" width="39.36" height="30.50" fill="#00ff80" shape-rendering="crispEdges"/><text x="846.72" y="402.20" font-size="12" fill="#000" text-anchor="middle" font-weight="normal" >32</text><rect x="866.40" y="382.50" width="39.36" height="30.50" fill="#00ffff" shape-rendering="crispEdges"/><text x="886.08" y="402.20" font-size="12" fill="#000" text-anchor="middle" font-weight="normal" >28</text><rect x="905.76" y="382.50" width="39.36" height="30.50" fill="#0080ff" shape-rendering="crispEdges"/><text x="925.43" y="402.20" font-size="12" fill="#fff" text-anchor="middle" font-weight="normal" >19</text><rect x="945.11" y="382.50" width="39.36" height="30.50" fill="#0080ff" shape-rendering="crispEdges"/><text x="964.79" y="402.20" font-size="12" fill="#fff" text-anchor="middle" font-weight="normal" >16</text><rect x="984.47" y="382.50" width="39.36" height="30.50" fill="#0080ff" shape-rendering="crispEdges"/><text x="1004.14" y="402.20" font-size="12" fill="#fff" text-anchor="middle" font-weight="normal" >14</text><rect x="1023.82" y="382.50" width="39.36" height="30.50" fill="#0000ff" shape-rendering="crispEdges"/><text x="1043.50" y="402.20" font-size="12" fill="#fff" text-anchor="middle" font-weight="normal" >10</text><rect x="1063.18" y="382.50" width="39.36" height="30.50" fill="#0000ff" shape-rendering="crispEdges"/><text x="1082.86" y="402.20" font-size="12" fill="#fff" text-anchor="middle" font-weight="normal" >9</text><rect x="1102.53" y="382.50" width="39.36" height="30.50" fill="#0000ff" shape-rendering="crispEdges"/><text x="1122.21" y="402.20" font-size="12" fill="#fff" text-anchor="middle" font-weight="normal" >7</text><rect x="1141.89" y="382.50" width="39.36" height="30.50" fill="#0000ff" shape-rendering="crispEdges"/><text x="1161.57" y="402.20" font-size="12" fill="#fff" text-anchor="middle" font-weight="normal" >9</text><rect x="1181.24" y="382.50" width="39.36" height="30.50" fill="#0000ff" shape-rendering="crispEdges"/><text x="1200.92" y="402.20" font-size="12" fill="#fff" text-anchor="middle" font-weight="normal" >5</text><rect x="1220.60" y="382.50" width="39.36" height="30.50" fill="#0000ff" shape-rendering="crispEdges"/><text x="1240.28" y="402.20" font-size="12" fill="#fff" text-anchor="middle" font-weight="normal" >7</text><rect x="1259.96" y="382.50" width="39.36" height="30.50" fill="#0000ff" shape-rendering="crispEdges"/><text x="1279.63" y="402.20" font-size="12" fill="#fff" text-anchor="middle" font-weight="normal" >9</text><rect x="1299.31" y="382.50" width="39.36" height="30.50" fill="#0080ff" shape-rendering="crispEdges"/><text x="1318.99" y="402.20" font-size="12" fill="#fff" text-anchor="middle" font-weight="normal" >14</text><rect x="1338.67" y="382.50" width="39.36" height="30.50" fill="#0080ff" shape-rendering="crispEdges"/><text x="1358.34" y="402.20" font-size="12" fill="#fff" text-anchor="middle" font-weight="normal" >16</text><rect x="1378.02" y="382.50" width="39.36" height="30.50" fill="#0080ff" shape-rendering="crispEdges"/><text x="1397.70" y="402.20" font-size="12" fill="#fff" text-anchor="middle" font-weight="normal" >16</text><rect x="1417.38" y="382.50" width="39.36" height="30.50" fill="#0000ff" shape-rendering="crispEdges"/><text x="1437.06" y="402.20" font-size="12" fill="#fff" text-anchor="middle" font-weight="normal" >10</text><rect x="1456.73" y="382.50" width="39.36" height="30.50" fill="#0000ff" shape-rendering="crispEdges"/><text x="1476.41" y="402.20" font-size="12" fill="#fff" text-anchor="middle" font-weight="normal" >7</text><rect x="1496.09" y="382.50" width="39.36" height="30.50" fill="#0000ff" shape-rendering="crispEdges"/><text x="1515.77" y="402.20" font-size="12" fill="#fff" text-anchor="middle" font-weight="normal" >9</text><rect x="1535.44" y="382.50" width="39.36" height="30.50" fill="#0080ff" shape-rendering="crispEdges"/><text x="1555.12" y="402.20" font-size="12" fill="#fff" text-anchor="middle" font-weight="normal" >16</text><rect x="1574.80" y="382.50" width="39.36" height="30.50" fill="#0080ff" shape-rendering="crispEdges"/><text x="1594.48" y="402.20" font-size="12" fill="#fff" text-anchor="middle" font-weight="normal" >16</text><rect x="1614.16" y="382.50" width="39.36" height="30.50" fill="#0080ff" shape-rendering="crispEdges"/><text x="1633.83" y="402.20" font-size="12" fill="#fff" text-anchor="middle" font-weight="normal" >14</text><rect x="1653.51" y="382.50" width="39.36" height="30.50" fill="#8000ff" shape-rendering="crispEdges"/><text x="1673.19" y="402.20" font-size="12" fill="#fff" text-anchor="middle" font-weight="normal" >3</text><rect x="1692.87" y="382.50" width="39.36" height="30.50" fill="#8000ff" shape-rendering="crispEdges"/><text x="1712.54" y="402.20" font-size="12" fill="#fff" text-anchor="middle" font-weight="normal" >-4</text><rect x="1732.22" y="382.50" width="39.36" height="30.50" fill="#8000ff" shape-rendering="crispEdges"/><text x="1751.90" y="402.20" font-size="12" fill="#fff" text-anchor="middle" font-weight="normal" >-2</text><rect x="1771.58" y="382.50" width="39.36" height="30.50" fill="#ff00ff" shape-rendering="crispEdges"/><text x="1791.26" y="402.20" font-size="12" fill="#fff" text-anchor="middle" font-weight="normal" >-8</text><rect x="1810.93" y="382.50" width="39.36" height="30.50" fill="#8000ff" shape-rendering="crispEdges"/><text x="1830.61" y="402.20" font-size="12" fill="#fff" text-anchor="middle" font-weight="normal" >-4</text><rect x="1850.29" y="382.50" width="39.36" height="30.50" fill="#8000ff" shape-rendering="crispEdges"/><text x="1869.97" y="402.20" font-size="12" fill="#fff" text-anchor="middle" font-weight="normal" >-0</text><rect x="1889.64" y="382.50" width="39.36" height="30.50" fill="#0000ff" shape-rendering="crispEdges"/><text x="1909.32" y="402.20" font-size="12" fill="#fff" text-anchor="middle" font-weight="normal" >10</text><rect x="1929.00" y="382.50" width="40.00" height="30.50" fill="#0080ff" shape-rendering="crispEdges"/><text x="1949.00" y="402.20" font-size="12" fill="#fff" text-anchor="middle" font-weight="normal" >18</text><rect x="118.00" y="413.00" width="40.00" height="31.00" fill="#00ffff" shape-rendering="crispEdges"/><text x="138.00" y="433.00" font-size="12" fill="#000" text-anchor="middle" font-weight="normal" >25</text><rect x="158.00" y="413.00" width="39.36" height="31.00" fill="#00ffff" shape-rendering="crispEdges"/><text x="177.68" y="433.00" font-size="12" fill="#000" text-anchor="middle" font-weight="normal" >30</text><rect x="197.36" y="413.00" width="39.36" height="31.00" fill="#00ff80" shape-rendering="crispEdges"/><text x="217.03" y="433.00" font-size="12" fill="#000" text-anchor="middle" font-weight="normal" >37</text><rect x="236.71" y="413.00" width="39.36" height="31.00" fill="#00ff80" shape-rendering="crispEdges"/><text x="256.39" y="433.00" font-size="12" fill="#000" text-anchor="middle" font-weight="normal" >32</text><rect x="276.07" y="413.00" width="39.36" height="31.00" fill="#00ff80" shape-rendering="crispEdges"/><text x="295.74" y="433.00" font-size="12" fill="#000" text-anchor="middle" font-weight="normal" >37</text><rect x="315.42" y="413.00" width="39.36" height="31.00" fill="#00ff80" shape-rendering="crispEdges"/><text x="335.10" y="433.00" font-size="12" fill="#000" text-anchor="middle" font-weight="normal" >37</text><rect x="354.78" y="413.00" width="39.36" height="31.00" fill="#00ffff" shape-rendering="crispEdges"/><text x="374.46" y="433.00" font-size="12" fill="#000" text-anchor="middle" font-weight="normal" >30</text><rect x="394.13" y="413.00" width="39.36" height="31.00" fill="#00ffff" shape-rendering="crispEdges"/><text x="413.81" y="433.00" font-size="12" fill="#000" text-anchor="middle" font-weight="normal" >28</text><rect x="433.49" y="413.00" width="39.36" height="31.00" fill="#0080ff" shape-rendering="crispEdges"/><text x="453.17" y="433.00" font-size="12" fill="#fff" text-anchor="middle" font-weight="normal" >21</text><rect x="472.84" y="413.00" width="39.36" height="31.00" fill="#0080ff" shape-rendering="crispEdges"/><text x="492.52" y="433.00" font-size="12" fill="#fff" text-anchor="middle" font-weight="normal" >21</text><rect x="512.20" y="413.00" width="39.36" height="31.00" fill="#00ffff" shape-rendering="crispEdges"/><text x="531.88" y="433.00" font-size="12" fill="#000" text-anchor="middle" font-weight="normal" >23</text><rect x="551.56" y="413.00" width="39.36" height="31.00" fill="#00ffff" shape-rendering="crispEdges"/><text x="571.23" y="433.00" font-size="12" fill="#000" text-anchor="middle" font-weight="normal" >25</text><rect x="590.91" y="413.00" width="39.36" height="31.00" fill="#0080ff" shape-rendering="crispEdges"/><text x="610.59" y="433.00" font-size="12" fill="#fff" text-anchor="middle" font-weight="normal" >21</text><rect x="630.27" y="413.00" width="39.36" height="31.00" fill="#0080ff" shape-rendering="crispEdges"/><text x="649.94" y="433.00" font-size="12" fill="#fff" text-anchor="middle" font-weight="normal" >19</text><rect x="669.62" y="413.00" width="39.36" height="31.00" fill="#0080ff" shape-rendering="crispEdges"/><text x="689.30" y="433.00" font-size="12" fill="#fff" text-anchor="middle" font-weight="normal" >21</text><rect x="708.98" y="413.00" width="39.36" height="31.00" fill="#0080ff" shape-rendering="crispEdges"/><text x="728.66" y="433.00" font-size="12" fill="#fff" text-anchor="middle" font-weight="normal" >21</text><rect x="748.33" y="413.00" width="39.36" height="31.00" fill="#00ffff" shape-rendering="crispEdges"/><text x="768.01" y="433.00" font-size="12" fill="#000" text-anchor="middle" font-weight="normal" >28</text><rect x="787.69" y="413.00" width="39.36" height="31.00" fill="#00ff80" shape-rendering="crispEdges"/><text x="807.37" y="433.00" font-size="12" fill="#000" text-anchor="middle" font-weight="normal" >32</text><rect x="827.04" y="413.00" width="39.36" height="31.00" fill="#00ffff" shape-rendering="crispEdges"/><text x="846.72" y="433.00" font-size="12" fill="#000" text-anchor="middle" font-weight="normal" >28</text><rect x="866.40" y="413.00" width="39.36" height="31.00" fill="#00ffff" shape-rendering="crispEdges"/><text x="886.08" y="433.00" font-size="12" fill="#000" text-anchor="middle" font-weight="normal" >23</text><rect x="905.76" y="413.00" width="39.36" height="31.00" fill="#0080ff" shape-rendering="crispEdges"/><text x="925.43" y="433.00" font-size="12" fill="#fff" text-anchor="middle" font-weight="normal" >18</text><rect x="945.11" y="413.00" width="39.36" height="31.00" fill="#0000ff" shape-rendering="crispEdges"/><text x="964.79" y="433.00" font-size="12" fill="#fff" text-anchor="middle" font-weight="normal" >9</text><rect x="984.47" y="413.00" width="39.36" height="31.00" fill="#0000ff" shape-rendering="crispEdges"/><text x="1004.14" y="433.00" font-size="12" fill="#fff" text-anchor="middle" font-weight="normal" >12</text><rect x="1023.82" y="413.00" width="39.36" height="31.00" fill="#0000ff" shape-rendering="crispEdges"/><text x="1043.50" y="433.00" font-size="12" fill="#fff" text-anchor="middle" font-weight="normal" >9</text><rect x="1063.18" y="413.00" width="39.36" height="31.00" fill="#8000ff" shape-rendering="crispEdges"/><text x="1082.86" y="433.00" font-size="12" fill="#fff" text-anchor="middle" font-weight="normal" >1</text><rect x="1102.53" y="413.00" width="39.36" height="31.00" fill="#8000ff" shape-rendering="crispEdges"/><text x="1122.21" y="433.00" font-size="12" fill="#fff" text-anchor="middle" font-weight="normal" >1</text><rect x="1141.89" y="413.00" width="39.36" height="31.00" fill="#0000ff" shape-rendering="crispEdges"/><text x="1161.57" y="433.00" font-size="12" fill="#fff" text-anchor="middle" font-weight="normal" >5</text><rect x="1181.24" y="413.00" width="39.36" height="31.00" fill="#8000ff" shape-rendering="crispEdges"/><text x="1200.92" y="433.00" font-size="12" fill="#fff" text-anchor="middle" font-weight="normal" >3</text><rect x="1220.60" y="413.00" width="39.36" height="31.00" fill="#0000ff" shape-rendering="crispEdges"/><text x="1240.28" y="433.00" font-size="12" fill="#fff" text-anchor="middle" font-weight="normal" >5</text><rect x="1259.96" y="413.00" width="39.36" height="31.00" fill="#0000ff" shape-rendering="crispEdges"/><text x="1279.63" y="433.00" font-size="12" fill="#fff" text-anchor="middle" font-weight="normal" >5</text><rect x="1299.31" y="413.00" width="39.36" height="31.00" fill="#0000ff" shape-rendering="crispEdges"/><text x="1318.99" y="433.00" font-size="12" fill="#fff" text-anchor="middle" font-weight="normal" >10</text><rect x="1338.67" y="413.00" width="39.36" height="31.00" fill="#0080ff" shape-rendering="crispEdges"/><text x="1358.34" y="433.00" font-size="12" fill="#fff" text-anchor="middle" font-weight="normal" >14</text><rect x="1378.02" y="413.00" width="39.36" height="31.00" fill="#0080ff" shape-rendering="crispEdges"/><text x="1397.70" y="433.00" font-size="12" fill="#fff" text-anchor="middle" font-weight="normal" >14</text><rect x="1417.38" y="413.00" width="39.36" height="31.00" fill="#8000ff" shape-rendering="crispEdges"/><text x="1437.06" y="433.00" font-size="12" fill="#fff" text-anchor="middle" font-weight="normal" >3</text><rect x="1456.73" y="413.00" width="39.36" height="31.00" fill="#8000ff" shape-rendering="crispEdges"/><text x="1476.41" y="433.00" font-size="12" fill="#fff" text-anchor="middle" font-weight="normal" >3</text><rect x="1496.09" y="413.00" width="39.36" height="31.00" fill="#8000ff" shape-rendering="crispEdges"/><text x="1515.77" y="433.00" font-size="12" fill="#fff" text-anchor="middle" font-weight="normal" >-0</text><rect x="1535.44" y="413.00" width="39.36" height="31.00" fill="#8000ff" shape-rendering="crispEdges"/><text x="1555.12" y="433.00" font-size="12" fill="#fff" text-anchor="middle" font-weight="normal" >3</text><rect x="1574.80" y="413.00" width="39.36" height="31.00" fill="#0080ff" shape-rendering="crispEdges"/><text x="1594.48" y="433.00" font-size="12" fill="#fff" text-anchor="middle" font-weight="normal" >14</text><rect x="1614.16" y="413.00" width="39.36" height="31.00" fill="#0000ff" shape-rendering="crispEdges"/><text x="1633.83" y="433.00" font-size="12" fill="#fff" text-anchor="middle" font-weight="normal" >7</text><rect x="1653.51" y="413.00" width="39.36" height="31.00" fill="#ff00ff" shape-rendering="crispEdges"/><text x="1673.19" y="433.00" font-size="12" fill="#fff" text-anchor="middle" font-weight="normal" >-6</text><rect x="1692.87" y="413.00" width="39.36" height="31.00" fill="#ff00ff" shape-rendering="crispEdges"/><text x="1712.54" y="433.00" font-size="12" fill="#fff" text-anchor="middle" font-weight="normal" >-8</text><rect x="1732.22" y="413.00" width="39.36" height="31.00" fill="#8000ff" shape-rendering="crispEdges"/><text x="1751.90" y="433.00" font-size="12" fill="#fff" text-anchor="middle" font-weight="normal" >-4</text><rect x="1771.58" y="413.00" width="39.36" height="31.00" fill="#c000c0" shape-rendering="crispEdges"/><text x="1791.26" y="433.00" font-size="12" fill="#fff" text-anchor="middle" font-weight="normal" >-15</text><rect x="1810.93" y="413.00" width="39.36" height="31.00" fill="#ff00ff" shape-rendering="crispEdges"/><text x="1830.61" y="433.00" font-size="12" fill="#fff" text-anchor="middle" font-weight="normal" >-13</text><rect x="1850.29" y="413.00" width="39.36" height="31.00" fill="#ff00ff" shape-rendering="crispEdges"/><text x="1869.97" y="433.00" font-size="12" fill="#fff" text-anchor="middle" font-weight="normal" >-8</text><rect x="1889.64" y="413.00" width="39.36" height="31.00" fill="#8000ff" shape-rendering="crispEdges"/><text x="1909.32" y="433.00" font-size="12" fill="#fff" text-anchor="middle" font-weight="normal" >1</text><rect x="1929.00" y="413.00" width="40.00" height="31.00" fill="#0080ff" shape-rendering="crispEdges"/><text x="1949.00" y="433.00" font-size="12" fill="#fff" text-anchor="middle" font-weight="normal" >14</text><rect x="118.00" y="444.00" width="40.00" height="31.00" fill="#0080ff" shape-rendering="crispEdges"/><text x="138.00" y="463.80" font-size="12" fill="#fff" text-anchor="middle" font-weight="normal" >16</text><rect x="158.00" y="444.00" width="39.36" height="31.00" fill="#0080ff" shape-rendering="crispEdges"/><text x="177.68" y="463.80" font-size="12" fill="#fff" text-anchor="middle" font-weight="normal" >21</text><rect x="197.36" y="444.00" width="39.36" height="31.00" fill="#00ffff" shape-rendering="crispEdges"/><text x="217.03" y="463.80" font-size="12" fill="#000" text-anchor="middle" font-weight="normal" >30</text><rect x="236.71" y="444.00" width="39.36" height="31.00" fill="#00ffff" shape-rendering="crispEdges"/><text x="256.39" y="463.80" font-size="12" fill="#000" text-anchor="middle" font-weight="normal" >27</text><rect x="276.07" y="444.00" width="39.36" height="31.00" fill="#00ff80" shape-rendering="crispEdges"/><text x="295.74" y="463.80" font-size="12" fill="#000" text-anchor="middle" font-weight="normal" >32</text><rect x="315.42" y="444.00" width="39.36" height="31.00" fill="#00ff80" shape-rendering="crispEdges"/><text x="335.10" y="463.80" font-size="12" fill="#000" text-anchor="middle" font-weight="normal" >34</text><rect x="354.78" y="444.00" width="39.36" height="31.00" fill="#0080ff" shape-rendering="crispEdges"/><text x="374.46" y="463.80" font-size="12" fill="#fff" text-anchor="middle" font-weight="normal" >19</text><rect x="394.13" y="444.00" width="39.36" height="31.00" fill="#0080ff" shape-rendering="crispEdges"/><text x="413.81" y="463.80" font-size="12" fill="#fff" text-anchor="middle" font-weight="normal" >18</text><rect x="433.49" y="444.00" width="39.36" height="31.00" fill="#0080ff" shape-rendering="crispEdges"/><text x="453.17" y="463.80" font-size="12" fill="#fff" text-anchor="middle" font-weight="normal" >21</text><rect x="472.84" y="444.00" width="39.36" height="31.00" fill="#0080ff" shape-rendering="crispEdges"/><text x="492.52" y="463.80" font-size="12" fill="#fff" text-anchor="middle" font-weight="normal" >21</text><rect x="512.20" y="444.00" width="39.36" height="31.00" fill="#0080ff" shape-rendering="crispEdges"/><text x="531.88" y="463.80" font-size="12" fill="#fff" text-anchor="middle" font-weight="normal" >18</text><rect x="551.56" y="444.00" width="39.36" height="31.00" fill="#0080ff" shape-rendering="crispEdges"/><text x="571.23" y="463.80" font-size="12" fill="#fff" text-anchor="middle" font-weight="normal" >16</text><rect x="590.91" y="444.00" width="39.36" height="31.00" fill="#0000ff" shape-rendering="crispEdges"/><text x="610.59" y="463.80" font-size="12" fill="#fff" text-anchor="middle" font-weight="normal" >7</text><rect x="630.27" y="444.00" width="39.36" height="31.00" fill="#0000ff" shape-rendering="crispEdges"/><text x="649.94" y="463.80" font-size="12" fill="#fff" text-anchor="middle" font-weight="normal" >7</text><rect x="669.62" y="444.00" width="39.36" height="31.00" fill="#0000ff" shape-rendering="crispEdges"/><text x="689.30" y="463.80" font-size="12" fill="#fff" text-anchor="middle" font-weight="normal" >12</text><rect x="708.98" y="444.00" width="39.36" height="31.00" fill="#0000ff" shape-rendering="crispEdges"/><text x="728.66" y="463.80" font-size="12" fill="#fff" text-anchor="middle" font-weight="normal" >9</text><rect x="748.33" y="444.00" width="39.36" height="31.00" fill="#0080ff" shape-rendering="crispEdges"/><text x="768.01" y="463.80" font-size="12" fill="#fff" text-anchor="middle" font-weight="normal" >18</text><rect x="787.69" y="444.00" width="39.36" height="31.00" fill="#0080ff" shape-rendering="crispEdges"/><text x="807.37" y="463.80" font-size="12" fill="#fff" text-anchor="middle" font-weight="normal" >21</text><rect x="827.04" y="444.00" width="39.36" height="31.00" fill="#0080ff" shape-rendering="crispEdges"/><text x="846.72" y="463.80" font-size="12" fill="#fff" text-anchor="middle" font-weight="normal" >16</text><rect x="866.40" y="444.00" width="39.36" height="31.00" fill="#0000ff" shape-rendering="crispEdges"/><text x="886.08" y="463.80" font-size="12" fill="#fff" text-anchor="middle" font-weight="normal" >10</text><rect x="905.76" y="444.00" width="39.36" height="31.00" fill="#0000ff" shape-rendering="crispEdges"/><text x="925.43" y="463.80" font-size="12" fill="#fff" text-anchor="middle" font-weight="normal" >5</text><rect x="945.11" y="444.00" width="39.36" height="31.00" fill="#8000ff" shape-rendering="crispEdges"/><text x="964.79" y="463.80" font-size="12" fill="#fff" text-anchor="middle" font-weight="normal" >-4</text><rect x="984.47" y="444.00" width="39.36" height="31.00" fill="#8000ff" shape-rendering="crispEdges"/><text x="1004.14" y="463.80" font-size="12" fill="#fff" text-anchor="middle" font-weight="normal" >-0</text><rect x="1023.82" y="444.00" width="39.36" height="31.00" fill="#ff00ff" shape-rendering="crispEdges"/><text x="1043.50" y="463.80" font-size="12" fill="#fff" text-anchor="middle" font-weight="normal" >-6</text><rect x="1063.18" y="444.00" width="39.36" height="31.00" fill="#ff00ff" shape-rendering="crispEdges"/><text x="1082.86" y="463.80" font-size="12" fill="#fff" text-anchor="middle" font-weight="normal" >-13</text><rect x="1102.53" y="444.00" width="39.36" height="31.00" fill="#ff00ff" shape-rendering="crispEdges"/><text x="1122.21" y="463.80" font-size="12" fill="#fff" text-anchor="middle" font-weight="normal" >-13</text><rect x="1141.89" y="444.00" width="39.36" height="31.00" fill="#ff00ff" shape-rendering="crispEdges"/><text x="1161.57" y="463.80" font-size="12" fill="#fff" text-anchor="middle" font-weight="normal" >-9</text><rect x="1181.24" y="444.00" width="39.36" height="31.00" fill="#ff00ff" shape-rendering="crispEdges"/><text x="1200.92" y="463.80" font-size="12" fill="#fff" text-anchor="middle" font-weight="normal" >-13</text><rect x="1220.60" y="444.00" width="39.36" height="31.00" fill="#ff00ff" shape-rendering="crispEdges"/><text x="1240.28" y="463.80" font-size="12" fill="#fff" text-anchor="middle" font-weight="normal" >-11</text><rect x="1259.96" y="444.00" width="39.36" height="31.00" fill="#ff00ff" shape-rendering="crispEdges"/><text x="1279.63" y="463.80" font-size="12" fill="#fff" text-anchor="middle" font-weight="normal" >-6</text><rect x="1299.31" y="444.00" width="39.36" height="31.00" fill="#8000ff" shape-rendering="crispEdges"/><text x="1318.99" y="463.80" font-size="12" fill="#fff" text-anchor="middle" font-weight="normal" >-2</text><rect x="1338.67" y="444.00" width="39.36" height="31.00" fill="#8000ff" shape-rendering="crispEdges"/><text x="1358.34" y="463.80" font-size="12" fill="#fff" text-anchor="middle" font-weight="normal" >-0</text><rect x="1378.02" y="444.00" width="39.36" height="31.00" fill="#8000ff" shape-rendering="crispEdges"/><text x="1397.70" y="463.80" font-size="12" fill="#fff" text-anchor="middle" font-weight="normal" >1</text><rect x="1417.38" y="444.00" width="39.36" height="31.00" fill="#ff00ff" shape-rendering="crispEdges"/><text x="1437.06" y="463.80" font-size="12" fill="#fff" text-anchor="middle" font-weight="normal" >-13</text><rect x="1456.73" y="444.00" width="39.36" height="31.00" fill="#ff00ff" shape-rendering="crispEdges"/><text x="1476.41" y="463.80" font-size="12" fill="#fff" text-anchor="middle" font-weight="normal" >-13</text><rect x="1496.09" y="444.00" width="39.36" height="31.00" fill="#8000ff" shape-rendering="crispEdges"/><text x="1515.77" y="463.80" font-size="12" fill="#fff" text-anchor="middle" font-weight="normal" >-0</text><rect x="1535.44" y="444.00" width="39.36" height="31.00" fill="#ff00ff" shape-rendering="crispEdges"/><text x="1555.12" y="463.80" font-size="12" fill="#fff" text-anchor="middle" font-weight="normal" >-8</text><rect x="1574.80" y="444.00" width="39.36" height="31.00" fill="#8000ff" shape-rendering="crispEdges"/><text x="1594.48" y="463.80" font-size="12" fill="#fff" text-anchor="middle" font-weight="normal" >-2</text><rect x="1614.16" y="444.00" width="39.36" height="31.00" fill="#c000c0" shape-rendering="crispEdges"/><text x="1633.83" y="463.80" font-size="12" fill="#fff" text-anchor="middle" font-weight="normal" >-15</text><rect x="1653.51" y="444.00" width="39.36" height="31.00" fill="#800080" shape-rendering="crispEdges"/><text x="1673.19" y="463.80" font-size="12" fill="#fff" text-anchor="middle" font-weight="normal" >-26</text><rect x="1692.87" y="444.00" width="39.36" height="31.00" fill="#800080" shape-rendering="crispEdges"/><text x="1712.54" y="463.80" font-size="12" fill="#fff" text-anchor="middle" font-weight="normal" >-26</text><rect x="1732.22" y="444.00" width="39.36" height="31.00" fill="#800080" shape-rendering="crispEdges"/><text x="1751.90" y="463.80" font-size="12" fill="#fff" text-anchor="middle" font-weight="normal" >-24</text><rect x="1771.58" y="444.00" width="39.36" height="31.00" fill="#800080" shape-rendering="crispEdges"/><text x="1791.26" y="463.80" font-size="12" fill="#fff" text-anchor="middle" font-weight="normal" >-29</text><rect x="1810.93" y="444.00" width="39.36" height="31.00" fill="#800080" shape-rendering="crispEdges"/><text x="1830.61" y="463.80" font-size="12" fill="#fff" text-anchor="middle" font-weight="normal" >-26</text><rect x="1850.29" y="444.00" width="39.36" height="31.00" fill="#c000c0" shape-rendering="crispEdges"/><text x="1869.97" y="463.80" font-size="12" fill="#fff" text-anchor="middle" font-weight="normal" >-15</text><rect x="1889.64" y="444.00" width="39.36" height="31.00" fill="#ff00ff" shape-rendering="crispEdges"/><text x="1909.32" y="463.80" font-size="12" fill="#fff" text-anchor="middle" font-weight="normal" >-9</text><rect x="1929.00" y="444.00" width="40.00" height="31.00" fill="#8000ff" shape-rendering="crispEdges"/><text x="1949.00" y="463.80" font-size="12" fill="#fff" text-anchor="middle" font-weight="normal" >-2</text><rect x="118.00" y="475.00" width="40.00" height="31.00" fill="#d8e3f8" shape-rendering="crispEdges"/><text x="138.00" y="494.70" font-size="12" fill="#111" text-anchor="middle" font-weight="normal" >88</text><rect x="158.00" y="475.00" width="39.36" height="31.00" fill="#d8e3f8" shape-rendering="crispEdges"/><text x="177.68" y="494.70" font-size="12" fill="#111" text-anchor="middle" font-weight="normal" >82</text><rect x="197.36" y="475.00" width="39.36" height="31.00" fill="#e4e9f8" shape-rendering="crispEdges"/><text x="217.03" y="494.70" font-size="12" fill="#111" text-anchor="middle" font-weight="normal" >73</text><rect x="236.71" y="475.00" width="39.36" height="31.00" fill="#d8e3f8" shape-rendering="crispEdges"/><text x="256.39" y="494.70" font-size="12" fill="#111" text-anchor="middle" font-weight="normal" >77</text><rect x="276.07" y="475.00" width="39.36" height="31.00" fill="#e4e9f8" shape-rendering="crispEdges"/><text x="295.74" y="494.70" font-size="12" fill="#111" text-anchor="middle" font-weight="normal" >71</text><rect x="315.42" y="475.00" width="39.36" height="31.00" fill="#d8e3f8" shape-rendering="crispEdges"/><text x="335.10" y="494.70" font-size="12" fill="#111" text-anchor="middle" font-weight="normal" >83</text><rect x="354.78" y="475.00" width="39.36" height="31.00" fill="#d8e3f8" shape-rendering="crispEdges"/><text x="374.46" y="494.70" font-size="12" fill="#111" text-anchor="middle" font-weight="normal" >97</text><rect x="394.13" y="475.00" width="39.36" height="31.00" fill="#d8e3f8" shape-rendering="crispEdges"/><text x="413.81" y="494.70" font-size="12" fill="#111" text-anchor="middle" font-weight="normal" >76</text><rect x="433.49" y="475.00" width="39.36" height="31.00" fill="#e4e9f8" shape-rendering="crispEdges"/><text x="453.17" y="494.70" font-size="12" fill="#111" text-anchor="middle" font-weight="normal" >74</text><rect x="472.84" y="475.00" width="39.36" height="31.00" fill="#d8e3f8" shape-rendering="crispEdges"/><text x="492.52" y="494.70" font-size="12" fill="#111" text-anchor="middle" font-weight="normal" >79</text><rect x="512.20" y="475.00" width="39.36" height="31.00" fill="#d8e3f8" shape-rendering="crispEdges"/><text x="531.88" y="494.70" font-size="12" fill="#111" text-anchor="middle" font-weight="normal" >81</text><rect x="551.56" y="475.00" width="39.36" height="31.00" fill="#d8e3f8" shape-rendering="crispEdges"/><text x="571.23" y="494.70" font-size="12" fill="#111" text-anchor="middle" font-weight="normal" >88</text><rect x="590.91" y="475.00" width="39.36" height="31.00" fill="#d8e3f8" shape-rendering="crispEdges"/><text x="610.59" y="494.70" font-size="12" fill="#111" text-anchor="middle" font-weight="normal" >91</text><rect x="630.27" y="475.00" width="39.36" height="31.00" fill="#d8e3f8" shape-rendering="crispEdges"/><text x="649.94" y="494.70" font-size="12" fill="#111" text-anchor="middle" font-weight="normal" >83</text><rect x="669.62" y="475.00" width="39.36" height="31.00" fill="#d8e3f8" shape-rendering="crispEdges"/><text x="689.30" y="494.70" font-size="12" fill="#111" text-anchor="middle" font-weight="normal" >81</text><rect x="708.98" y="475.00" width="39.36" height="31.00" fill="#e4e9f8" shape-rendering="crispEdges"/><text x="728.66" y="494.70" font-size="12" fill="#111" text-anchor="middle" font-weight="normal" >69</text><rect x="748.33" y="475.00" width="39.36" height="31.00" fill="#d8e3f8" shape-rendering="crispEdges"/><text x="768.01" y="494.70" font-size="12" fill="#111" text-anchor="middle" font-weight="normal" >88</text><rect x="787.69" y="475.00" width="39.36" height="31.00" fill="#d8e3f8" shape-rendering="crispEdges"/><text x="807.37" y="494.70" font-size="12" fill="#111" text-anchor="middle" font-weight="normal" >81</text><rect x="827.04" y="475.00" width="39.36" height="31.00" fill="#d8e3f8" shape-rendering="crispEdges"/><text x="846.72" y="494.70" font-size="12" fill="#111" text-anchor="middle" font-weight="normal" >95</text><rect x="866.40" y="475.00" width="39.36" height="31.00" fill="#d8e3f8" shape-rendering="crispEdges"/><text x="886.08" y="494.70" font-size="12" fill="#111" text-anchor="middle" font-weight="normal" >97</text><rect x="905.76" y="475.00" width="39.36" height="31.00" fill="#d8e3f8" shape-rendering="crispEdges"/><text x="925.43" y="494.70" font-size="12" fill="#111" text-anchor="middle" font-weight="normal" >94</text><rect x="945.11" y="475.00" width="39.36" height="31.00" fill="#d8e3f8" shape-rendering="crispEdges"/><text x="964.79" y="494.70" font-size="12" fill="#111" text-anchor="middle" font-weight="normal" >90</text><rect x="984.47" y="475.00" width="39.36" height="31.00" fill="#d8e3f8" shape-rendering="crispEdges"/><text x="1004.14" y="494.70" font-size="12" fill="#111" text-anchor="middle" font-weight="normal" >96</text><rect x="1023.82" y="475.00" width="39.36" height="31.00" fill="#d8e3f8" shape-rendering="crispEdges"/><text x="1043.50" y="494.70" font-size="12" fill="#111" text-anchor="middle" font-weight="normal" >93</text><rect x="1063.18" y="475.00" width="39.36" height="31.00" fill="#d8e3f8" shape-rendering="crispEdges"/><text x="1082.86" y="494.70" font-size="12" fill="#111" text-anchor="middle" font-weight="normal" >89</text><rect x="1102.53" y="475.00" width="39.36" height="31.00" fill="#d8e3f8" shape-rendering="crispEdges"/><text x="1122.21" y="494.70" font-size="12" fill="#111" text-anchor="middle" font-weight="normal" >83</text><rect x="1141.89" y="475.00" width="39.36" height="31.00" fill="#d8e3f8" shape-rendering="crispEdges"/><text x="1161.57" y="494.70" font-size="12" fill="#111" text-anchor="middle" font-weight="normal" >81</text><rect x="1181.24" y="475.00" width="39.36" height="31.00" fill="#d8e3f8" shape-rendering="crispEdges"/><text x="1200.92" y="494.70" font-size="12" fill="#111" text-anchor="middle" font-weight="normal" >81</text><rect x="1220.60" y="475.00" width="39.36" height="31.00" fill="#d8e3f8" shape-rendering="crispEdges"/><text x="1240.28" y="494.70" font-size="12" fill="#111" text-anchor="middle" font-weight="normal" >92</text><rect x="1259.96" y="475.00" width="39.36" height="31.00" fill="#e4e9f8" shape-rendering="crispEdges"/><text x="1279.63" y="494.70" font-size="12" fill="#111" text-anchor="middle" font-weight="normal" >72</text><rect x="1299.31" y="475.00" width="39.36" height="31.00" fill="#e4e9f8" shape-rendering="crispEdges"/><text x="1318.99" y="494.70" font-size="12" fill="#111" text-anchor="middle" font-weight="normal" >67</text><rect x="1338.67" y="475.00" width="39.36" height="31.00" fill="#d8e3f8" shape-rendering="crispEdges"/><text x="1358.34" y="494.70" font-size="12" fill="#111" text-anchor="middle" font-weight="normal" >94</text><rect x="1378.02" y="475.00" width="39.36" height="31.00" fill="#d8e3f8" shape-rendering="crispEdges"/><text x="1397.70" y="494.70" font-size="12" fill="#111" text-anchor="middle" font-weight="normal" >91</text><rect x="1417.38" y="475.00" width="39.36" height="31.00" fill="#d8e3f8" shape-rendering="crispEdges"/><text x="1437.06" y="494.70" font-size="12" fill="#111" text-anchor="middle" font-weight="normal" >93</text><rect x="1456.73" y="475.00" width="39.36" height="31.00" fill="#d8e3f8" shape-rendering="crispEdges"/><text x="1476.41" y="494.70" font-size="12" fill="#111" text-anchor="middle" font-weight="normal" >94</text><rect x="1496.09" y="475.00" width="39.36" height="31.00" fill="#e4e9f8" shape-rendering="crispEdges"/><text x="1515.77" y="494.70" font-size="12" fill="#111" text-anchor="middle" font-weight="normal" >71</text><rect x="1535.44" y="475.00" width="39.36" height="31.00" fill="#e4e9f8" shape-rendering="crispEdges"/><text x="1555.12" y="494.70" font-size="12" fill="#111" text-anchor="middle" font-weight="normal" >65</text><rect x="1574.80" y="475.00" width="39.36" height="31.00" fill="#d8e3f8" shape-rendering="crispEdges"/><text x="1594.48" y="494.70" font-size="12" fill="#111" text-anchor="middle" font-weight="normal" >93</text><rect x="1614.16" y="475.00" width="39.36" height="31.00" fill="#d8e3f8" shape-rendering="crispEdges"/><text x="1633.83" y="494.70" font-size="12" fill="#111" text-anchor="middle" font-weight="normal" >91</text><rect x="1653.51" y="475.00" width="39.36" height="31.00" fill="#d8e3f8" shape-rendering="crispEdges"/><text x="1673.19" y="494.70" font-size="12" fill="#111" text-anchor="middle" font-weight="normal" >80</text><rect x="1692.87" y="475.00" width="39.36" height="31.00" fill="#d8e3f8" shape-rendering="crispEdges"/><text x="1712.54" y="494.70" font-size="12" fill="#111" text-anchor="middle" font-weight="normal" >83</text><rect x="1732.22" y="475.00" width="39.36" height="31.00" fill="#d8e3f8" shape-rendering="crispEdges"/><text x="1751.90" y="494.70" font-size="12" fill="#111" text-anchor="middle" font-weight="normal" >84</text><rect x="1771.58" y="475.00" width="39.36" height="31.00" fill="#d8e3f8" shape-rendering="crispEdges"/><text x="1791.26" y="494.70" font-size="12" fill="#111" text-anchor="middle" font-weight="normal" >90</text><rect x="1810.93" y="475.00" width="39.36" height="31.00" fill="#d8e3f8" shape-rendering="crispEdges"/><text x="1830.61" y="494.70" font-size="12" fill="#111" text-anchor="middle" font-weight="normal" >90</text><rect x="1850.29" y="475.00" width="39.36" height="31.00" fill="#e4e9f8" shape-rendering="crispEdges"/><text x="1869.97" y="494.70" font-size="12" fill="#111" text-anchor="middle" font-weight="normal" >69</text><rect x="1889.64" y="475.00" width="39.36" height="31.00" fill="#d8e3f8" shape-rendering="crispEdges"/><text x="1909.32" y="494.70" font-size="12" fill="#111" text-anchor="middle" font-weight="normal" >84</text><rect x="1929.00" y="475.00" width="40.00" height="31.00" fill="#d8e3f8" shape-rendering="crispEdges"/><text x="1949.00" y="494.70" font-size="12" fill="#111" text-anchor="middle" font-weight="normal" >90</text><rect x="118.00" y="506.00" width="1851.00" height="31.00" fill="#fff" /><rect x="133.10" y="521.30" width="9.80" height="1.60" fill="#4a6ae0" /><rect x="172.78" y="521.30" width="9.80" height="1.60" fill="#4a6ae0" /><text x="217.03" y="525.60" font-size="12" fill="#4a6ae0" text-anchor="middle" font-weight="normal" >5700</text><rect x="251.49" y="521.30" width="9.80" height="1.60" fill="#4a6ae0" /><text x="295.74" y="525.60" font-size="12" fill="#4a6ae0" text-anchor="middle" font-weight="normal" >7100</text><text x="335.10" y="525.60" font-size="12" fill="#4a6ae0" text-anchor="middle" font-weight="normal" >6600</text><text x="374.46" y="525.60" font-size="12" fill="#4a6ae0" text-anchor="middle" font-weight="normal" >2300</text><rect x="408.91" y="521.30" width="9.80" height="1.60" fill="#4a6ae0" /><rect x="448.27" y="521.30" width="9.80" height="1.60" fill="#4a6ae0" /><rect x="487.62" y="521.30" width="9.80" height="1.60" fill="#4a6ae0" /><rect x="526.98" y="521.30" width="9.80" height="1.60" fill="#4a6ae0" /><rect x="566.33" y="521.30" width="9.80" height="1.60" fill="#4a6ae0" /><rect x="605.69" y="521.30" width="9.80" height="1.60" fill="#4a6ae0" /><rect x="645.04" y="521.30" width="9.80" height="1.60" fill="#4a6ae0" /><rect x="684.40" y="521.30" width="9.80" height="1.60" fill="#4a6ae0" /><rect x="723.76" y="521.30" width="9.80" height="1.60" fill="#4a6ae0" /><rect x="763.11" y="521.30" width="9.80" height="1.60" fill="#4a6ae0" /><text x="807.37" y="525.60" font-size="12" fill="#4a6ae0" text-anchor="middle" font-weight="normal" >1800</text><text x="846.72" y="525.60" font-size="12" fill="#4a6ae0" text-anchor="middle" font-weight="normal" >700</text><text x="886.08" y="525.60" font-size="12" fill="#4a6ae0" text-anchor="middle" font-weight="normal" >500</text><rect x="920.53" y="521.30" width="9.80" height="1.60" fill="#4a6ae0" /><rect x="959.89" y="521.30" width="9.80" height="1.60" fill="#4a6ae0" /><rect x="999.24" y="521.30" width="9.80" height="1.60" fill="#4a6ae0" /><rect x="1038.60" y="521.30" width="9.80" height="1.60" fill="#4a6ae0" /><rect x="1077.96" y="521.30" width="9.80" height="1.60" fill="#4a6ae0" /><rect x="1117.31" y="521.30" width="9.80" height="1.60" fill="#4a6ae0" /><rect x="1156.67" y="521.30" width="9.80" height="1.60" fill="#4a6ae0" /><rect x="1196.02" y="521.30" width="9.80" height="1.60" fill="#4a6ae0" /><rect x="1235.38" y="521.30" width="9.80" height="1.60" fill="#4a6ae0" /><rect x="1274.73" y="521.30" width="9.80" height="1.60" fill="#4a6ae0" /><rect x="1314.09" y="521.30" width="9.80" height="1.60" fill="#4a6ae0" /><rect x="1353.44" y="521.30" width="9.80" height="1.60" fill="#4a6ae0" /><rect x="1392.80" y="521.30" width="9.80" height="1.60" fill="#4a6ae0" /><rect x="1432.16" y="521.30" width="9.80" height="1.60" fill="#4a6ae0" /><rect x="1471.51" y="521.30" width="9.80" height="1.60" fill="#4a6ae0" /><rect x="1510.87" y="521.30" width="9.80" height="1.60" fill="#4a6ae0" /><rect x="1550.22" y="521.30" width="9.80" height="1.60" fill="#4a6ae0" /><rect x="1589.58" y="521.30" width="9.80" height="1.60" fill="#4a6ae0" /><rect x="1628.93" y="521.30" width="9.80" height="1.60" fill="#4a6ae0" /><rect x="1668.29" y="521.30" width="9.80" height="1.60" fill="#4a6ae0" /><rect x="1707.64" y="521.30" width="9.80" height="1.60" fill="#4a6ae0" /><rect x="1747.00" y="521.30" width="9.80" height="1.60" fill="#4a6ae0" /><rect x="1786.36" y="521.30" width="9.80" height="1.60" fill="#4a6ae0" /><rect x="1825.71" y="521.30" width="9.80" height="1.60" fill="#4a6ae0" /><rect x="1865.07" y="521.30" width="9.80" height="1.60" fill="#4a6ae0" /><rect x="1904.42" y="521.30" width="9.80" height="1.60" fill="#4a6ae0" /><rect x="1944.10" y="521.30" width="9.80" height="1.60" fill="#4a6ae0" /><rect x="118.00" y="537.00" width="1851.00" height="209.00" fill="#f6f7f8" /><rect x="118.00" y="555.80" width="1851.00" height="1.20" fill="#d3d4f2" /><rect x="118.00" y="569.00" width="1851.00" height="1.20" fill="#d3d4f2" /><rect x="118.00" y="582.70" width="1851.00" height="1.20" fill="#d3d4f2" /><rect x="118.00" y="596.60" width="1851.00" height="1.20" fill="#d3d4f2" /><rect x="118.00" y="611.30" width="1851.00" height="1.20" fill="#d3d4f2" /><rect x="118.00" y="626.80" width="1851.00" height="1.20" fill="#d3d4f2" /><rect x="118.00" y="643.10" width="1851.00" height="1.20" fill="#d3d4f2" /><rect x="118.00" y="660.90" width="1851.00" height="1.20" fill="#d3d4f2" /><rect x="118.00" y="680.60" width="1851.00" height="1.20" fill="#d3d4f2" /><rect x="118.00" y="704.40" width="1851.00" height="1.20" fill="#d3d4f2" /><rect x="118.00" y="740.00" width="1851.00" height="1.20" fill="#d3d4f2" /><text x="69.60" y="560.30" font-size="10.8" fill="#8c9cf0" text-anchor="start" font-weight="normal" >15000ft</text><text x="69.60" y="587.40" font-size="10.8" fill="#8c9cf0" text-anchor="start" font-weight="normal" >12000ft</text><text x="69.60" y="616.10" font-size="10.8" fill="#8c9cf0" text-anchor="start" font-weight="normal" >9000ft</text><text x="69.60" y="648.00" font-size="10.8" fill="#8c9cf0" text-anchor="start" font-weight="normal" >6000ft</text><text x="69.60" y="686.00" font-size="10.8" fill="#8c9cf0" text-anchor="start" font-weight="normal" >3000ft</text><text x="69.60" y="746.20" font-size="10.8" fill="#8c9cf0" text-anchor="start" font-weight="normal" >Sea lvl</text><linearGradient id="mtg" x1="0" y1="0" x2="0" y2="1"><stop offset="0" stop-color="#b3cce3"/><stop offset="0.6" stop-color="#a6c1dc"/><stop offset="0.85" stop-color="#bdd3e7"/><stop offset="1" stop-color="#d9e6f1"/></linearGradient><clipPath id="mtclip"><polygon points="118,722 140,719 160,716 180,721 200,713 230,708 255,700 276,701 290,706 305,702 320,705 345,714 370,722 400,722 420,716 436,713 450,718 480,720 512,716 540,721 600,720 640,722 670,712 690,718 720,720 750,713 780,714 800,708 820,702 850,702 875,705 900,706 930,712 960,720 1000,721 1050,720 1100,722 1150,720 1240,721 1257,713 1280,718 1320,719 1375,722 1412,701 1446,710 1456,715 1471,706 1500,717 1560,719 1600,722 1640,718 1700,720 1760,718 1810,713 1860,716 1900,720 1940,713 1969,704 1969,746 118,746"/></clipPath><polygon points="118,722 140,719 160,716 180,721 200,713 230,708 255,700 276,701 290,706 305,702 320,705 345,714 370,722 400,722 420,716 436,713 450,718 480,720 512,716 540,721 600,720 640,722 670,712 690,718 720,720 750,713 780,714 800,708 820,702 850,702 875,705 900,706 930,712 960,720 1000,721 1050,720 1100,722 1150,720 1240,721 1257,713 1280,718 1320,719 1375,722 1412,701 1446,710 1456,715 1471,706 1500,717 1560,719 1600,722 1640,718 1700,720 1760,718 1810,713 1860,716 1900,720 1940,713 1969,704 1969,746 118,746" fill="url(#mtg)"/><g clip-path="url(#mtclip)"><path d="M717.8,709.7 l12.2,6.7 l-2.5,1.0z M1636.1,707.6 l11.4,6.3 l-2.5,1.0z M189.2,720.5 l5.8,3.2 l-2.5,1.0z M1137.2,706.2 l11.2,6.2 l-2.5,1.0z M1284.1,726.2 l-5.7,3.1 l2.5,1.0z M211.5,712.4 l11.1,6.1 l-2.5,1.0z M654.6,709.5 l-6.3,3.5 l2.5,1.0z M1154.2,729.9 l6.1,3.4 l-2.5,1.0z M807.4,724.8 l5.7,3.1 l-2.5,1.0z M1262.7,722.9 l-10.8,6.0 l2.5,1.0z M979.5,739.1 l9.0,4.9 l-2.5,1.0z M1586.4,730.6 l-7.7,4.2 l2.5,1.0z M1089.5,737.3 l-13.0,7.2 l2.5,1.0z M1244.1,706.8 l10.6,5.8 l-2.5,1.0z M1517.7,709.8 l10.4,5.7 l-2.5,1.0z M1895.9,706.9 l-11.1,6.1 l2.5,1.0z M747.9,717.3 l-10.5,5.8 l2.5,1.0z M246.9,707.6 l8.0,4.4 l-2.5,1.0z M232.0,730.7 l-12.1,6.7 l2.5,1.0z M645.4,718.7 l12.4,6.8 l-2.5,1.0z M1856.4,717.5 l-11.7,6.4 l2.5,1.0z M228.8,733.2 l6.4,3.5 l-2.5,1.0z M854.5,738.8 l10.5,5.8 l-2.5,1.0z M949.2,724.9 l-14.7,8.1 l2.5,1.0z M1714.9,714.6 l-9.6,5.3 l2.5,1.0z M1380.3,718.5 l7.5,4.1 l-2.5,1.0z M445.3,712.8 l-7.6,4.2 l2.5,1.0z M1654.2,710.9 l8.1,4.5 l-2.5,1.0z M893.4,718.0 l11.2,6.2 l-2.5,1.0z M1394.7,723.6 l11.8,6.5 l-2.5,1.0z M963.0,737.1 l-15.5,8.5 l2.5,1.0z M854.8,719.0 l-10.3,5.7 l2.5,1.0z M234.9,706.6 l7.3,4.0 l-2.5,1.0z M322.9,726.8 l6.1,3.4 l-2.5,1.0z M1110.6,740.1 l11.8,6.5 l-2.5,1.0z M1734.0,727.3 l-6.6,3.6 l2.5,1.0z M1883.8,726.9 l10.2,5.6 l-2.5,1.0z M1687.1,741.7 l-10.1,5.6 l2.5,1.0z M695.7,709.5 l-13.2,7.3 l2.5,1.0z M1003.5,730.3 l10.7,5.9 l-2.5,1.0z M1875.5,724.1 l6.6,3.6 l-2.5,1.0z M1519.5,715.3 l12.1,6.6 l-2.5,1.0z M1405.2,713.9 l9.0,5.0 l-2.5,1.0z M776.6,712.5 l-11.0,6.0 l2.5,1.0z M1294.9,727.3 l13.7,7.5 l-2.5,1.0z M1608.0,735.1 l13.1,7.2 l-2.5,1.0z M489.0,722.7 l13.0,7.2 l-2.5,1.0z M1578.6,721.9 l-7.1,3.9 l2.5,1.0z M945.6,739.6 l-15.9,8.7 l2.5,1.0z M268.7,707.9 l-10.2,5.6 l2.5,1.0z M497.3,727.7 l14.9,8.2 l-2.5,1.0z M1005.1,728.8 l13.8,7.6 l-2.5,1.0z M1660.8,708.6 l9.3,5.1 l-2.5,1.0z M1002.4,710.8 l-13.7,7.5 l2.5,1.0z M280.1,740.0 l-12.9,7.1 l2.5,1.0z M861.0,740.0 l13.0,7.1 l-2.5,1.0z M1953.3,705.0 l-11.5,6.3 l2.5,1.0z M1608.8,709.6 l-14.1,7.8 l2.5,1.0z M1333.3,717.3 l11.0,6.1 l-2.5,1.0z M159.5,734.4 l13.0,7.1 l-2.5,1.0z M1092.1,739.5 l9.8,5.4 l-2.5,1.0z M1645.1,712.0 l-7.8,4.3 l2.5,1.0z M1045.1,733.0 l-8.6,4.7 l2.5,1.0z M1659.9,706.3 l-13.1,7.2 l2.5,1.0z M1342.9,735.0 l10.7,5.9 l-2.5,1.0z M1101.7,723.9 l-5.2,2.9 l2.5,1.0z M1553.4,727.1 l13.5,7.4 l-2.5,1.0z M438.2,722.0 l13.0,7.1 l-2.5,1.0z M721.8,723.7 l11.1,6.1 l-2.5,1.0z M1750.4,706.2 l7.1,3.9 l-2.5,1.0z M1545.6,723.3 l11.2,6.1 l-2.5,1.0z M938.2,727.3 l10.6,5.8 l-2.5,1.0z M1398.8,721.2 l-10.9,6.0 l2.5,1.0z M1057.3,713.4 l-10.8,5.9 l2.5,1.0z M1823.5,737.9 l-7.2,4.0 l2.5,1.0z M373.2,708.6 l9.9,5.4 l-2.5,1.0z M1359.0,720.3 l-7.3,4.0 l2.5,1.0z M1567.1,738.1 l-6.7,3.7 l2.5,1.0z M383.9,737.5 l15.6,8.6 l-2.5,1.0z M1498.4,707.6 l14.7,8.1 l-2.5,1.0z M1947.3,735.6 l-6.8,3.7 l2.5,1.0z M1955.1,719.3 l-9.6,5.3 l2.5,1.0z M708.0,731.4 l-5.2,2.9 l2.5,1.0z M933.1,704.7 l-8.6,4.8 l2.5,1.0z M1065.6,706.4 l15.8,8.7 l-2.5,1.0z M1913.8,708.0 l7.9,4.4 l-2.5,1.0z M1792.3,710.9 l-13.3,7.3 l2.5,1.0z M1688.3,729.7 l-15.4,8.5 l2.5,1.0z M395.7,738.9 l-11.3,6.2 l2.5,1.0z M285.1,706.2 l-12.6,6.9 l2.5,1.0z M1772.7,714.2 l5.2,2.9 l-2.5,1.0z M1599.8,707.2 l14.4,7.9 l-2.5,1.0z M608.2,708.6 l-5.1,2.8 l2.5,1.0z M1830.6,714.2 l6.4,3.5 l-2.5,1.0z M1851.8,740.8 l7.9,4.3 l-2.5,1.0z M492.5,715.9 l8.4,4.6 l-2.5,1.0z M655.3,723.0 l-7.0,3.8 l2.5,1.0z M1603.6,741.8 l5.4,3.0 l-2.5,1.0z M1473.3,724.9 l-7.1,3.9 l2.5,1.0z M573.5,721.0 l-12.2,6.7 l2.5,1.0z M1331.9,724.7 l-14.8,8.1 l2.5,1.0z M1389.6,741.3 l8.8,4.8 l-2.5,1.0z M867.1,717.2 l5.6,3.1 l-2.5,1.0z M146.3,727.8 l-14.7,8.1 l2.5,1.0z M421.4,707.2 l-14.3,7.8 l2.5,1.0z M1225.3,730.3 l5.5,3.0 l-2.5,1.0z M410.8,720.9 l-7.9,4.3 l2.5,1.0z M1915.5,724.8 l-7.7,4.2 l2.5,1.0z M522.2,711.0 l8.7,4.8 l-2.5,1.0z M996.2,723.1 l7.2,4.0 l-2.5,1.0z M287.7,735.0 l6.6,3.6 l-2.5,1.0z M847.3,715.4 l11.9,6.6 l-2.5,1.0z M1201.0,724.1 l-13.3,7.3 l2.5,1.0z M1530.9,731.4 l-10.4,5.7 l2.5,1.0z M1456.8,728.4 l-5.5,3.0 l2.5,1.0z M1474.7,734.9 l6.5,3.6 l-2.5,1.0z M1645.6,726.2 l14.8,8.2 l-2.5,1.0z M277.1,705.6 l12.0,6.6 l-2.5,1.0z M815.2,721.2 l5.6,3.1 l-2.5,1.0z M1276.0,729.9 l10.4,5.7 l-2.5,1.0z M963.5,706.7 l15.3,8.4 l-2.5,1.0z M1337.1,706.5 l-13.1,7.2 l2.5,1.0z M1613.8,736.2 l7.6,4.2 l-2.5,1.0z M545.9,728.7 l-10.1,5.5 l2.5,1.0z M261.7,738.6 l8.2,4.5 l-2.5,1.0z M1258.9,728.4 l5.9,3.2 l-2.5,1.0z M732.5,728.8 l12.6,6.9 l-2.5,1.0z M143.0,706.3 l8.0,4.4 l-2.5,1.0z M1397.8,729.7 l-8.2,4.5 l2.5,1.0z M977.8,721.7 l6.3,3.5 l-2.5,1.0z M695.4,707.3 l-10.2,5.6 l2.5,1.0z M967.3,735.2 l-15.6,8.6 l2.5,1.0z M1954.9,718.7 l15.1,8.3 l-2.5,1.0z M257.7,707.4 l-13.2,7.3 l2.5,1.0z M1878.8,709.0 l-14.0,7.7 l2.5,1.0z M1757.1,730.7 l-7.5,4.1 l2.5,1.0z M847.5,710.0 l-15.4,8.5 l2.5,1.0z M868.4,731.6 l-9.6,5.3 l2.5,1.0z M703.5,735.9 l-5.0,2.8 l2.5,1.0z M1669.0,708.6 l15.2,8.4 l-2.5,1.0z M1784.3,715.0 l-9.1,5.0 l2.5,1.0z M840.2,737.1 l-5.8,3.2 l2.5,1.0z M1514.9,736.5 l8.1,4.4 l-2.5,1.0z M1660.8,714.9 l15.3,8.4 l-2.5,1.0z M1912.5,720.6 l-8.5,4.7 l2.5,1.0z M1569.4,720.3 l-5.3,2.9 l2.5,1.0z M1806.2,739.7 l11.0,6.1 l-2.5,1.0z M211.3,731.8 l10.0,5.5 l-2.5,1.0z M1309.7,714.9 l5.5,3.0 l-2.5,1.0z M435.2,719.8 l-8.1,4.5 l2.5,1.0z M1484.3,741.1 l7.9,4.3 l-2.5,1.0z M675.3,725.2 l9.3,5.1 l-2.5,1.0z M1307.4,706.9 l-10.5,5.8 l2.5,1.0z M1136.0,721.2 l-8.7,4.8 l2.5,1.0z M909.0,724.8 l7.7,4.2 l-2.5,1.0z M751.2,707.5 l-7.6,4.2 l2.5,1.0z M1614.1,711.7 l-5.2,2.9 l2.5,1.0z M826.7,732.3 l-7.3,4.0 l2.5,1.0z M744.3,706.4 l-8.1,4.4 l2.5,1.0z M352.4,723.1 l11.9,6.6 l-2.5,1.0z" fill="#7096bc" opacity="0.5" stroke="#7096bc" stroke-width="0.8"/><path d="M290.9,739.9 l-7.8,3.5 M917.2,716.5 l12.1,5.5 M354.9,721.0 l-11.6,5.2 M1907.4,723.6 l-4.7,2.1 M1914.8,713.9 l5.1,2.3 M400.7,742.9 l-5.1,2.3 M276.9,735.1 l4.0,1.8 M549.3,740.8 l-10.5,4.7 M1896.7,729.1 l-9.3,4.2 M1409.6,708.5 l4.7,2.1 M836.4,712.9 l10.0,4.5 M1112.2,743.9 l-6.8,3.1 M1309.9,739.4 l8.8,3.9 M1129.8,705.2 l-8.1,3.7 M222.1,711.8 l-12.8,5.8 M269.7,713.1 l-8.2,3.7 M538.6,705.4 l-7.4,3.3 M788.8,719.9 l-4.1,1.8 M1484.4,724.2 l6.1,2.7 M695.4,736.8 l6.3,2.8 M609.2,739.6 l-5.1,2.3 M1246.2,739.9 l8.9,4.0 M1871.4,709.9 l7.9,3.6 M163.6,727.8 l8.2,3.7 M459.9,722.0 l-11.1,5.0 M1472.6,743.9 l-13.3,6.0 M472.0,730.1 l-9.2,4.2 M178.9,730.6 l-7.8,3.5 M1938.3,721.7 l5.1,2.3 M636.5,718.1 l13.6,6.1 M1155.8,734.4 l-7.8,3.5 M1637.4,721.3 l-4.5,2.0 M481.3,725.7 l-8.5,3.8 M792.4,739.9 l-4.3,1.9 M577.8,729.0 l-8.0,3.6 M184.3,706.5 l-13.2,5.9 M479.9,706.5 l-10.1,4.5 M622.7,742.3 l-10.2,4.6 M1497.9,731.6 l-13.2,6.0 M127.0,734.2 l13.2,5.9 M164.8,713.4 l-8.8,3.9 M1880.9,719.5 l-6.5,2.9 M1624.1,709.3 l9.0,4.0 M1601.5,733.5 l12.2,5.5 M1241.0,717.1 l-7.2,3.2 M1567.0,727.8 l-9.1,4.1 M1509.8,713.9 l4.6,2.1 M1009.2,725.8 l-5.6,2.5 M1750.9,743.5 l6.6,3.0 M504.6,720.8 l-13.9,6.2 M439.7,709.3 l8.6,3.9 M1500.8,737.9 l10.6,4.8 M1559.4,715.8 l-6.8,3.1 M808.5,733.5 l6.0,2.7 M462.9,713.4 l6.8,3.1 M722.4,719.8 l13.9,6.3 M1319.2,708.0 l8.6,3.9 M308.9,723.0 l-12.2,5.5 M1807.9,705.6 l6.9,3.1 M213.0,728.0 l12.3,5.5 M1837.1,718.9 l-12.7,5.7 M1233.2,735.0 l10.6,4.8 M315.3,727.8 l10.2,4.6 M189.1,717.6 l-4.4,2.0 M190.6,733.3 l13.1,5.9 M1631.6,720.4 l-7.7,3.5 M263.9,705.3 l-9.0,4.0 M236.8,708.1 l8.0,3.6 M1299.9,707.6 l-5.6,2.5 M876.5,715.3 l7.1,3.2 M696.6,726.7 l-7.6,3.4 M153.6,734.7 l12.0,5.4 M841.3,720.2 l-13.4,6.0 M1784.4,721.0 l-12.2,5.5 M1186.6,718.6 l11.7,5.3 M147.4,726.1 l-10.4,4.7 M284.4,728.9 l7.7,3.5 M389.3,715.3 l9.2,4.1 M320.8,723.6 l12.0,5.4 M676.8,737.5 l-4.4,2.0 M700.6,728.3 l10.4,4.7 M1789.2,728.8 l12.2,5.5 M1302.0,738.3 l10.2,4.6 M1650.7,711.3 l-6.2,2.8 M1852.6,710.3 l7.6,3.4 M576.1,733.0 l13.0,5.8 M1751.6,737.7 l-10.7,4.8 M337.3,728.0 l-9.5,4.3 M1318.1,716.3 l-6.5,2.9 M1336.2,721.9 l8.4,3.8 M126.5,743.4 l-8.7,3.9 M1529.5,735.2 l8.6,3.9 M1616.2,720.0 l-4.7,2.1 M914.9,707.7 l8.4,3.8 M195.0,709.2 l-13.2,5.9 M1555.5,724.5 l-4.5,2.0 M1325.0,735.4 l4.3,1.9 M1958.8,733.3 l12.1,5.5 M363.0,739.4 l6.9,3.1 M1386.6,732.8 l-6.2,2.8 M1246.9,714.1 l-7.2,3.3 M1790.7,722.3 l-6.5,2.9 M504.6,714.5 l-9.1,4.1 M807.2,712.0 l-8.0,3.6 M1374.7,739.8 l-5.7,2.6 M332.4,725.2 l-10.4,4.7 M1903.5,722.1 l9.2,4.1 M585.3,725.4 l-12.6,5.7 M608.7,743.6 l-9.8,4.4 M730.7,707.3 l6.3,2.8 M667.1,724.6 l-7.1,3.2 M1473.2,733.9 l-6.2,2.8 M1257.2,721.3 l9.1,4.1 M363.7,713.1 l10.5,4.7 M220.4,726.7 l-7.0,3.2 M1106.0,720.5 l7.0,3.2 M496.9,729.0 l8.7,3.9 M146.1,736.1 l-11.1,5.0 M296.9,729.5 l-12.7,5.7 M862.0,714.6 l-4.1,1.9 M1217.9,727.1 l-10.0,4.5 M578.7,740.1 l4.4,2.0 M869.5,713.5 l4.6,2.1 M142.8,726.0 l13.4,6.0 M882.7,724.7 l-10.4,4.7 M1621.5,711.0 l-7.1,3.2 M1275.5,743.8 l-11.2,5.1 M1440.6,704.3 l-12.4,5.6 M268.6,730.2 l5.8,2.6 M602.6,729.8 l-5.2,2.4 M1433.8,714.6 l-9.5,4.3 M1385.9,740.7 l-13.7,6.2 M1305.1,742.6 l6.2,2.8 M433.4,740.2 l12.4,5.6 M1863.9,733.8 l-7.3,3.3 M726.5,713.6 l-13.1,5.9 M991.6,725.2 l4.1,1.8 M927.1,733.0 l-9.7,4.4 M1576.9,719.7 l9.9,4.4 M386.9,705.1 l5.1,2.3 M756.6,709.7 l4.3,1.9 M375.5,729.7 l4.4,2.0 M1480.1,706.6 l-9.9,4.5 M487.9,742.2 l9.3,4.2 M1744.0,734.2 l-11.1,5.0 M317.7,712.2 l5.1,2.3 M1872.3,740.4 l11.5,5.2 M1643.1,729.3 l6.9,3.1 M364.9,735.7 l-10.5,4.7 M709.1,721.0 l-4.2,1.9 M1837.0,705.9 l-11.6,5.2 M1540.0,728.1 l-8.8,3.9 M1261.3,705.2 l-8.1,3.7 M1077.4,707.9 l8.7,3.9 M1112.9,712.7 l12.6,5.7 M1180.6,715.5 l8.4,3.8 M652.3,734.0 l-4.5,2.0 M1026.1,723.7 l12.0,5.4 M1905.4,727.7 l-13.6,6.1 M1187.0,710.4 l12.2,5.5 M1039.9,708.4 l10.4,4.7 M1025.1,743.6 l9.6,4.3 M1279.2,718.2 l-8.0,3.6 M1766.3,733.8 l8.2,3.7 M806.6,716.1 l8.3,3.7 M820.2,739.4 l-6.3,2.9 M354.2,727.8 l10.9,4.9 M763.3,717.1 l-5.6,2.5 M1342.2,733.7 l-5.7,2.6 M1392.0,714.3 l-6.3,2.8 M972.9,739.4 l6.4,2.9 M613.8,734.2 l12.3,5.5 M1455.3,743.0 l-11.2,5.1 M417.1,717.1 l5.9,2.7 M423.9,730.3 l6.0,2.7 M1936.2,735.8 l-11.3,5.1 M625.5,708.4 l-13.1,5.9 M501.1,719.5 l-4.3,2.0 M1697.1,721.5 l-6.2,2.8 M975.2,709.7 l-10.0,4.5 M130.2,713.7 l-12.5,5.6 M1681.7,730.7 l10.5,4.7 M1374.5,729.7 l-8.5,3.8 M599.6,732.0 l12.9,5.8 M1564.3,732.5 l-10.3,4.6 M1688.1,723.3 l-4.2,1.9 M1076.7,730.4 l-12.7,5.7 M1556.5,719.5 l8.9,4.0 M190.4,725.7 l5.6,2.5 M1078.5,708.0 l9.7,4.4 M1444.1,724.5 l-10.4,4.7 M1083.0,720.4 l13.5,6.1 M1948.1,711.4 l9.1,4.1 M1465.9,728.6 l-10.4,4.7 M626.5,720.0 l-4.1,1.9 M1809.9,729.1 l-10.7,4.8 M321.7,716.1 l8.0,3.6 M1955.3,742.4 l8.6,3.9 M358.7,735.1 l12.1,5.4 M986.1,726.5 l6.3,2.8 M771.9,729.6 l-12.2,5.5 M984.1,715.8 l9.5,4.3 M1559.6,722.8 l11.8,5.3 M613.7,719.0 l-6.5,2.9 M1373.1,723.3 l-12.1,5.4 M780.8,730.2 l-7.2,3.2 M911.0,729.5 l-10.6,4.8 M402.0,716.1 l7.9,3.5 M1648.3,740.2 l11.8,5.3 M1099.6,717.8 l9.8,4.4 M507.2,706.9 l6.9,3.1 M1187.9,738.2 l-5.9,2.6 M759.5,710.1 l13.0,5.9 M1245.2,731.5 l13.8,6.2 M1354.0,739.8 l-11.9,5.3 M484.3,731.7 l-9.3,4.2 M1359.1,708.7 l-5.2,2.3 M552.3,709.6 l8.9,4.0 M1014.1,740.2 l11.0,5.0 M1039.6,725.6 l12.6,5.7 M416.0,716.8 l-11.0,4.9 M1348.1,737.6 l-7.7,3.5 M1965.9,731.0 l-5.8,2.6 M1294.3,705.1 l-10.1,4.5 M1612.7,707.8 l8.8,4.0 M182.6,732.7 l-10.3,4.6 M294.4,730.4 l7.4,3.3 M644.5,717.7 l6.5,2.9 M1646.1,715.7 l-12.3,5.5 M736.1,743.4 l-12.7,5.7 M1919.8,730.2 l-11.9,5.4 M475.0,732.5 l5.3,2.4 M1567.7,705.6 l-11.2,5.1 M1126.8,706.0 l7.0,3.2 M205.6,736.9 l8.8,3.9 M1576.5,740.4 l10.1,4.6 M1277.1,731.9 l10.0,4.5 M512.3,730.7 l8.6,3.9 M307.1,711.3 l4.4,2.0 M1807.4,730.2 l7.7,3.5 M1572.0,726.5 l-6.6,3.0 M461.1,705.4 l4.2,1.9 M1038.9,724.9 l-12.2,5.5 M1182.0,740.7 l8.5,3.8 M1375.2,727.8 l13.9,6.3 M997.7,720.5 l-5.0,2.3 M511.9,710.1 l4.2,1.9 M137.2,730.8 l13.9,6.2 M522.9,708.9 l-8.7,3.9 M1447.9,713.7 l11.3,5.1 M1823.5,718.6 l11.5,5.2 M1467.1,707.4 l-10.3,4.6 M970.2,741.3 l6.5,2.9 M1444.0,704.5 l4.1,1.9 M838.0,716.5 l-10.0,4.5 M1244.1,716.7 l-13.5,6.1 M987.3,710.7 l13.7,6.1 M790.6,729.8 l-10.3,4.6 M1000.5,735.1 l-8.5,3.8 M1568.4,726.7 l6.9,3.1 M1267.9,730.0 l-12.0,5.4 M1725.2,733.0 l4.2,1.9 M1229.7,716.3 l8.3,3.7 M815.3,731.4 l10.0,4.5 M1610.6,715.3 l-4.0,1.8 M614.8,710.3 l13.2,5.9 M652.6,709.6 l12.9,5.8 M625.5,738.0 l-12.1,5.4 M760.3,707.4 l-9.5,4.3 M490.0,734.0 l13.3,6.0 M691.3,706.3 l8.0,3.6 M1829.4,727.5 l-4.1,1.8 M968.6,707.5 l12.1,5.4 M549.9,727.2 l-13.0,5.8 M999.8,727.6 l5.9,2.7 M290.2,736.2 l-6.9,3.1 M863.0,724.7 l5.5,2.5 M1823.2,723.7 l-12.7,5.7 M1288.0,735.5 l5.6,2.5 M756.7,724.8 l4.2,1.9 M497.8,738.8 l9.7,4.3 M602.9,735.2 l-8.3,3.7 M1536.3,736.8 l-13.6,6.1 M1677.6,717.6 l-13.9,6.3 M274.4,706.0 l-9.6,4.3 M1018.7,737.8 l-12.9,5.8 M1822.3,732.3 l-4.9,2.2 M1162.0,729.6 l-13.6,6.1 M457.2,738.0 l7.7,3.5 M1950.7,712.9 l-4.4,2.0 M1857.4,706.4 l9.5,4.3 M1665.5,705.9 l-11.9,5.3 M222.9,709.8 l11.5,5.2 M1369.5,716.0 l9.9,4.5 M989.0,718.9 l-7.9,3.6 M1008.5,710.7 l6.4,2.9 M1807.8,739.7 l8.7,3.9 M1594.7,710.3 l12.3,5.5 M1844.1,738.7 l12.9,5.8 M1556.8,742.3 l-13.3,6.0 M1674.8,729.1 l-8.5,3.8 M715.5,713.4 l-5.2,2.3 M383.5,712.9 l-4.6,2.1 M1141.5,709.8 l-12.7,5.7 M892.1,713.9 l-4.3,1.9 M737.5,710.7 l-8.9,4.0 M962.1,723.3 l5.5,2.5 M1284.8,735.5 l-13.3,6.0 M1661.9,708.8 l-11.5,5.2 M917.6,714.5 l6.4,2.9 M300.1,715.6 l13.0,5.8 M1656.5,743.1 l5.4,2.4 M936.1,724.3 l-9.1,4.1 M123.5,737.3 l9.3,4.2 M784.7,705.6 l-8.1,3.6 M1174.7,709.5 l5.8,2.6 M1433.6,711.9 l4.8,2.2 M1761.7,733.2 l11.6,5.2 M500.3,728.5 l11.1,5.0 M1196.1,712.1 l-4.7,2.1" stroke="#ffffff" stroke-width="1.3" opacity="0.7" fill="none"/><path d="M1672.6,739.0 l-6.6,3.3 M738.8,736.3 l-9.1,4.5 M286.7,720.7 l8.3,4.2 M1729.7,715.6 l-4.3,2.2 M187.7,731.3 l7.0,3.5 M777.5,739.6 l9.8,4.9 M342.9,731.7 l-8.7,4.4 M1558.3,737.3 l7.0,3.5 M658.2,709.9 l-8.1,4.1 M1067.6,725.1 l6.8,3.4 M569.6,709.2 l7.3,3.7 M309.5,715.0 l8.7,4.4 M155.9,739.3 l-8.2,4.1 M152.7,727.6 l7.0,3.5 M1417.1,709.7 l9.1,4.5 M203.4,710.4 l-6.5,3.2 M323.1,710.4 l9.2,4.6 M1709.6,711.3 l-7.0,3.5 M423.3,735.7 l-9.6,4.8 M1400.9,727.5 l7.2,3.6 M850.3,739.9 l-8.4,4.2 M859.7,736.2 l-8.0,4.0 M1624.6,736.5 l3.4,1.7 M1888.2,739.6 l-4.7,2.4 M1344.1,706.4 l3.8,1.9 M247.9,721.6 l6.5,3.3 M536.2,721.1 l-5.8,2.9 M1288.9,735.1 l9.2,4.6 M183.5,729.1 l-4.9,2.4 M1279.7,735.0 l3.3,1.6 M582.6,724.7 l6.0,3.0 M650.8,717.0 l7.5,3.8 M231.4,740.5 l-9.4,4.7 M275.9,727.2 l-9.5,4.8 M348.8,710.7 l-5.1,2.5 M1185.8,715.9 l-8.2,4.1 M1670.2,728.0 l-7.0,3.5 M491.4,731.6 l-6.2,3.1 M1251.2,722.9 l5.2,2.6 M735.9,712.8 l-6.8,3.4 M141.9,718.7 l9.0,4.5 M718.0,717.7 l4.9,2.4 M665.5,733.8 l4.1,2.1 M1238.5,718.5 l-7.6,3.8 M1660.2,718.7 l8.3,4.2 M1946.3,730.4 l-9.5,4.8 M742.1,718.7 l-7.7,3.9 M1635.9,724.6 l-8.2,4.1 M616.0,728.7 l7.4,3.7 M882.5,709.7 l5.9,2.9 M1039.1,740.7 l-7.0,3.5 M1689.0,716.1 l7.3,3.7 M820.7,722.3 l-6.2,3.1 M660.7,720.1 l-6.9,3.4 M1316.6,706.2 l-8.2,4.1 M822.7,716.8 l6.8,3.4 M924.2,719.6 l-4.6,2.3 M717.9,736.4 l-8.9,4.4 M497.2,721.4 l9.4,4.7 M167.2,715.2 l-9.3,4.6 M1818.9,733.8 l-6.8,3.4 M1075.2,724.6 l-7.8,3.9 M977.0,707.5 l-7.7,3.9 M1869.8,730.4 l6.7,3.3 M876.0,724.0 l7.5,3.8 M1744.2,740.7 l-6.4,3.2 M1536.5,738.4 l7.1,3.6 M435.2,717.5 l-9.8,4.9 M1066.2,710.0 l-9.3,4.6 M1634.7,741.6 l-9.2,4.6 M1285.0,724.9 l8.7,4.4 M1052.0,712.8 l4.3,2.1 M772.0,741.8 l7.5,3.7 M1397.0,706.4 l3.0,1.5 M1812.8,720.3 l3.7,1.8 M1353.3,713.1 l-6.5,3.2 M1728.1,738.2 l6.6,3.3 M1180.5,720.8 l3.9,1.9 M1077.0,724.3 l3.2,1.6 M434.8,724.8 l-8.8,4.4 M1609.0,708.2 l-3.1,1.5 M385.7,714.6 l4.9,2.5 M612.2,709.6 l9.3,4.7 M764.1,722.2 l5.7,2.8 M526.2,720.3 l8.3,4.2 M931.6,728.3 l4.7,2.4 M414.3,727.1 l4.2,2.1 M1779.3,735.4 l-5.1,2.6 M1892.2,723.8 l9.6,4.8 M1370.3,730.3 l-7.1,3.5 M690.7,737.5 l6.4,3.2 M281.5,712.1 l5.7,2.8 M1913.5,716.5 l6.9,3.5 M738.4,737.4 l5.4,2.7 M1894.4,721.2 l9.4,4.7 M835.1,722.8 l-5.4,2.7 M184.5,729.9 l5.4,2.7 M566.4,710.7 l4.4,2.2 M1144.5,722.8 l8.6,4.3 M413.9,718.7 l-8.1,4.0 M1281.8,726.9 l-5.1,2.5 M1051.9,714.2 l6.2,3.1 M1859.1,741.9 l-7.2,3.6 M1204.6,719.2 l4.7,2.4 M351.7,733.0 l7.7,3.9 M1121.6,715.7 l-8.4,4.2 M173.0,731.9 l4.0,2.0 M839.8,709.1 l4.2,2.1 M712.6,729.9 l-3.8,1.9 M1606.4,733.3 l-4.3,2.2 M282.3,716.4 l-8.7,4.4 M641.2,720.5 l9.4,4.7 M1849.2,712.4 l-5.6,2.8 M1775.8,706.9 l-7.9,4.0 M578.6,736.5 l5.5,2.7 M455.3,710.1 l9.4,4.7 M1435.4,707.5 l3.3,1.6 M915.1,733.3 l4.1,2.0 M1139.6,728.7 l9.6,4.8 M1172.5,731.8 l-4.8,2.4 M1357.1,726.7 l9.5,4.8 M1660.1,734.0 l5.0,2.5 M1735.5,727.1 l7.9,3.9 M1377.3,707.3 l-5.2,2.6 M1503.6,709.1 l-7.9,3.9 M1962.5,728.2 l4.5,2.3 M764.3,740.2 l-6.1,3.0 M1396.7,732.6 l-8.8,4.4 M1059.0,730.4 l4.4,2.2 M1023.6,712.8 l-9.7,4.8 M442.2,711.9 l8.5,4.2 M1124.1,715.0 l-3.4,1.7 M761.0,709.3 l7.5,3.7 M372.1,731.5 l7.7,3.8 M1422.6,706.2 l7.8,3.9 M1847.6,718.7 l5.1,2.5 M1204.6,714.7 l7.4,3.7 M1132.1,733.4 l4.2,2.1 M1225.2,722.6 l8.4,4.2 M331.3,716.4 l5.5,2.8 M200.1,738.2 l5.1,2.6 M1415.2,722.1 l-3.8,1.9 M941.6,726.5 l5.0,2.5 M204.1,722.9 l-9.9,4.9 M275.0,731.8 l-9.9,4.9 M320.8,723.6 l6.0,3.0 M1567.0,717.6 l5.5,2.8 M1309.8,728.6 l-9.5,4.8 M1325.6,708.8 l8.2,4.1 M1549.6,736.2 l5.1,2.5 M1895.9,724.9 l9.3,4.6 M308.6,731.9 l-5.2,2.6 M820.3,729.3 l5.5,2.7 M800.3,725.8 l-5.6,2.8 M561.9,707.5 l-7.0,3.5 M1791.0,740.0 l-6.5,3.2 M1469.0,741.8 l7.2,3.6 M381.9,714.2 l-4.0,2.0 M285.5,707.4 l6.1,3.0 M522.9,719.4 l-3.2,1.6 M384.3,708.6 l-3.4,1.7 M1764.1,708.3 l3.1,1.5 M1788.8,711.9 l-5.1,2.5 M1604.5,730.3 l-7.0,3.5 M277.0,717.7 l6.2,3.1 M1918.7,740.6 l7.3,3.7 M1454.2,717.9 l-7.6,3.8 M1878.9,723.3 l-7.5,3.8 M1717.3,725.1 l7.4,3.7 M530.7,732.6 l7.8,3.9 M1339.3,719.4 l-7.1,3.5 M784.6,714.6 l-6.1,3.0 M330.9,712.5 l9.2,4.6 M528.4,736.1 l7.5,3.8 M1099.8,715.1 l-6.4,3.2 M538.2,726.6 l3.8,1.9 M1691.9,730.5 l8.6,4.3 M1714.0,725.8 l8.0,4.0 M1276.7,740.6 l-6.6,3.3 M1652.6,720.1 l4.2,2.1 M1159.4,733.9 l4.0,2.0 M866.4,707.7 l3.3,1.6 M968.6,710.3 l3.9,2.0 M1266.7,737.4 l-6.9,3.5 M430.1,732.8 l5.4,2.7 M1644.1,710.4 l-5.6,2.8 M1452.4,707.6 l7.2,3.6 M776.7,717.8 l7.2,3.6 M1828.2,730.3 l4.8,2.4 M1401.0,706.8 l-9.9,5.0 M329.7,706.8 l-3.8,1.9 M462.0,726.0 l-5.0,2.5 M1663.6,727.2 l-4.8,2.4 M1871.4,706.5 l5.4,2.7 M1019.3,723.4 l3.2,1.6 M257.7,728.3 l-7.5,3.8 M1676.1,740.8 l-7.9,3.9 M846.2,737.4 l7.3,3.6 M786.3,725.0 l5.2,2.6 M1207.7,707.6 l-4.2,2.1 M1462.5,717.9 l-6.3,3.1 M700.3,718.1 l6.4,3.2 M157.9,722.5 l9.9,5.0 M1284.6,732.2 l-4.0,2.0 M624.6,724.0 l4.8,2.4 M1951.6,707.2 l6.9,3.5 M1730.4,733.9 l7.4,3.7 M789.9,716.1 l8.6,4.3 M1377.7,716.9 l-8.3,4.2 M1059.4,728.9 l-5.5,2.7 M737.4,731.4 l-7.7,3.9 M1049.9,738.2 l-8.7,4.3 M398.4,713.4 l-9.2,4.6 M867.6,720.3 l8.4,4.2 M1203.2,711.2 l-8.0,4.0 M1461.4,725.8 l-9.6,4.8 M255.7,712.8 l9.5,4.7 M681.6,718.7 l-6.3,3.1 M1451.3,739.2 l-8.9,4.4 M1779.7,715.9 l4.8,2.4" stroke="#5c86b0" stroke-width="0.8" opacity="0.5" fill="none"/></g><path d="M66,703.2 H107.5 M101.5,697.8 L107.5,703.2 L101.5,708.6" fill="none" stroke="#e46a6a" stroke-width="1.5"/><polyline points="138.00,741.00 177.68,741.00 217.03,647.26 256.39,741.00 295.74,631.75 335.10,637.18 374.46,693.00 413.81,741.00 453.17,741.00 492.52,741.00 531.88,741.00 571.23,741.00 610.59,741.00 649.94,741.00 689.30,741.00 728.66,741.00 768.01,741.00 807.37,702.00 846.72,718.00 886.08,723.50 925.43,741.00 964.79,741.00 1004.14,741.00 1043.50,741.00 1082.86,741.00 1122.21,741.00 1161.57,741.00 1200.92,741.00 1240.28,741.00 1279.63,741.00 1318.99,741.00 1358.34,741.00 1397.70,741.00 1437.06,741.00 1476.41,741.00 1515.77,741.00 1555.12,741.00 1594.48,741.00 1633.83,741.00 1673.19,741.00 1712.54,741.00 1751.90,741.00 1791.26,741.00 1830.61,741.00 1869.97,741.00 1909.32,741.00 1949.00,741.00" fill="none" stroke="#4a5ee6" stroke-width="3.2" stroke-linejoin="miter"/><line x1="119" y1="703.2" x2="1969" y2="703.2" stroke="#ee1111" stroke-width="2.2" stroke-dasharray="2.1 2"/><rect x="127.90" y="690.80" width="20.20" height="12.00" fill="#00ffff" /><text x="138.00" y="701.00" font-size="12" fill="#000" text-anchor="middle" font-weight="normal" >28</text><rect x="127.90" y="709.90" width="20.20" height="12.00" fill="#00ffff" /><text x="138.00" y="720.10" font-size="12" fill="#000" text-anchor="middle" font-weight="normal" >24</text><rect x="167.58" y="690.80" width="20.20" height="12.00" fill="#00ff80" /><text x="177.68" y="701.00" font-size="12" fill="#000" text-anchor="middle" font-weight="normal" >34</text><rect x="167.58" y="709.90" width="20.20" height="12.00" fill="#00ffff" /><text x="177.68" y="720.10" font-size="12" fill="#000" text-anchor="middle" font-weight="normal" >30</text><rect x="206.93" y="690.80" width="20.20" height="12.00" fill="#00ff80" /><text x="217.03" y="701.00" font-size="12" fill="#000" text-anchor="middle" font-weight="normal" >38</text><rect x="206.93" y="709.90" width="20.20" height="12.00" fill="#00ff80" /><text x="217.03" y="720.10" font-size="12" fill="#000" text-anchor="middle" font-weight="normal" >35</text><rect x="246.29" y="690.80" width="20.20" height="12.00" fill="#00ff80" /><text x="256.39" y="701.00" font-size="12" fill="#000" text-anchor="middle" font-weight="normal" >35</text><rect x="246.29" y="709.90" width="20.20" height="12.00" fill="#00ffff" /><text x="256.39" y="720.10" font-size="12" fill="#000" text-anchor="middle" font-weight="normal" >28</text><rect x="285.64" y="690.80" width="20.20" height="12.00" fill="#00ff80" /><text x="295.74" y="701.00" font-size="12" fill="#000" text-anchor="middle" font-weight="normal" >38</text><rect x="285.64" y="709.90" width="20.20" height="12.00" fill="#00ff80" /><text x="295.74" y="720.10" font-size="12" fill="#000" text-anchor="middle" font-weight="normal" >34</text><rect x="325.00" y="690.80" width="20.20" height="12.00" fill="#00ff80" /><text x="335.10" y="701.00" font-size="12" fill="#000" text-anchor="middle" font-weight="normal" >38</text><rect x="325.00" y="709.90" width="20.20" height="12.00" fill="#00ff80" /><text x="335.10" y="720.10" font-size="12" fill="#000" text-anchor="middle" font-weight="normal" >35</text><rect x="364.36" y="690.80" width="20.20" height="12.00" fill="#00ffff" /><text x="374.46" y="701.00" font-size="12" fill="#000" text-anchor="middle" font-weight="normal" >31</text><rect x="364.36" y="709.90" width="20.20" height="12.00" fill="#00ffff" /><text x="374.46" y="720.10" font-size="12" fill="#000" text-anchor="middle" font-weight="normal" >30</text><rect x="403.71" y="690.80" width="20.20" height="12.00" fill="#00ffff" /><text x="413.81" y="701.00" font-size="12" fill="#000" text-anchor="middle" font-weight="normal" >28</text><rect x="403.71" y="709.90" width="20.20" height="12.00" fill="#00ffff" /><text x="413.81" y="720.10" font-size="12" fill="#000" text-anchor="middle" font-weight="normal" >28</text><rect x="443.07" y="690.80" width="20.20" height="12.00" fill="#00ffff" /><text x="453.17" y="701.00" font-size="12" fill="#000" text-anchor="middle" font-weight="normal" >25</text><rect x="443.07" y="709.90" width="20.20" height="12.00" fill="#0080ff" /><text x="453.17" y="720.10" font-size="12" fill="#fff" text-anchor="middle" font-weight="normal" >21</text><rect x="482.42" y="690.80" width="20.20" height="12.00" fill="#0080ff" /><text x="492.52" y="701.00" font-size="12" fill="#fff" text-anchor="middle" font-weight="normal" >22</text><rect x="482.42" y="709.90" width="20.20" height="12.00" fill="#0080ff" /><text x="492.52" y="720.10" font-size="12" fill="#fff" text-anchor="middle" font-weight="normal" >19</text><rect x="521.78" y="690.80" width="20.20" height="12.00" fill="#00ffff" /><text x="531.88" y="701.00" font-size="12" fill="#000" text-anchor="middle" font-weight="normal" >25</text><rect x="521.78" y="709.90" width="20.20" height="12.00" fill="#00ffff" /><text x="531.88" y="720.10" font-size="12" fill="#000" text-anchor="middle" font-weight="normal" >24</text><rect x="561.13" y="690.80" width="20.20" height="12.00" fill="#00ffff" /><text x="571.23" y="701.00" font-size="12" fill="#000" text-anchor="middle" font-weight="normal" >25</text><rect x="561.13" y="709.90" width="20.20" height="12.00" fill="#00ffff" /><text x="571.23" y="720.10" font-size="12" fill="#000" text-anchor="middle" font-weight="normal" >27</text><rect x="600.49" y="690.80" width="20.20" height="12.00" fill="#0080ff" /><text x="610.59" y="701.00" font-size="12" fill="#fff" text-anchor="middle" font-weight="normal" >21</text><rect x="600.49" y="709.90" width="20.20" height="12.00" fill="#0080ff" /><text x="610.59" y="720.10" font-size="12" fill="#fff" text-anchor="middle" font-weight="normal" >22</text><rect x="639.84" y="690.80" width="20.20" height="12.00" fill="#0080ff" /><text x="649.94" y="701.00" font-size="12" fill="#fff" text-anchor="middle" font-weight="normal" >20</text><rect x="639.84" y="709.90" width="20.20" height="12.00" fill="#0080ff" /><text x="649.94" y="720.10" font-size="12" fill="#fff" text-anchor="middle" font-weight="normal" >19</text><rect x="679.20" y="690.80" width="20.20" height="12.00" fill="#0080ff" /><text x="689.30" y="701.00" font-size="12" fill="#fff" text-anchor="middle" font-weight="normal" >22</text><rect x="679.20" y="709.90" width="20.20" height="12.00" fill="#0080ff" /><text x="689.30" y="720.10" font-size="12" fill="#fff" text-anchor="middle" font-weight="normal" >19</text><rect x="718.56" y="690.80" width="20.20" height="12.00" fill="#00ffff" /><text x="728.66" y="701.00" font-size="12" fill="#000" text-anchor="middle" font-weight="normal" >24</text><rect x="718.56" y="709.90" width="20.20" height="12.00" fill="#0080ff" /><text x="728.66" y="720.10" font-size="12" fill="#fff" text-anchor="middle" font-weight="normal" >21</text><rect x="757.91" y="690.80" width="20.20" height="12.00" fill="#00ffff" /><text x="768.01" y="701.00" font-size="12" fill="#000" text-anchor="middle" font-weight="normal" >30</text><rect x="757.91" y="709.90" width="20.20" height="12.00" fill="#00ffff" /><text x="768.01" y="720.10" font-size="12" fill="#000" text-anchor="middle" font-weight="normal" >28</text><rect x="797.27" y="690.80" width="20.20" height="12.00" fill="#00ff80" /><text x="807.37" y="701.00" font-size="12" fill="#000" text-anchor="middle" font-weight="normal" >32</text><rect x="797.27" y="709.90" width="20.20" height="12.00" fill="#00ffff" /><text x="807.37" y="720.10" font-size="12" fill="#000" text-anchor="middle" font-weight="normal" >30</text><rect x="836.62" y="690.80" width="20.20" height="12.00" fill="#00ffff" /><text x="846.72" y="701.00" font-size="12" fill="#000" text-anchor="middle" font-weight="normal" >30</text><rect x="836.62" y="709.90" width="20.20" height="12.00" fill="#00ffff" /><text x="846.72" y="720.10" font-size="12" fill="#000" text-anchor="middle" font-weight="normal" >29</text><rect x="875.98" y="690.80" width="20.20" height="12.00" fill="#00ffff" /><text x="886.08" y="701.00" font-size="12" fill="#000" text-anchor="middle" font-weight="normal" >24</text><rect x="875.98" y="709.90" width="20.20" height="12.00" fill="#00ffff" /><text x="886.08" y="720.10" font-size="12" fill="#000" text-anchor="middle" font-weight="normal" >26</text><rect x="915.33" y="690.80" width="20.20" height="12.00" fill="#0080ff" /><text x="925.43" y="701.00" font-size="12" fill="#fff" text-anchor="middle" font-weight="normal" >18</text><rect x="915.33" y="709.90" width="20.20" height="12.00" fill="#0080ff" /><text x="925.43" y="720.10" font-size="12" fill="#fff" text-anchor="middle" font-weight="normal" >19</text><rect x="954.69" y="690.80" width="20.20" height="12.00" fill="#0000ff" /><text x="964.79" y="701.00" font-size="12" fill="#fff" text-anchor="middle" font-weight="normal" >12</text><rect x="954.69" y="709.90" width="20.20" height="12.00" fill="#0000ff" /><text x="964.79" y="720.10" font-size="12" fill="#fff" text-anchor="middle" font-weight="normal" >10</text><rect x="994.04" y="690.80" width="20.20" height="12.00" fill="#0000ff" /><text x="1004.14" y="701.00" font-size="12" fill="#fff" text-anchor="middle" font-weight="normal" >12</text><rect x="994.04" y="709.90" width="20.20" height="12.00" fill="#0000ff" /><text x="1004.14" y="720.10" font-size="12" fill="#fff" text-anchor="middle" font-weight="normal" >13</text><rect x="1033.40" y="690.80" width="20.20" height="12.00" fill="#0000ff" /><text x="1043.50" y="701.00" font-size="12" fill="#fff" text-anchor="middle" font-weight="normal" >10</text><rect x="1033.40" y="709.90" width="20.20" height="12.00" fill="#0000ff" /><text x="1043.50" y="720.10" font-size="12" fill="#fff" text-anchor="middle" font-weight="normal" >10</text><rect x="1072.76" y="690.80" width="20.20" height="12.00" fill="#8000ff" /><text x="1082.86" y="701.00" font-size="12" fill="#fff" text-anchor="middle" font-weight="normal" >4</text><rect x="1072.76" y="709.90" width="20.20" height="12.00" fill="#8000ff" /><text x="1082.86" y="720.10" font-size="12" fill="#fff" text-anchor="middle" font-weight="normal" >4</text><rect x="1112.11" y="690.80" width="20.20" height="12.00" fill="#8000ff" /><text x="1122.21" y="701.00" font-size="12" fill="#fff" text-anchor="middle" font-weight="normal" >4</text><rect x="1112.11" y="709.90" width="20.20" height="12.00" fill="#8000ff" /><text x="1122.21" y="720.10" font-size="12" fill="#fff" text-anchor="middle" font-weight="normal" >3</text><rect x="1151.47" y="690.80" width="20.20" height="12.00" fill="#0000ff" /><text x="1161.57" y="701.00" font-size="12" fill="#fff" text-anchor="middle" font-weight="normal" >7</text><rect x="1151.47" y="709.90" width="20.20" height="12.00" fill="#0000ff" /><text x="1161.57" y="720.10" font-size="12" fill="#fff" text-anchor="middle" font-weight="normal" >7</text><rect x="1190.82" y="690.80" width="20.20" height="12.00" fill="#8000ff" /><text x="1200.92" y="701.00" font-size="12" fill="#fff" text-anchor="middle" font-weight="normal" >4</text><rect x="1190.82" y="709.90" width="20.20" height="12.00" fill="#8000ff" /><text x="1200.92" y="720.10" font-size="12" fill="#fff" text-anchor="middle" font-weight="normal" >2</text><rect x="1230.18" y="690.80" width="20.20" height="12.00" fill="#0000ff" /><text x="1240.28" y="701.00" font-size="12" fill="#fff" text-anchor="middle" font-weight="normal" >6</text><rect x="1230.18" y="709.90" width="20.20" height="12.00" fill="#0000ff" /><text x="1240.28" y="720.10" font-size="12" fill="#fff" text-anchor="middle" font-weight="normal" >6</text><rect x="1269.53" y="690.80" width="20.20" height="12.00" fill="#0000ff" /><text x="1279.63" y="701.00" font-size="12" fill="#fff" text-anchor="middle" font-weight="normal" >7</text><rect x="1269.53" y="709.90" width="20.20" height="12.00" fill="#0000ff" /><text x="1279.63" y="720.10" font-size="12" fill="#fff" text-anchor="middle" font-weight="normal" >5</text><rect x="1308.89" y="690.80" width="20.20" height="12.00" fill="#0000ff" /><text x="1318.99" y="701.00" font-size="12" fill="#fff" text-anchor="middle" font-weight="normal" >11</text><rect x="1308.89" y="709.90" width="20.20" height="12.00" fill="#0000ff" /><text x="1318.99" y="720.10" font-size="12" fill="#fff" text-anchor="middle" font-weight="normal" >10</text><rect x="1348.24" y="690.80" width="20.20" height="12.00" fill="#0000ff" /><text x="1358.34" y="701.00" font-size="12" fill="#fff" text-anchor="middle" font-weight="normal" >13</text><rect x="1348.24" y="709.90" width="20.20" height="12.00" fill="#0080ff" /><text x="1358.34" y="720.10" font-size="12" fill="#fff" text-anchor="middle" font-weight="normal" >14</text><rect x="1387.60" y="690.80" width="20.20" height="12.00" fill="#0000ff" /><text x="1397.70" y="701.00" font-size="12" fill="#fff" text-anchor="middle" font-weight="normal" >13</text><rect x="1387.60" y="709.90" width="20.20" height="12.00" fill="#0080ff" /><text x="1397.70" y="720.10" font-size="12" fill="#fff" text-anchor="middle" font-weight="normal" >16</text><rect x="1426.96" y="690.80" width="20.20" height="12.00" fill="#0000ff" /><text x="1437.06" y="701.00" font-size="12" fill="#fff" text-anchor="middle" font-weight="normal" >7</text><rect x="1426.96" y="709.90" width="20.20" height="12.00" fill="#0000ff" /><text x="1437.06" y="720.10" font-size="12" fill="#fff" text-anchor="middle" font-weight="normal" >9</text><rect x="1466.31" y="690.80" width="20.20" height="12.00" fill="#8000ff" /><text x="1476.41" y="701.00" font-size="12" fill="#fff" text-anchor="middle" font-weight="normal" >4</text><rect x="1466.31" y="709.90" width="20.20" height="12.00" fill="#0000ff" /><text x="1476.41" y="720.10" font-size="12" fill="#fff" text-anchor="middle" font-weight="normal" >5</text><rect x="1505.67" y="690.80" width="20.20" height="12.00" fill="#8000ff" /><text x="1515.77" y="701.00" font-size="12" fill="#fff" text-anchor="middle" font-weight="normal" >3</text><rect x="1505.67" y="709.90" width="20.20" height="12.00" fill="#8000ff" /><text x="1515.77" y="720.10" font-size="12" fill="#fff" text-anchor="middle" font-weight="normal" >1</text><rect x="1545.02" y="690.80" width="20.20" height="12.00" fill="#0000ff" /><text x="1555.12" y="701.00" font-size="12" fill="#fff" text-anchor="middle" font-weight="normal" >10</text><rect x="1545.02" y="709.90" width="20.20" height="12.00" fill="#0000ff" /><text x="1555.12" y="720.10" font-size="12" fill="#fff" text-anchor="middle" font-weight="normal" >6</text><rect x="1584.38" y="690.80" width="20.20" height="12.00" fill="#0080ff" /><text x="1594.48" y="701.00" font-size="12" fill="#fff" text-anchor="middle" font-weight="normal" >15</text><rect x="1584.38" y="709.90" width="20.20" height="12.00" fill="#0080ff" /><text x="1594.48" y="720.10" font-size="12" fill="#fff" text-anchor="middle" font-weight="normal" >16</text><rect x="1623.73" y="690.80" width="20.20" height="12.00" fill="#0000ff" /><text x="1633.83" y="701.00" font-size="12" fill="#fff" text-anchor="middle" font-weight="normal" >9</text><rect x="1623.73" y="709.90" width="20.20" height="12.00" fill="#0000ff" /><text x="1633.83" y="720.10" font-size="12" fill="#fff" text-anchor="middle" font-weight="normal" >12</text><rect x="1663.09" y="690.80" width="20.20" height="12.00" fill="#8000ff" /><text x="1673.19" y="701.00" font-size="12" fill="#fff" text-anchor="middle" font-weight="normal" >-1</text><rect x="1663.09" y="709.90" width="20.20" height="12.00" fill="#8000ff" /><text x="1673.19" y="720.10" font-size="12" fill="#fff" text-anchor="middle" font-weight="normal" >-1</text><rect x="1702.44" y="690.80" width="20.20" height="12.00" fill="#ff00ff" /><text x="1712.54" y="701.00" font-size="12" fill="#fff" text-anchor="middle" font-weight="normal" >-6</text><rect x="1702.44" y="709.90" width="20.20" height="12.00" fill="#ff00ff" /><text x="1712.54" y="720.10" font-size="12" fill="#fff" text-anchor="middle" font-weight="normal" >-6</text><rect x="1741.80" y="690.80" width="20.20" height="12.00" fill="#8000ff" /><text x="1751.90" y="701.00" font-size="12" fill="#fff" text-anchor="middle" font-weight="normal" >-4</text><rect x="1741.80" y="709.90" width="20.20" height="12.00" fill="#8000ff" /><text x="1751.90" y="720.10" font-size="12" fill="#fff" text-anchor="middle" font-weight="normal" >-1</text><rect x="1781.16" y="690.80" width="20.20" height="12.00" fill="#ff00ff" /><text x="1791.26" y="701.00" font-size="12" fill="#fff" text-anchor="middle" font-weight="normal" >-11</text><rect x="1781.16" y="709.90" width="20.20" height="12.00" fill="#ff00ff" /><text x="1791.26" y="720.10" font-size="12" fill="#fff" text-anchor="middle" font-weight="normal" >-12</text><rect x="1820.51" y="690.80" width="20.20" height="12.00" fill="#ff00ff" /><text x="1830.61" y="701.00" font-size="12" fill="#fff" text-anchor="middle" font-weight="normal" >-9</text><rect x="1820.51" y="709.90" width="20.20" height="12.00" fill="#ff00ff" /><text x="1830.61" y="720.10" font-size="12" fill="#fff" text-anchor="middle" font-weight="normal" >-9</text><rect x="1859.87" y="690.80" width="20.20" height="12.00" fill="#8000ff" /><text x="1869.97" y="701.00" font-size="12" fill="#fff" text-anchor="middle" font-weight="normal" >-4</text><rect x="1859.87" y="709.90" width="20.20" height="12.00" fill="#ff00ff" /><text x="1869.97" y="720.10" font-size="12" fill="#fff" text-anchor="middle" font-weight="normal" >-6</text><rect x="1899.22" y="690.80" width="20.20" height="12.00" fill="#0000ff" /><text x="1909.32" y="701.00" font-size="12" fill="#fff" text-anchor="middle" font-weight="normal" >6</text><rect x="1899.22" y="709.90" width="20.20" height="12.00" fill="#8000ff" /><text x="1909.32" y="720.10" font-size="12" fill="#fff" text-anchor="middle" font-weight="normal" >4</text><rect x="1938.90" y="690.80" width="20.20" height="12.00" fill="#0080ff" /><text x="1949.00" y="701.00" font-size="12" fill="#fff" text-anchor="middle" font-weight="normal" >15</text><rect x="1938.90" y="709.90" width="20.20" height="12.00" fill="#0080ff" /><text x="1949.00" y="720.10" font-size="12" fill="#fff" text-anchor="middle" font-weight="normal" >14</text><rect x="118.00" y="746.50" width="1851.00" height="16.00" fill="#fdf9a0" /><rect x="118.00" y="762.50" width="1851.00" height="15.50" fill="#000" /><rect x="133.00" y="754.30" width="10.00" height="1.50" fill="#111" /><rect x="133.00" y="770.20" width="10.00" height="1.50" fill="#fff" /><text x="177.68" y="759.50" font-size="12" fill="#111" text-anchor="middle" font-weight="normal" >7:43</text><rect x="172.68" y="770.20" width="10.00" height="1.50" fill="#fff" /><rect x="212.03" y="754.30" width="10.00" height="1.50" fill="#111" /><text x="217.03" y="775.00" font-size="12" fill="#fff" text-anchor="middle" font-weight="normal" >4:30</text><rect x="251.39" y="754.30" width="10.00" height="1.50" fill="#111" /><rect x="251.39" y="770.20" width="10.00" height="1.50" fill="#fff" /><text x="295.74" y="759.50" font-size="12" fill="#111" text-anchor="middle" font-weight="normal" >7:43</text><rect x="290.74" y="770.20" width="10.00" height="1.50" fill="#fff" /><rect x="330.10" y="754.30" width="10.00" height="1.50" fill="#111" /><text x="335.10" y="775.00" font-size="12" fill="#fff" text-anchor="middle" font-weight="normal" >4:31</text><rect x="369.46" y="754.30" width="10.00" height="1.50" fill="#111" /><rect x="369.46" y="770.20" width="10.00" height="1.50" fill="#fff" /><text x="413.81" y="759.50" font-size="12" fill="#111" text-anchor="middle" font-weight="normal" >7:43</text><rect x="408.81" y="770.20" width="10.00" height="1.50" fill="#fff" /><rect x="448.17" y="754.30" width="10.00" height="1.50" fill="#111" /><text x="453.17" y="775.00" font-size="12" fill="#fff" text-anchor="middle" font-weight="normal" >4:32</text><rect x="487.52" y="754.30" width="10.00" height="1.50" fill="#111" /><rect x="487.52" y="770.20" width="10.00" height="1.50" fill="#fff" /><text x="531.88" y="759.50" font-size="12" fill="#111" text-anchor="middle" font-weight="normal" >7:41</text><rect x="526.88" y="770.20" width="10.00" height="1.50" fill="#fff" /><rect x="566.23" y="754.30" width="10.00" height="1.50" fill="#111" /><text x="571.23" y="775.00" font-size="12" fill="#fff" text-anchor="middle" font-weight="normal" >4:34</text><rect x="605.59" y="754.30" width="10.00" height="1.50" fill="#111" /><rect x="605.59" y="770.20" width="10.00" height="1.50" fill="#fff" /><text x="649.94" y="759.50" font-size="12" fill="#111" text-anchor="middle" font-weight="normal" >7:41</text><rect x="644.94" y="770.20" width="10.00" height="1.50" fill="#fff" /><rect x="684.30" y="754.30" width="10.00" height="1.50" fill="#111" /><text x="689.30" y="775.00" font-size="12" fill="#fff" text-anchor="middle" font-weight="normal" >4:35</text><rect x="723.66" y="754.30" width="10.00" height="1.50" fill="#111" /><rect x="723.66" y="770.20" width="10.00" height="1.50" fill="#fff" /><text x="768.01" y="759.50" font-size="12" fill="#111" text-anchor="middle" font-weight="normal" >7:41</text><rect x="763.01" y="770.20" width="10.00" height="1.50" fill="#fff" /><rect x="802.37" y="754.30" width="10.00" height="1.50" fill="#111" /><text x="807.37" y="775.00" font-size="12" fill="#fff" text-anchor="middle" font-weight="normal" >4:36</text><rect x="841.72" y="754.30" width="10.00" height="1.50" fill="#111" /><rect x="841.72" y="770.20" width="10.00" height="1.50" fill="#fff" /><text x="886.08" y="759.50" font-size="12" fill="#111" text-anchor="middle" font-weight="normal" >7:41</text><rect x="881.08" y="770.20" width="10.00" height="1.50" fill="#fff" /><rect x="920.43" y="754.30" width="10.00" height="1.50" fill="#111" /><text x="925.43" y="775.00" font-size="12" fill="#fff" text-anchor="middle" font-weight="normal" >4:37</text><rect x="959.79" y="754.30" width="10.00" height="1.50" fill="#111" /><rect x="959.79" y="770.20" width="10.00" height="1.50" fill="#fff" /><text x="1004.14" y="759.50" font-size="12" fill="#111" text-anchor="middle" font-weight="normal" >7:41</text><rect x="999.14" y="770.20" width="10.00" height="1.50" fill="#fff" /><rect x="1038.50" y="754.30" width="10.00" height="1.50" fill="#111" /><text x="1043.50" y="775.00" font-size="12" fill="#fff" text-anchor="middle" font-weight="normal" >4:38</text><rect x="1077.86" y="754.30" width="10.00" height="1.50" fill="#111" /><rect x="1077.86" y="770.20" width="10.00" height="1.50" fill="#fff" /><text x="1122.21" y="759.50" font-size="12" fill="#111" text-anchor="middle" font-weight="normal" >7:39</text><rect x="1117.21" y="770.20" width="10.00" height="1.50" fill="#fff" /><rect x="1156.57" y="754.30" width="10.00" height="1.50" fill="#111" /><text x="1161.57" y="775.00" font-size="12" fill="#fff" text-anchor="middle" font-weight="normal" >4:39</text><rect x="1195.92" y="754.30" width="10.00" height="1.50" fill="#111" /><rect x="1195.92" y="770.20" width="10.00" height="1.50" fill="#fff" /><text x="1240.28" y="759.50" font-size="12" fill="#111" text-anchor="middle" font-weight="normal" >7:39</text><rect x="1235.28" y="770.20" width="10.00" height="1.50" fill="#fff" /><rect x="1274.63" y="754.30" width="10.00" height="1.50" fill="#111" /><text x="1279.63" y="775.00" font-size="12" fill="#fff" text-anchor="middle" font-weight="normal" >4:42</text><rect x="1313.99" y="754.30" width="10.00" height="1.50" fill="#111" /><rect x="1313.99" y="770.20" width="10.00" height="1.50" fill="#fff" /><text x="1358.34" y="759.50" font-size="12" fill="#111" text-anchor="middle" font-weight="normal" >7:39</text><rect x="1353.34" y="770.20" width="10.00" height="1.50" fill="#fff" /><rect x="1392.70" y="754.30" width="10.00" height="1.50" fill="#111" /><text x="1397.70" y="775.00" font-size="12" fill="#fff" text-anchor="middle" font-weight="normal" >4:43</text><rect x="1432.06" y="754.30" width="10.00" height="1.50" fill="#111" /><rect x="1432.06" y="770.20" width="10.00" height="1.50" fill="#fff" /><text x="1476.41" y="759.50" font-size="12" fill="#111" text-anchor="middle" font-weight="normal" >7:37</text><rect x="1471.41" y="770.20" width="10.00" height="1.50" fill="#fff" /><rect x="1510.77" y="754.30" width="10.00" height="1.50" fill="#111" /><text x="1515.77" y="775.00" font-size="12" fill="#fff" text-anchor="middle" font-weight="normal" >4:44</text><rect x="1550.12" y="754.30" width="10.00" height="1.50" fill="#111" /><rect x="1550.12" y="770.20" width="10.00" height="1.50" fill="#fff" /><text x="1594.48" y="759.50" font-size="12" fill="#111" text-anchor="middle" font-weight="normal" >7:37</text><rect x="1589.48" y="770.20" width="10.00" height="1.50" fill="#fff" /><rect x="1628.83" y="754.30" width="10.00" height="1.50" fill="#111" /><text x="1633.83" y="775.00" font-size="12" fill="#fff" text-anchor="middle" font-weight="normal" >4:45</text><rect x="1668.19" y="754.30" width="10.00" height="1.50" fill="#111" /><rect x="1668.19" y="770.20" width="10.00" height="1.50" fill="#fff" /><text x="1712.54" y="759.50" font-size="12" fill="#111" text-anchor="middle" font-weight="normal" >7:35</text><rect x="1707.54" y="770.20" width="10.00" height="1.50" fill="#fff" /><rect x="1746.90" y="754.30" width="10.00" height="1.50" fill="#111" /><text x="1751.90" y="775.00" font-size="12" fill="#fff" text-anchor="middle" font-weight="normal" >4:46</text><rect x="1786.26" y="754.30" width="10.00" height="1.50" fill="#111" /><rect x="1786.26" y="770.20" width="10.00" height="1.50" fill="#fff" /><text x="1830.61" y="759.50" font-size="12" fill="#111" text-anchor="middle" font-weight="normal" >7:35</text><rect x="1825.61" y="770.20" width="10.00" height="1.50" fill="#fff" /><rect x="1864.97" y="754.30" width="10.00" height="1.50" fill="#111" /><text x="1869.97" y="775.00" font-size="12" fill="#fff" text-anchor="middle" font-weight="normal" >4:47</text><rect x="1904.32" y="754.30" width="10.00" height="1.50" fill="#111" /><rect x="1904.32" y="770.20" width="10.00" height="1.50" fill="#fff" /><text x="1949.00" y="759.50" font-size="12" fill="#111" text-anchor="middle" font-weight="normal" >7:35</text><rect x="1944.00" y="770.20" width="10.00" height="1.50" fill="#fff" /><g fill="none" stroke="#111" stroke-width="1.2"><path d="M78.5,760.3 H84 L87.5,757 L91,760.3 H96.5"/><path d="M82.5,757.5 A5,5 0 0 1 92.5,757.5"/><path d="M87.5,748.3 V750.6 M81,751 L82.6,752.6 M94,751 L92.4,752.6 M78.8,757 H80.6 M94.4,757 H96.2"/><path d="M78.5,774.5 H84 L87.5,777.8 L91,774.5 H96.5"/><path d="M82.5,773 A5,5 0 0 1 92.5,773"/><path d="M87.5,764 V766.3 M81,766.5 L82.6,768.1 M94,766.5 L92.4,768.1 M78.8,772.6 H80.6 M94.4,772.6 H96.2"/></g><rect x="118.00" y="58.00" width="1851.00" height="1.00" fill="#b5b5b5" /><rect x="118.00" y="290.00" width="1851.00" height="0.80" fill="#b5b5b5" /><rect x="118.00" y="320.00" width="1851.00" height="1.00" fill="#b5b5b5" /><rect x="118.00" y="350.50" width="1851.00" height="1.00" fill="#b5b5b5" /><rect x="118.00" y="536.60" width="1851.00" height="1.20" fill="#b5b5b5" /><rect x="117.50" y="58.00" width="1.10" height="61.00" fill="#b5b5b5" /><rect x="117.50" y="158.00" width="1.10" height="70.00" fill="#b5b5b5" /><rect x="117.00" y="228.00" width="2.40" height="62.00" fill="#ffffff" /><rect x="117.50" y="228.00" width="1.10" height="62.00" fill="#b5b5b5" /><rect x="117.50" y="290.00" width="1.10" height="30.00" fill="#b5b5b5" /><rect x="117.50" y="320.00" width="1.10" height="217.00" fill="#b5b5b5" /><rect x="117.50" y="537.00" width="1.10" height="209.00" fill="#b5b5b5" /><rect x="117.40" y="746.50" width="1.30" height="31.50" fill="#a8a8a8" /><rect x="157.50" y="58.00" width="1.10" height="61.00" fill="#b5b5b5" /><rect x="157.50" y="158.00" width="1.10" height="70.00" fill="#b5b5b5" /><rect x="157.00" y="228.00" width="2.40" height="62.00" fill="#ffffff" /><rect x="157.50" y="228.00" width="1.10" height="62.00" fill="#b5b5b5" /><rect x="157.50" y="320.00" width="1.10" height="217.00" fill="#b5b5b5" /><rect x="157.50" y="537.00" width="1.10" height="209.00" fill="#c6c6c6" /><rect x="157.40" y="746.50" width="1.30" height="31.50" fill="#a8a8a8" /><rect x="275.57" y="58.00" width="1.10" height="61.00" fill="#b5b5b5" /><rect x="275.57" y="158.00" width="1.10" height="70.00" fill="#b5b5b5" /><rect x="275.07" y="228.00" width="2.40" height="62.00" fill="#ffffff" /><rect x="275.57" y="228.00" width="1.10" height="62.00" fill="#b5b5b5" /><rect x="275.57" y="320.00" width="1.10" height="217.00" fill="#b5b5b5" /><rect x="275.57" y="537.00" width="1.10" height="209.00" fill="#c6c6c6" /><rect x="275.47" y="746.50" width="1.30" height="31.50" fill="#a8a8a8" /><rect x="393.63" y="58.00" width="1.10" height="61.00" fill="#b5b5b5" /><rect x="393.63" y="158.00" width="1.10" height="70.00" fill="#b5b5b5" /><rect x="393.13" y="228.00" width="2.40" height="62.00" fill="#ffffff" /><rect x="393.63" y="228.00" width="1.10" height="62.00" fill="#b5b5b5" /><rect x="393.63" y="320.00" width="1.10" height="217.00" fill="#b5b5b5" /><rect x="393.63" y="537.00" width="1.10" height="209.00" fill="#c6c6c6" /><rect x="393.53" y="746.50" width="1.30" height="31.50" fill="#a8a8a8" /><rect x="511.70" y="58.00" width="1.10" height="61.00" fill="#b5b5b5" /><rect x="511.70" y="158.00" width="1.10" height="70.00" fill="#b5b5b5" /><rect x="511.20" y="228.00" width="2.40" height="62.00" fill="#ffffff" /><rect x="511.70" y="228.00" width="1.10" height="62.00" fill="#b5b5b5" /><rect x="511.70" y="320.00" width="1.10" height="217.00" fill="#b5b5b5" /><rect x="511.70" y="537.00" width="1.10" height="209.00" fill="#c6c6c6" /><rect x="511.60" y="746.50" width="1.30" height="31.50" fill="#a8a8a8" /><rect x="629.77" y="58.00" width="1.10" height="61.00" fill="#b5b5b5" /><rect x="629.77" y="158.00" width="1.10" height="70.00" fill="#b5b5b5" /><rect x="629.27" y="228.00" width="2.40" height="62.00" fill="#ffffff" /><rect x="629.77" y="228.00" width="1.10" height="62.00" fill="#b5b5b5" /><rect x="629.77" y="320.00" width="1.10" height="217.00" fill="#b5b5b5" /><rect x="629.77" y="537.00" width="1.10" height="209.00" fill="#c6c6c6" /><rect x="629.67" y="746.50" width="1.30" height="31.50" fill="#a8a8a8" /><rect x="747.83" y="58.00" width="1.10" height="61.00" fill="#b5b5b5" /><rect x="747.83" y="158.00" width="1.10" height="70.00" fill="#b5b5b5" /><rect x="747.33" y="228.00" width="2.40" height="62.00" fill="#ffffff" /><rect x="747.83" y="228.00" width="1.10" height="62.00" fill="#b5b5b5" /><rect x="747.83" y="320.00" width="1.10" height="217.00" fill="#b5b5b5" /><rect x="747.83" y="537.00" width="1.10" height="209.00" fill="#c6c6c6" /><rect x="747.73" y="746.50" width="1.30" height="31.50" fill="#a8a8a8" /><rect x="865.90" y="58.00" width="1.10" height="61.00" fill="#b5b5b5" /><rect x="865.90" y="158.00" width="1.10" height="70.00" fill="#b5b5b5" /><rect x="865.40" y="228.00" width="2.40" height="62.00" fill="#ffffff" /><rect x="865.90" y="228.00" width="1.10" height="62.00" fill="#b5b5b5" /><rect x="865.90" y="320.00" width="1.10" height="217.00" fill="#b5b5b5" /><rect x="865.90" y="537.00" width="1.10" height="209.00" fill="#c6c6c6" /><rect x="865.80" y="746.50" width="1.30" height="31.50" fill="#a8a8a8" /><rect x="983.97" y="58.00" width="1.10" height="61.00" fill="#b5b5b5" /><rect x="983.97" y="158.00" width="1.10" height="70.00" fill="#b5b5b5" /><rect x="983.47" y="228.00" width="2.40" height="62.00" fill="#ffffff" /><rect x="983.97" y="228.00" width="1.10" height="62.00" fill="#b5b5b5" /><rect x="983.97" y="320.00" width="1.10" height="217.00" fill="#b5b5b5" /><rect x="983.97" y="537.00" width="1.10" height="209.00" fill="#c6c6c6" /><rect x="983.87" y="746.50" width="1.30" height="31.50" fill="#a8a8a8" /><rect x="1102.03" y="58.00" width="1.10" height="61.00" fill="#b5b5b5" /><rect x="1102.03" y="158.00" width="1.10" height="70.00" fill="#b5b5b5" /><rect x="1101.53" y="228.00" width="2.40" height="62.00" fill="#ffffff" /><rect x="1102.03" y="228.00" width="1.10" height="62.00" fill="#b5b5b5" /><rect x="1102.03" y="320.00" width="1.10" height="217.00" fill="#b5b5b5" /><rect x="1102.03" y="537.00" width="1.10" height="209.00" fill="#c6c6c6" /><rect x="1101.93" y="746.50" width="1.30" height="31.50" fill="#a8a8a8" /><rect x="1220.10" y="58.00" width="1.10" height="61.00" fill="#b5b5b5" /><rect x="1220.10" y="158.00" width="1.10" height="70.00" fill="#b5b5b5" /><rect x="1219.60" y="228.00" width="2.40" height="62.00" fill="#ffffff" /><rect x="1220.10" y="228.00" width="1.10" height="62.00" fill="#b5b5b5" /><rect x="1220.10" y="320.00" width="1.10" height="217.00" fill="#b5b5b5" /><rect x="1220.10" y="537.00" width="1.10" height="209.00" fill="#c6c6c6" /><rect x="1220.00" y="746.50" width="1.30" height="31.50" fill="#a8a8a8" /><rect x="1338.17" y="58.00" width="1.10" height="61.00" fill="#b5b5b5" /><rect x="1338.17" y="158.00" width="1.10" height="70.00" fill="#b5b5b5" /><rect x="1337.67" y="228.00" width="2.40" height="62.00" fill="#ffffff" /><rect x="1338.17" y="228.00" width="1.10" height="62.00" fill="#b5b5b5" /><rect x="1338.17" y="320.00" width="1.10" height="217.00" fill="#b5b5b5" /><rect x="1338.17" y="537.00" width="1.10" height="209.00" fill="#c6c6c6" /><rect x="1338.07" y="746.50" width="1.30" height="31.50" fill="#a8a8a8" /><rect x="1456.23" y="58.00" width="1.10" height="61.00" fill="#b5b5b5" /><rect x="1456.23" y="158.00" width="1.10" height="70.00" fill="#b5b5b5" /><rect x="1455.73" y="228.00" width="2.40" height="62.00" fill="#ffffff" /><rect x="1456.23" y="228.00" width="1.10" height="62.00" fill="#b5b5b5" /><rect x="1456.23" y="320.00" width="1.10" height="217.00" fill="#b5b5b5" /><rect x="1456.23" y="537.00" width="1.10" height="209.00" fill="#c6c6c6" /><rect x="1456.13" y="746.50" width="1.30" height="31.50" fill="#a8a8a8" /><rect x="1574.30" y="58.00" width="1.10" height="61.00" fill="#b5b5b5" /><rect x="1574.30" y="158.00" width="1.10" height="70.00" fill="#b5b5b5" /><rect x="1573.80" y="228.00" width="2.40" height="62.00" fill="#ffffff" /><rect x="1574.30" y="228.00" width="1.10" height="62.00" fill="#b5b5b5" /><rect x="1574.30" y="320.00" width="1.10" height="217.00" fill="#b5b5b5" /><rect x="1574.30" y="537.00" width="1.10" height="209.00" fill="#c6c6c6" /><rect x="1574.20" y="746.50" width="1.30" height="31.50" fill="#a8a8a8" /><rect x="1692.37" y="58.00" width="1.10" height="61.00" fill="#b5b5b5" /><rect x="1692.37" y="158.00" width="1.10" height="70.00" fill="#b5b5b5" /><rect x="1691.87" y="228.00" width="2.40" height="62.00" fill="#ffffff" /><rect x="1692.37" y="228.00" width="1.10" height="62.00" fill="#b5b5b5" /><rect x="1692.37" y="320.00" width="1.10" height="217.00" fill="#b5b5b5" /><rect x="1692.37" y="537.00" width="1.10" height="209.00" fill="#c6c6c6" /><rect x="1692.27" y="746.50" width="1.30" height="31.50" fill="#a8a8a8" /><rect x="1810.43" y="58.00" width="1.10" height="61.00" fill="#b5b5b5" /><rect x="1810.43" y="158.00" width="1.10" height="70.00" fill="#b5b5b5" /><rect x="1809.93" y="228.00" width="2.40" height="62.00" fill="#ffffff" /><rect x="1810.43" y="228.00" width="1.10" height="62.00" fill="#b5b5b5" /><rect x="1810.43" y="320.00" width="1.10" height="217.00" fill="#b5b5b5" /><rect x="1810.43" y="537.00" width="1.10" height="209.00" fill="#c6c6c6" /><rect x="1810.33" y="746.50" width="1.30" height="31.50" fill="#a8a8a8" /><rect x="1928.50" y="58.00" width="1.10" height="61.00" fill="#b5b5b5" /><rect x="1928.50" y="158.00" width="1.10" height="70.00" fill="#b5b5b5" /><rect x="1928.00" y="228.00" width="2.40" height="62.00" fill="#ffffff" /><rect x="1928.50" y="228.00" width="1.10" height="62.00" fill="#b5b5b5" /><rect x="1928.50" y="320.00" width="1.10" height="217.00" fill="#b5b5b5" /><rect x="1928.50" y="537.00" width="1.10" height="209.00" fill="#c6c6c6" /><rect x="1928.40" y="746.50" width="1.30" height="31.50" fill="#a8a8a8" /><rect x="1968.00" y="58.00" width="1.10" height="61.00" fill="#b5b5b5" /><rect x="1968.00" y="158.00" width="1.10" height="70.00" fill="#b5b5b5" /><rect x="1967.50" y="228.00" width="2.40" height="62.00" fill="#ffffff" /><rect x="1968.00" y="228.00" width="1.10" height="62.00" fill="#b5b5b5" /><rect x="1968.00" y="290.00" width="1.10" height="30.00" fill="#b5b5b5" /><rect x="1968.00" y="320.00" width="1.10" height="217.00" fill="#b5b5b5" /><rect x="1968.00" y="537.00" width="1.10" height="209.00" fill="#b5b5b5" /><rect x="1967.90" y="746.50" width="1.30" height="31.50" fill="#a8a8a8" /><g transform="translate(87.2,75.8)" fill="#000"><rect x="-1.8" y="-8" width="3.6" height="4.2" rx="0.5" transform="rotate(0)"/><rect x="-1.8" y="-8" width="3.6" height="4.2" rx="0.5" transform="rotate(45)"/><rect x="-1.8" y="-8" width="3.6" height="4.2" rx="0.5" transform="rotate(90)"/><rect x="-1.8" y="-8" width="3.6" height="4.2" rx="0.5" transform="rotate(135)"/><rect x="-1.8" y="-8" width="3.6" height="4.2" rx="0.5" transform="rotate(180)"/><rect x="-1.8" y="-8" width="3.6" height="4.2" rx="0.5" transform="rotate(225)"/><rect x="-1.8" y="-8" width="3.6" height="4.2" rx="0.5" transform="rotate(270)"/><rect x="-1.8" y="-8" width="3.6" height="4.2" rx="0.5" transform="rotate(315)"/><circle r="6"/></g><circle cx="87.2" cy="75.8" r="3.1" fill="#fff"/><text x="69.80" y="94.20" font-size="10.8" fill="#222" text-anchor="start" font-weight="normal" textLength="35" lengthAdjust="spacingAndGlyphs">Change</text><text x="76.70" y="106.40" font-size="10.8" fill="#222" text-anchor="start" font-weight="normal" textLength="21.3" lengthAdjust="spacingAndGlyphs">units</text><text x="78.30" y="212.60" font-size="10.8" fill="#222" text-anchor="start" font-weight="normal" textLength="21" lengthAdjust="spacingAndGlyphs">mph</text><text x="62.70" y="257.90" font-size="10.8" fill="#222" text-anchor="start" font-weight="normal" textLength="49.3" lengthAdjust="spacingAndGlyphs">Snow map</text><text x="75.80" y="267.80" font-size="10.8" fill="#222" text-anchor="start" font-weight="normal" textLength="23" lengthAdjust="spacingAndGlyphs">More</text><g transform="translate(81,336.3)" fill="none" stroke="#dd1020" stroke-width="1.5"><path d="M0,-8.2V8.2M-8.2,0H8.2M-8,-8L8,8M-8,8L8,-8"/><path d="M-8.2,-3.7H-3.7V-8.2M8.2,-3.7H3.7V-8.2M-8.2,3.7H-3.7V8.2M8.2,3.7H3.7V8.2"/></g><text x="93.90" y="340.10" font-size="14" fill="#1a1a26" text-anchor="start" font-weight="bold" textLength="11" lengthAdjust="spacingAndGlyphs">in</text><g fill="#1f55dd"><path d="M83.6,366.3 C82.8,367.4 83.8,370.8 81.3,371.4 C79.2,371.8 78.4,369.8 79.3,368.4 C80.1,367.2 82,366.6 83.6,366.3Z"/><path d="M88.8,363.6 C88.2,364.6 88.9,367.6 86.9,368.1 C85.2,368.5 84.5,366.8 85.2,365.6 C85.9,364.5 87.5,363.9 88.8,363.6Z"/><path d="M82,362.6 C81.8,363.4 82,365 80.8,365.3 C79.8,365.5 79.3,364.6 79.7,363.9 C80.1,363.2 81.2,362.8 82,362.6Z"/></g><text x="91.70" y="370.90" font-size="11" fill="#222" text-anchor="start" font-weight="normal" textLength="7.5" lengthAdjust="spacingAndGlyphs">in</text><text x="71" y="401.6" font-size="10.8" fill="#222" textLength="32.8" lengthAdjust="spacingAndGlyphs">max <tspan font-weight="bold" font-size="11.5">°F</tspan></text><text x="72.8" y="432.5" font-size="10.8" fill="#222" textLength="29.1" lengthAdjust="spacingAndGlyphs">min <tspan font-weight="bold" font-size="11.5">°F</tspan></text><g><rect x="70.6" y="455.2" width="3" height="6.8" rx="1.5" fill="#fff" stroke="#444" stroke-width="0.8"/><circle cx="72.1" cy="462.6" r="2.3" fill="#333"/><rect x="71.5" y="458" width="1.2" height="4" fill="#333"/></g><text x="79.8" y="463.9" font-size="10.8" fill="#222" textLength="31.2" lengthAdjust="spacingAndGlyphs">chill <tspan font-weight="bold" font-size="11.5">°F</tspan></text><text x="67.50" y="494.40" font-size="10.8" fill="#222" text-anchor="start" font-weight="normal" textLength="42.5" lengthAdjust="spacingAndGlyphs">Humid %</text><text x="68.5" y="525.6" font-size="10.8" fill="#222" textLength="40.2" lengthAdjust="spacingAndGlyphs">Freeze <tspan font-weight="bold" font-size="11.5">ft</tspan></text><path fill-rule="evenodd" fill="rgba(50,30,10,0.45)" d="M139.4,433.2 a15.8,15.8 0 1 0 0.01,0 Z M141.2,438.2 L144.4,440.8 L136.2,449 L144.4,457.2 L141.2,459.8 L130.4,449 Z"/></svg></body></html>
